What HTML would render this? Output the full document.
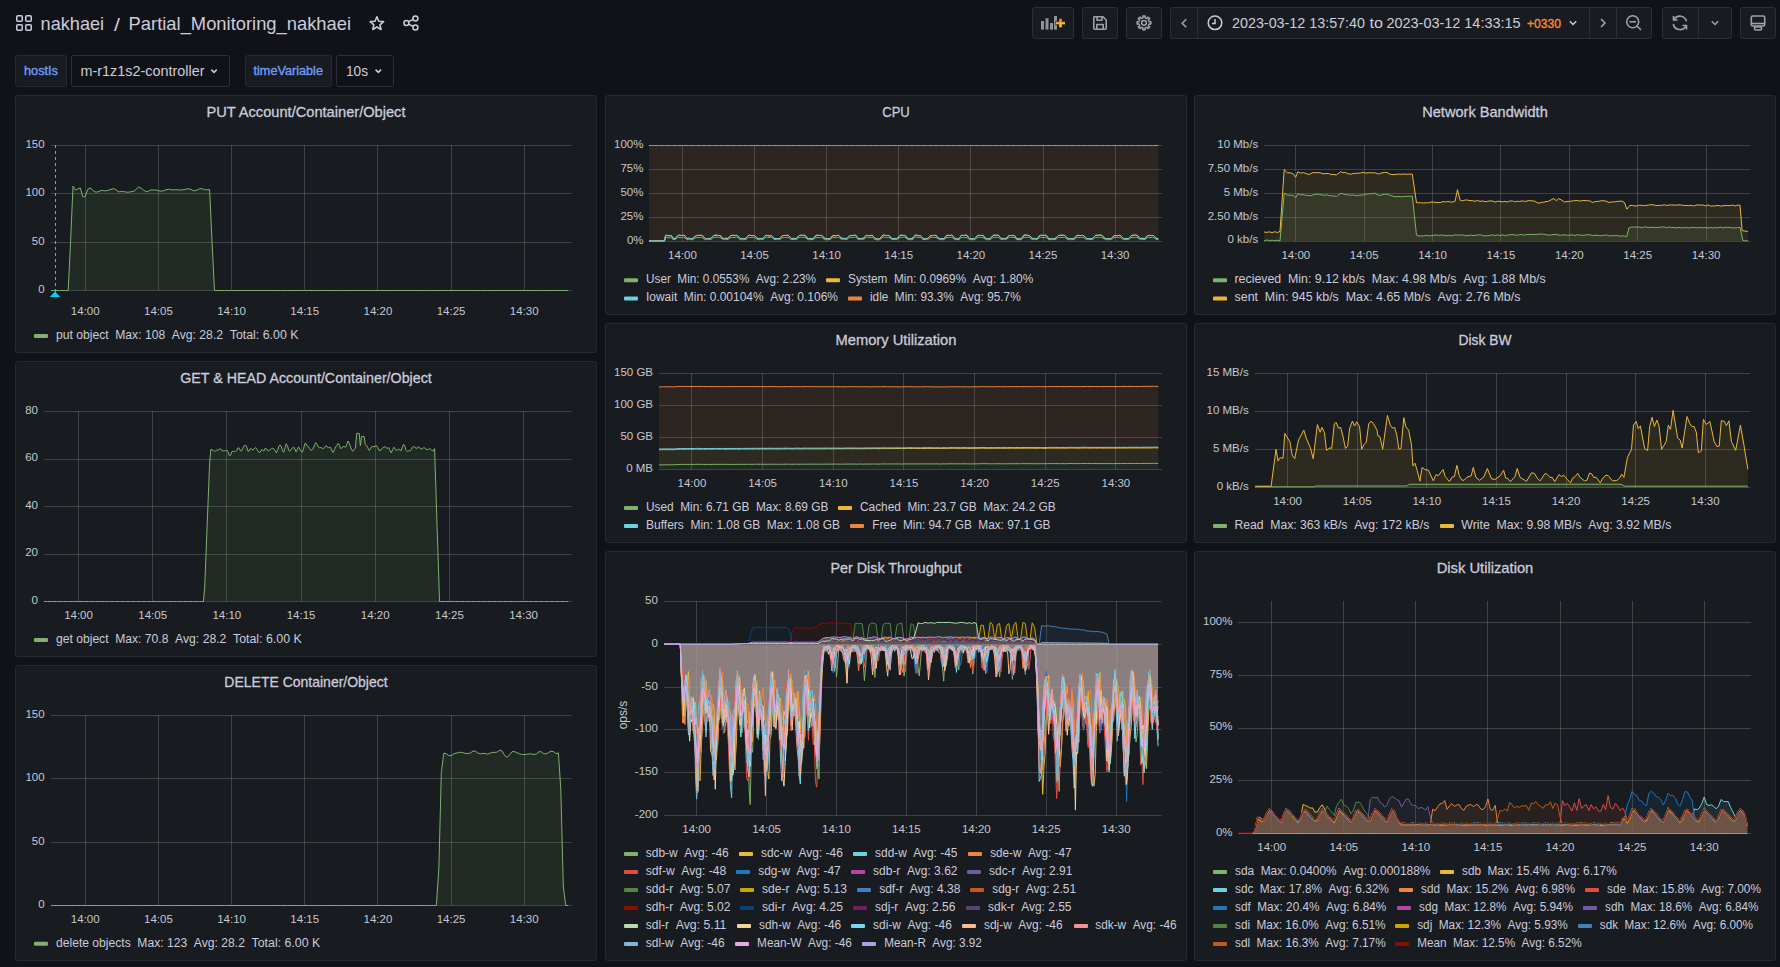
<!DOCTYPE html><html><head><meta charset="utf-8"><title>Partial_Monitoring_nakhaei - Grafana</title><style>html,body{margin:0;padding:0;background:#111217;overflow:hidden;width:1780px;height:967px}svg{display:block;font-family:"Liberation Sans",sans-serif}</style></head><body><svg width="1780" height="967" viewBox="0 0 1780 967" font-family="Liberation Sans, sans-serif"><rect x="0" y="0" width="1780" height="967" rx="0" fill="#111217"/><rect x="16.75" y="15.75" width="5.5" height="5.5" rx="1" fill="none" stroke="#ccccdc" stroke-width="1.5"/><rect x="25.75" y="15.75" width="5.5" height="5.5" rx="1" fill="none" stroke="#ccccdc" stroke-width="1.5"/><rect x="16.75" y="24.75" width="5.5" height="5.5" rx="1" fill="none" stroke="#ccccdc" stroke-width="1.5"/><rect x="25.75" y="24.75" width="5.5" height="5.5" rx="1" fill="none" stroke="#ccccdc" stroke-width="1.5"/><text x="40.60" y="30.00" font-size="18.5" fill="#ccccdc" text-anchor="start" textLength="63.50" lengthAdjust="spacingAndGlyphs">nakhaei</text><text x="114.00" y="31.30" font-size="18.5" fill="#ccccdc" text-anchor="start" textLength="6.00" lengthAdjust="spacingAndGlyphs">/</text><text x="128.60" y="30.00" font-size="18.5" fill="#ccccdc" text-anchor="start" textLength="222.50" lengthAdjust="spacingAndGlyphs">Partial_Monitoring_nakhaei</text><polygon points="376.90,16.80 378.78,21.21 383.56,21.64 379.94,24.79 381.01,29.46 376.90,27.00 372.79,29.46 373.86,24.79 370.24,21.64 375.02,21.21" fill="none" stroke="#ccccdc" stroke-width="1.6" stroke-linejoin="round"/><g fill="none" stroke="#ccccdc" stroke-width="1.5"><circle cx="415.4" cy="18.4" r="2.5"/><circle cx="406.4" cy="22.9" r="2.5"/><circle cx="415.4" cy="27.6" r="2.5"/><path d="M408.6 21.6 L413.2 19.4 M408.6 24.2 L413.2 26.5"/></g><rect x="15.5" y="55.5" width="51" height="31" rx="2" fill="#181b1f" stroke="#26292e" stroke-width="1"/><text x="24.00" y="75.00" font-size="12.5" fill="#6e9fff" text-anchor="start" textLength="34.00" lengthAdjust="spacingAndGlyphs" stroke="#6e9fff" stroke-width="0.35">hostIs</text><rect x="71.5" y="55.5" width="158" height="31" rx="2" fill="#111217" stroke="#2c2f35" stroke-width="1"/><text x="80.50" y="75.50" font-size="14" fill="#ccccdc" text-anchor="start" textLength="124.00" lengthAdjust="spacingAndGlyphs">m-r1z1s2-controller</text><path d="M211.25 69.62 L214.00 72.38 L216.75 69.62" fill="none" stroke="#ccccdc" stroke-width="1.5"/><rect x="245.5" y="55.5" width="86" height="31" rx="2" fill="#181b1f" stroke="#26292e" stroke-width="1"/><text x="253.50" y="75.00" font-size="12.5" fill="#6e9fff" text-anchor="start" textLength="69.50" lengthAdjust="spacingAndGlyphs" stroke="#6e9fff" stroke-width="0.35">timeVariable</text><rect x="336.5" y="55.5" width="57" height="31" rx="2" fill="#111217" stroke="#2c2f35" stroke-width="1"/><text x="346.00" y="75.50" font-size="14" fill="#ccccdc" text-anchor="start" textLength="22.00" lengthAdjust="spacingAndGlyphs">10s</text><path d="M375.55 69.62 L378.30 72.38 L381.05 69.62" fill="none" stroke="#ccccdc" stroke-width="1.5"/><rect x="1032.5" y="7.5" width="41" height="31" rx="2" fill="#181b1f" stroke="#2b2e34" stroke-width="1"/><rect x="1041" y="21" width="3" height="8.600000000000001" rx="0" fill="#8f949c"/><rect x="1045.5" y="18.3" width="3" height="11.3" rx="0" fill="#8f949c"/><rect x="1050" y="23" width="3" height="6.600000000000001" rx="0" fill="#8f949c"/><rect x="1054" y="16" width="3" height="13.600000000000001" rx="0" fill="#8f949c"/><defs><linearGradient id="pg" x1="0" y1="0" x2="0" y2="1"><stop offset="0" stop-color="#f37f3f"/><stop offset="0.5" stop-color="#f9a52b"/><stop offset="1" stop-color="#fdd315"/></linearGradient></defs><path d="M1060.5 18.2 V27.8 M1055.5 23 H1065.5" stroke="#181b1f" stroke-width="4.4"/><rect x="1059.2" y="18.7" width="2.6" height="8.6" fill="url(#pg)"/><rect x="1056" y="21.7" width="9" height="2.6" fill="url(#pg)"/><rect x="1082.5" y="7.5" width="35" height="31" rx="2" fill="#181b1f" stroke="#2b2e34" stroke-width="1"/><g fill="none" stroke="#9fa1a8" stroke-width="1.6" stroke-linejoin="round"><path d="M1094 16.8 H1103 L1106.2 20 V28.2 Q1106.2 29.2 1105.2 29.2 H1094.8 Q1093.8 29.2 1093.8 28.2 V17.8 Q1093.8 16.8 1094.8 16.8 Z"/><path d="M1097 17 V20.2 H1102 V17"/><path d="M1096.8 29 V24.5 H1103.2 V29"/></g><rect x="1126.5" y="7.5" width="35" height="31" rx="2" fill="#181b1f" stroke="#2b2e34" stroke-width="1"/><polygon points="1142.78,15.96 1145.22,15.96 1145.04,17.75 1146.87,18.51 1148.02,17.12 1149.73,18.83 1148.34,19.98 1149.10,21.81 1150.89,21.63 1150.89,24.07 1149.10,23.89 1148.34,25.72 1149.73,26.87 1148.02,28.58 1146.87,27.19 1145.04,27.95 1145.22,29.74 1142.78,29.74 1142.96,27.95 1141.13,27.19 1139.98,28.58 1138.27,26.87 1139.66,25.72 1138.90,23.89 1137.11,24.07 1137.11,21.63 1138.90,21.81 1139.66,19.98 1138.27,18.83 1139.98,17.12 1141.13,18.51 1142.96,17.75" fill="none" stroke="#9fa1a8" stroke-width="1.5" stroke-linejoin="round"/><circle cx="1144.0" cy="22.85" r="2.4" fill="none" stroke="#9fa1a8" stroke-width="1.5"/><rect x="1170.5" y="7.5" width="481" height="31" rx="2" fill="#181b1f" stroke="#2b2e34" stroke-width="1"/><path d="M1197.5 8 V38 M1589.5 8 V38 M1616.5 8 V38" stroke="#2b2e34" stroke-width="1"/><path d="M1186.2 19.2 L1182.2 23.2 L1186.2 27.2" fill="none" stroke="#9fa1a8" stroke-width="1.6"/><g fill="none" stroke="#ccccdc" stroke-width="1.5"><circle cx="1215" cy="22.8" r="6.8"/><path d="M1215 19 V23.5 H1212"/></g><text x="1232.00" y="28.00" font-size="14" fill="#ccccdc" text-anchor="start" textLength="133.00" lengthAdjust="spacingAndGlyphs">2023-03-12 13:57:40</text><text x="1369.50" y="28.00" font-size="14" fill="#ccccdc" text-anchor="start" textLength="13.50" lengthAdjust="spacingAndGlyphs">to</text><text x="1386.50" y="28.00" font-size="14" fill="#ccccdc" text-anchor="start" textLength="134.00" lengthAdjust="spacingAndGlyphs">2023-03-12 14:33:15</text><text x="1527.00" y="27.50" font-size="12.5" fill="#ff8833" text-anchor="start" textLength="34.00" lengthAdjust="spacingAndGlyphs" stroke="#ff8833" stroke-width="0.35">+0330</text><path d="M1569.75 21.18 L1573.00 24.43 L1576.25 21.18" fill="none" stroke="#ccccdc" stroke-width="1.5"/><path d="M1601 19 L1605 23 L1601 27" fill="none" stroke="#9fa1a8" stroke-width="1.6"/><g fill="none" stroke="#9fa1a8" stroke-width="1.6"><circle cx="1632.7" cy="21.8" r="6"/><path d="M1629.5 21.8 H1636"/><path d="M1637.2 26.3 L1641 30"/></g><rect x="1662.5" y="7.5" width="69" height="31" rx="2" fill="#181b1f" stroke="#2b2e34" stroke-width="1"/><path d="M1698.5 8 V38" stroke="#2b2e34" stroke-width="1"/><g fill="none" stroke="#9fa1a8" stroke-width="1.6"><path d="M1674 19.5 A6.8 6.8 0 0 1 1686.5 21.5"/><path d="M1686 26 A6.8 6.8 0 0 1 1673.3 24"/><path d="M1673.5 16 V20 H1677.5" /><path d="M1686.5 29.5 V25.5 H1682.5"/></g><path d="M1711.75 21.18 L1715.00 24.43 L1718.25 21.18" fill="none" stroke="#9fa1a8" stroke-width="1.5"/><rect x="1740.5" y="7.5" width="35" height="31" rx="2" fill="#181b1f" stroke="#2b2e34" stroke-width="1"/><g fill="none" stroke="#9fa1a8" stroke-width="1.6"><rect x="1751.3" y="16" width="13.4" height="10" rx="1.5"/><path d="M1751.3 23.5 H1764.7"/><rect x="1754.5" y="27" width="7" height="3" rx="1"/></g><rect x="15.5" y="95.5" width="581" height="257" rx="2" fill="#181b1f" stroke="#26292e" stroke-width="1"/><text x="306.00" y="117.00" font-size="15" fill="#ccccdc" text-anchor="middle" textLength="199.00" lengthAdjust="spacingAndGlyphs" stroke="#ccccdc" stroke-width="0.3">PUT Account/Container/Object</text><rect x="15.5" y="361.5" width="581" height="295" rx="2" fill="#181b1f" stroke="#26292e" stroke-width="1"/><text x="306.00" y="383.00" font-size="15" fill="#ccccdc" text-anchor="middle" textLength="251.50" lengthAdjust="spacingAndGlyphs" stroke="#ccccdc" stroke-width="0.3">GET &amp; HEAD Account/Container/Object</text><rect x="15.5" y="665.5" width="581" height="295" rx="2" fill="#181b1f" stroke="#26292e" stroke-width="1"/><text x="306.00" y="687.00" font-size="15" fill="#ccccdc" text-anchor="middle" textLength="163.30" lengthAdjust="spacingAndGlyphs" stroke="#ccccdc" stroke-width="0.3">DELETE Container/Object</text><rect x="605.5" y="95.5" width="581" height="219" rx="2" fill="#181b1f" stroke="#26292e" stroke-width="1"/><text x="896.00" y="117.00" font-size="15" fill="#ccccdc" text-anchor="middle" textLength="27.50" lengthAdjust="spacingAndGlyphs" stroke="#ccccdc" stroke-width="0.3">CPU</text><rect x="605.5" y="323.5" width="581" height="219" rx="2" fill="#181b1f" stroke="#26292e" stroke-width="1"/><text x="896.00" y="345.00" font-size="15" fill="#ccccdc" text-anchor="middle" textLength="121.00" lengthAdjust="spacingAndGlyphs" stroke="#ccccdc" stroke-width="0.3">Memory Utilization</text><rect x="605.5" y="551.5" width="581" height="409" rx="2" fill="#181b1f" stroke="#26292e" stroke-width="1"/><text x="896.00" y="573.00" font-size="15" fill="#ccccdc" text-anchor="middle" textLength="131.00" lengthAdjust="spacingAndGlyphs" stroke="#ccccdc" stroke-width="0.3">Per Disk Throughput</text><rect x="1194.5" y="95.5" width="581" height="219" rx="2" fill="#181b1f" stroke="#26292e" stroke-width="1"/><text x="1485.00" y="117.00" font-size="15" fill="#ccccdc" text-anchor="middle" textLength="125.50" lengthAdjust="spacingAndGlyphs" stroke="#ccccdc" stroke-width="0.3">Network Bandwidth</text><rect x="1194.5" y="323.5" width="581" height="219" rx="2" fill="#181b1f" stroke="#26292e" stroke-width="1"/><text x="1485.00" y="345.00" font-size="15" fill="#ccccdc" text-anchor="middle" textLength="53.00" lengthAdjust="spacingAndGlyphs" stroke="#ccccdc" stroke-width="0.3">Disk BW</text><rect x="1194.5" y="551.5" width="581" height="409" rx="2" fill="#181b1f" stroke="#26292e" stroke-width="1"/><text x="1485.00" y="573.00" font-size="15" fill="#ccccdc" text-anchor="middle" textLength="96.60" lengthAdjust="spacingAndGlyphs" stroke="#ccccdc" stroke-width="0.3">Disk Utilization</text><path d="M51.1 290.5H571.8M51.1 242.5H571.8M51.1 193.5H571.8M51.1 145.5H571.8M85.5 145.0V290.5M158.5 145.0V290.5M231.5 145.0V290.5M304.5 145.0V290.5M377.5 145.0V290.5M451.5 145.0V290.5M524.5 145.0V290.5" stroke="#9b9b9b" stroke-opacity="0.3" stroke-width="1" fill="none"/><text x="44.60" y="292.90" font-size="11.5" fill="#c7c8d0" text-anchor="end">0</text><text x="44.60" y="244.57" font-size="11.5" fill="#c7c8d0" text-anchor="end">50</text><text x="44.60" y="196.23" font-size="11.5" fill="#c7c8d0" text-anchor="end">100</text><text x="44.60" y="147.90" font-size="11.5" fill="#c7c8d0" text-anchor="end">150</text><text x="85.24" y="315.20" font-size="11.5" fill="#c7c8d0" text-anchor="middle">14:00</text><text x="158.41" y="315.20" font-size="11.5" fill="#c7c8d0" text-anchor="middle">14:05</text><text x="231.58" y="315.20" font-size="11.5" fill="#c7c8d0" text-anchor="middle">14:10</text><text x="304.74" y="315.20" font-size="11.5" fill="#c7c8d0" text-anchor="middle">14:15</text><text x="377.91" y="315.20" font-size="11.5" fill="#c7c8d0" text-anchor="middle">14:20</text><text x="451.08" y="315.20" font-size="11.5" fill="#c7c8d0" text-anchor="middle">14:25</text><text x="524.24" y="315.20" font-size="11.5" fill="#c7c8d0" text-anchor="middle">14:30</text><clipPath id="c1"><rect x="51.1" y="144.0" width="520.7" height="147.5"/></clipPath><path d="M51.1 290.5l2.4 0 2.5 0 2.4 0 2.5 0 2.4 0 2.4 0 2.5 0 2.4-49.3 2.4-55.1 2.5 4 2.4-1.3 2.5-.8 2.4 8.7 2.4 0 2.5-7.3 2.4-1.4 2.5 1.8 2.4 2.2 2.4 0 2.5-1.1 2.4-.5 2.5 .4 2.4-.2 2.4-.8 2.5-.8 2.4-.2 2.4 1.8 2.5 1.3 2.4-.5 2.5 .3 2.4 .5 2.4-.1 2.5-.5 2.4-.4 2.5-2.3 2.4-2 2.4 1.4 2.5 2 2.4 1.3 2.5-.5 2.4-1.2 2.4 .1 2.5 .1 2.4 .6 2.4 .5 2.5-.4 2.4-.8 2.5-.8 2.4 .4 2.4 .4 2.5-.4 2.4 .2 2.5 .3 2.4-.3 2.4-.4 2.5-.6 2.4 .2 2.5 1.4 2.4 .4 2.4-1 2.5-1.1 2.4 0 2.4 1 2.5 .1 2.4-.3 2.5 53.3 2.4 47.7 2.4 0 2.5 0 2.4 0 2.5 0 2.4 0 2.4 0 2.5 0 2.4 0 2.5 0 2.4 0 2.4 0 2.5 0 2.4 0 2.4 0 2.5 0 2.4 0 2.5 0 2.4 0 2.4 0 2.5 0 2.4 0 2.5 0 2.4 0 2.4 0 2.5 0 2.4 0 2.5 0 2.4 0 2.4 0 2.5 0 2.4 0 2.4 0 2.5 0 2.4 0 2.5 0 2.4 0 2.4 0 2.5 0 2.4 0 2.5 0 2.4 0 2.4 0 2.5 0 2.4 0 2.5 0 2.4 0 2.4 0 2.5 0 2.4 0 2.4 0 2.5 0 2.4 0 2.5 0 2.4 0 2.4 0 2.5 0 2.4 0 2.5 0 2.4 0 2.4 0 2.5 0 2.4 0 2.5 0 2.4 0 2.4 0 2.5 0 2.4 0 2.4 0 2.5 0 2.4 0 2.5 0 2.4 0 2.4 0 2.5 0 2.4 0 2.5 0 2.4 0 2.4 0 2.5 0 2.4 0 2.5 0 2.4 0 2.4 0 2.5 0 2.4 0 2.4 0 2.5 0 2.4 0 2.5 0 2.4 0 2.4 0 2.5 0 2.4 0 2.5 0 2.4 0 2.4 0 2.5 0 2.4 0 2.5 0 2.4 0 2.4 0 2.5 0 2.4 0 2.4 0 2.5 0 2.4 0 2.5 0 2.4 0 2.4 0 2.5 0 2.4 0 2.5 0 2.4 0 2.4 0 2.5 0 2.4 0 2.5 0 2.4 0 2.4 0 2.5 0 2.4 0 2.4 0 2.5 0 2.4 0 2.5 0 2.4 0 2.4 0 2.5 0 2.4 0 2.5 0 2.4 0 2.4 0 2.5 0 2.4 0 2.5 0 2.4 0 2.4 0 2.5 0 2.4 0 2.4 0 2.5 0 2.4 0 2.5 0 2.4 0 2.4 0 0 0-517 0Z" fill="#7EB26D" fill-opacity="0.1" clip-path="url(#c1)"/><path d="M51.1 290.5l2.4 0 2.5 0 2.4 0 2.5 0 2.4 0 2.4 0 2.5 0 2.4-49.3 2.4-55.1 2.5 4 2.4-1.3 2.5-.8 2.4 8.7 2.4 0 2.5-7.3 2.4-1.4 2.5 1.8 2.4 2.2 2.4 0 2.5-1.1 2.4-.5 2.5 .4 2.4-.2 2.4-.8 2.5-.8 2.4-.2 2.4 1.8 2.5 1.3 2.4-.5 2.5 .3 2.4 .5 2.4-.1 2.5-.5 2.4-.4 2.5-2.3 2.4-2 2.4 1.4 2.5 2 2.4 1.3 2.5-.5 2.4-1.2 2.4 .1 2.5 .1 2.4 .6 2.4 .5 2.5-.4 2.4-.8 2.5-.8 2.4 .4 2.4 .4 2.5-.4 2.4 .2 2.5 .3 2.4-.3 2.4-.4 2.5-.6 2.4 .2 2.5 1.4 2.4 .4 2.4-1 2.5-1.1 2.4 0 2.4 1 2.5 .1 2.4-.3 2.5 53.3 2.4 47.7 2.4 0 2.5 0 2.4 0 2.5 0 2.4 0 2.4 0 2.5 0 2.4 0 2.5 0 2.4 0 2.4 0 2.5 0 2.4 0 2.4 0 2.5 0 2.4 0 2.5 0 2.4 0 2.4 0 2.5 0 2.4 0 2.5 0 2.4 0 2.4 0 2.5 0 2.4 0 2.5 0 2.4 0 2.4 0 2.5 0 2.4 0 2.4 0 2.5 0 2.4 0 2.5 0 2.4 0 2.4 0 2.5 0 2.4 0 2.5 0 2.4 0 2.4 0 2.5 0 2.4 0 2.5 0 2.4 0 2.4 0 2.5 0 2.4 0 2.4 0 2.5 0 2.4 0 2.5 0 2.4 0 2.4 0 2.5 0 2.4 0 2.5 0 2.4 0 2.4 0 2.5 0 2.4 0 2.5 0 2.4 0 2.4 0 2.5 0 2.4 0 2.4 0 2.5 0 2.4 0 2.5 0 2.4 0 2.4 0 2.5 0 2.4 0 2.5 0 2.4 0 2.4 0 2.5 0 2.4 0 2.5 0 2.4 0 2.4 0 2.5 0 2.4 0 2.4 0 2.5 0 2.4 0 2.5 0 2.4 0 2.4 0 2.5 0 2.4 0 2.5 0 2.4 0 2.4 0 2.5 0 2.4 0 2.5 0 2.4 0 2.4 0 2.5 0 2.4 0 2.4 0 2.5 0 2.4 0 2.5 0 2.4 0 2.4 0 2.5 0 2.4 0 2.5 0 2.4 0 2.4 0 2.5 0 2.4 0 2.5 0 2.4 0 2.4 0 2.5 0 2.4 0 2.4 0 2.5 0 2.4 0 2.5 0 2.4 0 2.4 0 2.5 0 2.4 0 2.5 0 2.4 0 2.4 0 2.5 0 2.4 0 2.5 0 2.4 0 2.4 0 2.5 0 2.4 0 2.4 0 2.5 0 2.4 0 2.5 0 2.4 0 2.4 0" stroke="#7EB26D" fill="none" clip-path="url(#c1)"/><path d="M55.5 145V292" stroke="#00d3ff" stroke-width="1" stroke-dasharray="3,3"/><polygon points="55,291.5 60.2,297 49.8,297" fill="#00d3ff"/><rect x="34" y="334" width="14" height="4" rx="1" fill="#7EB26D"/><text x="56.00" y="339.00" font-size="12" fill="#ccccdc" text-anchor="start" textLength="52.59" lengthAdjust="spacingAndGlyphs">put object</text><text x="115.26" y="339.00" font-size="12" fill="#ccccdc" text-anchor="start" textLength="49.89" lengthAdjust="spacingAndGlyphs">Max: 108</text><text x="171.82" y="339.00" font-size="12" fill="#ccccdc" text-anchor="start" textLength="51.24" lengthAdjust="spacingAndGlyphs">Avg: 28.2</text><text x="229.73" y="339.00" font-size="12" fill="#ccccdc" text-anchor="start" textLength="68.77" lengthAdjust="spacingAndGlyphs">Total: 6.00 K</text><path d="M43.9 601.5H571.8M43.9 554.5H571.8M43.9 506.5H571.8M43.9 459.5H571.8M43.9 411.5H571.8M78.5 411.0V601.5M152.5 411.0V601.5M226.5 411.0V601.5M301.5 411.0V601.5M375.5 411.0V601.5M449.5 411.0V601.5M523.5 411.0V601.5" stroke="#9b9b9b" stroke-opacity="0.3" stroke-width="1" fill="none"/><text x="38.00" y="603.90" font-size="11.5" fill="#c7c8d0" text-anchor="end">0</text><text x="38.00" y="556.40" font-size="11.5" fill="#c7c8d0" text-anchor="end">20</text><text x="38.00" y="508.90" font-size="11.5" fill="#c7c8d0" text-anchor="end">40</text><text x="38.00" y="461.40" font-size="11.5" fill="#c7c8d0" text-anchor="end">60</text><text x="38.00" y="413.90" font-size="11.5" fill="#c7c8d0" text-anchor="end">80</text><text x="78.52" y="619.20" font-size="11.5" fill="#c7c8d0" text-anchor="middle">14:00</text><text x="152.69" y="619.20" font-size="11.5" fill="#c7c8d0" text-anchor="middle">14:05</text><text x="226.87" y="619.20" font-size="11.5" fill="#c7c8d0" text-anchor="middle">14:10</text><text x="301.05" y="619.20" font-size="11.5" fill="#c7c8d0" text-anchor="middle">14:15</text><text x="375.23" y="619.20" font-size="11.5" fill="#c7c8d0" text-anchor="middle">14:20</text><text x="449.41" y="619.20" font-size="11.5" fill="#c7c8d0" text-anchor="middle">14:25</text><text x="523.58" y="619.20" font-size="11.5" fill="#c7c8d0" text-anchor="middle">14:30</text><clipPath id="c2"><rect x="43.9" y="410.0" width="527.9" height="192.5"/></clipPath><path d="M43.9 601.5l1.2 0 1.3 0 1.2 0 1.2 0 1.3 0 1.2 0 1.3 0 1.2 0 1.2 0 1.3 0 1.2 0 1.2 0 1.3 0 1.2 0 1.2 0 1.3 0 1.2 0 1.3 0 1.2 0 1.2 0 1.3 0 1.2 0 1.2 0 1.3 0 1.2 0 1.2 0 1.3 0 1.2 0 1.3 0 1.2 0 1.2 0 1.3 0 1.2 0 1.2 0 1.3 0 1.2 0 1.2 0 1.3 0 1.2 0 1.3 0 1.2 0 1.2 0 1.3 0 1.2 0 1.2 0 1.3 0 1.2 0 1.2 0 1.3 0 1.2 0 1.3 0 1.2 0 1.2 0 1.3 0 1.2 0 1.2 0 1.3 0 1.2 0 1.2 0 1.3 0 1.2 0 1.3 0 1.2 0 1.2 0 1.3 0 1.2 0 1.2 0 1.3 0 1.2 0 1.2 0 1.3 0 1.2 0 1.2 0 1.3 0 1.2 0 1.3 0 1.2 0 1.2 0 1.3 0 1.2 0 1.2 0 1.3 0 1.2 0 1.2 0 1.3 0 1.2 0 1.3 0 1.2 0 1.2 0 1.3 0 1.2 0 1.2 0 1.3 0 1.2 0 1.2 0 1.3 0 1.2 0 1.3 0 1.2 0 1.2 0 1.3 0 1.2 0 1.2 0 1.3 0 1.2 0 1.2 0 1.3 0 1.2 0 1.3 0 1.2 0 1.2 0 1.3 0 1.2 0 1.2 0 1.3 0 1.2 0 1.2 0 1.3 0 1.2 0 1.3 0 1.2 0 1.2 0 1.3 0 1.2 0 1.2 0 1.3 0 1.2 0 1.2 0 1.3 0 1.2-12.6 1.3-31.6 1.2-31 1.2-30.1 1.3-32.6 1.2-14.2 1.2 .4 1.3 .5 1.2 1 1.2-.6 1.3-.9 1.2 .3 1.3-1.2 1.2 0 1.2 1.6 1.3 .5 1.2-.2 1.2-.4 1.3-.2 1.2 1.8 1.2 3.6 1.3-.4 1.2-3.5 1.3-.6 1.2 .4 1.2 0 1.3-1.1 1.2-2.7 1.2 .5 1.3 2.6 1.2-.1 1.2-2.7 1.3-2.2 1.2-.8 1.3 1.9 1.2 4.1 1.2 0 1.3-2.6 1.2 .7 1.2 .9 1.3-1.1 1.2-1.3 1.2 .7 1.3 2.5 1.2 1.7 1.3-.5 1.2-2.6 1.2 .6 1.3 .9 1.2-2.7 1.2 .3 1.3 2.2 1.2 0 1.2-1 1.3-1.2 1.2-.2 1.3 .4 1.2 1.6 1.2 2.6 1.3-2.4 1.2-4.2 1.2-1.4 1.3 1.7 1.2 4.1 1.2 1.6 1.3-4.4 1.2-4.2 1.3 2.2 1.2 4.5 1.2 .9 1.3-2 1.2-1.4 1.2-.9 1.3 2 1.2 2.9 1.2-2.6 1.3-2.4 1.2 2.2 1.3 2.3 1.2 .7 1.2-3 1.3-5.5 1.2 0 1.2 2.6 1.3 .5 1.2 2.1 1.2 1.5 1.3-.6 1.2-1.6 1.2-3.3 1.3-2.1 1.2 1.9 1.3 2.5 1.2 .6 1.2-.1 1.3 .4 1.2 .7 1.2-1.1 1.3-1.9 1.2 .6 1.2 1.6 1.3-.5 1.2 .1 1.3 3.2 1.2 1.8 1.2-2.8 1.3-2.8 1.2-1.6 1.2-2 1.3 1.9 1.2 3.4 1.2-.5 1.3-1.6 1.2 .1 1.3 .7 1.2-2.9 1.2-3.4 1.3 2.2 1.2 3.8 1.2 3 1.3 1.2 1.2-1.8 1.2-1.1 1.3-14.9 1.2 0 1.3 0 1.2 12.3 1.2-9.3 1.3 0 1.2 0 1.2 8.1 1.3 .8 1.2 2.4 1.2 2.6 1.3-.8 1.2-2.7 1.3-.3 1.2 .4 1.2-1 1.3-.3 1.2 1.8 1.2 2.8 1.3 .5 1.2-1.9 1.2-.8 1.3-.8 1.2-.7 1.3 1.6 1.2 .1 1.2-.6 1.3 3.1 1.2 2.2 1.2-3 1.3-2.6 1.2 1 1.2 2.1 1.3-.2 1.2-1.4 1.3 1.6 1.2 .3 1.2-3.8 1.3-2.6 1.2 2.1 1.2 3.9 1.3 1.1 1.2-.6 1.2 0 1.3-.9 1.2-2.8 1.3-.6 1.2 .9 1.2 .6 1.3 .3 1.2-1.7 1.2 .9 1.3 1.9 1.2-.7 1.2-.9 1.3 .1 1.2 1.1 1.3 .8 1.2-.5 1.2-.7 1.3 .7 1.2 1.5 1.2 .1 1.3-2.4 1.2 37.7 1.2 38.7 1.3 37.9 1.2 38.7 1.3 0 1.2 0 1.2 0 1.3 0 1.2 0 1.2 0 1.3 0 1.2 0 1.2 0 1.3 0 1.2 0 1.3 0 1.2 0 1.2 0 1.3 0 1.2 0 1.2 0 1.3 0 1.2 0 1.2 0 1.3 0 1.2 0 1.3 0 1.2 0 1.2 0 1.3 0 1.2 0 1.2 0 1.3 0 1.2 0 1.2 0 1.3 0 1.2 0 1.3 0 1.2 0 1.2 0 1.3 0 1.2 0 1.2 0 1.3 0 1.2 0 1.2 0 1.3 0 1.2 0 1.2 0 1.3 0 1.2 0 1.3 0 1.2 0 1.2 0 1.3 0 1.2 0 1.2 0 1.3 0 1.2 0 1.2 0 1.3 0 1.2 0 1.3 0 1.2 0 1.2 0 1.3 0 1.2 0 1.2 0 1.3 0 1.2 0 1.2 0 1.3 0 1.2 0 1.3 0 1.2 0 1.2 0 1.3 0 1.2 0 1.2 0 1.3 0 1.2 0 1.2 0 1.3 0 1.2 0 1.3 0 1.2 0 1.2 0 1.3 0 1.2 0 1.2 0 1.3 0 1.2 0 1.2 0 1.3 0 1.2 0 1.3 0 1.2 0 1.2 0 1.3 0 1.2 0 1.2 0 1.3 0 1.2 0 1.2 0 1.3 0 1.2 0 1.3 0 1.2 0 0 0-524.2 0Z" fill="#7EB26D" fill-opacity="0.1" clip-path="url(#c2)"/><path d="M43.9 601.5l1.2 0 1.3 0 1.2 0 1.2 0 1.3 0 1.2 0 1.3 0 1.2 0 1.2 0 1.3 0 1.2 0 1.2 0 1.3 0 1.2 0 1.2 0 1.3 0 1.2 0 1.3 0 1.2 0 1.2 0 1.3 0 1.2 0 1.2 0 1.3 0 1.2 0 1.2 0 1.3 0 1.2 0 1.3 0 1.2 0 1.2 0 1.3 0 1.2 0 1.2 0 1.3 0 1.2 0 1.2 0 1.3 0 1.2 0 1.3 0 1.2 0 1.2 0 1.3 0 1.2 0 1.2 0 1.3 0 1.2 0 1.2 0 1.3 0 1.2 0 1.3 0 1.2 0 1.2 0 1.3 0 1.2 0 1.2 0 1.3 0 1.2 0 1.2 0 1.3 0 1.2 0 1.3 0 1.2 0 1.2 0 1.3 0 1.2 0 1.2 0 1.3 0 1.2 0 1.2 0 1.3 0 1.2 0 1.2 0 1.3 0 1.2 0 1.3 0 1.2 0 1.2 0 1.3 0 1.2 0 1.2 0 1.3 0 1.2 0 1.2 0 1.3 0 1.2 0 1.3 0 1.2 0 1.2 0 1.3 0 1.2 0 1.2 0 1.3 0 1.2 0 1.2 0 1.3 0 1.2 0 1.3 0 1.2 0 1.2 0 1.3 0 1.2 0 1.2 0 1.3 0 1.2 0 1.2 0 1.3 0 1.2 0 1.3 0 1.2 0 1.2 0 1.3 0 1.2 0 1.2 0 1.3 0 1.2 0 1.2 0 1.3 0 1.2 0 1.3 0 1.2 0 1.2 0 1.3 0 1.2 0 1.2 0 1.3 0 1.2 0 1.2 0 1.3 0 1.2-12.6 1.3-31.6 1.2-31 1.2-30.1 1.3-32.6 1.2-14.2 1.2 .4 1.3 .5 1.2 1 1.2-.6 1.3-.9 1.2 .3 1.3-1.2 1.2 0 1.2 1.6 1.3 .5 1.2-.2 1.2-.4 1.3-.2 1.2 1.8 1.2 3.6 1.3-.4 1.2-3.5 1.3-.6 1.2 .4 1.2 0 1.3-1.1 1.2-2.7 1.2 .5 1.3 2.6 1.2-.1 1.2-2.7 1.3-2.2 1.2-.8 1.3 1.9 1.2 4.1 1.2 0 1.3-2.6 1.2 .7 1.2 .9 1.3-1.1 1.2-1.3 1.2 .7 1.3 2.5 1.2 1.7 1.3-.5 1.2-2.6 1.2 .6 1.3 .9 1.2-2.7 1.2 .3 1.3 2.2 1.2 0 1.2-1 1.3-1.2 1.2-.2 1.3 .4 1.2 1.6 1.2 2.6 1.3-2.4 1.2-4.2 1.2-1.4 1.3 1.7 1.2 4.1 1.2 1.6 1.3-4.4 1.2-4.2 1.3 2.2 1.2 4.5 1.2 .9 1.3-2 1.2-1.4 1.2-.9 1.3 2 1.2 2.9 1.2-2.6 1.3-2.4 1.2 2.2 1.3 2.3 1.2 .7 1.2-3 1.3-5.5 1.2 0 1.2 2.6 1.3 .5 1.2 2.1 1.2 1.5 1.3-.6 1.2-1.6 1.2-3.3 1.3-2.1 1.2 1.9 1.3 2.5 1.2 .6 1.2-.1 1.3 .4 1.2 .7 1.2-1.1 1.3-1.9 1.2 .6 1.2 1.6 1.3-.5 1.2 .1 1.3 3.2 1.2 1.8 1.2-2.8 1.3-2.8 1.2-1.6 1.2-2 1.3 1.9 1.2 3.4 1.2-.5 1.3-1.6 1.2 .1 1.3 .7 1.2-2.9 1.2-3.4 1.3 2.2 1.2 3.8 1.2 3 1.3 1.2 1.2-1.8 1.2-1.1 1.3-14.9 1.2 0 1.3 0 1.2 12.3 1.2-9.3 1.3 0 1.2 0 1.2 8.1 1.3 .8 1.2 2.4 1.2 2.6 1.3-.8 1.2-2.7 1.3-.3 1.2 .4 1.2-1 1.3-.3 1.2 1.8 1.2 2.8 1.3 .5 1.2-1.9 1.2-.8 1.3-.8 1.2-.7 1.3 1.6 1.2 .1 1.2-.6 1.3 3.1 1.2 2.2 1.2-3 1.3-2.6 1.2 1 1.2 2.1 1.3-.2 1.2-1.4 1.3 1.6 1.2 .3 1.2-3.8 1.3-2.6 1.2 2.1 1.2 3.9 1.3 1.1 1.2-.6 1.2 0 1.3-.9 1.2-2.8 1.3-.6 1.2 .9 1.2 .6 1.3 .3 1.2-1.7 1.2 .9 1.3 1.9 1.2-.7 1.2-.9 1.3 .1 1.2 1.1 1.3 .8 1.2-.5 1.2-.7 1.3 .7 1.2 1.5 1.2 .1 1.3-2.4 1.2 37.7 1.2 38.7 1.3 37.9 1.2 38.7 1.3 0 1.2 0 1.2 0 1.3 0 1.2 0 1.2 0 1.3 0 1.2 0 1.2 0 1.3 0 1.2 0 1.3 0 1.2 0 1.2 0 1.3 0 1.2 0 1.2 0 1.3 0 1.2 0 1.2 0 1.3 0 1.2 0 1.3 0 1.2 0 1.2 0 1.3 0 1.2 0 1.2 0 1.3 0 1.2 0 1.2 0 1.3 0 1.2 0 1.3 0 1.2 0 1.2 0 1.3 0 1.2 0 1.2 0 1.3 0 1.2 0 1.2 0 1.3 0 1.2 0 1.2 0 1.3 0 1.2 0 1.3 0 1.2 0 1.2 0 1.3 0 1.2 0 1.2 0 1.3 0 1.2 0 1.2 0 1.3 0 1.2 0 1.3 0 1.2 0 1.2 0 1.3 0 1.2 0 1.2 0 1.3 0 1.2 0 1.2 0 1.3 0 1.2 0 1.3 0 1.2 0 1.2 0 1.3 0 1.2 0 1.2 0 1.3 0 1.2 0 1.2 0 1.3 0 1.2 0 1.3 0 1.2 0 1.2 0 1.3 0 1.2 0 1.2 0 1.3 0 1.2 0 1.2 0 1.3 0 1.2 0 1.3 0 1.2 0 1.2 0 1.3 0 1.2 0 1.2 0 1.3 0 1.2 0 1.2 0 1.3 0 1.2 0 1.3 0 1.2 0" stroke="#7EB26D" fill="none" clip-path="url(#c2)"/><rect x="34" y="638.1" width="14" height="4" rx="1" fill="#7EB26D"/><text x="56.00" y="643.10" font-size="12" fill="#ccccdc" text-anchor="start" textLength="52.56" lengthAdjust="spacingAndGlyphs">get object</text><text x="115.22" y="643.10" font-size="12" fill="#ccccdc" text-anchor="start" textLength="53.22" lengthAdjust="spacingAndGlyphs">Max: 70.8</text><text x="175.11" y="643.10" font-size="12" fill="#ccccdc" text-anchor="start" textLength="51.21" lengthAdjust="spacingAndGlyphs">Avg: 28.2</text><text x="232.98" y="643.10" font-size="12" fill="#ccccdc" text-anchor="start" textLength="68.72" lengthAdjust="spacingAndGlyphs">Total: 6.00 K</text><path d="M51.1 905.5H571.8M51.1 842.5H571.8M51.1 778.5H571.8M51.1 715.5H571.8M85.5 715.0V905.5M158.5 715.0V905.5M231.5 715.0V905.5M304.5 715.0V905.5M377.5 715.0V905.5M451.5 715.0V905.5M524.5 715.0V905.5" stroke="#9b9b9b" stroke-opacity="0.3" stroke-width="1" fill="none"/><text x="44.60" y="907.90" font-size="11.5" fill="#c7c8d0" text-anchor="end">0</text><text x="44.60" y="844.57" font-size="11.5" fill="#c7c8d0" text-anchor="end">50</text><text x="44.60" y="781.23" font-size="11.5" fill="#c7c8d0" text-anchor="end">100</text><text x="44.60" y="717.90" font-size="11.5" fill="#c7c8d0" text-anchor="end">150</text><text x="85.24" y="923.20" font-size="11.5" fill="#c7c8d0" text-anchor="middle">14:00</text><text x="158.41" y="923.20" font-size="11.5" fill="#c7c8d0" text-anchor="middle">14:05</text><text x="231.58" y="923.20" font-size="11.5" fill="#c7c8d0" text-anchor="middle">14:10</text><text x="304.74" y="923.20" font-size="11.5" fill="#c7c8d0" text-anchor="middle">14:15</text><text x="377.91" y="923.20" font-size="11.5" fill="#c7c8d0" text-anchor="middle">14:20</text><text x="451.08" y="923.20" font-size="11.5" fill="#c7c8d0" text-anchor="middle">14:25</text><text x="524.24" y="923.20" font-size="11.5" fill="#c7c8d0" text-anchor="middle">14:30</text><clipPath id="c3"><rect x="51.1" y="714.0" width="520.7" height="192.5"/></clipPath><path d="M51.1 905.5l2.4 0 2.5 0 2.4 0 2.5 0 2.4 0 2.4 0 2.5 0 2.4 0 2.4 0 2.5 0 2.4 0 2.5 0 2.4 0 2.4 0 2.5 0 2.4 0 2.5 0 2.4 0 2.4 0 2.5 0 2.4 0 2.5 0 2.4 0 2.4 0 2.5 0 2.4 0 2.4 0 2.5 0 2.4 0 2.5 0 2.4 0 2.4 0 2.5 0 2.4 0 2.5 0 2.4 0 2.4 0 2.5 0 2.4 0 2.5 0 2.4 0 2.4 0 2.5 0 2.4 0 2.4 0 2.5 0 2.4 0 2.5 0 2.4 0 2.4 0 2.5 0 2.4 0 2.5 0 2.4 0 2.4 0 2.5 0 2.4 0 2.5 0 2.4 0 2.4 0 2.5 0 2.4 0 2.4 0 2.5 0 2.4 0 2.5 0 2.4 0 2.4 0 2.5 0 2.4 0 2.5 0 2.4 0 2.4 0 2.5 0 2.4 0 2.5 0 2.4 0 2.4 0 2.5 0 2.4 0 2.4 0 2.5 0 2.4 0 2.5 0 2.4 0 2.4 0 2.5 0 2.4 0 2.5 0 2.4 0 2.4 0 2.5 0 2.4 0 2.5 0 2.4 0 2.4 0 2.5 0 2.4 0 2.4 0 2.5 0 2.4 0 2.5 0 2.4 0 2.4 0 2.5 0 2.4 0 2.5 0 2.4 0 2.4 0 2.5 0 2.4 0 2.5 0 2.4 0 2.4 0 2.5 0 2.4 0 2.4 0 2.5 0 2.4 0 2.5 0 2.4 0 2.4 0 2.5 0 2.4 0 2.5 0 2.4 0 2.4 0 2.5 0 2.4 0 2.5 0 2.4 0 2.4 0 2.5 0 2.4 0 2.4 0 2.5 0 2.4 0 2.5 0 2.4 0 2.4 0 2.5 0 2.4 0 2.5 0 2.4 0 2.4 0 2.5 0 2.4 0 2.5 0 2.4 0 2.4 0 2.5 0 2.4 0 2.4 0 2.5 0 2.4 0 2.5 0 2.4 0 2.4 0 2.5-38.1 2.4-94.7 2.5-19.5 2.4 .4 2.4 1.9 2.5 .2 2.4-1.8 2.5-.8 2.4-.4 2.4-.5 2.5 .6 2.4 .7 2.4 0 2.5-.6 2.4-1.8 2.5 0 2.4 2 2.4 .8 2.5-.6 2.4 .4 2.5 .4 2.4-1 2.4-.7 2.5 0 2.4-.5 2.5-1.8 2.4 1 2.4 4.4 2.5 1.8 2.4-2.5 2.4-3.1 2.5-.1 2.4 1 2.5 1.1 2.4 .8 2.4 0 2.5-.2 2.4-.4 2.5 0 2.4 .6 2.4-.6 2.5-2.1 2.4-.1 2.5 2.1 2.4 0 2.4-1.3 2.5-1.4 2.4 .5 2.4 2 2.5-.7 2.4 36.4 2.5 96.9 2.4 19.3 2.4 0 0 0-517 0Z" fill="#7EB26D" fill-opacity="0.1" clip-path="url(#c3)"/><path d="M51.1 905.5l2.4 0 2.5 0 2.4 0 2.5 0 2.4 0 2.4 0 2.5 0 2.4 0 2.4 0 2.5 0 2.4 0 2.5 0 2.4 0 2.4 0 2.5 0 2.4 0 2.5 0 2.4 0 2.4 0 2.5 0 2.4 0 2.5 0 2.4 0 2.4 0 2.5 0 2.4 0 2.4 0 2.5 0 2.4 0 2.5 0 2.4 0 2.4 0 2.5 0 2.4 0 2.5 0 2.4 0 2.4 0 2.5 0 2.4 0 2.5 0 2.4 0 2.4 0 2.5 0 2.4 0 2.4 0 2.5 0 2.4 0 2.5 0 2.4 0 2.4 0 2.5 0 2.4 0 2.5 0 2.4 0 2.4 0 2.5 0 2.4 0 2.5 0 2.4 0 2.4 0 2.5 0 2.4 0 2.4 0 2.5 0 2.4 0 2.5 0 2.4 0 2.4 0 2.5 0 2.4 0 2.5 0 2.4 0 2.4 0 2.5 0 2.4 0 2.5 0 2.4 0 2.4 0 2.5 0 2.4 0 2.4 0 2.5 0 2.4 0 2.5 0 2.4 0 2.4 0 2.5 0 2.4 0 2.5 0 2.4 0 2.4 0 2.5 0 2.4 0 2.5 0 2.4 0 2.4 0 2.5 0 2.4 0 2.4 0 2.5 0 2.4 0 2.5 0 2.4 0 2.4 0 2.5 0 2.4 0 2.5 0 2.4 0 2.4 0 2.5 0 2.4 0 2.5 0 2.4 0 2.4 0 2.5 0 2.4 0 2.4 0 2.5 0 2.4 0 2.5 0 2.4 0 2.4 0 2.5 0 2.4 0 2.5 0 2.4 0 2.4 0 2.5 0 2.4 0 2.5 0 2.4 0 2.4 0 2.5 0 2.4 0 2.4 0 2.5 0 2.4 0 2.5 0 2.4 0 2.4 0 2.5 0 2.4 0 2.5 0 2.4 0 2.4 0 2.5 0 2.4 0 2.5 0 2.4 0 2.4 0 2.5 0 2.4 0 2.4 0 2.5 0 2.4 0 2.5 0 2.4 0 2.4 0 2.5-38.1 2.4-94.7 2.5-19.5 2.4 .4 2.4 1.9 2.5 .2 2.4-1.8 2.5-.8 2.4-.4 2.4-.5 2.5 .6 2.4 .7 2.4 0 2.5-.6 2.4-1.8 2.5 0 2.4 2 2.4 .8 2.5-.6 2.4 .4 2.5 .4 2.4-1 2.4-.7 2.5 0 2.4-.5 2.5-1.8 2.4 1 2.4 4.4 2.5 1.8 2.4-2.5 2.4-3.1 2.5-.1 2.4 1 2.5 1.1 2.4 .8 2.4 0 2.5-.2 2.4-.4 2.5 0 2.4 .6 2.4-.6 2.5-2.1 2.4-.1 2.5 2.1 2.4 0 2.4-1.3 2.5-1.4 2.4 .5 2.4 2 2.5-.7 2.4 36.4 2.5 96.9 2.4 19.3 2.4 0" stroke="#7EB26D" fill="none" clip-path="url(#c3)"/><rect x="34" y="941.7" width="14" height="4" rx="1" fill="#7EB26D"/><text x="56.00" y="946.70" font-size="12" fill="#ccccdc" text-anchor="start" textLength="74.69" lengthAdjust="spacingAndGlyphs">delete objects</text><text x="137.34" y="946.70" font-size="12" fill="#ccccdc" text-anchor="start" textLength="49.78" lengthAdjust="spacingAndGlyphs">Max: 123</text><text x="193.78" y="946.70" font-size="12" fill="#ccccdc" text-anchor="start" textLength="51.14" lengthAdjust="spacingAndGlyphs">Avg: 28.2</text><text x="251.58" y="946.70" font-size="12" fill="#ccccdc" text-anchor="start" textLength="68.62" lengthAdjust="spacingAndGlyphs">Total: 6.00 K</text><path d="M648.8 241.5H1162.0M648.8 217.5H1162.0M648.8 193.5H1162.0M648.8 169.5H1162.0M648.8 145.5H1162.0M682.5 145.0V241.5M754.5 145.0V241.5M826.5 145.0V241.5M898.5 145.0V241.5M970.5 145.0V241.5M1043.5 145.0V241.5M1115.5 145.0V241.5" stroke="#9b9b9b" stroke-opacity="0.3" stroke-width="1" fill="none"/><text x="643.50" y="243.90" font-size="11.5" fill="#c7c8d0" text-anchor="end">0%</text><text x="643.50" y="219.90" font-size="11.5" fill="#c7c8d0" text-anchor="end">25%</text><text x="643.50" y="195.90" font-size="11.5" fill="#c7c8d0" text-anchor="end">50%</text><text x="643.50" y="171.90" font-size="11.5" fill="#c7c8d0" text-anchor="end">75%</text><text x="643.50" y="147.90" font-size="11.5" fill="#c7c8d0" text-anchor="end">100%</text><text x="682.41" y="259.20" font-size="11.5" fill="#c7c8d0" text-anchor="middle">14:00</text><text x="754.53" y="259.20" font-size="11.5" fill="#c7c8d0" text-anchor="middle">14:05</text><text x="826.64" y="259.20" font-size="11.5" fill="#c7c8d0" text-anchor="middle">14:10</text><text x="898.76" y="259.20" font-size="11.5" fill="#c7c8d0" text-anchor="middle">14:15</text><text x="970.88" y="259.20" font-size="11.5" fill="#c7c8d0" text-anchor="middle">14:20</text><text x="1043.00" y="259.20" font-size="11.5" fill="#c7c8d0" text-anchor="middle">14:25</text><text x="1115.12" y="259.20" font-size="11.5" fill="#c7c8d0" text-anchor="middle">14:30</text><clipPath id="c4"><rect x="648.8" y="144.0" width="513.2" height="98.5"/></clipPath><path d="M648.8 241.2l1.2 0 1.2 0 1.2 0 1.2 0 1.2 0 1.2 0 1.2 0 1.2 0 1.2 0 1.2 0 1.2 0 1.2 0 1.2 0 1.2-3.6 1.2-.1 1.2 .3 1.2-.1 1.2 0 1.2 .1 1.2 1.7 1.2 0 1.2 0 1.2-.7 1.2-1 1.2-.4 1.2 .2 1.2 .1 1.2-.1 1.2-.2 1.2 .3 1.2 1.1 1.2 .8 1.2-.1 1.2 0 1.2 .2 1.2 0 1.2-.2 1.2-.9 1.2-.8 1.2-.2 1.2 0 1.2-.1 1.2-.1 1.2 .1 1.2 .5 1.2 .8 1.2 .8 1.2 .1 1.2-.2 1.2-.1 1.3 .1 1.2-.3 1.2-.9 1.2-.9 1.2 0 1.2-.1 1.2 0 1.2 .2 1.2-.1 1.2 .7 1.2 .9 1.2 .4 1.2-.1 1.2 0 1.2 .2 1.2 0 1.2-.9 1.2-.8 1.2-.3 1.2 0 1.2-.1 1.2 0 1.2-.1 1.2 .3 1.2 1 1.2 .9 1.2 0 1.2 .2 1.2 0 1.2 0 1.2-.3 1.2-1 1.2-1 1.2 0 1.2 .2 1.2 0 1.2 0 1.2 0 1.2 .7 1.2 .9 1.2 .4 1.2 0 1.2 0 1.2-.1 1.2 .1 1.2-.9 1.2-1.1 1.2-.2 1.2 .2 1.2 0 1.3-.1 1.2-.1 1.2 .8 1.2 1 1.2 .3 1.2 0 1.2 .1 1.2 0 1.2-.1 1.2-.9 1.2-.8 1.2-.1 1.2-.1 1.2-.1 1.2 0 1.2-.1 1.2 .7 1.2 1.1 1.2 .5 1.2-.2 1.2-.1 1.2 .1 1.2 0 1.2-1 1.2-1 1.2-.2 1.2 .1 1.2 .1 1.2 0 1.2-.2 1.2 .9 1.2 1.2 1.2 .3 1.2-.1 1.2 0 1.2 0 1.2-.1 1.2-.9 1.2-.9 1.2-.2 1.2 0 1.2 0 1.2 0 1.2 0 1.2 .9 1.2 .9 1.2 .3 1.2 0 1.2 .2 1.2-.1 1.3-.2 1.2-1 1.2-.9 1.2-.1 1.2 .2 1.2-.1 1.2-.1 1.2 0 1.2 .8 1.2 .9 1.2 .2 1.2 0 1.2 .2 1.2 0 1.2-.3 1.2-.9 1.2-.8 1.2 0 1.2-.1 1.2-.1 1.2 0 1.2-.1 1.2 .9 1.2 1 1.2 .3 1.2 0 1.2 0 1.2 0 1.2-.3 1.2-.9 1.2-.9 1.2 .1 1.2 .2 1.2 0 1.2-.2 1.2-.1 1.2 1.1 1.2 .9 1.2 .3 1.2 .2 1.2 0 1.2-.2 1.2-.6 1.2-1.1 1.2-.9 1.2 .2 1.2 .2 1.2 0 1.2 0 1.2 0 1.3 1 1.2 .9 1.2 .3 1.2-.1 1.2-.1 1.2 0 1.2-.2 1.2-1 1.2-.9 1.2-.1 1.2 0 1.2 .1 1.2 0 1.2 .6 1.2 1.1 1.2 .5 1.2 0 1.2 .1 1.2 0 1.2-.6 1.2-1.2 1.2-.7 1.2 0 1.2 .3 1.2 .1 1.2 0 1.2 .9 1.2 .9 1.2 .2 1.2 0 1.2 0 1.2-.1 1.2-.6 1.2-1.1 1.2-.4 1.2 .1 1.2 0 1.2-.1 1.2 .1 1.2 .7 1.2 1 1.2 .4 1.2 0 1.2 0 1.2 .1 1.2-.2 1.2-1 1.2-1 1.2 0 1.2 .1 1.2-.1 1.3-.1 1.2 .6 1.2 1.1 1.2 .4 1.2 .2 1.2 0 1.2-.1 1.2-.9 1.2-1.2 1.2 0 1.2 .1 1.2 0 1.2-.1 1.2 .3 1.2 1 1.2 .9 1.2-.1 1.2 .1 1.2 0 1.2 0 1.2-.8 1.2-.9 1.2-.4 1.2-.1 1.2 0 1.2 0 1.2-.1 1.2 .9 1.2 1.1 1.2 .3 1.2 0 1.2 0 1.2-.1 1.2-.7 1.2-1 1.2-.5 1.2 0 1.2-.1 1.2 .1 1.2 .1 1.2 .9 1.2 .9 1.2 .2 1.2-.1 1.2 0 1.2 0 1.2-.4 1.2-.9 1.2-.6 1.2 0 1.3-.1 1.2 0 1.2 .1 1.2 1 1.2 1.1 1.2 .1 1.2 0 1.2 0 1.2-.1 1.2-1.1 1.2-1.1 1.2-.1 1.2 0 1.2 .1 1.2-.1 1.2 .4 1.2 1.1 1.2 .7 1.2 0 1.2 .1 1.2 0 1.2 0 1.2-.9 1.2-.9 1.2-.4 1.2 0 1.2 .1 1.2 0 1.2 0 1.2 .3 1.2 1 1.2 .9 1.2 0 1.2-.1 1.2-.1 1.2 0 1.2 .1 1.2-.6 1.2-.8 1.2-.7 1.2 0 1.2-.1 1.2 0 1.2 .1 1.2 0 1.2 .6 1.2 .8 1.2 .7 1.2 .1 1.2-.1 1.3 0 1.2 .1 1.2-.2 1.2-.8 1.2-1.1 1.2-.2 1.2 .1 1.2 .1 1.2-.1 1.2 0 1.2 .3 1.2 .8 1.2 .8 1.2 .2 1.2-.1 1.2 .1 1.2 0 1.2-.1 1.2-.6 1.2-.9 1.2-.6 1.2 0 1.2 0 1.2 0 1.2 0 1.2 .1 1.2 .7 1.2 .8 1.2 .5 1.2 .1 1.2 .1 1.2 0 1.2 0 1.2-.3 1.2-.7 1.2-.9 1.2-.4 1.2 0 1.2 .2 1.2-.1 1.2-.1 1.2 .4 1.2 1 1.2 .8 1.2-.1 1.2 0 1.2 .1 1.2 .1 1.2-.8 1.2-.9 1.3-.6 1.2 .1 1.2 0 1.2 0 1.2 0 1.2 .4 1.2 1 1.2 .7 1.2 0 1.2-.1 1.2 .1 1.2-.1 1.2-1.1 1.2-1 1.2 .1 1.2 0 1.2 .1 1.2 .1 1.2 0 1.2 .7 1.2 .9 1.2 .3 1.2-.1 0 2-1.2 0-1.2 0-1.2 0-1.2 0-1.2 0-1.2 0-1.2 0-1.2 0-1.2 0-1.2 0-1.2 0-1.2 0-1.2 0-1.2 0-1.2 0-1.2 0-1.2 0-1.2 0-1.2 0-1.2 0-1.2 0-1.2 0-1.3 0-1.2 0-1.2 0-1.2 0-1.2 0-1.2 0-1.2 0-1.2 0-1.2 0-1.2 0-1.2 0-1.2 0-1.2 0-1.2 0-1.2 0-1.2 0-1.2 0-1.2 0-1.2 0-1.2 0-1.2 0-1.2 0-1.2 0-1.2 0-1.2 0-1.2 0-1.2 0-1.2 0-1.2 0-1.2 0-1.2 0-1.2 0-1.2 0-1.2 0-1.2 0-1.2 0-1.2 0-1.2 0-1.2 0-1.2 0-1.2 0-1.2 0-1.2 0-1.2 0-1.2 0-1.2 0-1.2 0-1.2 0-1.2 0-1.2 0-1.3 0-1.2 0-1.2 0-1.2 0-1.2 0-1.2 0-1.2 0-1.2 0-1.2 0-1.2 0-1.2 0-1.2 0-1.2 0-1.2 0-1.2 0-1.2 0-1.2 0-1.2 0-1.2 0-1.2 0-1.2 0-1.2 0-1.2 0-1.2 0-1.2 0-1.2 0-1.2 0-1.2 0-1.2 0-1.2 0-1.2 0-1.2 0-1.2 0-1.2 0-1.2 0-1.2 0-1.2 0-1.2 0-1.2 0-1.2 0-1.2 0-1.2 0-1.2 0-1.2 0-1.2 0-1.2 0-1.2 0-1.2 0-1.2 0-1.2 0-1.3 0-1.2 0-1.2 0-1.2 0-1.2 0-1.2 0-1.2 0-1.2 0-1.2 0-1.2 0-1.2 0-1.2 0-1.2 0-1.2 0-1.2 0-1.2 0-1.2 0-1.2 0-1.2 0-1.2 0-1.2 0-1.2 0-1.2 0-1.2 0-1.2 0-1.2 0-1.2 0-1.2 0-1.2 0-1.2 0-1.2 0-1.2 0-1.2 0-1.2 0-1.2 0-1.2 0-1.2 0-1.2 0-1.2 0-1.2 0-1.2 0-1.2 0-1.2 0-1.2 0-1.2 0-1.2 0-1.2 0-1.2 0-1.2 0-1.2 0-1.3 0-1.2 0-1.2 0-1.2 0-1.2 0-1.2 0-1.2 0-1.2 0-1.2 0-1.2 0-1.2 0-1.2 0-1.2 0-1.2 0-1.2 0-1.2 0-1.2 0-1.2 0-1.2 0-1.2 0-1.2 0-1.2 0-1.2 0-1.2 0-1.2 0-1.2 0-1.2 0-1.2 0-1.2 0-1.2 0-1.2 0-1.2 0-1.2 0-1.2 0-1.2 0-1.2 0-1.2 0-1.2 0-1.2 0-1.2 0-1.2 0-1.2 0-1.2 0-1.2 0-1.2 0-1.2 0-1.2 0-1.2 0-1.2 0-1.2 0-1.2 0-1.3 0-1.2 0-1.2 0-1.2 0-1.2 0-1.2 0-1.2 0-1.2 0-1.2 0-1.2 0-1.2 0-1.2 0-1.2 0-1.2 0-1.2 0-1.2 0-1.2 0-1.2 0-1.2 0-1.2 0-1.2 0-1.2 0-1.2 0-1.2 0-1.2 0-1.2 0-1.2 0-1.2 0-1.2 0-1.2 0-1.2 0-1.2 0-1.2 0-1.2 0-1.2 0-1.2 0-1.2 0-1.2 0-1.2 0-1.2 0-1.2 0-1.2 0-1.2 0-1.2 0-1.2 0-1.2 0-1.2 0-1.2 0-1.2 0-1.2 0-1.3 0-1.2 0-1.2 0-1.2 0-1.2 0-1.2 0-1.2 0-1.2 0-1.2 0-1.2 0-1.2 0-1.2 0-1.2 0-1.2 0-1.2 0-1.2 0-1.2 0-1.2 0-1.2 0-1.2 0-1.2 0-1.2 0-1.2 0-1.2 0-1.2 0-1.2 0-1.2 0-1.2 0-1.2 0-1.2 0-1.2 0-1.2 0-1.2 0-1.2 0-1.2 0-1.2 0-1.2 0-1.2 0-1.2 0-1.2 0-1.2 0-1.2 0-1.2 0-1.2 0-1.2 0-1.2 0-1.2 0-1.2 0-1.2 0-1.2 0-1.3 0-1.2 0-1.2 0-1.2 0-1.2 0-1.2 0-1.2 0-1.2 0-1.2 0-1.2 0-1.2 0-1.2 0-1.2 0-1.2 0-1.2 0-1.2 0-1.2 0-1.2 0-1.2 0-1.2 0-1.2 0-1.2 0-1.2 0-1.2 0-1.2 0-1.2 0-1.2 0-1.2 0-1.2 0-1.2 0-1.2 0-1.2 0-1.2 0-1.2 0-1.2 0-1.2 0-1.2 0-1.2 0-1.2 0-1.2 0-1.2 0-1.2 0-1.2 0-1.2 0-1.2 0-1.2 0-1.2 0-1.2 0-1.2 0-1.2 0-1.3 0-1.2 0-1.2 0-1.2 0-1.2 0-1.2 0-1.2 0-1.2 0-1.2 0-1.2 0-1.2 0-1.2 0-1.2 0-1.2 0-1.2 0-1.2 0-1.2 0-1.2 0-1.2 0-1.2 0-1.2 0-1.2 0-1.2 0-1.2 0-1.2 0-1.2 0-1.2 0-1.2 0-1.2 0-1.2 0-1.2 0-1.2 0-1.2 0-1.2 0-1.2 0-1.2 0-1.2 0-1.2 0-1.2 0-1.2 0-1.2 0-1.2 0-1.2 0-1.2 0-1.2 0-1.2 0-1.2 0-1.2 0-1.2 0-1.2 0-1.2 0Z" fill="#7EB26D" fill-opacity="0.1" clip-path="url(#c4)"/><path d="M648.8 240.9l1.2 0 1.2 0 1.2 0 1.2 0 1.2 0 1.2 0 1.2 0 1.2 0 1.2 0 1.2 0 1.2 0 1.2 0 1.2 0 1.2-5.5 1.2-.1 1.2 .5 1.2 0 1.2-.1 1.2 0 1.2 2.7 1.2 0 1.2 .1 1.2-1.1 1.2-1.5 1.2-.7 1.2 .2 1.2 .1 1.2 0 1.2-.2 1.2 .5 1.2 1.7 1.2 1.1 1.2-.3 1.2 .1 1.2 .3 1.2-.1 1.2-.2 1.2-1.3 1.2-1.2 1.2-.3 1.2-.1 1.2-.1 1.2 0 1.2-.1 1.2 .7 1.2 1.3 1.2 1.3 1.2 .1 1.2-.1 1.2-.1 1.3 .1 1.2-.4 1.2-1.4 1.2-1.3 1.2-.1 1.2-.2 1.2 .1 1.2 .4 1.2-.2 1.2 .7 1.2 1.6 1.2 .9 1.2-.2 1.2-.2 1.2 .1 1.2 .1 1.2-1.4 1.2-1.3 1.2-.4 1.2 0 1.2 .1 1.2 0 1.2-.1 1.2 .5 1.2 1.3 1.2 1.3 1.2 0 1.2 .2 1.2 0 1.2-.1 1.2-.4 1.2-1.4 1.2-1.5 1.2 0 1.2 .3 1.2 0 1.2 0 1.2 .1 1.2 1 1.2 1.3 1.2 .6 1.2 .1 1.2-.1 1.2-.1 1.2 .1 1.2-1.4 1.2-1.5 1.2-.3 1.2 .3 1.2 .2 1.3 0 1.2-.2 1.2 1 1.2 1.5 1.2 .5 1.2-.1 1.2 0 1.2 0 1.2 0 1.2-1.4 1.2-1.3 1.2-.3 1.2-.1 1.2 0 1.2 0 1.2-.2 1.2 1.1 1.2 1.6 1.2 .8 1.2-.3 1.2-.1 1.2 .3 1.2-.1 1.2-1.6 1.2-1.4 1.2-.3 1.2 0 1.2 .1 1.2 0 1.2-.1 1.2 1.4 1.2 1.6 1.2 .4 1.2-.1 1.2 .1 1.2 0 1.2-.2 1.2-1.4 1.2-1.5 1.2-.3 1.2 .1 1.2 .1 1.2 0 1.2 0 1.2 1.2 1.2 1.4 1.2 .5 1.2 .1 1.2 .1 1.2 0 1.3-.3 1.2-1.4 1.2-1.4 1.2-.1 1.2 .2 1.2-.1 1.2-.3 1.2 0 1.2 1.3 1.2 1.4 1.2 .3 1.2-.1 1.2 .2 1.2 .2 1.2-.3 1.2-1.5 1.2-1.2 1.2 0 1.2-.2 1.2 0 1.2-.1 1.2-.3 1.2 1.4 1.2 1.7 1.2 .4 1.2 0 1.2-.1 1.2-.1 1.2-.3 1.2-1.5 1.2-1.3 1.2 .3 1.2 .2 1.2-.1 1.2-.2 1.2-.2 1.2 1.5 1.2 1.4 1.2 .5 1.2 .3 1.2 .1 1.2-.3 1.2-.8 1.2-1.7 1.2-1.3 1.2 .2 1.2 .3 1.2 .1 1.2-.1 1.2 0 1.3 1.5 1.2 1.5 1.2 .3 1.2-.2 1.2-.1 1.2 .1 1.2-.4 1.2-1.6 1.2-1.2 1.2-.1 1.2 0 1.2 .2 1.2 .1 1.2 .7 1.2 1.6 1.2 .9 1.2-.1 1.2 0 1.2-.1 1.2-.9 1.2-1.7 1.2-.9 1.2 .2 1.2 .4 1.2 0 1.2-.1 1.2 1.3 1.2 1.4 1.2 .5 1.2 0 1.2-.2 1.2-.2 1.2-.9 1.2-1.3 1.2-.6 1.2 .1 1.2-.2 1.2-.1 1.2 .1 1.2 1.1 1.2 1.3 1.2 .7 1.2 0 1.2 0 1.2 .1 1.2-.3 1.2-1.6 1.2-1.5 1.2 .1 1.2 .1 1.2 0 1.3-.3 1.2 .7 1.2 1.8 1.2 .9 1.2 .3 1.2 0 1.2-.1 1.2-1.6 1.2-1.8 1.2 0 1.2 .1 1.2-.1 1.2-.3 1.2 .6 1.2 1.9 1.2 1.2 1.2-.2 1.2 .1 1.2 .1 1.2 0 1.2-1.3 1.2-1.4 1.2-.6 1.2-.1 1.2 .1 1.2 0 1.2-.1 1.2 1.2 1.2 1.5 1.2 .5 1.2 .1 1.2 0 1.2-.1 1.2-1 1.2-1.6 1.2-.8 1.2 .1 1.2 .1 1.2-.1 1.2 .1 1.2 1.5 1.2 1.4 1.2 .3 1.2-.1 1.2 0 1.2 .2 1.2-.7 1.2-1.6 1.2-.9 1.2 .1 1.3 0 1.2-.2 1.2 .1 1.2 1.4 1.2 1.7 1.2 .3 1.2 .1 1.2-.1 1.2-.1 1.2-1.7 1.2-1.8 1.2-.2 1.2 .1 1.2 .2 1.2 0 1.2 .6 1.2 1.4 1.2 1 1.2 0 1.2 .2 1.2 .1 1.2 .1 1.2-1.3 1.2-1.7 1.2-.5 1.2 .1 1.2 .1 1.2-.1 1.2-.2 1.2 .6 1.2 1.5 1.2 1.5 1.2 .1 1.2-.1 1.2 0 1.2 0 1.2-.1 1.2-1 1.2-1.2 1.2-1 1.2-.1 1.2-.1 1.2 0 1.2 0 1.2 .2 1.2 1 1.2 1.2 1.2 1 1.2 0 1.2 0 1.3 0 1.2 .1 1.2-.4 1.2-1.4 1.2-1.4 1.2-.2 1.2 .1 1.2 .1 1.2-.1 1.2 0 1.2 .3 1.2 1.3 1.2 1.2 1.2 .3 1.2 0 1.2 .1 1.2 .1 1.2-.1 1.2-1.1 1.2-1.4 1.2-1 1.2 .2 1.2-.1 1.2-.2 1.2 .1 1.2 .1 1.2 1.3 1.2 1.3 1.2 .7 1.2 0 1.2 .1 1.2 0 1.2 0 1.2-.2 1.2-1.3 1.2-1.4 1.2-.3 1.2 .2 1.2 .1 1.2-.3 1.2-.1 1.2 .7 1.2 1.4 1.2 1.1 1.2-.1 1.2 .1 1.2 .1 1.2 0 1.2-1 1.2-1.4 1.3-.9 1.2-.1 1.2-.1 1.2 0 1.2 .3 1.2 .7 1.2 1.5 1.2 .9 1.2-.2 1.2 0 1.2 .1 1.2 0 1.2-1.5 1.2-1.4 1.2-.1 1.2 0 1.2 .1 1.2 0 1.2 0 1.2 1.3 1.2 1.3 1.2 .4 1.2 .1 0 .8-1.2 .1-1.2-.3-1.2-.9-1.2-.7-1.2 0-1.2-.1-1.2-.1-1.2 0-1.2-.1-1.2 1-1.2 1.1-1.2 .1-1.2-.1-1.2 .1-1.2 0-1.2-.7-1.2-1-1.2-.4-1.2 0-1.2 0-1.2 0-1.2-.1-1.3 .6-1.2 .9-1.2 .8-1.2-.1-1.2-.1-1.2 0-1.2 .1-1.2-.8-1.2-1-1.2-.4-1.2 .1-1.2 .1-1.2-.2-1.2 0-1.2 .4-1.2 .9-1.2 .7-1.2 .3-1.2 0-1.2 0-1.2-.1-1.2-.1-1.2-.5-1.2-.8-1.2-.7-1.2-.1-1.2 0-1.2 0-1.2 0-1.2 0-1.2 .6-1.2 .9-1.2 .6-1.2 .1-1.2 0-1.2-.1-1.2 .1-1.2-.2-1.2-.8-1.2-.8-1.2-.3-1.2 0-1.2 .1-1.2-.1-1.2-.1-1.2 .2-1.2 1.1-1.2 .8-1.2 .2-1.2-.1-1.3 0-1.2 .1-1.2-.1-1.2-.7-1.2-.8-1.2-.6-1.2 0-1.2-.1-1.2 0-1.2 .1-1.2 0-1.2 .7-1.2 .8-1.2 .6-1.2-.1-1.2 0-1.2 .1-1.2 .1-1.2 0-1.2-.9-1.2-1-1.2-.3-1.2 0-1.2 0-1.2-.1-1.2 0-1.2 .4-1.2 .9-1.2 .9-1.2 0-1.2 0-1.2-.1-1.2 0-1.2-.7-1.2-1.1-1.2-.4-1.2 .1-1.2-.1-1.2 0-1.2 .1-1.2 1.1-1.2 1.1-1.2 .1-1.2 0-1.2 0-1.2-.1-1.2-1.1-1.2-1-1.2-.1-1.2 0-1.3 .1-1.2 0-1.2 .6-1.2 .9-1.2 .4-1.2 0-1.2 0-1.2 .1-1.2-.2-1.2-.9-1.2-.9-1.2-.1-1.2-.1-1.2 .1-1.2 0-1.2 .5-1.2 1-1.2 .7-1.2 .1-1.2 0-1.2 0-1.2-.3-1.2-1.1-1.2-.9-1.2 .1-1.2 0-1.2 0-1.2 .1-1.2 .4-1.2 .9-1.2 .8-1.2 0-1.2 0-1.2-.1-1.2 .1-1.2-.9-1.2-1-1.2-.3-1.2 .1-1.2 0-1.2-.1-1.2 0-1.2 1.2-1.2 .9-1.2 .1-1.2 0-1.2-.2-1.2-.4-1.2-1.1-1.2-.6-1.3 .1-1.2 .1-1.2-.1-1.2 0-1.2 1-1.2 1-1.2 .2-1.2-.1-1.2 0-1.2 0-1.2-.4-1.2-1-1.2-.7-1.2-.1-1.2 .1-1.2 0-1.2-.1-1.2 .4-1.2 1.1-1.2 .6-1.2 .1-1.2 0-1.2 0-1.2-.2-1.2-.9-1.2-.9-1.2 0-1.2-.1-1.2-.3-1.2 0-1.2 .7-1.2 1.2-1.2 .6-1.2 0-1.2-.1-1.2 0-1.2-.5-1.2-1.1-1.2-.6-1.2 0-1.2-.1-1.2 0-1.2 .1-1.2 .9-1.2 1-1.2 .2-1.2 0-1.2 .1-1.2 .1-1.2-.3-1.2-.9-1.3-1-1.2 0-1.2 0-1.2 0-1.2-.2-1.2-.2-1.2 .9-1.2 1.1-1.2 .6-1.2 .2-1.2 0-1.2-.2-1.2-.3-1.2-.9-1.2-1.1-1.2 .1-1.2 .2-1.2 0-1.2-.2-1.2-.1-1.2 .9-1.2 .9-1.2 .3-1.2 0-1.2 0-1.2 0-1.2-.3-1.2-1-1.2-.9-1.2 .1-1.2 0-1.2 .1-1.2 .1-1.2 0-1.2 .8-1.2 .9-1.2 .3-1.2 0-1.2-.2-1.2 0-1.2-.2-1.2-.9-1.2-.8-1.2 0-1.2 .1-1.2 .1-1.2-.2-1.2 .1-1.2 .9-1.2 1-1.3 .2-1.2 .1-1.2-.2-1.2 0-1.2-.3-1.2-.9-1.2-.9-1.2 0-1.2 0-1.2 0-1.2 0-1.2 .2-1.2 .9-1.2 .9-1.2 .1-1.2 0-1.2 0-1.2 .1-1.2-.3-1.2-1.2-1.2-.9-1.2 .2-1.2 0-1.2-.1-1.2-.1-1.2 .2-1.2 1-1.2 1-1.2 0-1.2-.1-1.2 .1-1.2 .2-1.2-.5-1.2-1.1-1.2-.7-1.2 .1-1.2 0-1.2 .1-1.2 .1-1.2 .1-1.2 .8-1.2 .9-1.2 .1-1.2 0-1.2-.1-1.2 0-1.2-.3-1.2-1-1.2-.8-1.2 .1-1.3 .1-1.2 0-1.2-.2-1.2 .2-1.2 1.1-1.2 .9-1.2-.1-1.2 .1-1.2 0-1.2 0-1.2-.4-1.2-.9-1.2-.7-1.2 0-1.2 0-1.2 0-1.2-.2-1.2 0-1.2 1-1.2 1-1.2 .3-1.2 0-1.2 0-1.2-.2-1.2 0-1.2-.9-1.2-1-1.2-.3-1.2 .1-1.2 0-1.2 .1-1.2 0-1.2 .3-1.2 .8-1.2 .9-1.2 0-1.2-.2-1.2 0-1.2 .1-1.2-.4-1.2-.9-1.2-.7-1.2 .1-1.2-.2-1.2 0-1.2 .1-1.2 0-1.2 .9-1.2 .9-1.2 .3-1.3-.1-1.2 .1-1.2 .2-1.2-.1-1.2-.8-1.2-.8-1.2-.5-1.2-.1-1.2 .1-1.2 .1-1.2 0-1.2 .2-1.2 .8-1.2 .9-1.2 .2-1.2 0-1.2-.2-1.2 0-1.2 .1-1.2-.8-1.2-1.1-1.2-.3-1.2 .2-1.2 .1-1.2-.1-1.2-.2-1.2 .4-1.2 1-1.2 .7-1.2 0-1.2 0-1.2-1.7-1.2-.1-1.2 0-1.2 .1-1.2-.3-1.2 .1-1.2 3.6-1.2 0-1.2 0-1.2 0-1.2 0-1.2 0-1.2 0-1.2 0-1.2 0-1.2 0-1.2 0-1.2 0-1.2 0-1.2 0Z" fill="#EAB839" fill-opacity="0.1" clip-path="url(#c4)"/><path d="M648.8 240.8l1.2 0 1.2 0 1.2 0 1.2 0 1.2 0 1.2 0 1.2 0 1.2 0 1.2 0 1.2 0 1.2 0 1.2 0 1.2 0 1.2-5.5 1.2-.1 1.2 .5 1.2 0 1.2-.1 1.2 0 1.2 2.7 1.2 .1 1.2 0 1.2-1.1 1.2-1.5 1.2-.7 1.2 .2 1.2 .1 1.2 0 1.2-.2 1.2 .5 1.2 1.7 1.2 1.1 1.2-.3 1.2 .1 1.2 .3 1.2-.1 1.2-.2 1.2-1.3 1.2-1.2 1.2-.3 1.2-.1 1.2-.1 1.2 0 1.2 0 1.2 .6 1.2 1.3 1.2 1.3 1.2 .1 1.2-.1 1.2-.1 1.3 .1 1.2-.4 1.2-1.4 1.2-1.3 1.2 0 1.2-.3 1.2 .1 1.2 .4 1.2-.2 1.2 .7 1.2 1.6 1.2 .9 1.2-.2 1.2-.2 1.2 .1 1.2 .1 1.2-1.4 1.2-1.3 1.2-.3 1.2-.1 1.2 .1 1.2 0 1.2-.1 1.2 .5 1.2 1.3 1.2 1.3 1.2 0 1.2 .2 1.2 0 1.2-.1 1.2-.4 1.2-1.4 1.2-1.5 1.2 0 1.2 .3 1.2 0 1.2 0 1.2 .1 1.2 1 1.2 1.3 1.2 .7 1.2 0 1.2-.1 1.2-.1 1.2 .1 1.2-1.4 1.2-1.5 1.2-.3 1.2 .3 1.2 .2 1.3 0 1.2-.2 1.2 1 1.2 1.5 1.2 .5 1.2-.1 1.2 0 1.2 0 1.2 0 1.2-1.4 1.2-1.3 1.2-.3 1.2-.1 1.2 0 1.2 0 1.2-.2 1.2 1.1 1.2 1.6 1.2 .8 1.2-.3 1.2-.1 1.2 .3 1.2-.1 1.2-1.6 1.2-1.3 1.2-.4 1.2 0 1.2 .1 1.2 0 1.2-.1 1.2 1.4 1.2 1.6 1.2 .4 1.2-.1 1.2 .2 1.2-.1 1.2-.2 1.2-1.4 1.2-1.5 1.2-.3 1.2 .1 1.2 .1 1.2 0 1.2 0 1.2 1.2 1.2 1.4 1.2 .5 1.2 .1 1.2 .1 1.2 0 1.3-.3 1.2-1.4 1.2-1.4 1.2-.1 1.2 .2 1.2-.1 1.2-.3 1.2 0 1.2 1.3 1.2 1.4 1.2 .3 1.2-.1 1.2 .2 1.2 .2 1.2-.3 1.2-1.5 1.2-1.2 1.2 0 1.2-.2 1.2 0 1.2-.1 1.2-.3 1.2 1.4 1.2 1.7 1.2 .4 1.2 0 1.2-.1 1.2-.1 1.2-.3 1.2-1.5 1.2-1.3 1.2 .3 1.2 .2 1.2-.1 1.2-.2 1.2-.2 1.2 1.5 1.2 1.4 1.2 .5 1.2 .3 1.2 .1 1.2-.3 1.2-.8 1.2-1.7 1.2-1.3 1.2 .2 1.2 .3 1.2 .1 1.2-.1 1.2 0 1.3 1.5 1.2 1.5 1.2 .3 1.2-.2 1.2-.1 1.2 .1 1.2-.4 1.2-1.5 1.2-1.3 1.2-.1 1.2 .1 1.2 .1 1.2 .1 1.2 .7 1.2 1.6 1.2 .9 1.2-.1 1.2 0 1.2-.1 1.2-.9 1.2-1.7 1.2-.9 1.2 .2 1.2 .4 1.2 .1 1.2-.2 1.2 1.3 1.2 1.4 1.2 .5 1.2 0 1.2-.2 1.2-.2 1.2-.9 1.2-1.3 1.2-.6 1.2 .1 1.2-.2 1.2-.1 1.2 .1 1.2 1.1 1.2 1.3 1.2 .7 1.2 0 1.2 0 1.2 .1 1.2-.3 1.2-1.6 1.2-1.5 1.2 .1 1.2 .1 1.2 0 1.3-.3 1.2 .7 1.2 1.8 1.2 .9 1.2 .3 1.2 0 1.2-.1 1.2-1.6 1.2-1.8 1.2 0 1.2 .1 1.2-.1 1.2-.3 1.2 .6 1.2 1.9 1.2 1.2 1.2-.2 1.2 .1 1.2 .1 1.2 0 1.2-1.3 1.2-1.4 1.2-.6 1.2-.1 1.2 .1 1.2 0 1.2-.1 1.2 1.2 1.2 1.5 1.2 .5 1.2 .1 1.2 0 1.2-.1 1.2-1 1.2-1.6 1.2-.8 1.2 .1 1.2 .1 1.2-.1 1.2 .1 1.2 1.5 1.2 1.4 1.2 .3 1.2-.1 1.2 0 1.2 .2 1.2-.7 1.2-1.6 1.2-.9 1.2 .1 1.3 0 1.2-.2 1.2 .1 1.2 1.5 1.2 1.6 1.2 .3 1.2 .1 1.2-.1 1.2-.1 1.2-1.7 1.2-1.8 1.2-.2 1.2 .1 1.2 .2 1.2 0 1.2 .6 1.2 1.4 1.2 1 1.2 0 1.2 .2 1.2 .1 1.2 .1 1.2-1.3 1.2-1.7 1.2-.5 1.2 .1 1.2 .1 1.2-.1 1.2-.2 1.2 .6 1.2 1.5 1.2 1.5 1.2 .1 1.2-.1 1.2 0 1.2 0 1.2-.1 1.2-1 1.2-1.2 1.2-1 1.2-.1 1.2-.1 1.2 0 1.2 .1 1.2 .1 1.2 1 1.2 1.2 1.2 1 1.2 0 1.2 0 1.3 0 1.2 .1 1.2-.4 1.2-1.4 1.2-1.4 1.2-.2 1.2 .1 1.2 .1 1.2-.1 1.2 0 1.2 .4 1.2 1.2 1.2 1.2 1.2 .3 1.2 0 1.2 .1 1.2 .1 1.2-.1 1.2-1.1 1.2-1.4 1.2-1 1.2 .2 1.2-.1 1.2-.1 1.2 0 1.2 .2 1.2 1.2 1.2 1.3 1.2 .7 1.2 0 1.2 .1 1.2 0 1.2 0 1.2-.2 1.2-1.3 1.2-1.4 1.2-.3 1.2 .2 1.2 .1 1.2-.3 1.2-.1 1.2 .7 1.2 1.4 1.2 1.1 1.2 0 1.2 0 1.2 .1 1.2 0 1.2-1 1.2-1.4 1.3-.9 1.2-.1 1.2-.1 1.2 0 1.2 .3 1.2 .7 1.2 1.5 1.2 .9 1.2-.2 1.2 0 1.2 .2 1.2-.1 1.2-1.5 1.2-1.4 1.2-.1 1.2 0 1.2 .1 1.2 0 1.2 0 1.2 1.3 1.2 1.3 1.2 .4 1.2 .1 0 .1-1.2-.1-1.2-.4-1.2-1.3-1.2-1.3-1.2 0-1.2 0-1.2-.1-1.2 0-1.2 .1-1.2 1.4-1.2 1.5-1.2 0-1.2-.1-1.2 0-1.2 .2-1.2-.9-1.2-1.5-1.2-.7-1.2-.3-1.2 0-1.2 .1-1.2 .1-1.3 .9-1.2 1.4-1.2 1-1.2 0-1.2-.1-1.2-.1-1.2 .1-1.2-1.1-1.2-1.4-1.2-.7-1.2 .1-1.2 .3-1.2-.1-1.2-.2-1.2 .3-1.2 1.4-1.2 1.3-1.2 .2-1.2 0-1.2 0-1.2-.1-1.2 0-1.2-.7-1.2-1.3-1.2-1.3-1.2-.1-1.2-.1-1.2 .2-1.2 .1-1.2-.2-1.2 1-1.2 1.4-1.2 1.1-1.2 .1-1.2-.1-1.2-.1-1.2 0-1.2-.3-1.2-1.2-1.2-1.3-1.2-.3-1.2 0-1.2 .1-1.2-.1-1.2-.1-1.2 .2-1.2 1.4-1.2 1.4-1.2 .4-1.2-.1-1.3 0-1.2 0-1.2 0-1.2-1-1.2-1.2-1.2-1-1.2-.2-1.2 0-1.2 0-1.2 .1-1.2 .1-1.2 1-1.2 1.2-1.2 1-1.2 .1-1.2 0-1.2 0-1.2 .1-1.2-.1-1.2-1.5-1.2-1.5-1.2-.6-1.2 .2-1.2 .1-1.2-.1-1.2-.1-1.2 .5-1.2 1.7-1.2 1.3-1.2-.1-1.2-.1-1.2-.2-1.2 0-1.2-1-1.2-1.4-1.2-.6-1.2 0-1.2-.2-1.2-.1-1.2 .2-1.2 1.8-1.2 1.7-1.2 .1-1.2 .1-1.2-.1-1.2-.3-1.2-1.7-1.2-1.4-1.2-.1-1.2 .2-1.3 0-1.2-.1-1.2 .9-1.2 1.6-1.2 .7-1.2-.2-1.2 0-1.2 .1-1.2-.3-1.2-1.4-1.2-1.5-1.2-.1-1.2 .1-1.2-.1-1.2-.1-1.2 .8-1.2 1.6-1.2 1-1.2 .1-1.2 0-1.2-.1-1.2-.5-1.2-1.5-1.2-1.2-1.2 .1-1.2 0-1.2-.1-1.2 .1-1.2 .6-1.2 1.4-1.2 1.3-1.2 0-1.2-.1-1.2-.1-1.2 .2-1.2-1.2-1.2-1.9-1.2-.6-1.2 .3-1.2 .1-1.2-.1-1.2 0-1.2 1.8-1.2 1.6-1.2 .1-1.2 0-1.2-.3-1.2-.9-1.2-1.8-1.2-.7-1.3 .3-1.2 0-1.2-.1-1.2-.1-1.2 1.5-1.2 1.6-1.2 .3-1.2-.1-1.2 0-1.2 0-1.2-.7-1.2-1.3-1.2-1.1-1.2-.1-1.2 .1-1.2 .2-1.2-.1-1.2 .6-1.2 1.3-1.2 .9-1.2 .2-1.2 .2-1.2 0-1.2-.5-1.2-1.4-1.2-1.3-1.2 .1-1.2 0-1.2-.4-1.2-.2-1.2 .9-1.2 1.7-1.2 .9-1.2 .1-1.2 0-1.2 .1-1.2-.9-1.2-1.6-1.2-.7-1.2-.1-1.2-.2-1.2 0-1.2 .1-1.2 1.2-1.2 1.6-1.2 .4-1.2-.1-1.2 .1-1.2 .2-1.2-.3-1.2-1.5-1.3-1.5-1.2 0-1.2 .1-1.2-.1-1.2-.3-1.2-.2-1.2 1.3-1.2 1.7-1.2 .8-1.2 .3-1.2-.1-1.2-.3-1.2-.5-1.2-1.4-1.2-1.5-1.2 .2-1.2 .2-1.2 .1-1.2-.2-1.2-.3-1.2 1.3-1.2 1.5-1.2 .3-1.2 .1-1.2 .1-1.2 0-1.2-.4-1.2-1.7-1.2-1.4-1.2 .3-1.2 .1-1.2 0-1.2 .2-1.2 0-1.2 1.2-1.2 1.5-1.2 .3-1.2-.2-1.2-.2-1.2 .1-1.2-.3-1.2-1.4-1.2-1.3-1.2 0-1.2 .3-1.2 .1-1.2-.2-1.2 .1-1.2 1.4-1.2 1.4-1.3 .3-1.2 0-1.2-.1-1.2-.1-1.2-.5-1.2-1.4-1.2-1.2-1.2 0-1.2 0-1.2-.1-1.2-.1-1.2 .3-1.2 1.5-1.2 1.4-1.2 .2-1.2 0-1.2-.1-1.2 .1-1.2-.4-1.2-1.6-1.2-1.4-1.2 .1-1.2 0-1.2-.1-1.2 0-1.2 .3-1.2 1.4-1.2 1.6-1.2 .1-1.2-.3-1.2 .1-1.2 .3-1.2-.8-1.2-1.6-1.2-1.1-1.2 .2-1.2 0-1.2 0-1.2 .1-1.2 .3-1.2 1.3-1.2 1.4-1.2 0-1.2 0-1.2 0-1.2 .1-1.2-.5-1.2-1.5-1.2-1-1.2 .2-1.3 0-1.2-.2-1.2-.3-1.2 .3-1.2 1.5-1.2 1.4-1.2-.1-1.2 .1-1.2 .1-1.2-.1-1.2-.6-1.2-1.3-1.2-1-1.2-.1-1.2 0-1.2 0-1.2-.3-1.2 0-1.2 1.5-1.2 1.4-1.2 .4-1.2 .1-1.2 0-1.2-.2-1.2 0-1.2-1.3-1.2-1.3-1.2-.5-1.2 .1-1.2 0-1.2-.1-1.2 0-1.2 .4-1.2 1.3-1.2 1.4-1.2-.1-1.2-.1-1.2 .2-1.2 .2-1.2-.9-1.2-1.6-1.2-.7-1.2 .2-1.2-.4-1.2-.1-1.2 .2-1.2 .1-1.2 1.3-1.2 1.4-1.2 .4-1.3-.1-1.2 .1-1.2 .1-1.2-.1-1.2-1.3-1.2-1.3-1.2-.7-1.2 .1-1.2 0-1.2 .1-1.2 .1-1.2 .3-1.2 1.2-1.2 1.3-1.2 .2-1.2 .1-1.2-.3-1.2-.1-1.2 .3-1.2-1.1-1.2-1.7-1.2-.5-1.2 .2-1.2 0-1.2-.1-1.2-.2-1.2 .7-1.2 1.5-1.2 1.1-1.2-.1-1.2 0-1.2-2.7-1.2 0-1.2 .1-1.2 0-1.2-.5-1.2 .1-1.2 5.5-1.2 0-1.2 0-1.2 0-1.2 0-1.2 0-1.2 0-1.2 0-1.2 0-1.2 0-1.2 0-1.2 0-1.2 0-1.2 0Z" fill="#6ED0E0" fill-opacity="0.1" clip-path="url(#c4)"/><path d="M648.8 145.5l1.2 0 1.2 0 1.2 0 1.2 0 1.2 0 1.2 0 1.2 0 1.2 0 1.2 0 1.2 0 1.2 0 1.2 0 1.2 0 1.2 0 1.2 0 1.2 0 1.2 0 1.2 0 1.2 0 1.2 0 1.2 0 1.2 0 1.2 0 1.2 0 1.2 0 1.2 0 1.2 0 1.2 0 1.2 0 1.2 0 1.2 0 1.2 0 1.2 0 1.2 0 1.2 0 1.2 0 1.2 0 1.2 0 1.2 0 1.2 0 1.2 0 1.2 0 1.2 0 1.2 0 1.2 0 1.2 0 1.2 0 1.2 0 1.2 0 1.2 0 1.3 0 1.2 0 1.2 0 1.2 0 1.2 0 1.2 0 1.2 0 1.2 0 1.2 0 1.2 0 1.2 0 1.2 0 1.2 0 1.2 0 1.2 0 1.2 0 1.2 0 1.2 0 1.2 0 1.2 0 1.2 0 1.2 0 1.2 0 1.2 0 1.2 0 1.2 0 1.2 0 1.2 0 1.2 0 1.2 0 1.2 0 1.2 0 1.2 0 1.2 0 1.2 0 1.2 0 1.2 0 1.2 0 1.2 0 1.2 0 1.2 0 1.2 0 1.2 0 1.2 0 1.2 0 1.2 0 1.2 0 1.2 0 1.2 0 1.2 0 1.3 0 1.2 0 1.2 0 1.2 0 1.2 0 1.2 0 1.2 0 1.2 0 1.2 0 1.2 0 1.2 0 1.2 0 1.2 0 1.2 0 1.2 0 1.2 0 1.2 0 1.2 0 1.2 0 1.2 0 1.2 0 1.2 0 1.2 0 1.2 0 1.2 0 1.2 0 1.2 0 1.2 0 1.2 0 1.2 0 1.2 0 1.2 0 1.2 0 1.2 0 1.2 0 1.2 0 1.2 0 1.2 0 1.2 0 1.2 0 1.2 0 1.2 0 1.2 0 1.2 0 1.2 0 1.2 0 1.2 0 1.2 0 1.2 0 1.2 0 1.3 0 1.2 0 1.2 0 1.2 0 1.2 0 1.2 0 1.2 0 1.2 0 1.2 0 1.2 0 1.2 0 1.2 0 1.2 0 1.2 0 1.2 0 1.2 0 1.2 0 1.2 0 1.2 0 1.2 0 1.2 0 1.2 0 1.2 0 1.2 0 1.2 0 1.2 0 1.2 0 1.2 0 1.2 0 1.2 0 1.2 0 1.2 0 1.2 0 1.2 0 1.2 0 1.2 0 1.2 0 1.2 0 1.2 0 1.2 0 1.2 0 1.2 0 1.2 0 1.2 0 1.2 0 1.2 0 1.2 0 1.2 0 1.2 0 1.2 0 1.3 0 1.2 0 1.2 0 1.2 0 1.2 0 1.2 0 1.2 0 1.2 0 1.2 0 1.2 0 1.2 0 1.2 0 1.2 0 1.2 0 1.2 0 1.2 0 1.2 0 1.2 0 1.2 0 1.2 0 1.2 0 1.2 0 1.2 0 1.2 0 1.2 0 1.2 0 1.2 0 1.2 0 1.2 0 1.2 0 1.2 0 1.2 0 1.2 0 1.2 0 1.2 0 1.2 0 1.2 0 1.2 0 1.2 0 1.2 0 1.2 0 1.2 0 1.2 0 1.2 0 1.2 0 1.2 0 1.2 0 1.2 0 1.2 0 1.2 0 1.2 0 1.3 0 1.2 0 1.2 0 1.2 0 1.2 0 1.2 0 1.2 0 1.2 0 1.2 0 1.2 0 1.2 0 1.2 0 1.2 0 1.2 0 1.2 0 1.2 0 1.2 0 1.2 0 1.2 0 1.2 0 1.2 0 1.2 0 1.2 0 1.2 0 1.2 0 1.2 0 1.2 0 1.2 0 1.2 0 1.2 0 1.2 0 1.2 0 1.2 0 1.2 0 1.2 0 1.2 0 1.2 0 1.2 0 1.2 0 1.2 0 1.2 0 1.2 0 1.2 0 1.2 0 1.2 0 1.2 0 1.2 0 1.2 0 1.2 0 1.2 0 1.3 0 1.2 0 1.2 0 1.2 0 1.2 0 1.2 0 1.2 0 1.2 0 1.2 0 1.2 0 1.2 0 1.2 0 1.2 0 1.2 0 1.2 0 1.2 0 1.2 0 1.2 0 1.2 0 1.2 0 1.2 0 1.2 0 1.2 0 1.2 0 1.2 0 1.2 0 1.2 0 1.2 0 1.2 0 1.2 0 1.2 0 1.2 0 1.2 0 1.2 0 1.2 0 1.2 0 1.2 0 1.2 0 1.2 0 1.2 0 1.2 0 1.2 0 1.2 0 1.2 0 1.2 0 1.2 0 1.2 0 1.2 0 1.2 0 1.2 0 1.3 0 1.2 0 1.2 0 1.2 0 1.2 0 1.2 0 1.2 0 1.2 0 1.2 0 1.2 0 1.2 0 1.2 0 1.2 0 1.2 0 1.2 0 1.2 0 1.2 0 1.2 0 1.2 0 1.2 0 1.2 0 1.2 0 1.2 0 1.2 0 1.2 0 1.2 0 1.2 0 1.2 0 1.2 0 1.2 0 1.2 0 1.2 0 1.2 0 1.2 0 1.2 0 1.2 0 1.2 0 1.2 0 1.2 0 1.2 0 1.2 0 1.2 0 1.2 0 1.2 0 1.2 0 1.2 0 1.2 0 1.2 0 1.2 0 1.2 0 1.3 0 1.2 0 1.2 0 1.2 0 1.2 0 1.2 0 1.2 0 1.2 0 1.2 0 1.2 0 1.2 0 1.2 0 1.2 0 1.2 0 1.2 0 1.2 0 1.2 0 1.2 0 1.2 0 1.2 0 1.2 0 1.2 0 1.2 0 0 93.1-1.2-.1-1.2-.4-1.2-1.3-1.2-1.3-1.2 0-1.2 0-1.2-.1-1.2 0-1.2 .1-1.2 1.4-1.2 1.5-1.2 .1-1.2-.2-1.2 0-1.2 .2-1.2-.9-1.2-1.5-1.2-.7-1.2-.3-1.2 0-1.2 .1-1.2 .1-1.3 .9-1.2 1.4-1.2 1-1.2 0-1.2-.1-1.2 0-1.2 0-1.2-1.1-1.2-1.4-1.2-.7-1.2 .1-1.2 .3-1.2-.1-1.2-.2-1.2 .3-1.2 1.4-1.2 1.3-1.2 .2-1.2 0-1.2 0-1.2-.1-1.2 0-1.2-.7-1.2-1.3-1.2-1.2-1.2-.2-1.2 0-1.2 .1-1.2 .1-1.2-.2-1.2 1-1.2 1.4-1.2 1.1-1.2 .1-1.2-.1-1.2-.1-1.2 0-1.2-.3-1.2-1.2-1.2-1.2-1.2-.4-1.2 0-1.2 .1-1.2-.1-1.2-.1-1.2 .2-1.2 1.4-1.2 1.4-1.2 .4-1.2-.1-1.3 0-1.2 0-1.2 0-1.2-1-1.2-1.2-1.2-1-1.2-.1-1.2-.1-1.2 0-1.2 .1-1.2 .1-1.2 1-1.2 1.2-1.2 1-1.2 .1-1.2 0-1.2 0-1.2 .1-1.2-.1-1.2-1.5-1.2-1.5-1.2-.6-1.2 .2-1.2 .1-1.2-.1-1.2-.1-1.2 .5-1.2 1.7-1.2 1.3-1.2-.1-1.2-.1-1.2-.2-1.2 0-1.2-1-1.2-1.4-1.2-.6-1.2 0-1.2-.2-1.2-.1-1.2 .2-1.2 1.8-1.2 1.7-1.2 .1-1.2 .1-1.2-.1-1.2-.3-1.2-1.6-1.2-1.5-1.2-.1-1.2 .2-1.3 0-1.2-.1-1.2 .9-1.2 1.6-1.2 .7-1.2-.2-1.2 0-1.2 .1-1.2-.3-1.2-1.4-1.2-1.5-1.2-.1-1.2 .1-1.2-.1-1.2-.1-1.2 .8-1.2 1.6-1.2 1-1.2 .1-1.2 0-1.2-.1-1.2-.5-1.2-1.5-1.2-1.2-1.2 .1-1.2 0-1.2-.1-1.2 .1-1.2 .6-1.2 1.4-1.2 1.3-1.2 0-1.2-.1-1.2-.1-1.2 .2-1.2-1.2-1.2-1.9-1.2-.6-1.2 .3-1.2 .1-1.2-.1-1.2 0-1.2 1.8-1.2 1.6-1.2 .1-1.2 0-1.2-.3-1.2-.9-1.2-1.8-1.2-.7-1.3 .3-1.2 0-1.2-.1-1.2-.1-1.2 1.5-1.2 1.6-1.2 .3-1.2-.1-1.2 0-1.2 0-1.2-.7-1.2-1.3-1.2-1.1-1.2-.1-1.2 .1-1.2 .2-1.2-.1-1.2 .6-1.2 1.3-1.2 .9-1.2 .2-1.2 .2-1.2 0-1.2-.5-1.2-1.4-1.2-1.3-1.2 .2-1.2-.1-1.2-.4-1.2-.2-1.2 .9-1.2 1.7-1.2 .9-1.2 .1-1.2 0-1.2 .1-1.2-.9-1.2-1.6-1.2-.7-1.2-.1-1.2-.1-1.2-.1-1.2 .1-1.2 1.3-1.2 1.5-1.2 .4-1.2-.1-1.2 .1-1.2 .2-1.2-.3-1.2-1.5-1.3-1.5-1.2 0-1.2 .1-1.2-.1-1.2-.3-1.2-.2-1.2 1.3-1.2 1.7-1.2 .8-1.2 .3-1.2-.1-1.2-.3-1.2-.5-1.2-1.4-1.2-1.5-1.2 .2-1.2 .2-1.2 .1-1.2-.2-1.2-.3-1.2 1.3-1.2 1.5-1.2 .3-1.2 .1-1.2 .1-1.2 0-1.2-.4-1.2-1.7-1.2-1.4-1.2 .3-1.2 .1-1.2 0-1.2 .2-1.2 0-1.2 1.2-1.2 1.5-1.2 .3-1.2-.2-1.2-.2-1.2 .1-1.2-.3-1.2-1.4-1.2-1.3-1.2 0-1.2 .3-1.2 .1-1.2-.2-1.2 .1-1.2 1.4-1.2 1.4-1.3 .3-1.2 0-1.2-.1-1.2-.1-1.2-.5-1.2-1.4-1.2-1.2-1.2 0-1.2 0-1.2-.1-1.2-.1-1.2 .3-1.2 1.5-1.2 1.4-1.2 .2-1.2 .1-1.2-.2-1.2 .1-1.2-.4-1.2-1.6-1.2-1.4-1.2 .1-1.2 0-1.2-.1-1.2 0-1.2 .4-1.2 1.3-1.2 1.6-1.2 .1-1.2-.3-1.2 .1-1.2 .3-1.2-.8-1.2-1.6-1.2-1.1-1.2 .2-1.2 0-1.2 0-1.2 .1-1.2 .3-1.2 1.3-1.2 1.4-1.2 0-1.2 0-1.2 0-1.2 .1-1.2-.5-1.2-1.5-1.2-1-1.2 .2-1.3 0-1.2-.2-1.2-.3-1.2 .3-1.2 1.5-1.2 1.4-1.2-.1-1.2 .1-1.2 .1-1.2 0-1.2-.7-1.2-1.3-1.2-1-1.2-.1-1.2 0-1.2 0-1.2-.3-1.2 0-1.2 1.5-1.2 1.4-1.2 .4-1.2 .1-1.2 0-1.2-.2-1.2 0-1.2-1.3-1.2-1.3-1.2-.5-1.2 .1-1.2 0-1.2-.1-1.2 .1-1.2 .3-1.2 1.3-1.2 1.4-1.2-.1-1.2-.1-1.2 .2-1.2 .2-1.2-.9-1.2-1.6-1.2-.7-1.2 .2-1.2-.4-1.2-.1-1.2 .3-1.2 0-1.2 1.3-1.2 1.4-1.2 .4-1.3-.1-1.2 .1-1.2 .1-1.2-.1-1.2-1.3-1.2-1.3-1.2-.6-1.2 0-1.2 0-1.2 .1-1.2 .1-1.2 .3-1.2 1.2-1.2 1.3-1.2 .2-1.2 .1-1.2-.3-1.2-.1-1.2 .3-1.2-1.1-1.2-1.7-1.2-.5-1.2 .2-1.2 0-1.2-.1-1.2-.2-1.2 .7-1.2 1.5-1.2 1.1-1.2 0-1.2-.1-1.2-2.7-1.2 0-1.2 .1-1.2 0-1.2-.5-1.2 .1-1.2 5.5-1.2 0-1.2 0-1.2 0-1.2 0-1.2 0-1.2 0-1.2 0-1.2 0-1.2 0-1.2 0-1.2 0-1.2 0-1.2 0Z" fill="#EF843C" fill-opacity="0.1" clip-path="url(#c4)"/><path d="M648.8 241.2l1.2 0 1.2 0 1.2 0 1.2 0 1.2 0 1.2 0 1.2 0 1.2 0 1.2 0 1.2 0 1.2 0 1.2 0 1.2 0 1.2-3.6 1.2-.1 1.2 .3 1.2-.1 1.2 0 1.2 .1 1.2 1.7 1.2 0 1.2 0 1.2-.7 1.2-1 1.2-.4 1.2 .2 1.2 .1 1.2-.1 1.2-.2 1.2 .3 1.2 1.1 1.2 .8 1.2-.1 1.2 0 1.2 .2 1.2 0 1.2-.2 1.2-.9 1.2-.8 1.2-.2 1.2 0 1.2-.1 1.2-.1 1.2 .1 1.2 .5 1.2 .8 1.2 .8 1.2 .1 1.2-.2 1.2-.1 1.3 .1 1.2-.3 1.2-.9 1.2-.9 1.2 0 1.2-.1 1.2 0 1.2 .2 1.2-.1 1.2 .7 1.2 .9 1.2 .4 1.2-.1 1.2 0 1.2 .2 1.2 0 1.2-.9 1.2-.8 1.2-.3 1.2 0 1.2-.1 1.2 0 1.2-.1 1.2 .3 1.2 1 1.2 .9 1.2 0 1.2 .2 1.2 0 1.2 0 1.2-.3 1.2-1 1.2-1 1.2 0 1.2 .2 1.2 0 1.2 0 1.2 0 1.2 .7 1.2 .9 1.2 .4 1.2 0 1.2 0 1.2-.1 1.2 .1 1.2-.9 1.2-1.1 1.2-.2 1.2 .2 1.2 0 1.3-.1 1.2-.1 1.2 .8 1.2 1 1.2 .3 1.2 0 1.2 .1 1.2 0 1.2-.1 1.2-.9 1.2-.8 1.2-.1 1.2-.1 1.2-.1 1.2 0 1.2-.1 1.2 .7 1.2 1.1 1.2 .5 1.2-.2 1.2-.1 1.2 .1 1.2 0 1.2-1 1.2-1 1.2-.2 1.2 .1 1.2 .1 1.2 0 1.2-.2 1.2 .9 1.2 1.2 1.2 .3 1.2-.1 1.2 0 1.2 0 1.2-.1 1.2-.9 1.2-.9 1.2-.2 1.2 0 1.2 0 1.2 0 1.2 0 1.2 .9 1.2 .9 1.2 .3 1.2 0 1.2 .2 1.2-.1 1.3-.2 1.2-1 1.2-.9 1.2-.1 1.2 .2 1.2-.1 1.2-.1 1.2 0 1.2 .8 1.2 .9 1.2 .2 1.2 0 1.2 .2 1.2 0 1.2-.3 1.2-.9 1.2-.8 1.2 0 1.2-.1 1.2-.1 1.2 0 1.2-.1 1.2 .9 1.2 1 1.2 .3 1.2 0 1.2 0 1.2 0 1.2-.3 1.2-.9 1.2-.9 1.2 .1 1.2 .2 1.2 0 1.2-.2 1.2-.1 1.2 1.1 1.2 .9 1.2 .3 1.2 .2 1.2 0 1.2-.2 1.2-.6 1.2-1.1 1.2-.9 1.2 .2 1.2 .2 1.2 0 1.2 0 1.2 0 1.3 1 1.2 .9 1.2 .3 1.2-.1 1.2-.1 1.2 0 1.2-.2 1.2-1 1.2-.9 1.2-.1 1.2 0 1.2 .1 1.2 0 1.2 .6 1.2 1.1 1.2 .5 1.2 0 1.2 .1 1.2 0 1.2-.6 1.2-1.2 1.2-.7 1.2 0 1.2 .3 1.2 .1 1.2 0 1.2 .9 1.2 .9 1.2 .2 1.2 0 1.2 0 1.2-.1 1.2-.6 1.2-1.1 1.2-.4 1.2 .1 1.2 0 1.2-.1 1.2 .1 1.2 .7 1.2 1 1.2 .4 1.2 0 1.2 0 1.2 .1 1.2-.2 1.2-1 1.2-1 1.2 0 1.2 .1 1.2-.1 1.3-.1 1.2 .6 1.2 1.1 1.2 .4 1.2 .2 1.2 0 1.2-.1 1.2-.9 1.2-1.2 1.2 0 1.2 .1 1.2 0 1.2-.1 1.2 .3 1.2 1 1.2 .9 1.2-.1 1.2 .1 1.2 0 1.2 0 1.2-.8 1.2-.9 1.2-.4 1.2-.1 1.2 0 1.2 0 1.2-.1 1.2 .9 1.2 1.1 1.2 .3 1.2 0 1.2 0 1.2-.1 1.2-.7 1.2-1 1.2-.5 1.2 0 1.2-.1 1.2 .1 1.2 .1 1.2 .9 1.2 .9 1.2 .2 1.2-.1 1.2 0 1.2 0 1.2-.4 1.2-.9 1.2-.6 1.2 0 1.3-.1 1.2 0 1.2 .1 1.2 1 1.2 1.1 1.2 .1 1.2 0 1.2 0 1.2-.1 1.2-1.1 1.2-1.1 1.2-.1 1.2 0 1.2 .1 1.2-.1 1.2 .4 1.2 1.1 1.2 .7 1.2 0 1.2 .1 1.2 0 1.2 0 1.2-.9 1.2-.9 1.2-.4 1.2 0 1.2 .1 1.2 0 1.2 0 1.2 .3 1.2 1 1.2 .9 1.2 0 1.2-.1 1.2-.1 1.2 0 1.2 .1 1.2-.6 1.2-.8 1.2-.7 1.2 0 1.2-.1 1.2 0 1.2 .1 1.2 0 1.2 .6 1.2 .8 1.2 .7 1.2 .1 1.2-.1 1.3 0 1.2 .1 1.2-.2 1.2-.8 1.2-1.1 1.2-.2 1.2 .1 1.2 .1 1.2-.1 1.2 0 1.2 .3 1.2 .8 1.2 .8 1.2 .2 1.2-.1 1.2 .1 1.2 0 1.2-.1 1.2-.6 1.2-.9 1.2-.6 1.2 0 1.2 0 1.2 0 1.2 0 1.2 .1 1.2 .7 1.2 .8 1.2 .5 1.2 .1 1.2 .1 1.2 0 1.2 0 1.2-.3 1.2-.7 1.2-.9 1.2-.4 1.2 0 1.2 .2 1.2-.1 1.2-.1 1.2 .4 1.2 1 1.2 .8 1.2-.1 1.2 0 1.2 .1 1.2 .1 1.2-.8 1.2-.9 1.3-.6 1.2 .1 1.2 0 1.2 0 1.2 0 1.2 .4 1.2 1 1.2 .7 1.2 0 1.2-.1 1.2 .1 1.2-.1 1.2-1.1 1.2-1 1.2 .1 1.2 0 1.2 .1 1.2 .1 1.2 0 1.2 .7 1.2 .9 1.2 .3 1.2-.1" stroke="#7EB26D" fill="none" clip-path="url(#c4)"/><path d="M648.8 240.9l1.2 0 1.2 0 1.2 0 1.2 0 1.2 0 1.2 0 1.2 0 1.2 0 1.2 0 1.2 0 1.2 0 1.2 0 1.2 0 1.2-5.5 1.2-.1 1.2 .5 1.2 0 1.2-.1 1.2 0 1.2 2.7 1.2 0 1.2 .1 1.2-1.1 1.2-1.5 1.2-.7 1.2 .2 1.2 .1 1.2 0 1.2-.2 1.2 .5 1.2 1.7 1.2 1.1 1.2-.3 1.2 .1 1.2 .3 1.2-.1 1.2-.2 1.2-1.3 1.2-1.2 1.2-.3 1.2-.1 1.2-.1 1.2 0 1.2-.1 1.2 .7 1.2 1.3 1.2 1.3 1.2 .1 1.2-.1 1.2-.1 1.3 .1 1.2-.4 1.2-1.4 1.2-1.3 1.2-.1 1.2-.2 1.2 .1 1.2 .4 1.2-.2 1.2 .7 1.2 1.6 1.2 .9 1.2-.2 1.2-.2 1.2 .1 1.2 .1 1.2-1.4 1.2-1.3 1.2-.4 1.2 0 1.2 .1 1.2 0 1.2-.1 1.2 .5 1.2 1.3 1.2 1.3 1.2 0 1.2 .2 1.2 0 1.2-.1 1.2-.4 1.2-1.4 1.2-1.5 1.2 0 1.2 .3 1.2 0 1.2 0 1.2 .1 1.2 1 1.2 1.3 1.2 .6 1.2 .1 1.2-.1 1.2-.1 1.2 .1 1.2-1.4 1.2-1.5 1.2-.3 1.2 .3 1.2 .2 1.3 0 1.2-.2 1.2 1 1.2 1.5 1.2 .5 1.2-.1 1.2 0 1.2 0 1.2 0 1.2-1.4 1.2-1.3 1.2-.3 1.2-.1 1.2 0 1.2 0 1.2-.2 1.2 1.1 1.2 1.6 1.2 .8 1.2-.3 1.2-.1 1.2 .3 1.2-.1 1.2-1.6 1.2-1.4 1.2-.3 1.2 0 1.2 .1 1.2 0 1.2-.1 1.2 1.4 1.2 1.6 1.2 .4 1.2-.1 1.2 .1 1.2 0 1.2-.2 1.2-1.4 1.2-1.5 1.2-.3 1.2 .1 1.2 .1 1.2 0 1.2 0 1.2 1.2 1.2 1.4 1.2 .5 1.2 .1 1.2 .1 1.2 0 1.3-.3 1.2-1.4 1.2-1.4 1.2-.1 1.2 .2 1.2-.1 1.2-.3 1.2 0 1.2 1.3 1.2 1.4 1.2 .3 1.2-.1 1.2 .2 1.2 .2 1.2-.3 1.2-1.5 1.2-1.2 1.2 0 1.2-.2 1.2 0 1.2-.1 1.2-.3 1.2 1.4 1.2 1.7 1.2 .4 1.2 0 1.2-.1 1.2-.1 1.2-.3 1.2-1.5 1.2-1.3 1.2 .3 1.2 .2 1.2-.1 1.2-.2 1.2-.2 1.2 1.5 1.2 1.4 1.2 .5 1.2 .3 1.2 .1 1.2-.3 1.2-.8 1.2-1.7 1.2-1.3 1.2 .2 1.2 .3 1.2 .1 1.2-.1 1.2 0 1.3 1.5 1.2 1.5 1.2 .3 1.2-.2 1.2-.1 1.2 .1 1.2-.4 1.2-1.6 1.2-1.2 1.2-.1 1.2 0 1.2 .2 1.2 .1 1.2 .7 1.2 1.6 1.2 .9 1.2-.1 1.2 0 1.2-.1 1.2-.9 1.2-1.7 1.2-.9 1.2 .2 1.2 .4 1.2 0 1.2-.1 1.2 1.3 1.2 1.4 1.2 .5 1.2 0 1.2-.2 1.2-.2 1.2-.9 1.2-1.3 1.2-.6 1.2 .1 1.2-.2 1.2-.1 1.2 .1 1.2 1.1 1.2 1.3 1.2 .7 1.2 0 1.2 0 1.2 .1 1.2-.3 1.2-1.6 1.2-1.5 1.2 .1 1.2 .1 1.2 0 1.3-.3 1.2 .7 1.2 1.8 1.2 .9 1.2 .3 1.2 0 1.2-.1 1.2-1.6 1.2-1.8 1.2 0 1.2 .1 1.2-.1 1.2-.3 1.2 .6 1.2 1.9 1.2 1.2 1.2-.2 1.2 .1 1.2 .1 1.2 0 1.2-1.3 1.2-1.4 1.2-.6 1.2-.1 1.2 .1 1.2 0 1.2-.1 1.2 1.2 1.2 1.5 1.2 .5 1.2 .1 1.2 0 1.2-.1 1.2-1 1.2-1.6 1.2-.8 1.2 .1 1.2 .1 1.2-.1 1.2 .1 1.2 1.5 1.2 1.4 1.2 .3 1.2-.1 1.2 0 1.2 .2 1.2-.7 1.2-1.6 1.2-.9 1.2 .1 1.3 0 1.2-.2 1.2 .1 1.2 1.4 1.2 1.7 1.2 .3 1.2 .1 1.2-.1 1.2-.1 1.2-1.7 1.2-1.8 1.2-.2 1.2 .1 1.2 .2 1.2 0 1.2 .6 1.2 1.4 1.2 1 1.2 0 1.2 .2 1.2 .1 1.2 .1 1.2-1.3 1.2-1.7 1.2-.5 1.2 .1 1.2 .1 1.2-.1 1.2-.2 1.2 .6 1.2 1.5 1.2 1.5 1.2 .1 1.2-.1 1.2 0 1.2 0 1.2-.1 1.2-1 1.2-1.2 1.2-1 1.2-.1 1.2-.1 1.2 0 1.2 0 1.2 .2 1.2 1 1.2 1.2 1.2 1 1.2 0 1.2 0 1.3 0 1.2 .1 1.2-.4 1.2-1.4 1.2-1.4 1.2-.2 1.2 .1 1.2 .1 1.2-.1 1.2 0 1.2 .3 1.2 1.3 1.2 1.2 1.2 .3 1.2 0 1.2 .1 1.2 .1 1.2-.1 1.2-1.1 1.2-1.4 1.2-1 1.2 .2 1.2-.1 1.2-.2 1.2 .1 1.2 .1 1.2 1.3 1.2 1.3 1.2 .7 1.2 0 1.2 .1 1.2 0 1.2 0 1.2-.2 1.2-1.3 1.2-1.4 1.2-.3 1.2 .2 1.2 .1 1.2-.3 1.2-.1 1.2 .7 1.2 1.4 1.2 1.1 1.2-.1 1.2 .1 1.2 .1 1.2 0 1.2-1 1.2-1.4 1.3-.9 1.2-.1 1.2-.1 1.2 0 1.2 .3 1.2 .7 1.2 1.5 1.2 .9 1.2-.2 1.2 0 1.2 .1 1.2 0 1.2-1.5 1.2-1.4 1.2-.1 1.2 0 1.2 .1 1.2 0 1.2 0 1.2 1.3 1.2 1.3 1.2 .4 1.2 .1" stroke="#EAB839" fill="none" clip-path="url(#c4)"/><path d="M648.8 240.8l1.2 0 1.2 0 1.2 0 1.2 0 1.2 0 1.2 0 1.2 0 1.2 0 1.2 0 1.2 0 1.2 0 1.2 0 1.2 0 1.2-5.5 1.2-.1 1.2 .5 1.2 0 1.2-.1 1.2 0 1.2 2.7 1.2 .1 1.2 0 1.2-1.1 1.2-1.5 1.2-.7 1.2 .2 1.2 .1 1.2 0 1.2-.2 1.2 .5 1.2 1.7 1.2 1.1 1.2-.3 1.2 .1 1.2 .3 1.2-.1 1.2-.2 1.2-1.3 1.2-1.2 1.2-.3 1.2-.1 1.2-.1 1.2 0 1.2 0 1.2 .6 1.2 1.3 1.2 1.3 1.2 .1 1.2-.1 1.2-.1 1.3 .1 1.2-.4 1.2-1.4 1.2-1.3 1.2 0 1.2-.3 1.2 .1 1.2 .4 1.2-.2 1.2 .7 1.2 1.6 1.2 .9 1.2-.2 1.2-.2 1.2 .1 1.2 .1 1.2-1.4 1.2-1.3 1.2-.3 1.2-.1 1.2 .1 1.2 0 1.2-.1 1.2 .5 1.2 1.3 1.2 1.3 1.2 0 1.2 .2 1.2 0 1.2-.1 1.2-.4 1.2-1.4 1.2-1.5 1.2 0 1.2 .3 1.2 0 1.2 0 1.2 .1 1.2 1 1.2 1.3 1.2 .7 1.2 0 1.2-.1 1.2-.1 1.2 .1 1.2-1.4 1.2-1.5 1.2-.3 1.2 .3 1.2 .2 1.3 0 1.2-.2 1.2 1 1.2 1.5 1.2 .5 1.2-.1 1.2 0 1.2 0 1.2 0 1.2-1.4 1.2-1.3 1.2-.3 1.2-.1 1.2 0 1.2 0 1.2-.2 1.2 1.1 1.2 1.6 1.2 .8 1.2-.3 1.2-.1 1.2 .3 1.2-.1 1.2-1.6 1.2-1.3 1.2-.4 1.2 0 1.2 .1 1.2 0 1.2-.1 1.2 1.4 1.2 1.6 1.2 .4 1.2-.1 1.2 .2 1.2-.1 1.2-.2 1.2-1.4 1.2-1.5 1.2-.3 1.2 .1 1.2 .1 1.2 0 1.2 0 1.2 1.2 1.2 1.4 1.2 .5 1.2 .1 1.2 .1 1.2 0 1.3-.3 1.2-1.4 1.2-1.4 1.2-.1 1.2 .2 1.2-.1 1.2-.3 1.2 0 1.2 1.3 1.2 1.4 1.2 .3 1.2-.1 1.2 .2 1.2 .2 1.2-.3 1.2-1.5 1.2-1.2 1.2 0 1.2-.2 1.2 0 1.2-.1 1.2-.3 1.2 1.4 1.2 1.7 1.2 .4 1.2 0 1.2-.1 1.2-.1 1.2-.3 1.2-1.5 1.2-1.3 1.2 .3 1.2 .2 1.2-.1 1.2-.2 1.2-.2 1.2 1.5 1.2 1.4 1.2 .5 1.2 .3 1.2 .1 1.2-.3 1.2-.8 1.2-1.7 1.2-1.3 1.2 .2 1.2 .3 1.2 .1 1.2-.1 1.2 0 1.3 1.5 1.2 1.5 1.2 .3 1.2-.2 1.2-.1 1.2 .1 1.2-.4 1.2-1.5 1.2-1.3 1.2-.1 1.2 .1 1.2 .1 1.2 .1 1.2 .7 1.2 1.6 1.2 .9 1.2-.1 1.2 0 1.2-.1 1.2-.9 1.2-1.7 1.2-.9 1.2 .2 1.2 .4 1.2 .1 1.2-.2 1.2 1.3 1.2 1.4 1.2 .5 1.2 0 1.2-.2 1.2-.2 1.2-.9 1.2-1.3 1.2-.6 1.2 .1 1.2-.2 1.2-.1 1.2 .1 1.2 1.1 1.2 1.3 1.2 .7 1.2 0 1.2 0 1.2 .1 1.2-.3 1.2-1.6 1.2-1.5 1.2 .1 1.2 .1 1.2 0 1.3-.3 1.2 .7 1.2 1.8 1.2 .9 1.2 .3 1.2 0 1.2-.1 1.2-1.6 1.2-1.8 1.2 0 1.2 .1 1.2-.1 1.2-.3 1.2 .6 1.2 1.9 1.2 1.2 1.2-.2 1.2 .1 1.2 .1 1.2 0 1.2-1.3 1.2-1.4 1.2-.6 1.2-.1 1.2 .1 1.2 0 1.2-.1 1.2 1.2 1.2 1.5 1.2 .5 1.2 .1 1.2 0 1.2-.1 1.2-1 1.2-1.6 1.2-.8 1.2 .1 1.2 .1 1.2-.1 1.2 .1 1.2 1.5 1.2 1.4 1.2 .3 1.2-.1 1.2 0 1.2 .2 1.2-.7 1.2-1.6 1.2-.9 1.2 .1 1.3 0 1.2-.2 1.2 .1 1.2 1.5 1.2 1.6 1.2 .3 1.2 .1 1.2-.1 1.2-.1 1.2-1.7 1.2-1.8 1.2-.2 1.2 .1 1.2 .2 1.2 0 1.2 .6 1.2 1.4 1.2 1 1.2 0 1.2 .2 1.2 .1 1.2 .1 1.2-1.3 1.2-1.7 1.2-.5 1.2 .1 1.2 .1 1.2-.1 1.2-.2 1.2 .6 1.2 1.5 1.2 1.5 1.2 .1 1.2-.1 1.2 0 1.2 0 1.2-.1 1.2-1 1.2-1.2 1.2-1 1.2-.1 1.2-.1 1.2 0 1.2 .1 1.2 .1 1.2 1 1.2 1.2 1.2 1 1.2 0 1.2 0 1.3 0 1.2 .1 1.2-.4 1.2-1.4 1.2-1.4 1.2-.2 1.2 .1 1.2 .1 1.2-.1 1.2 0 1.2 .4 1.2 1.2 1.2 1.2 1.2 .3 1.2 0 1.2 .1 1.2 .1 1.2-.1 1.2-1.1 1.2-1.4 1.2-1 1.2 .2 1.2-.1 1.2-.1 1.2 0 1.2 .2 1.2 1.2 1.2 1.3 1.2 .7 1.2 0 1.2 .1 1.2 0 1.2 0 1.2-.2 1.2-1.3 1.2-1.4 1.2-.3 1.2 .2 1.2 .1 1.2-.3 1.2-.1 1.2 .7 1.2 1.4 1.2 1.1 1.2 0 1.2 0 1.2 .1 1.2 0 1.2-1 1.2-1.4 1.3-.9 1.2-.1 1.2-.1 1.2 0 1.2 .3 1.2 .7 1.2 1.5 1.2 .9 1.2-.2 1.2 0 1.2 .2 1.2-.1 1.2-1.5 1.2-1.4 1.2-.1 1.2 0 1.2 .1 1.2 0 1.2 0 1.2 1.3 1.2 1.3 1.2 .4 1.2 .1" stroke="#6ED0E0" fill="none" clip-path="url(#c4)"/><path d="M648.8 145.5l1.2 0 1.2 0 1.2 0 1.2 0 1.2 0 1.2 0 1.2 0 1.2 0 1.2 0 1.2 0 1.2 0 1.2 0 1.2 0 1.2 0 1.2 0 1.2 0 1.2 0 1.2 0 1.2 0 1.2 0 1.2 0 1.2 0 1.2 0 1.2 0 1.2 0 1.2 0 1.2 0 1.2 0 1.2 0 1.2 0 1.2 0 1.2 0 1.2 0 1.2 0 1.2 0 1.2 0 1.2 0 1.2 0 1.2 0 1.2 0 1.2 0 1.2 0 1.2 0 1.2 0 1.2 0 1.2 0 1.2 0 1.2 0 1.2 0 1.2 0 1.3 0 1.2 0 1.2 0 1.2 0 1.2 0 1.2 0 1.2 0 1.2 0 1.2 0 1.2 0 1.2 0 1.2 0 1.2 0 1.2 0 1.2 0 1.2 0 1.2 0 1.2 0 1.2 0 1.2 0 1.2 0 1.2 0 1.2 0 1.2 0 1.2 0 1.2 0 1.2 0 1.2 0 1.2 0 1.2 0 1.2 0 1.2 0 1.2 0 1.2 0 1.2 0 1.2 0 1.2 0 1.2 0 1.2 0 1.2 0 1.2 0 1.2 0 1.2 0 1.2 0 1.2 0 1.2 0 1.2 0 1.2 0 1.2 0 1.2 0 1.3 0 1.2 0 1.2 0 1.2 0 1.2 0 1.2 0 1.2 0 1.2 0 1.2 0 1.2 0 1.2 0 1.2 0 1.2 0 1.2 0 1.2 0 1.2 0 1.2 0 1.2 0 1.2 0 1.2 0 1.2 0 1.2 0 1.2 0 1.2 0 1.2 0 1.2 0 1.2 0 1.2 0 1.2 0 1.2 0 1.2 0 1.2 0 1.2 0 1.2 0 1.2 0 1.2 0 1.2 0 1.2 0 1.2 0 1.2 0 1.2 0 1.2 0 1.2 0 1.2 0 1.2 0 1.2 0 1.2 0 1.2 0 1.2 0 1.2 0 1.3 0 1.2 0 1.2 0 1.2 0 1.2 0 1.2 0 1.2 0 1.2 0 1.2 0 1.2 0 1.2 0 1.2 0 1.2 0 1.2 0 1.2 0 1.2 0 1.2 0 1.2 0 1.2 0 1.2 0 1.2 0 1.2 0 1.2 0 1.2 0 1.2 0 1.2 0 1.2 0 1.2 0 1.2 0 1.2 0 1.2 0 1.2 0 1.2 0 1.2 0 1.2 0 1.2 0 1.2 0 1.2 0 1.2 0 1.2 0 1.2 0 1.2 0 1.2 0 1.2 0 1.2 0 1.2 0 1.2 0 1.2 0 1.2 0 1.2 0 1.3 0 1.2 0 1.2 0 1.2 0 1.2 0 1.2 0 1.2 0 1.2 0 1.2 0 1.2 0 1.2 0 1.2 0 1.2 0 1.2 0 1.2 0 1.2 0 1.2 0 1.2 0 1.2 0 1.2 0 1.2 0 1.2 0 1.2 0 1.2 0 1.2 0 1.2 0 1.2 0 1.2 0 1.2 0 1.2 0 1.2 0 1.2 0 1.2 0 1.2 0 1.2 0 1.2 0 1.2 0 1.2 0 1.2 0 1.2 0 1.2 0 1.2 0 1.2 0 1.2 0 1.2 0 1.2 0 1.2 0 1.2 0 1.2 0 1.2 0 1.2 0 1.3 0 1.2 0 1.2 0 1.2 0 1.2 0 1.2 0 1.2 0 1.2 0 1.2 0 1.2 0 1.2 0 1.2 0 1.2 0 1.2 0 1.2 0 1.2 0 1.2 0 1.2 0 1.2 0 1.2 0 1.2 0 1.2 0 1.2 0 1.2 0 1.2 0 1.2 0 1.2 0 1.2 0 1.2 0 1.2 0 1.2 0 1.2 0 1.2 0 1.2 0 1.2 0 1.2 0 1.2 0 1.2 0 1.2 0 1.2 0 1.2 0 1.2 0 1.2 0 1.2 0 1.2 0 1.2 0 1.2 0 1.2 0 1.2 0 1.2 0 1.3 0 1.2 0 1.2 0 1.2 0 1.2 0 1.2 0 1.2 0 1.2 0 1.2 0 1.2 0 1.2 0 1.2 0 1.2 0 1.2 0 1.2 0 1.2 0 1.2 0 1.2 0 1.2 0 1.2 0 1.2 0 1.2 0 1.2 0 1.2 0 1.2 0 1.2 0 1.2 0 1.2 0 1.2 0 1.2 0 1.2 0 1.2 0 1.2 0 1.2 0 1.2 0 1.2 0 1.2 0 1.2 0 1.2 0 1.2 0 1.2 0 1.2 0 1.2 0 1.2 0 1.2 0 1.2 0 1.2 0 1.2 0 1.2 0 1.2 0 1.3 0 1.2 0 1.2 0 1.2 0 1.2 0 1.2 0 1.2 0 1.2 0 1.2 0 1.2 0 1.2 0 1.2 0 1.2 0 1.2 0 1.2 0 1.2 0 1.2 0 1.2 0 1.2 0 1.2 0 1.2 0 1.2 0 1.2 0 1.2 0 1.2 0 1.2 0 1.2 0 1.2 0 1.2 0 1.2 0 1.2 0 1.2 0 1.2 0 1.2 0 1.2 0 1.2 0 1.2 0 1.2 0 1.2 0 1.2 0 1.2 0 1.2 0 1.2 0 1.2 0 1.2 0 1.2 0 1.2 0 1.2 0 1.2 0 1.2 0 1.3 0 1.2 0 1.2 0 1.2 0 1.2 0 1.2 0 1.2 0 1.2 0 1.2 0 1.2 0 1.2 0 1.2 0 1.2 0 1.2 0 1.2 0 1.2 0 1.2 0 1.2 0 1.2 0 1.2 0 1.2 0 1.2 0 1.2 0" stroke="#EF843C" fill="none" clip-path="url(#c4)"/><rect x="624" y="278.2" width="14" height="4" rx="1" fill="#7EB26D"/><text x="646.00" y="283.20" font-size="12" fill="#ccccdc" text-anchor="start" textLength="24.87" lengthAdjust="spacingAndGlyphs">User</text><text x="677.35" y="283.20" font-size="12" fill="#ccccdc" text-anchor="start" textLength="72.03" lengthAdjust="spacingAndGlyphs">Min: 0.0553%</text><text x="755.86" y="283.20" font-size="12" fill="#ccccdc" text-anchor="start" textLength="60.24" lengthAdjust="spacingAndGlyphs">Avg: 2.23%</text><rect x="826" y="278.2" width="14" height="4" rx="1" fill="#EAB839"/><text x="848.00" y="283.20" font-size="12" fill="#ccccdc" text-anchor="start" textLength="39.42" lengthAdjust="spacingAndGlyphs">System</text><text x="893.92" y="283.20" font-size="12" fill="#ccccdc" text-anchor="start" textLength="72.30" lengthAdjust="spacingAndGlyphs">Min: 0.0969%</text><text x="972.73" y="283.20" font-size="12" fill="#ccccdc" text-anchor="start" textLength="60.47" lengthAdjust="spacingAndGlyphs">Avg: 1.80%</text><rect x="624" y="296.4" width="14" height="4" rx="1" fill="#6ED0E0"/><text x="646.00" y="301.40" font-size="12" fill="#ccccdc" text-anchor="start" textLength="31.24" lengthAdjust="spacingAndGlyphs">Iowait</text><text x="683.82" y="301.40" font-size="12" fill="#ccccdc" text-anchor="start" textLength="79.78" lengthAdjust="spacingAndGlyphs">Min: 0.00104%</text><text x="770.18" y="301.40" font-size="12" fill="#ccccdc" text-anchor="start" textLength="67.82" lengthAdjust="spacingAndGlyphs">Avg: 0.106%</text><rect x="848" y="296.4" width="14" height="4" rx="1" fill="#EF843C"/><text x="870.00" y="301.40" font-size="12" fill="#ccccdc" text-anchor="start" textLength="18.37" lengthAdjust="spacingAndGlyphs">idle</text><text x="894.85" y="301.40" font-size="12" fill="#ccccdc" text-anchor="start" textLength="59.02" lengthAdjust="spacingAndGlyphs">Min: 93.3%</text><text x="960.36" y="301.40" font-size="12" fill="#ccccdc" text-anchor="start" textLength="60.34" lengthAdjust="spacingAndGlyphs">Avg: 95.7%</text><path d="M659.0 469.5H1161.8M659.0 437.5H1161.8M659.0 405.5H1161.8M659.0 373.5H1161.8M691.5 373.0V469.5M762.5 373.0V469.5M833.5 373.0V469.5M903.5 373.0V469.5M974.5 373.0V469.5M1045.5 373.0V469.5M1115.5 373.0V469.5" stroke="#9b9b9b" stroke-opacity="0.3" stroke-width="1" fill="none"/><text x="653.00" y="471.90" font-size="11.5" fill="#c7c8d0" text-anchor="end">0 MB</text><text x="653.00" y="439.90" font-size="11.5" fill="#c7c8d0" text-anchor="end">50 GB</text><text x="653.00" y="407.90" font-size="11.5" fill="#c7c8d0" text-anchor="end">100 GB</text><text x="653.00" y="375.90" font-size="11.5" fill="#c7c8d0" text-anchor="end">150 GB</text><text x="691.97" y="487.20" font-size="11.5" fill="#c7c8d0" text-anchor="middle">14:00</text><text x="762.62" y="487.20" font-size="11.5" fill="#c7c8d0" text-anchor="middle">14:05</text><text x="833.27" y="487.20" font-size="11.5" fill="#c7c8d0" text-anchor="middle">14:10</text><text x="903.92" y="487.20" font-size="11.5" fill="#c7c8d0" text-anchor="middle">14:15</text><text x="974.57" y="487.20" font-size="11.5" fill="#c7c8d0" text-anchor="middle">14:20</text><text x="1045.23" y="487.20" font-size="11.5" fill="#c7c8d0" text-anchor="middle">14:25</text><text x="1115.88" y="487.20" font-size="11.5" fill="#c7c8d0" text-anchor="middle">14:30</text><clipPath id="c5"><rect x="659.0" y="372.0" width="502.8" height="98.5"/></clipPath><path d="M659 464.9l2.4 0 2.3-.1 2.4 .1 2.3-.1 2.4 0 2.3 0 2.4-.2 2.3-.1 2.4-.1 2.4 0 2.3 0 2.4 .1 2.3-.1 2.4 0 2.3 0 2.4-.1 2.3 0 2.4 .1 2.3 0 2.4 0 2.4 0 2.3 .1 2.4-.1 2.3 0 2.4-.1 2.3 .1 2.4-.1 2.3 .1 2.4 0 2.4 0 2.3 0 2.4 0 2.3 0 2.4 0 2.3-.1 2.4 .1 2.3-.1 2.4 0 2.3 0 2.4 .1 2.4-.2 2.3 .1 2.4-.1 2.3 .1 2.4 0 2.3 0 2.4-.1 2.3 .1 2.4 0 2.4 0 2.3 0 2.4 0 2.3-.1 2.4 0 2.3 0 2.4 .1 2.3 0 2.4-.1 2.3 0 2.4 .1 2.4-.1 2.3 0 2.4 0 2.3 0 2.4 0 2.3-.1 2.4 .1 2.3-.1 2.4 .2 2.4-.2 2.3 .1 2.4-.1 2.3 .1 2.4-.1 2.3 0 2.4 0 2.3 .1 2.4 0 2.3-.1 2.4 0 2.4-.1 2.3 .2 2.4-.2 2.3 .2 2.4-.2 2.3 .2 2.4 0 2.3-.2 2.4 .1 2.4 0 2.3-.1 2.4 0 2.3 .1 2.4 0 2.3-.2 2.4 .1 2.3 0 2.4 0 2.3 0 2.4-.1 2.4 .1 2.3-.1 2.4 .2 2.3-.2 2.4 .1 2.3-.1 2.4 0 2.3 0 2.4 0 2.4 .1 2.3-.1 2.4 0 2.3 0 2.4 0 2.3 0 2.4 0 2.3 0 2.4 0 2.3 .1 2.4 0 2.4-.2 2.3 .2 2.4-.2 2.3 0 2.4 0 2.3 0 2.4 .1 2.3-.1 2.4 0 2.4 0 2.3 .1 2.4 0 2.3 0 2.4-.1 2.3 0 2.4 0 2.3-.1 2.4 0 2.3 0 2.4 .1 2.4 0 2.3 0 2.4 0 2.3-.1 2.4 .1 2.3 0 2.4 0 2.3 0 2.4-.1 2.4 0 2.3 .1 2.4-.1 2.3 .1 2.4-.2 2.3 .1 2.4 0 2.3-.1 2.4 .1 2.4 0 2.3 .1 2.4-.1 2.3 0 2.4 0 2.3 0 2.4 0 2.3-.1 2.4 0 2.3 0 2.4 0 2.4 .1 2.3-.1 2.4 .1 2.3 0 2.4-.2 2.3 0 2.4 .1 2.3 0 2.4 0 2.4 0 2.3-.1 2.4 0 2.3 0 2.4 .1 2.3 0 2.4-.1 2.3 .1 2.4-.1 2.3 .1 2.4 0 2.4-.1 2.3 .1 2.4 0 2.3 0 2.4 0 2.3-.1 2.4 .1 2.3-.1 2.4 0 2.4 0 2.3-.1 2.4 .1 2.3 0 2.4 0 2.3 0 2.4 0 2.3-.1 2.4 .1 2.3-.1 2.4 .1 2.4-.2 2.3 .1 2.4 0 0 6.1-2.4 0-2.3 0-2.4 0-2.4 0-2.3 0-2.4 0-2.3 0-2.4 0-2.3 0-2.4 0-2.3 0-2.4 0-2.3 0-2.4 0-2.4 0-2.3 0-2.4 0-2.3 0-2.4 0-2.3 0-2.4 0-2.3 0-2.4 0-2.4 0-2.3 0-2.4 0-2.3 0-2.4 0-2.3 0-2.4 0-2.3 0-2.4 0-2.3 0-2.4 0-2.4 0-2.3 0-2.4 0-2.3 0-2.4 0-2.3 0-2.4 0-2.3 0-2.4 0-2.4 0-2.3 0-2.4 0-2.3 0-2.4 0-2.3 0-2.4 0-2.3 0-2.4 0-2.3 0-2.4 0-2.4 0-2.3 0-2.4 0-2.3 0-2.4 0-2.3 0-2.4 0-2.3 0-2.4 0-2.4 0-2.3 0-2.4 0-2.3 0-2.4 0-2.3 0-2.4 0-2.3 0-2.4 0-2.4 0-2.3 0-2.4 0-2.3 0-2.4 0-2.3 0-2.4 0-2.3 0-2.4 0-2.3 0-2.4 0-2.4 0-2.3 0-2.4 0-2.3 0-2.4 0-2.3 0-2.4 0-2.3 0-2.4 0-2.4 0-2.3 0-2.4 0-2.3 0-2.4 0-2.3 0-2.4 0-2.3 0-2.4 0-2.3 0-2.4 0-2.4 0-2.3 0-2.4 0-2.3 0-2.4 0-2.3 0-2.4 0-2.3 0-2.4 0-2.4 0-2.3 0-2.4 0-2.3 0-2.4 0-2.3 0-2.4 0-2.3 0-2.4 0-2.3 0-2.4 0-2.4 0-2.3 0-2.4 0-2.3 0-2.4 0-2.3 0-2.4 0-2.3 0-2.4 0-2.4 0-2.3 0-2.4 0-2.3 0-2.4 0-2.3 0-2.4 0-2.3 0-2.4 0-2.3 0-2.4 0-2.4 0-2.3 0-2.4 0-2.3 0-2.4 0-2.3 0-2.4 0-2.3 0-2.4 0-2.4 0-2.3 0-2.4 0-2.3 0-2.4 0-2.3 0-2.4 0-2.3 0-2.4 0-2.3 0-2.4 0-2.4 0-2.3 0-2.4 0-2.3 0-2.4 0-2.3 0-2.4 0-2.3 0-2.4 0-2.4 0-2.3 0-2.4 0-2.3 0-2.4 0-2.3 0-2.4 0-2.3 0-2.4 0-2.3 0-2.4 0-2.4 0-2.3 0-2.4 0-2.3 0-2.4 0-2.3 0-2.4 0-2.3 0-2.4 0-2.4 0-2.3 0-2.4 0-2.3 0-2.4 0-2.3 0-2.4 0-2.3 0-2.4 0-2.3 0-2.4 0-2.4 0-2.3 0-2.4 0-2.3 0-2.4 0-2.3 0-2.4 0-2.3 0-2.4 0Z" fill="#7EB26D" fill-opacity="0.1" clip-path="url(#c5)"/><path d="M659 449.7l2.4 0 2.3-.1 2.4 .1 2.3-.1 2.4 0 2.3 .1 2.4-.2 2.3-.2 2.4-.1 2.4 .1 2.3-.1 2.4 .1 2.3-.1 2.4 0 2.3 0 2.4-.1 2.3 0 2.4 .1 2.3 0 2.4 0 2.4 0 2.3 0 2.4 0 2.3-.1 2.4 0 2.3 .1 2.4-.1 2.3 .1 2.4 0 2.4-.1 2.3 0 2.4 .1 2.3-.1 2.4 .1 2.3-.2 2.4 .1 2.3-.1 2.4 .1 2.3-.1 2.4 .1 2.4-.1 2.3 0 2.4 0 2.3 0 2.4 0 2.3 0 2.4-.1 2.3 .1 2.4 0 2.4 0 2.3 0 2.4 0 2.3-.1 2.4 0 2.3 0 2.4 0 2.3 .1 2.4-.1 2.3-.1 2.4 .2 2.4-.1 2.3-.1 2.4 0 2.3 .1 2.4 0 2.3-.1 2.4 .1 2.3-.1 2.4 .1 2.4-.1 2.3 0 2.4 0 2.3 .1 2.4-.1 2.3 0 2.4-.1 2.3 .1 2.4 0 2.3-.1 2.4 0 2.4 0 2.3 .1 2.4-.2 2.3 .2 2.4-.2 2.3 .2 2.4 0 2.3-.2 2.4 .1 2.4 0 2.3-.1 2.4-.1 2.3 .2 2.4 0 2.3-.2 2.4 .1 2.3-.1 2.4 .1 2.3 0 2.4-.1 2.4 0 2.3 0 2.4 .1 2.3-.1 2.4 0 2.3-.1 2.4 0 2.3 0 2.4 .1 2.4 0 2.3 0 2.4 0 2.3-.1 2.4 0 2.3 0 2.4 0 2.3 .1 2.4-.1 2.3 .1 2.4 0 2.4-.2 2.3 .2 2.4-.2 2.3 0 2.4 0 2.3 0 2.4 .1 2.3-.1 2.4 0 2.4 0 2.3 .1 2.4 0 2.3 0 2.4-.1 2.3 0 2.4 0 2.3-.1 2.4 0 2.3 .1 2.4 .1 2.4-.1 2.3 0 2.4 0 2.3-.1 2.4 .1 2.3 0 2.4 0 2.3 0 2.4-.1 2.4 0 2.3 .1 2.4-.1 2.3 .1 2.4-.1 2.3 0 2.4 0 2.3 0 2.4 0 2.4 0 2.3 .1 2.4-.1 2.3 0 2.4 .1 2.3 0 2.4-.1 2.3-.1 2.4 0 2.3 0 2.4 0 2.4 .1 2.3-.1 2.4 .1 2.3 0 2.4-.1 2.3-.1 2.4 .1 2.3 0 2.4 .1 2.4-.1 2.3-.1 2.4 0 2.3 0 2.4 .1 2.3 0 2.4-.1 2.3 .1 2.4-.1 2.3 .1 2.4 0 2.4-.1 2.3 .1 2.4 0 2.3 0 2.4 0 2.3-.1 2.4 .1 2.3 0 2.4-.1 2.4 .1 2.3-.2 2.4 .1 2.3 0 2.4 0 2.3 0 2.4 0 2.3-.1 2.4 .1 2.3-.1 2.4 .1 2.4-.2 2.3 .1 2.4 0 0 15.5-2.4 0-2.3-.1-2.4 .2-2.4-.1-2.3 .1-2.4-.1-2.3 .1-2.4 0-2.3 0-2.4 0-2.3 0-2.4-.1-2.3 .1-2.4 0-2.4 0-2.3 .1-2.4-.1-2.3 .1-2.4 0-2.3 0-2.4 0-2.3-.1-2.4 .1-2.4 0-2.3-.1-2.4 .1-2.3-.1-2.4 .1-2.3 0-2.4-.1-2.3 0-2.4 0-2.3 .1-2.4 0-2.4 0-2.3 0-2.4-.1-2.3 0-2.4 .2-2.3 0-2.4-.1-2.3 .1-2.4-.1-2.4 0-2.3 0-2.4 0-2.3 .1-2.4 0-2.3 0-2.4 0-2.3 0-2.4 .1-2.3-.1-2.4 0-2.4-.1-2.3 .1-2.4 0-2.3-.1-2.4 .2-2.3-.1-2.4 .1-2.3-.1-2.4 0-2.4 .1-2.3 0-2.4 0-2.3 0-2.4-.1-2.3 .1-2.4 0-2.3 0-2.4 0-2.4-.1-2.3 0-2.4 0-2.3 .1-2.4 0-2.3 0-2.4 .1-2.3 0-2.4 0-2.3-.1-2.4 0-2.4 0-2.3 .1-2.4-.1-2.3 0-2.4 0-2.3 0-2.4 .2-2.3-.2-2.4 .2-2.4 0-2.3-.1-2.4 0-2.3 0-2.4 0-2.3 0-2.4 0-2.3 0-2.4 0-2.3 .1-2.4-.1-2.4 0-2.3 0-2.4 0-2.3 .1-2.4-.1-2.3 .2-2.4-.2-2.3 .1-2.4-.1-2.4 .1-2.3 0-2.4 0-2.3 0-2.4-.1-2.3 .2-2.4 0-2.3-.1-2.4 0-2.3 .1-2.4 0-2.4-.1-2.3 .2-2.4 0-2.3-.2-2.4 .2-2.3-.2-2.4 .2-2.3-.2-2.4 .1-2.4 0-2.3 .1-2.4 0-2.3-.1-2.4 0-2.3 0-2.4 .1-2.3-.1-2.4 .1-2.3-.1-2.4 .2-2.4-.2-2.3 .1-2.4-.1-2.3 .1-2.4 0-2.3 0-2.4 0-2.3 0-2.4 .1-2.4-.1-2.3 0-2.4 .1-2.3 0-2.4-.1-2.3 0-2.4 0-2.3 .1-2.4 0-2.3 0-2.4 0-2.4 0-2.3-.1-2.4 .1-2.3 0-2.4 0-2.3-.1-2.4 .1-2.3-.1-2.4 .2-2.4-.1-2.3 0-2.4 0-2.3 .1-2.4-.1-2.3 .1-2.4 0-2.3 0-2.4 0-2.3 0-2.4 0-2.4 0-2.3-.1-2.4 .1-2.3-.1-2.4 .1-2.3 0-2.4 .1-2.3-.1-2.4 0-2.4 0-2.3 0-2.4-.1-2.3 0-2.4 .1-2.3 0-2.4 0-2.3 .1-2.4-.1-2.3 0-2.4 0-2.4 .1-2.3 .1-2.4 .2-2.3 0-2.4 0-2.3 .1-2.4-.1-2.3 .1-2.4 0Z" fill="#EAB839" fill-opacity="0.1" clip-path="url(#c5)"/><path d="M659 449l2.4 0 2.3-.1 2.4 .1 2.3-.1 2.4 0 2.3 .1 2.4-.2 2.3-.1 2.4-.2 2.4 .1 2.3-.1 2.4 .1 2.3-.1 2.4 .1 2.3-.1 2.4-.1 2.3 0 2.4 .1 2.3 0 2.4 0 2.4 0 2.3 0 2.4 0 2.3 0 2.4-.1 2.3 .1 2.4-.1 2.3 .1 2.4 0 2.4 0 2.3-.1 2.4 .1 2.3-.1 2.4 .1 2.3-.1 2.4 0 2.3 0 2.4 0 2.3-.1 2.4 .1 2.4-.1 2.3 0 2.4 0 2.3 0 2.4 0 2.3 0 2.4-.1 2.3 .1 2.4 0 2.4 0 2.3 0 2.4 0 2.3-.1 2.4 0 2.3 0 2.4 .1 2.3 0 2.4-.1 2.3-.1 2.4 .2 2.4-.1 2.3-.1 2.4 .1 2.3 0 2.4 0 2.3-.1 2.4 .1 2.3-.1 2.4 .1 2.4-.1 2.3 0 2.4 0 2.3 .1 2.4-.1 2.3 0 2.4 0 2.3 .1 2.4 0 2.3-.1 2.4-.1 2.4 0 2.3 .1 2.4-.1 2.3 .1 2.4-.1 2.3 .1 2.4 0 2.3-.2 2.4 .1 2.4 0 2.3-.1 2.4 0 2.3 .1 2.4 0 2.3-.2 2.4 .1 2.3-.1 2.4 .1 2.3 0 2.4-.1 2.4 .1 2.3-.1 2.4 .1 2.3-.1 2.4 .1 2.3-.2 2.4 0 2.3 .1 2.4 0 2.4 0 2.3 0 2.4 0 2.3-.1 2.4 0 2.3 0 2.4 0 2.3 .1 2.4-.1 2.3 .1 2.4 0 2.4-.2 2.3 .2 2.4-.1 2.3-.1 2.4 0 2.3 0 2.4 .1 2.3 0 2.4-.1 2.4 0 2.3 .1 2.4 0 2.3 0 2.4-.1 2.3 .1 2.4-.1 2.3-.1 2.4 .1 2.3 0 2.4 .1 2.4-.1 2.3 .1 2.4-.1 2.3 0 2.4 .1 2.3-.1 2.4 0 2.3 0 2.4-.1 2.4 0 2.3 .1 2.4-.1 2.3 .1 2.4-.1 2.3 0 2.4 0 2.3 0 2.4 0 2.4 0 2.3 .1 2.4-.1 2.3 0 2.4 .1 2.3 0 2.4-.1 2.3-.1 2.4 0 2.3 .1 2.4-.1 2.4 .1 2.3-.1 2.4 .1 2.3 0 2.4-.1 2.3-.1 2.4 .1 2.3 0 2.4 .1 2.4-.1 2.3-.1 2.4 0 2.3 0 2.4 .1 2.3 0 2.4 0 2.3 .1 2.4-.1 2.3 0 2.4 0 2.4-.1 2.3 .1 2.4 0 2.3 0 2.4 0 2.3-.1 2.4 .1 2.3 0 2.4-.1 2.4 .1 2.3-.2 2.4 .1 2.3 0 2.4 0 2.3 0 2.4 0 2.3-.1 2.4 .1 2.3-.1 2.4 .1 2.4-.2 2.3 .1 2.4 0 0 .7-2.4 0-2.3-.1-2.4 .2-2.4-.1-2.3 .1-2.4-.1-2.3 .1-2.4 0-2.3 0-2.4 0-2.3 0-2.4-.1-2.3 .2-2.4-.1-2.4 .1-2.3 0-2.4-.1-2.3 .1-2.4 0-2.3 0-2.4 0-2.3-.1-2.4 .1-2.4 0-2.3-.1-2.4 .1-2.3-.1-2.4 .1-2.3 0-2.4-.1-2.3 0-2.4 0-2.3 .1-2.4 .1-2.4-.1-2.3 0-2.4-.1-2.3 .1-2.4 .1-2.3 0-2.4-.1-2.3 .1-2.4-.1-2.4 0-2.3 0-2.4 0-2.3 .1-2.4 .1-2.3 0-2.4-.1-2.3 0-2.4 .1-2.3-.1-2.4 0-2.4 0-2.3 0-2.4 0-2.3 0-2.4 .1-2.3-.1-2.4 .1-2.3-.1-2.4 0-2.4 .1-2.3 0-2.4 0-2.3 0-2.4-.1-2.3 .1-2.4 0-2.3 0-2.4 .1-2.4-.1-2.3-.1-2.4 0-2.3 .1-2.4 0-2.3 0-2.4 .1-2.3 0-2.4 0-2.3-.1-2.4 0-2.4 0-2.3 .1-2.4-.1-2.3 0-2.4 0-2.3 0-2.4 .2-2.3-.2-2.4 .2-2.4 0-2.3-.1-2.4 .1-2.3-.1-2.4 0-2.3 0-2.4 0-2.3 .1-2.4 0-2.3 0-2.4 0-2.4-.1-2.3 0-2.4 0-2.3 .1-2.4 0-2.3 .1-2.4-.1-2.3 0-2.4 0-2.4 .1-2.3 0-2.4-.1-2.3 .1-2.4-.1-2.3 .2-2.4 0-2.3-.2-2.4 .1-2.3 .1-2.4 0-2.4-.1-2.3 .2-2.4 0-2.3-.2-2.4 .2-2.3-.2-2.4 .2-2.3-.1-2.4 0-2.4 0-2.3 .1-2.4 0-2.3-.1-2.4 .1-2.3 0-2.4 .1-2.3-.1-2.4 0-2.3 0-2.4 .1-2.4-.1-2.3 .1-2.4-.1-2.3 .1-2.4 0-2.3-.1-2.4 0-2.3 .1-2.4 .1-2.4-.2-2.3 .1-2.4 .1-2.3-.1-2.4 0-2.3 0-2.4 0-2.3 .1-2.4 0-2.3 0-2.4 0-2.4 0-2.3-.1-2.4 .1-2.3 0-2.4 0-2.3 0-2.4 0-2.3 0-2.4 .1-2.4-.1-2.3 .1-2.4-.1-2.3 .1-2.4-.1-2.3 .2-2.4-.1-2.3 .1-2.4-.1-2.3 0-2.4 .1-2.4 0-2.3-.1-2.4 .1-2.3-.1-2.4 0-2.3 .1-2.4 0-2.3 0-2.4 0-2.4 0-2.3 0-2.4-.1-2.3 0-2.4 .1-2.3 0-2.4 0-2.3 .1-2.4-.1-2.3 .1-2.4-.1-2.4 .1-2.3 .2-2.4 .2-2.3-.1-2.4 0-2.3 .1-2.4-.1-2.3 .1-2.4 0Z" fill="#6ED0E0" fill-opacity="0.1" clip-path="url(#c5)"/><path d="M659 386.8l2.4 .1 2.3-.2 2.4 .2 2.3-.2 2.4 .1 2.3 .1 2.4-.2 2.3-.2 2.4-.1 2.4 0 2.3 0 2.4 .1 2.3-.1 2.4 .1 2.3 0 2.4-.1 2.3 0 2.4 .1 2.3-.1 2.4 .1 2.4 0 2.3 .1 2.4-.1 2.3 .1 2.4-.2 2.3 .2 2.4-.1 2.3 .2 2.4-.1 2.4 0 2.3 0 2.4 0 2.3 0 2.4 0 2.3-.1 2.4 .1 2.3 0 2.4 0 2.3 0 2.4 0 2.4-.1 2.3 .1 2.4 0 2.3 0 2.4 0 2.3 .1 2.4-.2 2.3 .1 2.4 0 2.4 .1 2.3 0 2.4 0 2.3-.1 2.4 0 2.3 0 2.4 .1 2.3 0 2.4 0 2.3-.1 2.4 .1 2.4 0 2.3-.1 2.4 0 2.3 .1 2.4 0 2.3-.1 2.4 .1 2.3 0 2.4 .1 2.4-.1 2.3 0 2.4 0 2.3 .1 2.4-.1 2.3 0 2.4 0 2.3 .1 2.4 0 2.3-.1 2.4 .1 2.4-.2 2.3 .2 2.4-.2 2.3 .2 2.4-.1 2.3 .1 2.4 0 2.3-.1 2.4 .1 2.4 .1 2.3-.2 2.4 0 2.3 .1 2.4 0 2.3-.2 2.4 .1 2.3 .1 2.4 0 2.3 0 2.4-.1 2.4 .1 2.3 0 2.4 .1 2.3-.2 2.4 .1 2.3-.1 2.4 0 2.3 .1 2.4 0 2.4 .1 2.3-.1 2.4 .1 2.3-.2 2.4 0 2.3 .1 2.4 .1 2.3 0 2.4 0 2.3 0 2.4 0 2.4-.1 2.3 .2 2.4-.2 2.3 0 2.4 0 2.3-.1 2.4 .2 2.3-.1 2.4 0 2.4 0 2.3 .1 2.4 0 2.3 0 2.4-.2 2.3 .1 2.4 0 2.3-.2 2.4 .1 2.3 0 2.4 .1 2.4-.1 2.3 .1 2.4-.1 2.3-.1 2.4 .1 2.3 0 2.4 0 2.3 0 2.4-.1 2.4 0 2.3 .1 2.4-.1 2.3 .1 2.4-.1 2.3 0 2.4 .1 2.3-.1 2.4 .1 2.4 0 2.3 0 2.4-.1 2.3 0 2.4 .1 2.3 0 2.4 0 2.3-.2 2.4 0 2.3 .1 2.4 0 2.4 0 2.3 0 2.4 0 2.3 0 2.4-.1 2.3 0 2.4 0 2.3 0 2.4 .1 2.4 0 2.3-.1 2.4 0 2.3-.1 2.4 .2 2.3-.1 2.4 0 2.3 .1 2.4-.1 2.3 0 2.4 0 2.4 0 2.3 0 2.4 0 2.3 .1 2.4-.1 2.3 0 2.4 0 2.3 0 2.4-.1 2.4 .1 2.3-.2 2.4 .1 2.3 .1 2.4 0 2.3 0 2.4-.1 2.3-.1 2.4 .1 2.3-.1 2.4 .1 2.4-.1 2.3 .1 2.4 0 0 60.8-2.4 0-2.3-.1-2.4 .2-2.4-.1-2.3 .1-2.4-.1-2.3 .1-2.4 0-2.3 0-2.4 0-2.3 0-2.4-.1-2.3 .2-2.4-.1-2.4 .1-2.3 0-2.4-.1-2.3 .1-2.4 0-2.3 0-2.4 0-2.3-.1-2.4 .1-2.4 0-2.3 0-2.4 .1-2.3-.1-2.4 0-2.3 0-2.4-.1-2.3 0-2.4 0-2.3 .1-2.4 .1-2.4-.1-2.3 0-2.4-.1-2.3 .1-2.4 .1-2.3 0-2.4-.1-2.3 .1-2.4-.1-2.4 .1-2.3-.1-2.4 0-2.3 .1-2.4 .1-2.3 0-2.4-.1-2.3 0-2.4 .1-2.3-.1-2.4 0-2.4 0-2.3 0-2.4 0-2.3 0-2.4 .1-2.3-.1-2.4 .1-2.3-.1-2.4 0-2.4 .1-2.3 0-2.4 0-2.3 .1-2.4-.1-2.3 0-2.4 .1-2.3-.1-2.4 .1-2.4-.1-2.3 0-2.4-.1-2.3 .1-2.4 .1-2.3-.1-2.4 .1-2.3 0-2.4 0-2.3-.1-2.4 0-2.4 .1-2.3 0-2.4-.1-2.3 0-2.4 0-2.3 .1-2.4 .1-2.3-.2-2.4 .2-2.4 0-2.3-.1-2.4 .1-2.3-.1-2.4 0-2.3 0-2.4 0-2.3 .1-2.4 0-2.3 0-2.4 0-2.4 0-2.3-.1-2.4 0-2.3 .2-2.4-.1-2.3 .1-2.4-.1-2.3 .1-2.4-.1-2.4 .1-2.3 0-2.4-.1-2.3 .1-2.4-.1-2.3 .2-2.4 0-2.3-.1-2.4 0-2.3 .1-2.4 0-2.4-.1-2.3 .2-2.4 0-2.3-.1-2.4 .1-2.3-.1-2.4 .1-2.3-.1-2.4 0-2.4 .1-2.3 .1-2.4 0-2.3-.1-2.4 0-2.3 0-2.4 .1-2.3-.1-2.4 0-2.3 0-2.4 .1-2.4-.1-2.3 .1-2.4-.1-2.3 .1-2.4 0-2.3 0-2.4-.1-2.3 .1-2.4 .1-2.4-.2-2.3 .1-2.4 .1-2.3 0-2.4-.1-2.3 0-2.4 0-2.3 .1-2.4 0-2.3 0-2.4 0-2.4 0-2.3-.1-2.4 .1-2.3 0-2.4 0-2.3 0-2.4 0-2.3 0-2.4 .1-2.4-.1-2.3 .1-2.4 0-2.3 0-2.4 0-2.3 .1-2.4-.1-2.3 .1-2.4-.1-2.3 .1-2.4 0-2.4 0-2.3-.1-2.4 .1-2.3-.1-2.4 .1-2.3 0-2.4 0-2.3 0-2.4 0-2.4 0-2.3 0-2.4-.1-2.3 0-2.4 .1-2.3 .1-2.4-.1-2.3 .1-2.4-.1-2.3 .1-2.4-.1-2.4 .2-2.3 .1-2.4 .2-2.3-.1-2.4 0-2.3 .1-2.4-.1-2.3 .1-2.4 0Z" fill="#EF843C" fill-opacity="0.1" clip-path="url(#c5)"/><path d="M659 464.9l2.4 0 2.3-.1 2.4 .1 2.3-.1 2.4 0 2.3 0 2.4-.2 2.3-.1 2.4-.1 2.4 0 2.3 0 2.4 .1 2.3-.1 2.4 0 2.3 0 2.4-.1 2.3 0 2.4 .1 2.3 0 2.4 0 2.4 0 2.3 .1 2.4-.1 2.3 0 2.4-.1 2.3 .1 2.4-.1 2.3 .1 2.4 0 2.4 0 2.3 0 2.4 0 2.3 0 2.4 0 2.3-.1 2.4 .1 2.3-.1 2.4 0 2.3 0 2.4 .1 2.4-.2 2.3 .1 2.4-.1 2.3 .1 2.4 0 2.3 0 2.4-.1 2.3 .1 2.4 0 2.4 0 2.3 0 2.4 0 2.3-.1 2.4 0 2.3 0 2.4 .1 2.3 0 2.4-.1 2.3 0 2.4 .1 2.4-.1 2.3 0 2.4 0 2.3 0 2.4 0 2.3-.1 2.4 .1 2.3-.1 2.4 .2 2.4-.2 2.3 .1 2.4-.1 2.3 .1 2.4-.1 2.3 0 2.4 0 2.3 .1 2.4 0 2.3-.1 2.4 0 2.4-.1 2.3 .2 2.4-.2 2.3 .2 2.4-.2 2.3 .2 2.4 0 2.3-.2 2.4 .1 2.4 0 2.3-.1 2.4 0 2.3 .1 2.4 0 2.3-.2 2.4 .1 2.3 0 2.4 0 2.3 0 2.4-.1 2.4 .1 2.3-.1 2.4 .2 2.3-.2 2.4 .1 2.3-.1 2.4 0 2.3 0 2.4 0 2.4 .1 2.3-.1 2.4 0 2.3 0 2.4 0 2.3 0 2.4 0 2.3 0 2.4 0 2.3 .1 2.4 0 2.4-.2 2.3 .2 2.4-.2 2.3 0 2.4 0 2.3 0 2.4 .1 2.3-.1 2.4 0 2.4 0 2.3 .1 2.4 0 2.3 0 2.4-.1 2.3 0 2.4 0 2.3-.1 2.4 0 2.3 0 2.4 .1 2.4 0 2.3 0 2.4 0 2.3-.1 2.4 .1 2.3 0 2.4 0 2.3 0 2.4-.1 2.4 0 2.3 .1 2.4-.1 2.3 .1 2.4-.2 2.3 .1 2.4 0 2.3-.1 2.4 .1 2.4 0 2.3 .1 2.4-.1 2.3 0 2.4 0 2.3 0 2.4 0 2.3-.1 2.4 0 2.3 0 2.4 0 2.4 .1 2.3-.1 2.4 .1 2.3 0 2.4-.2 2.3 0 2.4 .1 2.3 0 2.4 0 2.4 0 2.3-.1 2.4 0 2.3 0 2.4 .1 2.3 0 2.4-.1 2.3 .1 2.4-.1 2.3 .1 2.4 0 2.4-.1 2.3 .1 2.4 0 2.3 0 2.4 0 2.3-.1 2.4 .1 2.3-.1 2.4 0 2.4 0 2.3-.1 2.4 .1 2.3 0 2.4 0 2.3 0 2.4 0 2.3-.1 2.4 .1 2.3-.1 2.4 .1 2.4-.2 2.3 .1 2.4 0" stroke="#7EB26D" fill="none" clip-path="url(#c5)"/><path d="M659 449.7l2.4 0 2.3-.1 2.4 .1 2.3-.1 2.4 0 2.3 .1 2.4-.2 2.3-.2 2.4-.1 2.4 .1 2.3-.1 2.4 .1 2.3-.1 2.4 0 2.3 0 2.4-.1 2.3 0 2.4 .1 2.3 0 2.4 0 2.4 0 2.3 0 2.4 0 2.3-.1 2.4 0 2.3 .1 2.4-.1 2.3 .1 2.4 0 2.4-.1 2.3 0 2.4 .1 2.3-.1 2.4 .1 2.3-.2 2.4 .1 2.3-.1 2.4 .1 2.3-.1 2.4 .1 2.4-.1 2.3 0 2.4 0 2.3 0 2.4 0 2.3 0 2.4-.1 2.3 .1 2.4 0 2.4 0 2.3 0 2.4 0 2.3-.1 2.4 0 2.3 0 2.4 0 2.3 .1 2.4-.1 2.3-.1 2.4 .2 2.4-.1 2.3-.1 2.4 0 2.3 .1 2.4 0 2.3-.1 2.4 .1 2.3-.1 2.4 .1 2.4-.1 2.3 0 2.4 0 2.3 .1 2.4-.1 2.3 0 2.4-.1 2.3 .1 2.4 0 2.3-.1 2.4 0 2.4 0 2.3 .1 2.4-.2 2.3 .2 2.4-.2 2.3 .2 2.4 0 2.3-.2 2.4 .1 2.4 0 2.3-.1 2.4-.1 2.3 .2 2.4 0 2.3-.2 2.4 .1 2.3-.1 2.4 .1 2.3 0 2.4-.1 2.4 0 2.3 0 2.4 .1 2.3-.1 2.4 0 2.3-.1 2.4 0 2.3 0 2.4 .1 2.4 0 2.3 0 2.4 0 2.3-.1 2.4 0 2.3 0 2.4 0 2.3 .1 2.4-.1 2.3 .1 2.4 0 2.4-.2 2.3 .2 2.4-.2 2.3 0 2.4 0 2.3 0 2.4 .1 2.3-.1 2.4 0 2.4 0 2.3 .1 2.4 0 2.3 0 2.4-.1 2.3 0 2.4 0 2.3-.1 2.4 0 2.3 .1 2.4 .1 2.4-.1 2.3 0 2.4 0 2.3-.1 2.4 .1 2.3 0 2.4 0 2.3 0 2.4-.1 2.4 0 2.3 .1 2.4-.1 2.3 .1 2.4-.1 2.3 0 2.4 0 2.3 0 2.4 0 2.4 0 2.3 .1 2.4-.1 2.3 0 2.4 .1 2.3 0 2.4-.1 2.3-.1 2.4 0 2.3 0 2.4 0 2.4 .1 2.3-.1 2.4 .1 2.3 0 2.4-.1 2.3-.1 2.4 .1 2.3 0 2.4 .1 2.4-.1 2.3-.1 2.4 0 2.3 0 2.4 .1 2.3 0 2.4-.1 2.3 .1 2.4-.1 2.3 .1 2.4 0 2.4-.1 2.3 .1 2.4 0 2.3 0 2.4 0 2.3-.1 2.4 .1 2.3 0 2.4-.1 2.4 .1 2.3-.2 2.4 .1 2.3 0 2.4 0 2.3 0 2.4 0 2.3-.1 2.4 .1 2.3-.1 2.4 .1 2.4-.2 2.3 .1 2.4 0" stroke="#EAB839" fill="none" clip-path="url(#c5)"/><path d="M659 449l2.4 0 2.3-.1 2.4 .1 2.3-.1 2.4 0 2.3 .1 2.4-.2 2.3-.1 2.4-.2 2.4 .1 2.3-.1 2.4 .1 2.3-.1 2.4 .1 2.3-.1 2.4-.1 2.3 0 2.4 .1 2.3 0 2.4 0 2.4 0 2.3 0 2.4 0 2.3 0 2.4-.1 2.3 .1 2.4-.1 2.3 .1 2.4 0 2.4 0 2.3-.1 2.4 .1 2.3-.1 2.4 .1 2.3-.1 2.4 0 2.3 0 2.4 0 2.3-.1 2.4 .1 2.4-.1 2.3 0 2.4 0 2.3 0 2.4 0 2.3 0 2.4-.1 2.3 .1 2.4 0 2.4 0 2.3 0 2.4 0 2.3-.1 2.4 0 2.3 0 2.4 .1 2.3 0 2.4-.1 2.3-.1 2.4 .2 2.4-.1 2.3-.1 2.4 .1 2.3 0 2.4 0 2.3-.1 2.4 .1 2.3-.1 2.4 .1 2.4-.1 2.3 0 2.4 0 2.3 .1 2.4-.1 2.3 0 2.4 0 2.3 .1 2.4 0 2.3-.1 2.4-.1 2.4 0 2.3 .1 2.4-.1 2.3 .1 2.4-.1 2.3 .1 2.4 0 2.3-.2 2.4 .1 2.4 0 2.3-.1 2.4 0 2.3 .1 2.4 0 2.3-.2 2.4 .1 2.3-.1 2.4 .1 2.3 0 2.4-.1 2.4 .1 2.3-.1 2.4 .1 2.3-.1 2.4 .1 2.3-.2 2.4 0 2.3 .1 2.4 0 2.4 0 2.3 0 2.4 0 2.3-.1 2.4 0 2.3 0 2.4 0 2.3 .1 2.4-.1 2.3 .1 2.4 0 2.4-.2 2.3 .2 2.4-.1 2.3-.1 2.4 0 2.3 0 2.4 .1 2.3 0 2.4-.1 2.4 0 2.3 .1 2.4 0 2.3 0 2.4-.1 2.3 .1 2.4-.1 2.3-.1 2.4 .1 2.3 0 2.4 .1 2.4-.1 2.3 .1 2.4-.1 2.3 0 2.4 .1 2.3-.1 2.4 0 2.3 0 2.4-.1 2.4 0 2.3 .1 2.4-.1 2.3 .1 2.4-.1 2.3 0 2.4 0 2.3 0 2.4 0 2.4 0 2.3 .1 2.4-.1 2.3 0 2.4 .1 2.3 0 2.4-.1 2.3-.1 2.4 0 2.3 .1 2.4-.1 2.4 .1 2.3-.1 2.4 .1 2.3 0 2.4-.1 2.3-.1 2.4 .1 2.3 0 2.4 .1 2.4-.1 2.3-.1 2.4 0 2.3 0 2.4 .1 2.3 0 2.4 0 2.3 .1 2.4-.1 2.3 0 2.4 0 2.4-.1 2.3 .1 2.4 0 2.3 0 2.4 0 2.3-.1 2.4 .1 2.3 0 2.4-.1 2.4 .1 2.3-.2 2.4 .1 2.3 0 2.4 0 2.3 0 2.4 0 2.3-.1 2.4 .1 2.3-.1 2.4 .1 2.4-.2 2.3 .1 2.4 0" stroke="#6ED0E0" fill="none" clip-path="url(#c5)"/><path d="M659 386.8l2.4 .1 2.3-.2 2.4 .2 2.3-.2 2.4 .1 2.3 .1 2.4-.2 2.3-.2 2.4-.1 2.4 0 2.3 0 2.4 .1 2.3-.1 2.4 .1 2.3 0 2.4-.1 2.3 0 2.4 .1 2.3-.1 2.4 .1 2.4 0 2.3 .1 2.4-.1 2.3 .1 2.4-.2 2.3 .2 2.4-.1 2.3 .2 2.4-.1 2.4 0 2.3 0 2.4 0 2.3 0 2.4 0 2.3-.1 2.4 .1 2.3 0 2.4 0 2.3 0 2.4 0 2.4-.1 2.3 .1 2.4 0 2.3 0 2.4 0 2.3 .1 2.4-.2 2.3 .1 2.4 0 2.4 .1 2.3 0 2.4 0 2.3-.1 2.4 0 2.3 0 2.4 .1 2.3 0 2.4 0 2.3-.1 2.4 .1 2.4 0 2.3-.1 2.4 0 2.3 .1 2.4 0 2.3-.1 2.4 .1 2.3 0 2.4 .1 2.4-.1 2.3 0 2.4 0 2.3 .1 2.4-.1 2.3 0 2.4 0 2.3 .1 2.4 0 2.3-.1 2.4 .1 2.4-.2 2.3 .2 2.4-.2 2.3 .2 2.4-.1 2.3 .1 2.4 0 2.3-.1 2.4 .1 2.4 .1 2.3-.2 2.4 0 2.3 .1 2.4 0 2.3-.2 2.4 .1 2.3 .1 2.4 0 2.3 0 2.4-.1 2.4 .1 2.3 0 2.4 .1 2.3-.2 2.4 .1 2.3-.1 2.4 0 2.3 .1 2.4 0 2.4 .1 2.3-.1 2.4 .1 2.3-.2 2.4 0 2.3 .1 2.4 .1 2.3 0 2.4 0 2.3 0 2.4 0 2.4-.1 2.3 .2 2.4-.2 2.3 0 2.4 0 2.3-.1 2.4 .2 2.3-.1 2.4 0 2.4 0 2.3 .1 2.4 0 2.3 0 2.4-.2 2.3 .1 2.4 0 2.3-.2 2.4 .1 2.3 0 2.4 .1 2.4-.1 2.3 .1 2.4-.1 2.3-.1 2.4 .1 2.3 0 2.4 0 2.3 0 2.4-.1 2.4 0 2.3 .1 2.4-.1 2.3 .1 2.4-.1 2.3 0 2.4 .1 2.3-.1 2.4 .1 2.4 0 2.3 0 2.4-.1 2.3 0 2.4 .1 2.3 0 2.4 0 2.3-.2 2.4 0 2.3 .1 2.4 0 2.4 0 2.3 0 2.4 0 2.3 0 2.4-.1 2.3 0 2.4 0 2.3 0 2.4 .1 2.4 0 2.3-.1 2.4 0 2.3-.1 2.4 .2 2.3-.1 2.4 0 2.3 .1 2.4-.1 2.3 0 2.4 0 2.4 0 2.3 0 2.4 0 2.3 .1 2.4-.1 2.3 0 2.4 0 2.3 0 2.4-.1 2.4 .1 2.3-.2 2.4 .1 2.3 .1 2.4 0 2.3 0 2.4-.1 2.3-.1 2.4 .1 2.3-.1 2.4 .1 2.4-.1 2.3 .1 2.4 0" stroke="#EF843C" fill="none" clip-path="url(#c5)"/><rect x="624" y="505.9" width="14" height="4" rx="1" fill="#7EB26D"/><text x="646.00" y="510.90" font-size="12" fill="#ccccdc" text-anchor="start" textLength="27.68" lengthAdjust="spacingAndGlyphs">Used</text><text x="680.20" y="510.90" font-size="12" fill="#ccccdc" text-anchor="start" textLength="69.19" lengthAdjust="spacingAndGlyphs">Min: 6.71 GB</text><text x="755.91" y="510.90" font-size="12" fill="#ccccdc" text-anchor="start" textLength="72.49" lengthAdjust="spacingAndGlyphs">Max: 8.69 GB</text><rect x="838" y="505.9" width="14" height="4" rx="1" fill="#EAB839"/><text x="860.00" y="510.90" font-size="12" fill="#ccccdc" text-anchor="start" textLength="40.89" lengthAdjust="spacingAndGlyphs">Cached</text><text x="907.41" y="510.90" font-size="12" fill="#ccccdc" text-anchor="start" textLength="69.23" lengthAdjust="spacingAndGlyphs">Min: 23.7 GB</text><text x="983.17" y="510.90" font-size="12" fill="#ccccdc" text-anchor="start" textLength="72.53" lengthAdjust="spacingAndGlyphs">Max: 24.2 GB</text><rect x="624" y="524.1" width="14" height="4" rx="1" fill="#6ED0E0"/><text x="646.00" y="529.10" font-size="12" fill="#ccccdc" text-anchor="start" textLength="37.90" lengthAdjust="spacingAndGlyphs">Buffers</text><text x="690.48" y="529.10" font-size="12" fill="#ccccdc" text-anchor="start" textLength="69.81" lengthAdjust="spacingAndGlyphs">Min: 1.08 GB</text><text x="766.87" y="529.10" font-size="12" fill="#ccccdc" text-anchor="start" textLength="73.13" lengthAdjust="spacingAndGlyphs">Max: 1.08 GB</text><rect x="850" y="524.1" width="14" height="4" rx="1" fill="#EF843C"/><text x="872.20" y="529.10" font-size="12" fill="#ccccdc" text-anchor="start" textLength="24.27" lengthAdjust="spacingAndGlyphs">Free</text><text x="902.96" y="529.10" font-size="12" fill="#ccccdc" text-anchor="start" textLength="68.88" lengthAdjust="spacingAndGlyphs">Min: 94.7 GB</text><text x="978.34" y="529.10" font-size="12" fill="#ccccdc" text-anchor="start" textLength="72.16" lengthAdjust="spacingAndGlyphs">Max: 97.1 GB</text><path d="M1263.9 241.5H1750.5M1263.9 217.5H1750.5M1263.9 193.5H1750.5M1263.9 169.5H1750.5M1263.9 145.5H1750.5M1295.5 145.0V241.0M1364.5 145.0V241.0M1432.5 145.0V241.0M1500.5 145.0V241.0M1569.5 145.0V241.0M1637.5 145.0V241.0M1706.5 145.0V241.0" stroke="#9b9b9b" stroke-opacity="0.3" stroke-width="1" fill="none"/><text x="1258.20" y="243.40" font-size="11.5" fill="#c7c8d0" text-anchor="end">0 kb/s</text><text x="1258.20" y="219.53" font-size="11.5" fill="#c7c8d0" text-anchor="end">2.50 Mb/s</text><text x="1258.20" y="195.65" font-size="11.5" fill="#c7c8d0" text-anchor="end">5 Mb/s</text><text x="1258.20" y="171.78" font-size="11.5" fill="#c7c8d0" text-anchor="end">7.50 Mb/s</text><text x="1258.20" y="147.90" font-size="11.5" fill="#c7c8d0" text-anchor="end">10 Mb/s</text><text x="1295.81" y="258.70" font-size="11.5" fill="#c7c8d0" text-anchor="middle">14:00</text><text x="1364.18" y="258.70" font-size="11.5" fill="#c7c8d0" text-anchor="middle">14:05</text><text x="1432.56" y="258.70" font-size="11.5" fill="#c7c8d0" text-anchor="middle">14:10</text><text x="1500.93" y="258.70" font-size="11.5" fill="#c7c8d0" text-anchor="middle">14:15</text><text x="1569.31" y="258.70" font-size="11.5" fill="#c7c8d0" text-anchor="middle">14:20</text><text x="1637.68" y="258.70" font-size="11.5" fill="#c7c8d0" text-anchor="middle">14:25</text><text x="1706.06" y="258.70" font-size="11.5" fill="#c7c8d0" text-anchor="middle">14:30</text><clipPath id="c6"><rect x="1263.9" y="144.0" width="486.6" height="98.0"/></clipPath><path d="M1264.1 240.6l2.7-.6 2.6 .5 2.7-.2 2.6 .2 2.7-.2 2.6 .7 4.2-47.8 3.1 1.9 4.2 .2 2.1 .2 2.1 2.3 2.1-4.2 2.7 1.3 2.6-.4 2.6 .8 2.7 .2 2.8 .1 2.8-1 2.8-.5 2.5 .2 2.4 .6 2.5 .4 2.4-.5 2.5 .9 2.4 0 2.5 .2 2.5 .6 4.2-3.2 2.4 .6 2.5 .6 2.4 .3 2.5 .4 2.7-.3 2.6 .7 2.7-.2 2.6-.3 2.7-.3 2.6-.7 2.7-.3 2.6-.1 2.7-.6 4.2 2.2 2.8-.2 2.8-.8 2.8-.3 2.5 1.1 2.4 .6 3 1.1 3-.4 3 .3 3 0 2.8-.4 2.8 .1 2.8-.4 4.2 39.1 2.5 .9 2.4-.1 2.5 0 2.4-.7 2.5 .7 2.4-.3 2.5-.2 2.5-.5 2.4 .6 2.5-.5 2.4 .2 2.5 .7 2.4-.7 2.5 .6 2.4-.6 2.5-.3 2.5 .4 2.4-.3 2.5 0 2.4 .6 2.5 0 2.4-.6 2.5 .6 2.4-.2 2.5-.5 2.5-.1 2.4 .8 2.5 .2 2.4-.1 2.5-.3 2.4-.6 2.5 .8 2.4-.8 2.5 .8 2.4-.9 2.4 1.1 2.4-.6 2.4-.4 2.4-.2 2.5 .2 2.4 .5 2.4-.6 2.4-.2 2.4 .7 2.4-.7 2.4 0 2.4 0 2.4-.1 2.4 .1 2.5-.3 2.4-.1 2.4 .1 2.4 .3 2.4 .6 2.4-.1 2.4-.4 3.6-.2 3.6 1.1 2.5-.8 2.4 .4 2.5 0 2.5-.1 2.5-.2 2.4 .8 2.5-.9 2.5 .3 2.5 .5 2.5-.5 2.4-.3 2.5 .1 2.5 .8 2.5-.2 2.5-.2 2.4 .6 2.5-.2 2.5-.5 2.5 .1 2.5 .8 2.4-.5 2.5 .2 2.5-.2 2.5 .7 2.5-.4 2.4 .3 2.2 .5 2.1-8.7 2.7-.8 2.6-.1 2.6 .2 2.6-.2 2.7 .7 2.6-.9 2.4 .4 2.5 .4 2.4-.4 2.5 .4 2.4-.2 2.5 .1 2.4-.7 2.4 .2 2.5 .7 2.4-.6 2.5 .5 2.4-.2 2.5 .5 2.4-.5 2.4 .5 2.5-.2 2.4-.1 2.5 .3 2.4-.3 2.5-.3 2.4 .5 2.4-.1 2.5-.2 2.4 .3 2.5-.3 2.4 .5 2.5-.5 2.4 .5 2.4-.5 2.5 .4 2.4-.9 2.5 1.1 2.4-.9 2.5 .3 2.4-.2 2.4 .7 2.5-.1 2.4-.3 2.5-.4 2.8 13.1 2.5 .6 2.6-.3 0 .4-483.8 0Z" fill="#7EB26D" fill-opacity="0.1" clip-path="url(#c6)"/><path d="M1264.1 232l2.7 .4 2.6-.6 2.7 .8 2.6-.9 2.7 .8 2.6-1 4.2-61.9 3.1 3.1 2.8 .1 2.8 .8 2.8 3.6 2.1-5.5 2.8 1.4 2.9-.5 2.8 1 2.8 .9 3.5-1.8 2.6-.1 2.7 .1 2.6 .1 2.7 1 2.6-.3 2.7 0 2.7 1 2.6 0 2.7 .4 4.2-3.2 2.4 1 2.5-.2 2.4 1.2 2.5 .6 2.5-.7 2.6-.3 2.5-.1 2.5-.2 2.5-.7 2.9 .8 2.8-.4 2.8 .2 2.8-.2 4.2 1.3 2.8-1 2.8-.5 2.8-.1 2.5 1.6 2.4 .5 3 .1 3-.6 3 .3 3-.3 2.8 .3 2.8-.2 2.8 .1 4.2 28.5 2.4 .1 2.4-.1 2.5 .4 2.4-.4 2.4 .1 2.4-.8 2.4 .1 2.4 .3 2.4 .1 2.5 0 2.4-.9 2.4 .4 2.4-.5 2.4 .4 2.4 .2 2.4-1 2.4-11.5 2.6 10.6 2.5 .7 2.4-.9 2.5 .1 2.5 .5 2.5 .1 2.5 .6 2.5-1 2.5 1.2 2.5-.7 2.5 .9 2.5-.3 2.5-.5 2.5 .1 2.5 1 2.5-.8 2.5 .2 2.5 .5 2.4-.6 2.5 .7 2.4-1 2.5-.1 2.4 .9 2.5-.6 2.4 .3 2.5-.6 2.5 .5 2.4-.4 2.5-.5 2.4 .4 2.5 .1 3.6 2.1 2.7-.4 2.6-.5 2.7-.6 2.7-.4 2.5-1.4 2.5-1.2 2.9 2.1 2.1-2.2 2.9 1.6 2.9 1.9 2.5-.5 2.5-.2 2.5-.2 2.5-.5 2.6-.1 2.7 .6 2.6-.6 2.6 .1 2.6 .1 2.7 .3 2.1 1.5 3.1-1 3.1-.1 3.1-.7 3.6 .2 3.6 1.6 2.8-.6 2.9 0 2.9-.6 4.3-.2 2.8 1.6 2.2 6.5 2.9-3.6 2.5-.3 2.5 .8 2.5-.4 2.5-.5 2.5 .2 2.5 .3 2.4-.4 2.5-.5 2.4-.1 2.5 .4 2.4 .5 2.5-.3 2.4 .1 2.4-.7 2.5 .8 2.4-.5 2.5-.1 2.4 .2 2.5 .1 2.4-.4 2.4 .2 2.5 .5 2.4-.1 2.5 .2 2.4-.3 2.5 .7 2.4-.8 2.4-.3 2.5 .2 2.4 0 2.5 .9 2.4-1.1 2.5 1.2 2.4-.1 2.4-.2 2.5-.4 2.4 .6 2.5-.1 2.4-.5 2.5 .2 2.4 0 2.4-.5 2.5 .9 2.4-.9 2.5 0 2.1 25.4 2.9 .6 2.9 .3 0 9.6-483.8 0Z" fill="#EAB839" fill-opacity="0.1" clip-path="url(#c6)"/><path d="M1264.1 240.6l2.7-.6 2.6 .5 2.7-.2 2.6 .2 2.7-.2 2.6 .7 4.2-47.8 3.1 1.9 4.2 .2 2.1 .2 2.1 2.3 2.1-4.2 2.7 1.3 2.6-.4 2.6 .8 2.7 .2 2.8 .1 2.8-1 2.8-.5 2.5 .2 2.4 .6 2.5 .4 2.4-.5 2.5 .9 2.4 0 2.5 .2 2.5 .6 4.2-3.2 2.4 .6 2.5 .6 2.4 .3 2.5 .4 2.7-.3 2.6 .7 2.7-.2 2.6-.3 2.7-.3 2.6-.7 2.7-.3 2.6-.1 2.7-.6 4.2 2.2 2.8-.2 2.8-.8 2.8-.3 2.5 1.1 2.4 .6 3 1.1 3-.4 3 .3 3 0 2.8-.4 2.8 .1 2.8-.4 4.2 39.1 2.5 .9 2.4-.1 2.5 0 2.4-.7 2.5 .7 2.4-.3 2.5-.2 2.5-.5 2.4 .6 2.5-.5 2.4 .2 2.5 .7 2.4-.7 2.5 .6 2.4-.6 2.5-.3 2.5 .4 2.4-.3 2.5 0 2.4 .6 2.5 0 2.4-.6 2.5 .6 2.4-.2 2.5-.5 2.5-.1 2.4 .8 2.5 .2 2.4-.1 2.5-.3 2.4-.6 2.5 .8 2.4-.8 2.5 .8 2.4-.9 2.4 1.1 2.4-.6 2.4-.4 2.4-.2 2.5 .2 2.4 .5 2.4-.6 2.4-.2 2.4 .7 2.4-.7 2.4 0 2.4 0 2.4-.1 2.4 .1 2.5-.3 2.4-.1 2.4 .1 2.4 .3 2.4 .6 2.4-.1 2.4-.4 3.6-.2 3.6 1.1 2.5-.8 2.4 .4 2.5 0 2.5-.1 2.5-.2 2.4 .8 2.5-.9 2.5 .3 2.5 .5 2.5-.5 2.4-.3 2.5 .1 2.5 .8 2.5-.2 2.5-.2 2.4 .6 2.5-.2 2.5-.5 2.5 .1 2.5 .8 2.4-.5 2.5 .2 2.5-.2 2.5 .7 2.5-.4 2.4 .3 2.2 .5 2.1-8.7 2.7-.8 2.6-.1 2.6 .2 2.6-.2 2.7 .7 2.6-.9 2.4 .4 2.5 .4 2.4-.4 2.5 .4 2.4-.2 2.5 .1 2.4-.7 2.4 .2 2.5 .7 2.4-.6 2.5 .5 2.4-.2 2.5 .5 2.4-.5 2.4 .5 2.5-.2 2.4-.1 2.5 .3 2.4-.3 2.5-.3 2.4 .5 2.4-.1 2.5-.2 2.4 .3 2.5-.3 2.4 .5 2.5-.5 2.4 .5 2.4-.5 2.5 .4 2.4-.9 2.5 1.1 2.4-.9 2.5 .3 2.4-.2 2.4 .7 2.5-.1 2.4-.3 2.5-.4 2.8 13.1 2.5 .6 2.6-.3" stroke="#7EB26D" fill="none" clip-path="url(#c6)"/><path d="M1264.1 232l2.7 .4 2.6-.6 2.7 .8 2.6-.9 2.7 .8 2.6-1 4.2-61.9 3.1 3.1 2.8 .1 2.8 .8 2.8 3.6 2.1-5.5 2.8 1.4 2.9-.5 2.8 1 2.8 .9 3.5-1.8 2.6-.1 2.7 .1 2.6 .1 2.7 1 2.6-.3 2.7 0 2.7 1 2.6 0 2.7 .4 4.2-3.2 2.4 1 2.5-.2 2.4 1.2 2.5 .6 2.5-.7 2.6-.3 2.5-.1 2.5-.2 2.5-.7 2.9 .8 2.8-.4 2.8 .2 2.8-.2 4.2 1.3 2.8-1 2.8-.5 2.8-.1 2.5 1.6 2.4 .5 3 .1 3-.6 3 .3 3-.3 2.8 .3 2.8-.2 2.8 .1 4.2 28.5 2.4 .1 2.4-.1 2.5 .4 2.4-.4 2.4 .1 2.4-.8 2.4 .1 2.4 .3 2.4 .1 2.5 0 2.4-.9 2.4 .4 2.4-.5 2.4 .4 2.4 .2 2.4-1 2.4-11.5 2.6 10.6 2.5 .7 2.4-.9 2.5 .1 2.5 .5 2.5 .1 2.5 .6 2.5-1 2.5 1.2 2.5-.7 2.5 .9 2.5-.3 2.5-.5 2.5 .1 2.5 1 2.5-.8 2.5 .2 2.5 .5 2.4-.6 2.5 .7 2.4-1 2.5-.1 2.4 .9 2.5-.6 2.4 .3 2.5-.6 2.5 .5 2.4-.4 2.5-.5 2.4 .4 2.5 .1 3.6 2.1 2.7-.4 2.6-.5 2.7-.6 2.7-.4 2.5-1.4 2.5-1.2 2.9 2.1 2.1-2.2 2.9 1.6 2.9 1.9 2.5-.5 2.5-.2 2.5-.2 2.5-.5 2.6-.1 2.7 .6 2.6-.6 2.6 .1 2.6 .1 2.7 .3 2.1 1.5 3.1-1 3.1-.1 3.1-.7 3.6 .2 3.6 1.6 2.8-.6 2.9 0 2.9-.6 4.3-.2 2.8 1.6 2.2 6.5 2.9-3.6 2.5-.3 2.5 .8 2.5-.4 2.5-.5 2.5 .2 2.5 .3 2.4-.4 2.5-.5 2.4-.1 2.5 .4 2.4 .5 2.5-.3 2.4 .1 2.4-.7 2.5 .8 2.4-.5 2.5-.1 2.4 .2 2.5 .1 2.4-.4 2.4 .2 2.5 .5 2.4-.1 2.5 .2 2.4-.3 2.5 .7 2.4-.8 2.4-.3 2.5 .2 2.4 0 2.5 .9 2.4-1.1 2.5 1.2 2.4-.1 2.4-.2 2.5-.4 2.4 .6 2.5-.1 2.4-.5 2.5 .2 2.4 0 2.4-.5 2.5 .9 2.4-.9 2.5 0 2.1 25.4 2.9 .6 2.9 .3" stroke="#EAB839" fill="none" clip-path="url(#c6)"/><rect x="1213" y="278.2" width="14" height="4" rx="1" fill="#7EB26D"/><text x="1234.50" y="283.20" font-size="12" fill="#ccccdc" text-anchor="start" textLength="46.75" lengthAdjust="spacingAndGlyphs">recieved</text><text x="1288.05" y="283.20" font-size="12" fill="#ccccdc" text-anchor="start" textLength="76.99" lengthAdjust="spacingAndGlyphs">Min: 9.12 kb/s</text><text x="1371.85" y="283.20" font-size="12" fill="#ccccdc" text-anchor="start" textLength="84.55" lengthAdjust="spacingAndGlyphs">Max: 4.98 Mb/s</text><text x="1463.20" y="283.20" font-size="12" fill="#ccccdc" text-anchor="start" textLength="82.50" lengthAdjust="spacingAndGlyphs">Avg: 1.88 Mb/s</text><rect x="1213" y="296.4" width="14" height="4" rx="1" fill="#EAB839"/><text x="1234.50" y="301.40" font-size="12" fill="#ccccdc" text-anchor="start" textLength="23.51" lengthAdjust="spacingAndGlyphs">sent</text><text x="1264.85" y="301.40" font-size="12" fill="#ccccdc" text-anchor="start" textLength="73.97" lengthAdjust="spacingAndGlyphs">Min: 945 kb/s</text><text x="1345.67" y="301.40" font-size="12" fill="#ccccdc" text-anchor="start" textLength="85.03" lengthAdjust="spacingAndGlyphs">Max: 4.65 Mb/s</text><text x="1437.54" y="301.40" font-size="12" fill="#ccccdc" text-anchor="start" textLength="82.96" lengthAdjust="spacingAndGlyphs">Avg: 2.76 Mb/s</text><path d="M1255.1 487.5H1750.5M1255.1 449.5H1750.5M1255.1 411.5H1750.5M1255.1 373.5H1750.5M1287.5 373.0V487.5M1357.5 373.0V487.5M1426.5 373.0V487.5M1496.5 373.0V487.5M1566.5 373.0V487.5M1635.5 373.0V487.5M1705.5 373.0V487.5" stroke="#9b9b9b" stroke-opacity="0.3" stroke-width="1" fill="none"/><text x="1248.70" y="489.90" font-size="11.5" fill="#c7c8d0" text-anchor="end">0 kB/s</text><text x="1248.70" y="451.90" font-size="11.5" fill="#c7c8d0" text-anchor="end">5 MB/s</text><text x="1248.70" y="413.90" font-size="11.5" fill="#c7c8d0" text-anchor="end">10 MB/s</text><text x="1248.70" y="375.90" font-size="11.5" fill="#c7c8d0" text-anchor="end">15 MB/s</text><text x="1287.59" y="505.20" font-size="11.5" fill="#c7c8d0" text-anchor="middle">14:00</text><text x="1357.20" y="505.20" font-size="11.5" fill="#c7c8d0" text-anchor="middle">14:05</text><text x="1426.81" y="505.20" font-size="11.5" fill="#c7c8d0" text-anchor="middle">14:10</text><text x="1496.42" y="505.20" font-size="11.5" fill="#c7c8d0" text-anchor="middle">14:15</text><text x="1566.03" y="505.20" font-size="11.5" fill="#c7c8d0" text-anchor="middle">14:20</text><text x="1635.64" y="505.20" font-size="11.5" fill="#c7c8d0" text-anchor="middle">14:25</text><text x="1705.25" y="505.20" font-size="11.5" fill="#c7c8d0" text-anchor="middle">14:30</text><clipPath id="c7"><rect x="1255.1" y="372.0" width="495.4" height="116.5"/></clipPath><path d="M1255.1 486.8l58.8 0 2.1-.8 90.6 0 2.9-1.7 211.5-.1 3.5 2 123.3 0 0 1.3-492.7 0Z" fill="#7EB26D" fill-opacity="0.1" clip-path="url(#c7)"/><path d="M1254.9 486.2l16.2 0 4.9-37 2.1 11.9 2.1-3.5 2.8 .7 1.8-24.9 5.2 8.7 2.1 12.7 2.6 3.9 3.8-18.7 5.3-9.8 2.4 7.7 4.2 9.9 2.8 10.9 4.2-34.1 2.8 7.7 1.7-4.9 2.5 4.9 2.1 18 3.6-2.5 1.6 .7 2.6-24.6 1.7-1.7 2.5 5.9 2.1-.7 2.1 7.7 2.8 13.4 2.1-2.2 2.1-18.2 2.8-7 2.1 4.9 2.1-4.2 2.9 4.9 2.1 22.5 2.1-4.3 2.5-2.8 2.4-18.2 2.4-2.8 2.5 2.8 3.5 6.3 .7 5.6 2.1 .7 2.8 12.7 4.7-33.8 3 9.9 2.2 2.8 2.1-.7 2.1 7.7 2.1 14.1 2.1-.7 2.8-30.9 2.1 9.1 2.8 3.5 2.8 14.7 1.4 21.1 2.1-2.8 2.1 7 2.8 11 2.2-13.8 2.8 2.1 3.5 .7 4.9 10.6 2.8-6.4 2.1 1.4 4.9-6.3 2.1 7 4.2 5 2.8-4.5 2.2-.5 2.5-11.2 2.4 10.5 2.8 4.5 2.1-.2 2.8-2.9 4.2-1.4 2.1-8.4 2.5 9.8 3.8 3.1 4.2-3.3 3.6-8.5 4.2 10.4 3.5 .5 4.9-3.5 3.6-5.7 2.1 7.9 2.2 .4 2.4 3.2 4.7-5.1 2.2-8.1 2.9 8.9 2.8 1.7 3.6 2.3 5-8.6 2.9 .6 2.8 4.7 2.9 2.8 5-7.5 2.2 1.1 2.8 2.9 2.2 0 2.4 4.3 4.3-7.2 2.3 2.1 2.5-1.4 3.5 4.3 3.2 3.3 2.3-4.7 2.4-1.5 2.5-3.2 2.5 4 4.3 3.5 2.5-.7 2.5-7.1 2.2 .7 2.1 3.6 2.5 0 4 5.4 2.6-4.7 3.1-2.9 2.2 .4 4.3 5.3 4.3-.4 2.8-2.4 2.2-3.9 2.1 3.2 3.6-20.1 4-7.9 2-24.3 2.6-3.6 2.2 7.2 2.1-2.9 4.3 22.9 2.9 1.7 2.1-23.9 2.4-9.3 2.3 9.3 2.5-6.4 2.1 5.7 2.6 23.6 4.6-7.9 2.1-16.4 2.2 4.3 2.6-19.1 2.4 14.8 2.2 12.9 2.5 2.1 2 7.9 4.8-31.5 2.8 7.1 2.2 2.9 2.1 0 2.2 5.7 2.1 20.5 2.9-1.8 2.1-31.6 2.9 5.1 3.6-2.9 4.3 20 2.8 5.1 2.2-.5 2.1-25.3 2.9 .4 2.2 4.6 2.5-5 2.5 20.7 4.3 8.9 4.7-25.3 3.2 17.9 4.3 26.5 0 18-493 0Z" fill="#EAB839" fill-opacity="0.1" clip-path="url(#c7)"/><path d="M1255.1 486.8l58.8 0 2.1-.8 90.6 0 2.9-1.7 211.5-.1 3.5 2 123.3 0" stroke="#7EB26D" fill="none" clip-path="url(#c7)"/><path d="M1254.9 486.2l16.2 0 4.9-37 2.1 11.9 2.1-3.5 2.8 .7 1.8-24.9 5.2 8.7 2.1 12.7 2.6 3.9 3.8-18.7 5.3-9.8 2.4 7.7 4.2 9.9 2.8 10.9 4.2-34.1 2.8 7.7 1.7-4.9 2.5 4.9 2.1 18 3.6-2.5 1.6 .7 2.6-24.6 1.7-1.7 2.5 5.9 2.1-.7 2.1 7.7 2.8 13.4 2.1-2.2 2.1-18.2 2.8-7 2.1 4.9 2.1-4.2 2.9 4.9 2.1 22.5 2.1-4.3 2.5-2.8 2.4-18.2 2.4-2.8 2.5 2.8 3.5 6.3 .7 5.6 2.1 .7 2.8 12.7 4.7-33.8 3 9.9 2.2 2.8 2.1-.7 2.1 7.7 2.1 14.1 2.1-.7 2.8-30.9 2.1 9.1 2.8 3.5 2.8 14.7 1.4 21.1 2.1-2.8 2.1 7 2.8 11 2.2-13.8 2.8 2.1 3.5 .7 4.9 10.6 2.8-6.4 2.1 1.4 4.9-6.3 2.1 7 4.2 5 2.8-4.5 2.2-.5 2.5-11.2 2.4 10.5 2.8 4.5 2.1-.2 2.8-2.9 4.2-1.4 2.1-8.4 2.5 9.8 3.8 3.1 4.2-3.3 3.6-8.5 4.2 10.4 3.5 .5 4.9-3.5 3.6-5.7 2.1 7.9 2.2 .4 2.4 3.2 4.7-5.1 2.2-8.1 2.9 8.9 2.8 1.7 3.6 2.3 5-8.6 2.9 .6 2.8 4.7 2.9 2.8 5-7.5 2.2 1.1 2.8 2.9 2.2 0 2.4 4.3 4.3-7.2 2.3 2.1 2.5-1.4 3.5 4.3 3.2 3.3 2.3-4.7 2.4-1.5 2.5-3.2 2.5 4 4.3 3.5 2.5-.7 2.5-7.1 2.2 .7 2.1 3.6 2.5 0 4 5.4 2.6-4.7 3.1-2.9 2.2 .4 4.3 5.3 4.3-.4 2.8-2.4 2.2-3.9 2.1 3.2 3.6-20.1 4-7.9 2-24.3 2.6-3.6 2.2 7.2 2.1-2.9 4.3 22.9 2.9 1.7 2.1-23.9 2.4-9.3 2.3 9.3 2.5-6.4 2.1 5.7 2.6 23.6 4.6-7.9 2.1-16.4 2.2 4.3 2.6-19.1 2.4 14.8 2.2 12.9 2.5 2.1 2 7.9 4.8-31.5 2.8 7.1 2.2 2.9 2.1 0 2.2 5.7 2.1 20.5 2.9-1.8 2.1-31.6 2.9 5.1 3.6-2.9 4.3 20 2.8 5.1 2.2-.5 2.1-25.3 2.9 .4 2.2 4.6 2.5-5 2.5 20.7 4.3 8.9 4.7-25.3 3.2 17.9 4.3 26.5" stroke="#EAB839" fill="none" clip-path="url(#c7)"/><rect x="1213" y="524.1" width="14" height="4" rx="1" fill="#7EB26D"/><text x="1234.50" y="529.10" font-size="12" fill="#ccccdc" text-anchor="start" textLength="29.11" lengthAdjust="spacingAndGlyphs">Read</text><text x="1270.31" y="529.10" font-size="12" fill="#ccccdc" text-anchor="start" textLength="77.16" lengthAdjust="spacingAndGlyphs">Max: 363 kB/s</text><text x="1354.16" y="529.10" font-size="12" fill="#ccccdc" text-anchor="start" textLength="75.14" lengthAdjust="spacingAndGlyphs">Avg: 172 kB/s</text><rect x="1440" y="524.1" width="14" height="4" rx="1" fill="#EAB839"/><text x="1461.30" y="529.10" font-size="12" fill="#ccccdc" text-anchor="start" textLength="28.55" lengthAdjust="spacingAndGlyphs">Write</text><text x="1496.58" y="529.10" font-size="12" fill="#ccccdc" text-anchor="start" textLength="85.01" lengthAdjust="spacingAndGlyphs">Max: 9.98 MB/s</text><text x="1588.32" y="529.10" font-size="12" fill="#ccccdc" text-anchor="start" textLength="82.98" lengthAdjust="spacingAndGlyphs">Avg: 3.92 MB/s</text><path d="M664.0 815.5H1161.6M664.0 772.5H1161.6M664.0 729.5H1161.6M664.0 687.5H1161.6M664.0 644.5H1161.6M664.0 601.5H1161.6M696.5 601.0V815.5M766.5 601.0V815.5M836.5 601.0V815.5M906.5 601.0V815.5M976.5 601.0V815.5M1046.5 601.0V815.5M1116.5 601.0V815.5" stroke="#9b9b9b" stroke-opacity="0.3" stroke-width="1" fill="none"/><text x="657.90" y="817.90" font-size="11.5" fill="#c7c8d0" text-anchor="end">-200</text><text x="657.90" y="775.10" font-size="11.5" fill="#c7c8d0" text-anchor="end">-150</text><text x="657.90" y="732.30" font-size="11.5" fill="#c7c8d0" text-anchor="end">-100</text><text x="657.90" y="689.50" font-size="11.5" fill="#c7c8d0" text-anchor="end">-50</text><text x="657.90" y="646.70" font-size="11.5" fill="#c7c8d0" text-anchor="end">0</text><text x="657.90" y="603.90" font-size="11.5" fill="#c7c8d0" text-anchor="end">50</text><text x="696.63" y="833.20" font-size="11.5" fill="#c7c8d0" text-anchor="middle">14:00</text><text x="766.55" y="833.20" font-size="11.5" fill="#c7c8d0" text-anchor="middle">14:05</text><text x="836.47" y="833.20" font-size="11.5" fill="#c7c8d0" text-anchor="middle">14:10</text><text x="906.39" y="833.20" font-size="11.5" fill="#c7c8d0" text-anchor="middle">14:15</text><text x="976.31" y="833.20" font-size="11.5" fill="#c7c8d0" text-anchor="middle">14:20</text><text x="1046.23" y="833.20" font-size="11.5" fill="#c7c8d0" text-anchor="middle">14:25</text><text x="1116.15" y="833.20" font-size="11.5" fill="#c7c8d0" text-anchor="middle">14:30</text><clipPath id="c8"><rect x="664.0" y="600.0" width="497.6" height="216.5"/></clipPath><text x="0" y="0" font-size="12" fill="#c7c8d0" text-anchor="middle" transform="translate(626.5 715) rotate(-90)">ops/s</text><path d="M664 644.3l1.2 0 1.1 0 1.2 0 1.2 0 1.1 0 1.2 0 1.2 0 1.1 0 1.2 0 1.2 0 1.1 0 1.2 0 1.1 0 1.2 0 1.2 31.1 1.1 21.6 1.2 10.3 1.2 4.1 1.1-26.7 1.2-3.1 1.2 16.2 1.1 23.9 1.2-1.8 1.2-8.6 1.1 3 1.2-3.6 1.2 19.5 1.1 15.6 1.2 46.7 1.2-25.2 1.1-38.6 1.2-7.6 1.2-16.1 1.1-30.1 1.2 5 1.2 1.9 1.1 4.7 1.2 20.1 1.1 3 1.2-3.9 1.2-.7 1.1 14 1.2 20.4 1.2 .3 1.1 7.2 1.2-34.1 1.2 .4 1.1-23.1 1.2-16.9 1.2 15.2 1.1 30.2 1.2-5.3 1.2 2.6 1.1-5.1 1.2 1.9 1.2 16.3 1.1 20.1 1.2-3.9 1.2 23 1.1-3.2 1.2-35.6 1.2-14.1 1.1-19.4 1.2-21.4 1.1 27.3 1.2 22.7 1.2 8.2 1.1-24.6 1.2 8.8 1.2-1 1.1 21.6 1.2 2.2 1.2 49.5 1.1 15.4 1.2-56.2 1.2 3.9 1.1-43.2 1.2-21.5 1.2-3.6 1.1 16.6 1.2 38.9 1.2-19.4 1.1-3.8 1.2-7 1.2 5.2 1.1 21.5 1.2 6.6 1.1 28.7 1.2-8.2 1.2-41.5 1.1 13 1.2-22.5 1.2-28.3 1.1 1 1.2 16.3 1.2 14.8 1.1-20.2 1.2 14.8 1.2-6.8 1.1 26.4 1.2-16.9 1.2 8.3 1.1 33.8 1.2 5.6 1.2-20.6 1.1-22.2 1.2-27.5 1.2-15.6 1.1 6.9 1.2 35.5 1.2-7.2 1.1-12.9 1.2-.9 1.1 5.5 1.2 12.6 1.2 6.7 1.1 29.5 1.2 13.1 1.2-11.5 1.1-27.9 1.2-15.8 1.2-15.6 1.1-13.8 1.2 10.8 1.2 15.9 1.1 15.8 1.2-.6 1.2-16.9 1.1 8.5 1.2 28.8 1.2 27.6 1.1-4.2 1.2 14.2 1.2-68.7 1.1-23.1 1.2-24.5 1.2-14.6 1.1 .3 1.2 3.2 1.1-6.1 1.2 4.2 1.2-3.3 1.1-.1 1.2-.6 1.2 1.5 1.1 .3 1.2 11.2 1.2 18.3 1.1-12.7 1.2-16.2 1.2-.2 1.1 .2 1.2-2.8 1.2 3.5 1.1 1.4 1.2 13.4 1.2 19.7 1.1-23.9 1.2-10.4 1.2-2.6 1.1 2.8 1.2-2.8 1.2-1.1 1.1 2.7 1.2 2.4 1.1-3.5 1.2 1.1 1.2-2.2 1.1 2 1.2 .9 1.2 14.1 1.1 17.8 1.2-13.7 1.2-18.8 1.1-1.7 1.2 3.4 1.2-3.9 1.1 3 1.2-1.6 1.2 13.9 1.1 16.1 1.2-20.2 1.2-7.7 1.1-2.1 1.2 2.4 1.2-.7 1.1-1.7 1.2-1.9 1.1 2.8 1.2-.1 1.2 .8 1.1 11.4 1.2 3 1.2-11.1 1.1-3.5 1.2-1.6 1.2 2.7 1.1-3 1.2-.3 1.2 .9 1.1 2.1 1.2-2.3 1.2 3.2 1.1-1.6 1.2 8.1 1.2 19.2 1.1-11.7 1.2-15.4 1.2-1.4 1.1-2 1.2 1.1 1.2 .4 1.1-1.8 1.2 5.5 1.1-2.9 1.2 3.2 1.2-1.3 1.1 16.7 1.2 9.4 1.2-12.7 1.1-14.4 1.2 2.3 1.2-5.3 1.1-.6 1.2 .7 1.2 5.3 1.1 5.7 1.2 5.9 1.2-3.1 1.1-9.5 1.2-1.4 1.2-1.7 1.1 .4 1.2 2.8 1.2-2.3 1.1-1.6 1.2 2.9 1.2-.9 1.1 19 1.2 13.7 1.1-21.1 1.2-12.4 1.2-1 1.1-.2 1.2-.8 1.2 2.3 1.1-2.5 1.2 1.8 1.2-.4 1.1 1.2 1.2 3.4 1.2 10.7 1.1 7.6 1.2-16.3 1.2-1.4 1.1-5.9 1.2-.5 1.2 4.7 1.1-5 1.2 .4 1.2 .2 1.1 .6 1.2 2.3 1.1 10 1.2 15.2 1.2-15.7 1.1-10.2 1.2-1.2 1.2-1.2 1.1 3.8 1.2 .1 1.2-4.4 1.1 4.6 1.2 2.5 1.2 3.8 1.1 17.5 1.2-11.7 1.2-12 1.1-1 1.2-2.8 1.2-.7 1.1 2 1.2-.3 1.2 .3 1.1 3.5 1.2 1.1 1.2 10 1.1 14.9 1.2-12 1.1-17.5 1.2 1 1.2 .3 1.1 3.2 1.2-5.9 1.2 2.9 1.1-2.8 1.2 2.7 1.2 10.8 1.1 19.7 1.2-16.4 1.2-15 1.1 1.1 1.2 1.3 1.2-2.4 1.1-1.4 1.2 2.3 1.2-2.6 1.1 1.9 1.2 10.4 1.2 15.8 1.1-12.1 1.2-12.9 1.2-2.8 1.1-1.2 1.2 2.2 1.1-.5 1.2-1.8 1.2-.4 1.1 11.5 1.2 15 1.2 24.8 1.1 30.1 1.2 27.1 1.2 9.1 1.1-33.8 1.2-19.9 1.2 1.6 1.1-21.1 1.2-13 1.2 10.8 1.1 22.6 1.2 2 1.2-13.3 1.1-3 1.2 5.5 1.2 3.2 1.1 22.6 1.2 2.2 1.2-3.4 1.1 9.3 1.2-32.3 1.1 6 1.2-30.6 1.2 5.4 1.1 15.5 1.2 25.1 1.2-9.8 1.1-5.5 1.2-.8 1.2 12.6 1.1 26.7 1.2 20.2 1.2-4.3 1.1-12.6 1.2-13.9 1.2-19.4 1.1-14.8 1.2-22.2 1.2 5.4 1.1 18.9 1.2 16 1.2-10.8 1.1-1 1.2-7.5 1.1 15.3 1.2 15.8 1.2 24.9 1.1 6.9 1.2-8.1 1.2-22 1.1-29.2 1.2-1.3 1.2-29.8 1.1 15.7 1.2 21.5 1.2 4.6 1.1-13.3 1.2-1.2 1.2 1.3 1.1 13.9 1.2 .7 1.2 38.3 1.1 0 1.2-11 1.2-35.2 1.1-.3 1.2-14.5 1.2-10.2 1.1 3.3 1.2 16 1.1 6 1.2-9.9 1.2-8.1 1.1 27.8 1.2 26 1.2 2.3 1.1 7.4 1.2 9.9 1.2-55.3 1.1 15.9 1.2-15 1.2-32.6 1.1 9.3 1.2 30.2 1.2 25 1.1-7.4 1.2-19 1.2-19.7 1.1 27.4 1.2 20.6 1.2 13.9 1.1 5.5 1.2-2.8 1.2-1.8 1.1-33.7 1.2-37.4 1.1-18.8 1.2 17.3 1.2 29 1.1 7.2 1.2-14 1.2-6.5 1.1 9.7 1.2 12.8 0-80.1-1.2 0-1.1 0-1.2 0-1.2 0-1.1 0-1.2 0-1.2 0-1.1 0-1.2 0-1.1 0-1.2 0-1.2 0-1.1 0-1.2 0-1.2 0-1.1 0-1.2 0-1.2 0-1.1 0-1.2 0-1.2 0-1.1 0-1.2 0-1.2 0-1.1 0-1.2 0-1.2 0-1.1 0-1.2 0-1.2 0-1.1 0-1.2 0-1.2 0-1.1 0-1.2 0-1.1 0-1.2 0-1.2 0-1.1 0-1.2 0-1.2 0-1.1 0-1.2 0-1.2 0-1.1 0-1.2 0-1.2 0-1.1 0-1.2 0-1.2 0-1.1 0-1.2 0-1.2 0-1.1 0-1.2 0-1.2 0-1.1 0-1.2 0-1.2 0-1.1 0-1.2 0-1.1 0-1.2 0-1.2 0-1.1 0-1.2 0-1.2 0-1.1 0-1.2 0-1.2 0-1.1 0-1.2 0-1.2 0-1.1 0-1.2 0-1.2 0-1.1 0-1.2 0-1.2 0-1.1 0-1.2 0-1.2 0-1.1 0-1.2 0-1.1 0-1.2 0-1.2 0-1.1 0-1.2 0-1.2 0-1.1 0-1.2 0-1.2 0-1.1 0-1.2 0-1.2 0-1.1 0-1.2 0-1.2 0-1.1 0-1.2 0-1.2 0-1.1 0-1.2 0-1.2 0-1.1 0-1.2 0-1.2 0-1.1 0-1.2 0-1.1 0-1.2 0-1.2 0-1.1 0-1.2 0-1.2 0-1.1 0-1.2 0-1.2 0-1.1 0-1.2 0-1.2 0-1.1 0-1.2 0-1.2 0-1.1 0-1.2 0-1.2 0-1.1 0-1.2 0-1.2 0-1.1 0-1.2 0-1.2 0-1.1 0-1.2 0-1.1 0-1.2 0-1.2 0-1.1 0-1.2 0-1.2 0-1.1 0-1.2 0-1.2 0-1.1 0-1.2 0-1.2 0-1.1 0-1.2 0-1.2 0-1.1 0-1.2 0-1.2 0-1.1 0-1.2 0-1.2 0-1.1 0-1.2 0-1.2 0-1.1 0-1.2 0-1.1 0-1.2 0-1.2 0-1.1 0-1.2 0-1.2 0-1.1 0-1.2 0-1.2 0-1.1 0-1.2 0-1.2 0-1.1 0-1.2 0-1.2 0-1.1 0-1.2 0-1.2 0-1.1 0-1.2 0-1.2 0-1.1 0-1.2 0-1.1 0-1.2 0-1.2 0-1.1 0-1.2 0-1.2 0-1.1 0-1.2 0-1.2 0-1.1 0-1.2 0-1.2 0-1.1 0-1.2 0-1.2 0-1.1 0-1.2 0-1.2 0-1.1 0-1.2 0-1.2 0-1.1 0-1.2 0-1.2 0-1.1 0-1.2 0-1.1 0-1.2 0-1.2 0-1.1 0-1.2 0-1.2 0-1.1 0-1.2 0-1.2 0-1.1 0-1.2 0-1.2 0-1.1 0-1.2 0-1.2 0-1.1 0-1.2 0-1.2 0-1.1 0-1.2 0-1.2 0-1.1 0-1.2 0-1.2 0-1.1 0-1.2 0-1.1 0-1.2 0-1.2 0-1.1 0-1.2 0-1.2 0-1.1 0-1.2 0-1.2 0-1.1 0-1.2 0-1.2 0-1.1 0-1.2 0-1.2 0-1.1 0-1.2 0-1.2 0-1.1 0-1.2 0-1.2 0-1.1 0-1.2 0-1.1 0-1.2 0-1.2 0-1.1 0-1.2 0-1.2 0-1.1 0-1.2 0-1.2 0-1.1 0-1.2 0-1.2 0-1.1 0-1.2 0-1.2 0-1.1 0-1.2 0-1.2 0-1.1 0-1.2 0-1.2 0-1.1 0-1.2 0-1.2 0-1.1 0-1.2 0-1.1 0-1.2 0-1.2 0-1.1 0-1.2 0-1.2 0-1.1 0-1.2 0-1.2 0-1.1 0-1.2 0-1.2 0-1.1 0-1.2 0-1.2 0-1.1 0-1.2 0-1.2 0-1.1 0-1.2 0-1.2 0-1.1 0-1.2 0-1.2 0-1.1 0-1.2 0-1.1 0-1.2 0-1.2 0-1.1 0-1.2 0-1.2 0-1.1 0-1.2 0-1.2 0-1.1 0-1.2 0-1.2 0-1.1 0-1.2 0-1.2 0-1.1 0-1.2 0-1.2 0-1.1 0-1.2 0-1.2 0-1.1 0-1.2 0-1.2 0-1.1 0-1.2 0-1.1 0-1.2 0-1.2 0-1.1 0-1.2 0-1.2 0-1.1 0-1.2 0-1.2 0-1.1 0-1.2 0-1.2 0-1.1 0-1.2 0-1.2 0-1.1 0-1.2 0-1.2 0-1.1 0-1.2 0-1.2 0-1.1 0-1.2 0-1.1 0-1.2 0-1.2 0-1.1 0-1.2 0-1.2 0-1.1 0-1.2 0-1.2 0-1.1 0-1.2 0-1.2 0-1.1 0-1.2 0-1.2 0-1.1 0-1.2 0-1.2 0-1.1 0-1.2 0-1.2 0-1.1 0-1.2 0-1.2 0-1.1 0-1.2 0-1.1 0-1.2 0-1.2 0-1.1 0-1.2 0-1.2 0-1.1 0-1.2 0-1.2 0-1.1 0-1.2 0-1.2 0-1.1 0-1.2 0-1.2 0-1.1 0-1.2 0-1.2 0-1.1 0-1.2 0-1.2 0-1.1 0-1.2 0-1.2 0-1.1 0-1.2 0-1.1 0-1.2 0-1.2 0-1.1 0-1.2 0-1.2 0-1.1 0-1.2 0-1.2 0-1.1 0-1.2 0Z" fill="#7EB26D" fill-opacity="0.1" clip-path="url(#c8)"/><path d="M664 644.3l1.2 0 1.1 0 1.2 0 1.2 0 1.1 0 1.2 0 1.2 0 1.1 0 1.2 0 1.2 0 1.1 0 1.2 0 1.1 0 1.2 0 1.2 33.6 1.1 34.7 1.2 10.6 1.2-5.1 1.1-11.4 1.2-26.2 1.2-8.9 1.1 25.5 1.2 16.2 1.2-.1 1.1 8.9 1.2-20.2 1.2 .5 1.1 29.4 1.2 5.8 1.2 40.9 1.1 2.1 1.2-38.4 1.2-16.8 1.1-15.4 1.2-24.1 1.2-5.2 1.1 20.6 1.2 2.4 1.1 3 1.2 2.8 1.2-.6 1.1-4.9 1.2 6.2 1.2 33.9 1.1-6.2 1.2 8.1 1.2-25.2 1.1-2.7 1.2-25.6 1.2-12.2 1.1 10.5 1.2 15.6 1.2 12.6 1.1 3.4 1.2 .2 1.2-13 1.1 1.7 1.2 29.9 1.2 30.8 1.1-13.4 1.2 5.6 1.2-21.7 1.1-33.8 1.2-12.4 1.1-19.8 1.2 14.3 1.2 29.9 1.1-4.6 1.2-4.7 1.2-14.2 1.1 23.4 1.2 2.4 1.2-11.5 1.1 35.6 1.2-8 1.2 2.3 1.1-32.5 1.2-6.9 1.2-13.6 1.1-6.3 1.2 27 1.2 7 1.1-.4 1.2 5.9 1.2-15.8 1.1 12.1 1.2 3.1 1.1 37 1.2 14.1 1.2 7 1.1-39.6 1.2-5.2 1.2-32.7 1.1-17.3 1.2-4.4 1.2 30 1.1-6.6 1.2 13.2 1.2-11.6 1.1-6.6 1.2 35.9 1.2-7.7 1.1 23.1 1.2 2.8 1.2-14.4 1.1-6.3 1.2-30.3 1.2 .4 1.1-25.5 1.2 8.5 1.2 12.6 1.1 14.6 1.2-3.7 1.1 .2 1.2-17.3 1.2 18.6 1.1 13 1.2 24.3 1.2-11.9 1.1 13 1.2-30.3 1.2-3.3 1.1-26.2 1.2-16.9 1.2 26.9 1.1 8.4 1.2 20.2 1.2-22.9 1.1-8.3 1.2 20 1.2 20 1.1 2.4 1.2 8.4 1.2-20.9 1.1-46.2 1.2-12.4 1.2-15.9 1.1-2.2 1.2 1.4 1.1-4.2 1.2 .1 1.2 1.2 1.1 .8 1.2 2 1.2 .6 1.1 10.5 1.2-2.3 1.2-7.6 1.1-.9 1.2-4.5 1.2 .8 1.1 1.2 1.2-2.1 1.2 0 1.1 .3 1.2 4.7 1.2 3.9 1.1 .3 1.2-1.5 1.2-5.9 1.1 1.2 1.2-1.8 1.2-.1 1.1 4.7 1.2-5.7 1.1 4.3 1.2-1.2 1.2 9.2 1.1 4.1 1.2-10.6 1.2-2.3 1.1-.4 1.2-1.5 1.2 1.7 1.1-2.5 1.2 3.2 1.2-4.3 1.1 5.4 1.2-1 1.2 7.3 1.1 3.7 1.2-7.7 1.2-4.9 1.1-2.7 1.2 .8 1.2 .4 1.1-1.5 1.2 .5 1.1 3.1 1.2-1.6 1.2 7.4 1.1 9.6 1.2-6.8 1.2-9.4 1.1 .2 1.2 0 1.2-2 1.1-.4 1.2 .1 1.2 .2 1.1 2.1 1.2-.4 1.2 8.7 1.1 8.7 1.2-6.7 1.2-9.6 1.1-1.2 1.2-1.7 1.2 3.4 1.1-3.4 1.2 .2 1.2-.8 1.1 5.1 1.2-.4 1.1 7.2 1.2 .2 1.2-9.1 1.1-1.8 1.2-1.5 1.2 .5 1.1 3.3 1.2-1 1.2 .4 1.1-2 1.2 2.6 1.2-.4 1.1 .7 1.2 6.1 1.2 7.3 1.1-5.3 1.2-8.8 1.2 .3 1.1-3.7 1.2 .7 1.2 5 1.1-4.7 1.2 3.8 1.2-1.4 1.1 11.4 1.2 6.3 1.1-14.3 1.2-2.5 1.2 .8 1.1-3.1 1.2 .4 1.2-.2 1.1-1.5 1.2 2.8 1.2 6.2 1.1 7.2 1.2-9.2 1.2 .3 1.1-2.4 1.2-5.2 1.2 2 1.1-2.4 1.2 .7 1.2-.5 1.1 1.6 1.2-1.3 1.2 .8 1.1 2.1 1.2 6.8 1.1 8.6 1.2-8.3 1.2-3.7 1.1-4.4 1.2-1.1 1.2 1.8 1.1 1.3 1.2-3.2 1.2 2 1.1 2.6 1.2 4.2 1.2-1.1 1.1-4.4 1.2 1.8 1.2-5.6 1.1 .1 1.2 1.7 1.2 1.9 1.1-4.1 1.2 4.9 1.2-3.5 1.1 5.1 1.2 6.6 1.2-1.4 1.1-7.6 1.2-2.6 1.1-1.7 1.2 .9 1.2-.2 1.1-.5 1.2 1.5 1.2-1.4 1.1 .2 1.2 2.5 1.2 1.3 1.1 5 1.2 6.1 1.2-2.2 1.1-9.9 1.2 .9 1.2 .1 1.1-4.5 1.2 3.2 1.2-1.1 1.1 .7 1.2 3.9 1.2 4.6 1.1 1.7 1.2-8.1 1.2-3.2 1.1 0 1.2 .7 1.1-1.4 1.2 3.2 1.2-.2 1.1 9.5 1.2 15 1.2 12.4 1.1 38.8 1.2 13.4 1.2 24.1 1.1 31.7 1.2-26.6 1.2-13.3 1.1-35.1 1.2-36.5 1.2-7.7 1.1 23.7 1.2-1.7 1.2 21.1 1.1-12.3 1.2-4.6 1.2 6.6 1.1 34.3 1.2-14.7 1.2 19.4 1.1 19.7 1.2-16.6 1.1-28.7 1.2-6.2 1.2-30.1 1.1 .8 1.2 1.5 1.2 26 1.1-2.6 1.2 1.8 1.2-19.4 1.1 7.8 1.2 28.9 1.2 7.3 1.1-15.5 1.2 14.5 1.2 6.1 1.1-41.3 1.2-1.7 1.2-22.1 1.1 7.5 1.2 19.4 1.2 19.9 1.1 .7 1.2-32.1 1.1 14.3 1.2 17.4 1.2 4.8 1.1 14.3 1.2 42.7 1.2-11.4 1.1-43.5 1.2-16.5 1.2-21.2 1.1-21.3 1.2 19.3 1.2 12.4 1.1 9.2 1.2 11 1.2-18.1 1.1-4.6 1.2 19.6 1.2 16 1.1 26.6 1.2-14.9 1.2-26.1 1.1-3.6 1.2-19.5 1.2-17.4 1.1-1.5 1.2 11.1 1.1 5.1 1.2 21.5 1.2-15.7 1.1 9 1.2-12.2 1.2 8.7 1.1 30.2 1.2 22.7 1.2-7.9 1.1-16.3 1.2-11.5 1.2-21.2 1.1-19.8 1.2 4.3 1.2 15.1 1.1 12.1 1.2-15.2 1.2 6.2 1.1-4.4 1.2 23.3 1.2 23.7 1.1-2.2 1.2 14.6 1.2 7.1 1.1-32.2 1.2-24.9 1.1-8 1.2-21.8 1.2 11.3 1.1 15.5 1.2 2.8 1.2 7.2 1.1-13.7 1.2-4.3 0-56.4-1.2 0-1.1 0-1.2 0-1.2 0-1.1 0-1.2 0-1.2 0-1.1 0-1.2 0-1.1 0-1.2 0-1.2 0-1.1 0-1.2 0-1.2 0-1.1 0-1.2 0-1.2 0-1.1 0-1.2 0-1.2 0-1.1 0-1.2 0-1.2 0-1.1 0-1.2 0-1.2 0-1.1 0-1.2 0-1.2 0-1.1 0-1.2 0-1.2 0-1.1 0-1.2 0-1.1 0-1.2 0-1.2 0-1.1 0-1.2 0-1.2 0-1.1 0-1.2 0-1.2 0-1.1 0-1.2 0-1.2 0-1.1 0-1.2 0-1.2 0-1.1 0-1.2 0-1.2 0-1.1 0-1.2 0-1.2 0-1.1 0-1.2 0-1.2 0-1.1 0-1.2 0-1.1 0-1.2 0-1.2 0-1.1 0-1.2 0-1.2 0-1.1 0-1.2 0-1.2 0-1.1 0-1.2 0-1.2 0-1.1 0-1.2 0-1.2 0-1.1 0-1.2 0-1.2 0-1.1 0-1.2 0-1.2 0-1.1 0-1.2 0-1.1 0-1.2 0-1.2 0-1.1 0-1.2 0-1.2 0-1.1 0-1.2 0-1.2 0-1.1 0-1.2 0-1.2 0-1.1 0-1.2 0-1.2 0-1.1 0-1.2 0-1.2 0-1.1 0-1.2 0-1.2 0-1.1 0-1.2 0-1.2 0-1.1 0-1.2 0-1.1 0-1.2 0-1.2 0-1.1 0-1.2 0-1.2 0-1.1 0-1.2 0-1.2 0-1.1 0-1.2 0-1.2 0-1.1 0-1.2 0-1.2 0-1.1 0-1.2 0-1.2 0-1.1 0-1.2 0-1.2 0-1.1 0-1.2 0-1.2 0-1.1 0-1.2 0-1.1 0-1.2 0-1.2 0-1.1 0-1.2 0-1.2 0-1.1 0-1.2 0-1.2 0-1.1 0-1.2 0-1.2 0-1.1 0-1.2 0-1.2 0-1.1 0-1.2 0-1.2 0-1.1 0-1.2 0-1.2 0-1.1 0-1.2 0-1.2 0-1.1 0-1.2 0-1.1 0-1.2 0-1.2 0-1.1 0-1.2 0-1.2 0-1.1 0-1.2 0-1.2 0-1.1 0-1.2 0-1.2 0-1.1 0-1.2 0-1.2 0-1.1 0-1.2 0-1.2 0-1.1 0-1.2 0-1.2 0-1.1 0-1.2 0-1.1 0-1.2 0-1.2 0-1.1 0-1.2 0-1.2 0-1.1 0-1.2 0-1.2 0-1.1 0-1.2 0-1.2 0-1.1 0-1.2 0-1.2 0-1.1 0-1.2 0-1.2 0-1.1 0-1.2 0-1.2 0-1.1 0-1.2 0-1.2 0-1.1 0-1.2 0-1.1 0-1.2 0-1.2 0-1.1 0-1.2 0-1.2 0-1.1 0-1.2 0-1.2 0-1.1 0-1.2 0-1.2 0-1.1 0-1.2 0-1.2 0-1.1 0-1.2 0-1.2 0-1.1 0-1.2 0-1.2 0-1.1 0-1.2 0-1.2 0-1.1 0-1.2 0-1.1 0-1.2 0-1.2 0-1.1 0-1.2 0-1.2 0-1.1 0-1.2 0-1.2 0-1.1 0-1.2 0-1.2 0-1.1 0-1.2 0-1.2 0-1.1 0-1.2 0-1.2 0-1.1 0-1.2 0-1.2 0-1.1 0-1.2 0-1.1 0-1.2 0-1.2 0-1.1 0-1.2 0-1.2 0-1.1 0-1.2 0-1.2 0-1.1 0-1.2 0-1.2 0-1.1 0-1.2 0-1.2 0-1.1 0-1.2 0-1.2 0-1.1 0-1.2 0-1.2 0-1.1 0-1.2 0-1.2 0-1.1 0-1.2 0-1.1 0-1.2 0-1.2 0-1.1 0-1.2 0-1.2 0-1.1 0-1.2 0-1.2 0-1.1 0-1.2 0-1.2 0-1.1 0-1.2 0-1.2 0-1.1 0-1.2 0-1.2 0-1.1 0-1.2 0-1.2 0-1.1 0-1.2 0-1.2 0-1.1 0-1.2 0-1.1 0-1.2 0-1.2 0-1.1 0-1.2 0-1.2 0-1.1 0-1.2 0-1.2 0-1.1 0-1.2 0-1.2 0-1.1 0-1.2 0-1.2 0-1.1 0-1.2 0-1.2 0-1.1 0-1.2 0-1.2 0-1.1 0-1.2 0-1.2 0-1.1 0-1.2 0-1.1 0-1.2 0-1.2 0-1.1 0-1.2 0-1.2 0-1.1 0-1.2 0-1.2 0-1.1 0-1.2 0-1.2 0-1.1 0-1.2 0-1.2 0-1.1 0-1.2 0-1.2 0-1.1 0-1.2 0-1.2 0-1.1 0-1.2 0-1.1 0-1.2 0-1.2 0-1.1 0-1.2 0-1.2 0-1.1 0-1.2 0-1.2 0-1.1 0-1.2 0-1.2 0-1.1 0-1.2 0-1.2 0-1.1 0-1.2 0-1.2 0-1.1 0-1.2 0-1.2 0-1.1 0-1.2 0-1.2 0-1.1 0-1.2 0-1.1 0-1.2 0-1.2 0-1.1 0-1.2 0-1.2 0-1.1 0-1.2 0-1.2 0-1.1 0-1.2 0-1.2 0-1.1 0-1.2 0-1.2 0-1.1 0-1.2 0-1.2 0-1.1 0-1.2 0-1.2 0-1.1 0-1.2 0-1.2 0-1.1 0-1.2 0-1.1 0-1.2 0-1.2 0-1.1 0-1.2 0-1.2 0-1.1 0-1.2 0-1.2 0-1.1 0-1.2 0Z" fill="#EAB839" fill-opacity="0.1" clip-path="url(#c8)"/><path d="M664 644.3l1.2 0 1.1 0 1.2 0 1.2 0 1.1 0 1.2 0 1.2 0 1.1 0 1.2 0 1.2 0 1.1 0 1.2 0 1.1 0 1.2 0 1.2 27 1.1 12.4 1.2 8 1.2-18.2 1.1 10.1 1.2 21 1.2 17.1 1.1-16.8 1.2-1.4 1.2 4.6 1.1 5 1.2 6.9 1.2 4.1 1.1 29.7 1.2-5.7 1.2-43.2 1.1-3.2 1.2-23.5 1.2 .3 1.1 15.2 1.2 27.3 1.2 11.3 1.1-16.6 1.2-12.7 1.1 16.2 1.2 9.1 1.2 14.9 1.1 17.5 1.2 4.2 1.2-.7 1.1-33.7 1.2-27.5 1.2-21.5 1.1 .1 1.2 23.3 1.2 18.4 1.1-14 1.2 3.7 1.2-11.6 1.1 9.4 1.2 25 1.2 11.9 1.1 37.1 1.2 13.1 1.2-60.8 1.1-6.6 1.2-32.8 1.2-16.1 1.1 7.1 1.2 10.1 1.1-15.2 1.2 14.5 1.2 7.3 1.1-9.5 1.2 14.5 1.2 24.8 1.1 27.5 1.2-7.1 1.2-30 1.1 7.4 1.2-20 1.2-16.5 1.1-19.6 1.2 16.2 1.2 14.1 1.1 30.5 1.2-25.9 1.2 1.2 1.1-5.5 1.2 10.7 1.2 14.7 1.1 26.1 1.2 6.4 1.1-25.1 1.2-19.4 1.2-9.7 1.1-22.1 1.2-4.8 1.2 15.6 1.1 26.8 1.2-6.6 1.2 7.7 1.1-18.1 1.2 10.4 1.2-.8 1.1 39.3 1.2 22.5 1.2-12 1.1-12.3 1.2-28.6 1.2-18.5 1.1-25.6 1.2 2.8 1.2 3.4 1.1 24.3 1.2 8.5 1.2-24 1.1-5.8 1.2 19.9 1.1 6.1 1.2 22.7 1.2 21.5 1.1-29.5 1.2 5.3 1.2-38.7 1.1-13.7 1.2-15.6 1.2 6.9 1.1 17 1.2 20.2 1.2-11.1 1.1-13.1 1.2-.8 1.2 15.9 1.1 11 1.2 15.2 1.2 15.2 1.1-15.4 1.2-31.7 1.2-12.6 1.1-23.1 1.2-10.8 1.2-5.6 1.1-.4 1.2-2.1 1.1 1.9 1.2-1.9 1.2-.2 1.1 1.2 1.2 3.6 1.2 10.6 1.1 10.1 1.2-9.3 1.2-9.8 1.1-1.9 1.2-1.4 1.2 .9 1.1-2.7 1.2-1.2 1.2 1.3 1.1-1.2 1.2 3.8 1.2 3.5 1.1 4.6 1.2-1.1 1.2-3.1 1.1-6.2 1.2 .8 1.2-2.2 1.1 2.4 1.2-1.4 1.1 3.7 1.2-4.1 1.2 2.2 1.1 1.6 1.2 7.7 1.2 3.8 1.1-7.6 1.2-5.6 1.2-2.3 1.1-.2 1.2-1 1.2 2.4 1.1-.3 1.2 10.3 1.2 13 1.1-11.2 1.2-12.1 1.2 3 1.1-4 1.2 4 1.2-.9 1.1-2.7 1.2 .6 1.1 3.9 1.2-4.8 1.2 3.4 1.1 1.1 1.2 10.6 1.2 2.7 1.1-13.3 1.2-.5 1.2-1.3 1.1-2.7 1.2-.7 1.2 .1 1.1 3.2 1.2 .1 1.2 .6 1.1 1.6 1.2 9.4 1.2-5.1 1.1-7.6 1.2 2.1 1.2-2.9 1.1-1.2 1.2 1.4 1.2-2.2 1.1 1.3 1.2-.4 1.1 3 1.2 2.1 1.2 7.8 1.1-5.3 1.2-5.5 1.2-1.2 1.1 1.9 1.2-2.2 1.2 1.4 1.1-1.1 1.2 2.1 1.2 1.4 1.1 7.8 1.2 4.3 1.2-10.1 1.1-4.8 1.2 1.2 1.2-.5 1.1-.4 1.2-2.1 1.2 2.3 1.1 1 1.2-3.1 1.2 .7 1.1 1.1 1.2-.6 1.1 6.2 1.2 12.5 1.2-6.8 1.1-9.1 1.2-2.9 1.2-1.4 1.1 4.4 1.2-2.4 1.2-.1 1.1 6.2 1.2 9.6 1.2-.6 1.1-8.5 1.2-7.2 1.2-.2 1.1-.5 1.2 1.4 1.2-2.6 1.1 3.8 1.2 1.7 1.2-.5 1.1 5.6 1.2 4.8 1.1-6.2 1.2-4.3 1.2-1.9 1.1-.3 1.2-.9 1.2-2 1.1 7.1 1.2-6.7 1.2 1.6 1.1 3.1 1.2 .3 1.2 4.1 1.1 13 1.2-8.1 1.2-9 1.1-1.5 1.2 .2 1.2-2.7 1.1-.8 1.2 2.1 1.2 2.7 1.1 2.3 1.2 9.1 1.2-5 1.1-4.6 1.2 1.9 1.1-8.8 1.2 0 1.2 .2 1.1 .6 1.2-.8 1.2 3.8 1.1-.6 1.2-.3 1.2 2.9 1.1 6.4 1.2-1.7 1.2-6.1 1.1-1.2 1.2-1.8 1.2-1.2 1.1 1.6 1.2 2.6 1.2-4.3 1.1 3.2 1.2-.3 1.2 7.5 1.1 6.6 1.2-8.9 1.2-5.7 1.1-.9 1.2 1.7 1.1-1.7 1.2 .1 1.2-2.2 1.1 13.9 1.2 24.5 1.2 48.6 1.1 10 1.2 4 1.2 3.6 1.1-33.6 1.2-10.7 1.2-29.5 1.1 16.1 1.2 11.2 1.2-.3 1.1-3.2 1.2 8.2 1.2-.1 1.1 5.8 1.2 15.4 1.2 19.9 1.1 33.8 1.2-33.7 1.2-20.4 1.1-12.7 1.2-24.8 1.1-11.5 1.2 12.9 1.2 20.2 1.1-.2 1.2 8.7 1.2-12.3 1.1 16.7 1.2 1.8 1.2 20.4 1.1 12.7 1.2 27.8 1.2-29.1 1.1-38.4 1.2-1.6 1.2-23.5 1.1-15.3 1.2 20.5 1.2 7.5 1.1 11.8 1.2-6.7 1.2 .8 1.1-8.6 1.2 38.8 1.1-26.7 1.2 35.6 1.2 12.8 1.1-25.4 1.2-24.7 1.2-19.2 1.1-14 1.2-.6 1.2 27.3 1.1 17.7 1.2 2.1 1.2-16.8 1.1 2 1.2 5.8 1.2 12.1 1.1 27.3 1.2 2.4 1.2 10 1.1-35.5 1.2-10.3 1.2-30.1 1.1-23.3 1.2 19.6 1.2 13.6 1.1 15.7 1.2-19.9 1.1 3.8 1.2 .3 1.2 10.2 1.1 23.7 1.2 32.9 1.2-20.3 1.1-2.7 1.2-19.3 1.2-19.9 1.1-31.5 1.2-3.2 1.2 9.3 1.1 22.6 1.2 3.3 1.2 3 1.1-19.9 1.2 2.4 1.2 27.3 1.1 5.9 1.2 3.8 1.2 28.9 1.1-22.5 1.2-22.3 1.2-31.6 1.1 2.5 1.2-8 1.1 6.7 1.2 33.1 1.2-25.1 1.1 15.6 1.2-14.1 1.2 16.5 1.1 14.2 1.2 18.8 0-102-1.2 0-1.1 0-1.2 0-1.2 0-1.1 0-1.2 0-1.2 0-1.1 0-1.2 0-1.1 0-1.2 0-1.2 0-1.1 0-1.2 0-1.2 0-1.1 0-1.2 0-1.2 0-1.1 0-1.2 0-1.2 0-1.1 0-1.2 0-1.2 0-1.1 0-1.2 0-1.2 0-1.1 0-1.2 0-1.2 0-1.1 0-1.2 0-1.2 0-1.1 0-1.2 0-1.1 0-1.2 0-1.2 0-1.1 0-1.2 0-1.2 0-1.1 0-1.2 0-1.2 0-1.1 0-1.2 0-1.2 0-1.1 0-1.2 0-1.2 0-1.1 0-1.2 0-1.2 0-1.1 0-1.2 0-1.2 0-1.1 0-1.2 0-1.2 0-1.1 0-1.2 0-1.1 0-1.2 0-1.2 0-1.1 0-1.2 0-1.2 0-1.1 0-1.2 0-1.2 0-1.1 0-1.2 0-1.2 0-1.1 0-1.2 0-1.2 0-1.1 0-1.2 0-1.2 0-1.1 0-1.2 0-1.2 0-1.1 0-1.2 0-1.1 0-1.2 0-1.2 0-1.1 0-1.2 0-1.2 0-1.1 0-1.2 0-1.2 0-1.1 0-1.2 0-1.2 0-1.1 0-1.2 0-1.2 0-1.1 0-1.2 0-1.2 0-1.1 0-1.2 0-1.2 0-1.1 0-1.2 0-1.2 0-1.1 0-1.2 0-1.1 0-1.2 0-1.2 0-1.1 0-1.2 0-1.2 0-1.1 0-1.2 0-1.2 0-1.1 0-1.2 0-1.2 0-1.1 0-1.2 0-1.2 0-1.1 0-1.2 0-1.2 0-1.1 0-1.2 0-1.2 0-1.1 0-1.2 0-1.2 0-1.1 0-1.2 0-1.1 0-1.2 0-1.2 0-1.1 0-1.2 0-1.2 0-1.1 0-1.2 0-1.2 0-1.1 0-1.2 0-1.2 0-1.1 0-1.2 0-1.2 0-1.1 0-1.2 0-1.2 0-1.1 0-1.2 0-1.2 0-1.1 0-1.2 0-1.2 0-1.1 0-1.2 0-1.1 0-1.2 0-1.2 0-1.1 0-1.2 0-1.2 0-1.1 0-1.2 0-1.2 0-1.1 0-1.2 0-1.2 0-1.1 0-1.2 0-1.2 0-1.1 0-1.2 0-1.2 0-1.1 0-1.2 0-1.2 0-1.1 0-1.2 0-1.1 0-1.2 0-1.2 0-1.1 0-1.2 0-1.2 0-1.1 0-1.2 0-1.2 0-1.1 0-1.2 0-1.2 0-1.1 0-1.2 0-1.2 0-1.1 0-1.2 0-1.2 0-1.1 0-1.2 0-1.2 0-1.1 0-1.2 0-1.2 0-1.1 0-1.2 0-1.1 0-1.2 0-1.2 0-1.1 0-1.2 0-1.2 0-1.1 0-1.2 0-1.2 0-1.1 0-1.2 0-1.2 0-1.1 0-1.2 0-1.2 0-1.1 0-1.2 0-1.2 0-1.1 0-1.2 0-1.2 0-1.1 0-1.2 0-1.2 0-1.1 0-1.2 0-1.1 0-1.2 0-1.2 0-1.1 0-1.2 0-1.2 0-1.1 0-1.2 0-1.2 0-1.1 0-1.2 0-1.2 0-1.1 0-1.2 0-1.2 0-1.1 0-1.2 0-1.2 0-1.1 0-1.2 0-1.2 0-1.1 0-1.2 0-1.1 0-1.2 0-1.2 0-1.1 0-1.2 0-1.2 0-1.1 0-1.2 0-1.2 0-1.1 0-1.2 0-1.2 0-1.1 0-1.2 0-1.2 0-1.1 0-1.2 0-1.2 0-1.1 0-1.2 0-1.2 0-1.1 0-1.2 0-1.2 0-1.1 0-1.2 0-1.1 0-1.2 0-1.2 0-1.1 0-1.2 0-1.2 0-1.1 0-1.2 0-1.2 0-1.1 0-1.2 0-1.2 0-1.1 0-1.2 0-1.2 0-1.1 0-1.2 0-1.2 0-1.1 0-1.2 0-1.2 0-1.1 0-1.2 0-1.2 0-1.1 0-1.2 0-1.1 0-1.2 0-1.2 0-1.1 0-1.2 0-1.2 0-1.1 0-1.2 0-1.2 0-1.1 0-1.2 0-1.2 0-1.1 0-1.2 0-1.2 0-1.1 0-1.2 0-1.2 0-1.1 0-1.2 0-1.2 0-1.1 0-1.2 0-1.2 0-1.1 0-1.2 0-1.1 0-1.2 0-1.2 0-1.1 0-1.2 0-1.2 0-1.1 0-1.2 0-1.2 0-1.1 0-1.2 0-1.2 0-1.1 0-1.2 0-1.2 0-1.1 0-1.2 0-1.2 0-1.1 0-1.2 0-1.2 0-1.1 0-1.2 0-1.1 0-1.2 0-1.2 0-1.1 0-1.2 0-1.2 0-1.1 0-1.2 0-1.2 0-1.1 0-1.2 0-1.2 0-1.1 0-1.2 0-1.2 0-1.1 0-1.2 0-1.2 0-1.1 0-1.2 0-1.2 0-1.1 0-1.2 0-1.2 0-1.1 0-1.2 0-1.1 0-1.2 0-1.2 0-1.1 0-1.2 0-1.2 0-1.1 0-1.2 0-1.2 0-1.1 0-1.2 0-1.2 0-1.1 0-1.2 0-1.2 0-1.1 0-1.2 0-1.2 0-1.1 0-1.2 0-1.2 0-1.1 0-1.2 0-1.2 0-1.1 0-1.2 0-1.1 0-1.2 0-1.2 0-1.1 0-1.2 0-1.2 0-1.1 0-1.2 0-1.2 0-1.1 0-1.2 0Z" fill="#6ED0E0" fill-opacity="0.1" clip-path="url(#c8)"/><path d="M664 644.3l1.2 0 1.1 0 1.2 0 1.2 0 1.1 0 1.2 0 1.2 0 1.1 0 1.2 0 1.2 0 1.1 0 1.2 0 1.1 0 1.2 0 1.2 34.6 1.1 43.9 1.2-9.8 1.2 11.5 1.1-36.3 1.2-6.1 1.2-3 1.1 15.4 1.2 26 1.2 1.4 1.1-22.7 1.2 1.1 1.2 15.7 1.1 14.2 1.2 39.4 1.2-16.6 1.1-11.5 1.2 10.9 1.2-41 1.1-20 1.2-14.5 1.2 11.3 1.1 21.6 1.2 11.4 1.1-1.1 1.2-18 1.2-7.2 1.1 21.5 1.2 21.8 1.2 12.2 1.1 9.7 1.2-15.9 1.2-25.6 1.1-5.2 1.2-24.7 1.2-16.9 1.1 25.9 1.2 35 1.2-11.9 1.1-12 1.2-8.4 1.2 1.1 1.1 15.1 1.2-2.9 1.2 38.7 1.1-3.6 1.2 21.1 1.2-50.1 1.1-14.5 1.2-17.8 1.1-6.9 1.2 11.4 1.2 16.6 1.1 .6 1.2-6.7 1.2 3.1 1.1 .5 1.2-2.2 1.2 26.7 1.1-4.1 1.2 14.5 1.2-6 1.1-34.6 1.2 .4 1.2-20.6 1.1 .2 1.2 26.8 1.2-.6 1.1-5.6 1.2-1 1.2-12.2 1.1 14 1.2 16.8 1.1 18.7 1.2 6 1.2-7.6 1.1-9.8 1.2-16.7 1.2-19.5 1.1-18 1.2 20.9 1.2 16.7 1.1 7.9 1.2-22.9 1.2 4.8 1.1 5.2 1.2-.3 1.2 5.6 1.1 46.6 1.2-14.7 1.2-11.4 1.1-11.3 1.2-21.8 1.2-6.7 1.1-17.3 1.2 10.7 1.2 20.4 1.1 11.9 1.2-17.9 1.1-5.7 1.2 3.8 1.2 23.5 1.1 13.2 1.2 22.4 1.2-22 1.1 2.3 1.2 1.5 1.2-45.1 1.1-21.5 1.2 8.8 1.2 35.6 1.1 3.5 1.2-5.5 1.2 3.2 1.1-21 1.2 10.9 1.2 22.8 1.1 22 1.2 9.8 1.2-28.4 1.1-40 1.2-26.9 1.2-16.3 1.1 .7 1.2-3.8 1.1-.3 1.2-.2 1.2 5.6 1.1-1.9 1.2 2.3 1.2 11 1.1-1.5 1.2-8.8 1.2-5.3 1.1-1.3 1.2-.3 1.2 2.4 1.1 1 1.2-1.7 1.2 3 1.1 9.7 1.2 6.4 1.2-10.4 1.1-8.1 1.2 2.1 1.2-3.1 1.1 1.4 1.2-2.3 1.2-.1 1.1 2.3 1.2 .5 1.1 9.2 1.2 13.3 1.2-13.6 1.1-6.3 1.2-4.2 1.2-1.2 1.1 .2 1.2 1.2 1.2-.4 1.1 1.2 1.2 .2 1.2-.1 1.1 3.1 1.2 4.5 1.2 14.2 1.1-5.4 1.2-12.8 1.2-3 1.1 1.2 1.2-2.2 1.2-1.4 1.1 1.5 1.2 .5 1.1 .8 1.2 0 1.2 8.4 1.1 8.4 1.2-10.8 1.2-6.9 1.1 3.3 1.2-3.3 1.2 .3 1.1-2.4 1.2 1.1 1.2 .9 1.1-1.4 1.2 1.1 1.2 3.9 1.1 16.1 1.2 5 1.2-18.1 1.1-6.2 1.2-1.6 1.2 2 1.1-.6 1.2-1 1.2 .3 1.1 1.6 1.2 3.5 1.1 1.9 1.2 14.4 1.2-.3 1.1-18.6 1.2-2.7 1.2-1.5 1.1-.1 1.2 3.3 1.2-.4 1.1-.9 1.2 .5 1.2 0 1.1 6.5 1.2 13 1.2-7.6 1.1-8.2 1.2-4.6 1.2-.1 1.1-1.4 1.2 .4 1.2 2.3 1.1 4.6 1.2-.2 1.2 8.9 1.1-4.7 1.2-4 1.1-5.3 1.2 3.1 1.2-5.1 1.1 1.6 1.2 1.1 1.2-.9 1.1-1.2 1.2 4.2 1.2-.9 1.1 9 1.2 7.4 1.2-13.2 1.1-4.4 1.2 1.1 1.2 0 1.1-.7 1.2-2.2 1.2 2 1.1-.8 1.2-1.6 1.2 3.2 1.1 3.6 1.2 14.6 1.1-5.8 1.2-10.7 1.2-3.8 1.1 .3 1.2 1.7 1.2-2.6 1.1 4.6 1.2-4 1.2 6.3 1.1 14.3 1.2-2.6 1.2-12.7 1.1-4.7 1.2 .7 1.2-.8 1.1 1.3 1.2-2.8 1.2 1 1.1 1.2 1.2 3.8 1.2 3.3 1.1 13.9 1.2-6.6 1.2-13.2 1.1-1.6 1.2-2.4 1.1 1.3 1.2 .2 1.2 .6 1.1 1.4 1.2-3.5 1.2 3.3 1.1-1.3 1.2 1.7 1.2 14.1 1.1 9.8 1.2-14.2 1.2-11.2 1.1-1.5 1.2 1.5 1.2-2.4 1.1 1.8 1.2 .3 1.2 5.9 1.1 15 1.2-6.7 1.2-10.3 1.1-4.5 1.2 1.2 1.2-1 1.1 2.5 1.2-2 1.1-.2 1.2-.6 1.2 .9 1.1 8.6 1.2 20.4 1.2 21.5 1.1 30.1 1.2 27.5 1.2-7.9 1.1 22.1 1.2-16.3 1.2-27.9 1.1-7.2 1.2-40.6 1.2 1.9 1.1 29.3 1.2 10 1.2-.2 1.1-10.7 1.2 .3 1.2 17.4 1.1 .7 1.2 25.7 1.2 39.1 1.1-32.3 1.2-10.9 1.1-17.5 1.2-29.8 1.2-13.3 1.1-4.1 1.2 20.1 1.2 4.2 1.1-.5 1.2 1.5 1.2-20.2 1.1 23 1.2 10.1 1.2 14.4 1.1-2.5 1.2 8.2 1.2-8.8 1.1-22.2 1.2-25.5 1.2-11.8 1.1 24.3 1.2 3.2 1.2 4.3 1.1-5.8 1.2-9.6 1.1 3.2 1.2-2.9 1.2 20.6 1.1 19.1 1.2 27 1.2-26.7 1.1-15 1.2-7.2 1.2-28 1.1-1.9 1.2 19.2 1.2 1.8 1.1 13.6 1.2 5.4 1.2-5.8 1.1-14.1 1.2 8.7 1.2 14 1.1 19 1.2 6.3 1.2-27.2 1.1-15.2 1.2-.2 1.2-26 1.1 1.8 1.2 25.9 1.1 19.1 1.2-10 1.2-13.3 1.1-10.5 1.2 22.4 1.2 11.2 1.1 22 1.2 11.7 1.2-3.3 1.1-28.2 1.2-22.7 1.2-13.5 1.1-19.1 1.2 10.6 1.2 25.2 1.1-8.3 1.2 11.2 1.2-13 1.1 1.4 1.2-1.2 1.2 36.8 1.1 18.2 1.2-10.9 1.2-10.5 1.1-26.4 1.2-2.1 1.1-21.4 1.2-1.9 1.2 10.5 1.1 29.7 1.2-1.4 1.2 4.7 1.1-7.4 1.2-8.8 0-61.9-1.2 0-1.1 0-1.2 0-1.2 0-1.1 0-1.2 0-1.2 0-1.1 0-1.2 0-1.1 0-1.2 0-1.2 0-1.1 0-1.2 0-1.2 0-1.1 0-1.2 0-1.2 0-1.1 0-1.2 0-1.2 0-1.1 0-1.2 0-1.2 0-1.1 0-1.2 0-1.2 0-1.1 0-1.2 0-1.2 0-1.1 0-1.2 0-1.2 0-1.1 0-1.2 0-1.1 0-1.2 0-1.2 0-1.1 0-1.2 0-1.2 0-1.1 0-1.2 0-1.2 0-1.1 0-1.2 0-1.2 0-1.1 0-1.2 0-1.2 0-1.1 0-1.2 0-1.2 0-1.1 0-1.2 0-1.2 0-1.1 0-1.2 0-1.2 0-1.1 0-1.2 0-1.1 0-1.2 0-1.2 0-1.1 0-1.2 0-1.2 0-1.1 0-1.2 0-1.2 0-1.1 0-1.2 0-1.2 0-1.1 0-1.2 0-1.2 0-1.1 0-1.2 0-1.2 0-1.1 0-1.2 0-1.2 0-1.1 0-1.2 0-1.1 0-1.2 0-1.2 0-1.1 0-1.2 0-1.2 0-1.1 0-1.2 0-1.2 0-1.1 0-1.2 0-1.2 0-1.1 0-1.2 0-1.2 0-1.1 0-1.2 0-1.2 0-1.1 0-1.2 0-1.2 0-1.1 0-1.2 0-1.2 0-1.1 0-1.2 0-1.1 0-1.2 0-1.2 0-1.1 0-1.2 0-1.2 0-1.1 0-1.2 0-1.2 0-1.1 0-1.2 0-1.2 0-1.1 0-1.2 0-1.2 0-1.1 0-1.2 0-1.2 0-1.1 0-1.2 0-1.2 0-1.1 0-1.2 0-1.2 0-1.1 0-1.2 0-1.1 0-1.2 0-1.2 0-1.1 0-1.2 0-1.2 0-1.1 0-1.2 0-1.2 0-1.1 0-1.2 0-1.2 0-1.1 0-1.2 0-1.2 0-1.1 0-1.2 0-1.2 0-1.1 0-1.2 0-1.2 0-1.1 0-1.2 0-1.2 0-1.1 0-1.2 0-1.1 0-1.2 0-1.2 0-1.1 0-1.2 0-1.2 0-1.1 0-1.2 0-1.2 0-1.1 0-1.2 0-1.2 0-1.1 0-1.2 0-1.2 0-1.1 0-1.2 0-1.2 0-1.1 0-1.2 0-1.2 0-1.1 0-1.2 0-1.1 0-1.2 0-1.2 0-1.1 0-1.2 0-1.2 0-1.1 0-1.2 0-1.2 0-1.1 0-1.2 0-1.2 0-1.1 0-1.2 0-1.2 0-1.1 0-1.2 0-1.2 0-1.1 0-1.2 0-1.2 0-1.1 0-1.2 0-1.2 0-1.1 0-1.2 0-1.1 0-1.2 0-1.2 0-1.1 0-1.2 0-1.2 0-1.1 0-1.2 0-1.2 0-1.1 0-1.2 0-1.2 0-1.1 0-1.2 0-1.2 0-1.1 0-1.2 0-1.2 0-1.1 0-1.2 0-1.2 0-1.1 0-1.2 0-1.2 0-1.1 0-1.2 0-1.1 0-1.2 0-1.2 0-1.1 0-1.2 0-1.2 0-1.1 0-1.2 0-1.2 0-1.1 0-1.2 0-1.2 0-1.1 0-1.2 0-1.2 0-1.1 0-1.2 0-1.2 0-1.1 0-1.2 0-1.2 0-1.1 0-1.2 0-1.1 0-1.2 0-1.2 0-1.1 0-1.2 0-1.2 0-1.1 0-1.2 0-1.2 0-1.1 0-1.2 0-1.2 0-1.1 0-1.2 0-1.2 0-1.1 0-1.2 0-1.2 0-1.1 0-1.2 0-1.2 0-1.1 0-1.2 0-1.2 0-1.1 0-1.2 0-1.1 0-1.2 0-1.2 0-1.1 0-1.2 0-1.2 0-1.1 0-1.2 0-1.2 0-1.1 0-1.2 0-1.2 0-1.1 0-1.2 0-1.2 0-1.1 0-1.2 0-1.2 0-1.1 0-1.2 0-1.2 0-1.1 0-1.2 0-1.2 0-1.1 0-1.2 0-1.1 0-1.2 0-1.2 0-1.1 0-1.2 0-1.2 0-1.1 0-1.2 0-1.2 0-1.1 0-1.2 0-1.2 0-1.1 0-1.2 0-1.2 0-1.1 0-1.2 0-1.2 0-1.1 0-1.2 0-1.2 0-1.1 0-1.2 0-1.2 0-1.1 0-1.2 0-1.1 0-1.2 0-1.2 0-1.1 0-1.2 0-1.2 0-1.1 0-1.2 0-1.2 0-1.1 0-1.2 0-1.2 0-1.1 0-1.2 0-1.2 0-1.1 0-1.2 0-1.2 0-1.1 0-1.2 0-1.2 0-1.1 0-1.2 0-1.1 0-1.2 0-1.2 0-1.1 0-1.2 0-1.2 0-1.1 0-1.2 0-1.2 0-1.1 0-1.2 0-1.2 0-1.1 0-1.2 0-1.2 0-1.1 0-1.2 0-1.2 0-1.1 0-1.2 0-1.2 0-1.1 0-1.2 0-1.2 0-1.1 0-1.2 0-1.1 0-1.2 0-1.2 0-1.1 0-1.2 0-1.2 0-1.1 0-1.2 0-1.2 0-1.1 0-1.2 0-1.2 0-1.1 0-1.2 0-1.2 0-1.1 0-1.2 0-1.2 0-1.1 0-1.2 0-1.2 0-1.1 0-1.2 0-1.2 0-1.1 0-1.2 0-1.1 0-1.2 0-1.2 0-1.1 0-1.2 0-1.2 0-1.1 0-1.2 0-1.2 0-1.1 0-1.2 0Z" fill="#EF843C" fill-opacity="0.1" clip-path="url(#c8)"/><path d="M664 644.3l1.2 0 1.1 0 1.2 0 1.2 0 1.1 0 1.2 0 1.2 0 1.1 0 1.2 0 1.2 0 1.1 0 1.2 0 1.1 0 1.2 0 1.2 18.4 1.1 14 1.2 8.9 1.2-13 1.1 19.6 1.2 13.9 1.2 26.2 1.1-20.4 1.2-7 1.2 7.2 1.1 7.5 1.2 10 1.2 29 1.1-7.7 1.2 1 1.2-36.3 1.1 2.2 1.2-32.9 1.2-12.1 1.1 30.2 1.2 18.6 1.2-21.8 1.1 9.2 1.2-4.7 1.1 8.5 1.2 7.2 1.2 16.6 1.1-1.5 1.2 11.2 1.2-4 1.1-18.5 1.2-19.3 1.2-21.5 1.1 6.7 1.2 14.9 1.2 24 1.1-3.9 1.2-5.8 1.2-12.9 1.1 15.1 1.2 16.2 1.2 31.5 1.1-4.6 1.2-7.9 1.2-2.4 1.1-40.7 1.2-20.8 1.2-12.6 1.1 11 1.2 7 1.1 9.5 1.2 1.9 1.2-.1 1.1-4.5 1.2 15.2 1.2 26.6 1.1 32.4 1.2 2.2 1.2-14.4 1.1-18.3 1.2-17.1 1.2-29.5 1.1-20.7 1.2 5.6 1.2 29.1 1.1 11.6 1.2-9.6 1.2-15.9 1.1 17.8 1.2 1.5 1.2 27.3 1.1 25.2 1.2 2.5 1.1-49.4 1.2 1 1.2-22.1 1.1-13 1.2-9 1.2 12.7 1.1 11.4 1.2 12.5 1.2-30.7 1.1 8.5 1.2 11.8 1.2-.2 1.1 35.9 1.2 4.9 1.2-18.6 1.1 4.7 1.2-13.6 1.2-33.8 1.1-13.3 1.2 14.5 1.2 15.5 1.1 25.3 1.2-13.8 1.2-4.8 1.1-4.7 1.2 17.1 1.1-5.7 1.2 12.7 1.2 16.2 1.1 6.5 1.2-19.8 1.2-18.3 1.1-20.9 1.2-22.7 1.2 25.8 1.1 19.3 1.2 22.3 1.2-30.3 1.1 3.5 1.2 8.7 1.2 22.6 1.1-3.4 1.2 40.3 1.2 5.5 1.1-20.1 1.2-51.7 1.2-25.1 1.1-18.9 1.2-15.2 1.2-8.2 1.1-.9 1.2-.4 1.1 1.1 1.2-1.3 1.2 .9 1.1-1 1.2 1.8 1.2 8.5 1.1 9.9 1.2-11.8 1.2-5.2 1.1-1.4 1.2 .6 1.2-1.5 1.1-1.3 1.2 1 1.2-.5 1.1 2.6 1.2 .9 1.2 6.8 1.1 7.8 1.2-13.5 1.2-2.1 1.1-2.5 1.2 .7 1.2 1.4 1.1 1.7 1.2-1.8 1.1-2.8 1.2 1.7 1.2 2.7 1.1 3.6 1.2 .7 1.2 8.1 1.1 4.2 1.2-10.4 1.2-5.7 1.1-1.6 1.2-2.8 1.2 .3 1.1 .7 1.2-1.4 1.2 5 1.1-2.9 1.2 1.2 1.2 8.7 1.1 3.2 1.2-8 1.2-5 1.1-1.2 1.2 3.9 1.1-5.1 1.2 3.9 1.2-1.3 1.1 3.5 1.2 10.7 1.2-.8 1.1-11.7 1.2-2.2 1.2-1.7 1.1 .6 1.2 2 1.2-1.1 1.1-1.8 1.2 4.4 1.2-.7 1.1 1.1 1.2 .8 1.2 4.1 1.1 16.6 1.2-13.1 1.2-10.9 1.1-.5 1.2 .8 1.2-2 1.1-.4 1.2 1.9 1.1 1.9 1.2 9.7 1.2 14.1 1.1-13.6 1.2-11.4 1.2 .7 1.1-.8 1.2-1 1.2 1.5 1.1-3 1.2 3.3 1.2 .7 1.1 9.2 1.2 3.7 1.2-11.4 1.1-.8 1.2-2.4 1.2-2.3 1.1 .9 1.2-.1 1.2-.5 1.1-.3 1.2-.4 1.2 3 1.1 3.2 1.2 8.4 1.1 8.5 1.2-13.8 1.2-5.3 1.1 1.8 1.2-4.8 1.2 .7 1.1-.5 1.2-.9 1.2 1 1.1 1.4 1.2 6.5 1.2 3.2 1.1-.8 1.2-8.5 1.2-1.4 1.1-.9 1.2-1.1 1.2 2.5 1.1-1.1 1.2-1.2 1.2 2.2 1.1-.5 1.2 5.1 1.1 6.2 1.2 13.2 1.2-6.1 1.1-12 1.2-6.1 1.2 2.6 1.1-2.5 1.2 1.1 1.2-.4 1.1 6.2 1.2 15.9 1.2-12 1.1-9.4 1.2-.3 1.2-2.4 1.1-1 1.2 2.1 1.2-1.3 1.1 3.9 1.2-2.4 1.2 .5 1.1-1.4 1.2-.4 1.2 2.2 1.1 7.7 1.2 15.9 1.1-11.3 1.2-9.9 1.2-1.6 1.1-1 1.2 3 1.2-2.3 1.1-1.9 1.2 .4 1.2-.7 1.1 3.3 1.2 10.6 1.2 12.6 1.1-16.1 1.2-9.3 1.2 .8 1.1 2.4 1.2-2.3 1.2-2.6 1.1 .7 1.2 1.6 1.2 3.9 1.1-3.5 1.2 6.1 1.2 14.5 1.1-8.7 1.2-13 1.1 .2 1.2-1.1 1.2-1.9 1.1 11.6 1.2 15.9 1.2 30.2 1.1 41.7 1.2-4.9 1.2-12.2 1.1-25.1 1.2-16.9 1.2-12.2 1.1 19.7 1.2 22.4 1.2 17.1 1.1-18.1 1.2 9.5 1.2-18 1.1 30.5 1.2 5.3 1.2 28.2 1.1 29.1 1.2-23.8 1.2-42.1 1.1-29.9 1.2-8 1.1-17.8 1.2 9.6 1.2 18.2 1.1-5.2 1.2-1.5 1.2-6.3 1.1-6.7 1.2 34.7 1.2 11.9 1.1 3.1 1.2-2 1.2 2 1.1-21.5 1.2-1.6 1.2-25.9 1.1-11.5 1.2 24.7 1.2 24.8 1.1 5.7 1.2-14.6 1.2-4.3 1.1 19.7 1.2 17.2 1.1-16.6 1.2 44.6 1.2 9.6 1.1-24.8 1.2-42 1.2-14.1 1.1-27.2 1.2 20.9 1.2 23.8 1.1 11.4 1.2-11.9 1.2-15.7 1.1 7 1.2 19.5 1.2 18.6 1.1 21.4 1.2-6.7 1.2 1.7 1.1-22.5 1.2-25.5 1.2-19.4 1.1-26.8 1.2 17.6 1.2 17.3 1.1 3.9 1.2 2.2 1.1-9 1.2-4 1.2 14.5 1.1 15.5 1.2 8.4 1.2 45.3 1.1-26.6 1.2-7.3 1.2-38.4 1.1-22.1 1.2-8.9 1.2 18.7 1.1 21 1.2 .1 1.2 5.7 1.1-19.7 1.2 3.8 1.2 1.7 1.1 52.6 1.2-7.7 1.2 27.2 1.1-38.4 1.2-.8 1.2-40.6 1.1-29.4 1.2 3 1.1 21.4 1.2 22.9 1.2-17.9 1.1-.1 1.2 4.7 1.2 11.3 1.1 8 1.2-6 0-78.5-1.2 0-1.1 0-1.2 0-1.2 0-1.1 0-1.2 0-1.2 0-1.1 0-1.2 0-1.1 0-1.2 0-1.2 0-1.1 0-1.2 0-1.2 0-1.1 0-1.2 0-1.2 0-1.1 0-1.2 0-1.2 0-1.1 0-1.2 0-1.2 0-1.1 0-1.2 0-1.2 0-1.1 0-1.2 0-1.2 0-1.1 0-1.2 0-1.2 0-1.1 0-1.2 0-1.1 0-1.2 0-1.2 0-1.1 0-1.2 0-1.2 0-1.1 0-1.2 0-1.2 0-1.1 0-1.2 0-1.2 0-1.1 0-1.2 0-1.2 0-1.1 0-1.2 0-1.2 0-1.1 0-1.2 0-1.2 0-1.1 0-1.2 0-1.2 0-1.1 0-1.2 0-1.1 0-1.2 0-1.2 0-1.1 0-1.2 0-1.2 0-1.1 0-1.2 0-1.2 0-1.1 0-1.2 0-1.2 0-1.1 0-1.2 0-1.2 0-1.1 0-1.2 0-1.2 0-1.1 0-1.2 0-1.2 0-1.1 0-1.2 0-1.1 0-1.2 0-1.2 0-1.1 0-1.2 0-1.2 0-1.1 0-1.2 0-1.2 0-1.1 0-1.2 0-1.2 0-1.1 0-1.2 0-1.2 0-1.1 0-1.2 0-1.2 0-1.1 0-1.2 0-1.2 0-1.1 0-1.2 0-1.2 0-1.1 0-1.2 0-1.1 0-1.2 0-1.2 0-1.1 0-1.2 0-1.2 0-1.1 0-1.2 0-1.2 0-1.1 0-1.2 0-1.2 0-1.1 0-1.2 0-1.2 0-1.1 0-1.2 0-1.2 0-1.1 0-1.2 0-1.2 0-1.1 0-1.2 0-1.2 0-1.1 0-1.2 0-1.1 0-1.2 0-1.2 0-1.1 0-1.2 0-1.2 0-1.1 0-1.2 0-1.2 0-1.1 0-1.2 0-1.2 0-1.1 0-1.2 0-1.2 0-1.1 0-1.2 0-1.2 0-1.1 0-1.2 0-1.2 0-1.1 0-1.2 0-1.2 0-1.1 0-1.2 0-1.1 0-1.2 0-1.2 0-1.1 0-1.2 0-1.2 0-1.1 0-1.2 0-1.2 0-1.1 0-1.2 0-1.2 0-1.1 0-1.2 0-1.2 0-1.1 0-1.2 0-1.2 0-1.1 0-1.2 0-1.2 0-1.1 0-1.2 0-1.1 0-1.2 0-1.2 0-1.1 0-1.2 0-1.2 0-1.1 0-1.2 0-1.2 0-1.1 0-1.2 0-1.2 0-1.1 0-1.2 0-1.2 0-1.1 0-1.2 0-1.2 0-1.1 0-1.2 0-1.2 0-1.1 0-1.2 0-1.2 0-1.1 0-1.2 0-1.1 0-1.2 0-1.2 0-1.1 0-1.2 0-1.2 0-1.1 0-1.2 0-1.2 0-1.1 0-1.2 0-1.2 0-1.1 0-1.2 0-1.2 0-1.1 0-1.2 0-1.2 0-1.1 0-1.2 0-1.2 0-1.1 0-1.2 0-1.2 0-1.1 0-1.2 0-1.1 0-1.2 0-1.2 0-1.1 0-1.2 0-1.2 0-1.1 0-1.2 0-1.2 0-1.1 0-1.2 0-1.2 0-1.1 0-1.2 0-1.2 0-1.1 0-1.2 0-1.2 0-1.1 0-1.2 0-1.2 0-1.1 0-1.2 0-1.1 0-1.2 0-1.2 0-1.1 0-1.2 0-1.2 0-1.1 0-1.2 0-1.2 0-1.1 0-1.2 0-1.2 0-1.1 0-1.2 0-1.2 0-1.1 0-1.2 0-1.2 0-1.1 0-1.2 0-1.2 0-1.1 0-1.2 0-1.2 0-1.1 0-1.2 0-1.1 0-1.2 0-1.2 0-1.1 0-1.2 0-1.2 0-1.1 0-1.2 0-1.2 0-1.1 0-1.2 0-1.2 0-1.1 0-1.2 0-1.2 0-1.1 0-1.2 0-1.2 0-1.1 0-1.2 0-1.2 0-1.1 0-1.2 0-1.2 0-1.1 0-1.2 0-1.1 0-1.2 0-1.2 0-1.1 0-1.2 0-1.2 0-1.1 0-1.2 0-1.2 0-1.1 0-1.2 0-1.2 0-1.1 0-1.2 0-1.2 0-1.1 0-1.2 0-1.2 0-1.1 0-1.2 0-1.2 0-1.1 0-1.2 0-1.2 0-1.1 0-1.2 0-1.1 0-1.2 0-1.2 0-1.1 0-1.2 0-1.2 0-1.1 0-1.2 0-1.2 0-1.1 0-1.2 0-1.2 0-1.1 0-1.2 0-1.2 0-1.1 0-1.2 0-1.2 0-1.1 0-1.2 0-1.2 0-1.1 0-1.2 0-1.1 0-1.2 0-1.2 0-1.1 0-1.2 0-1.2 0-1.1 0-1.2 0-1.2 0-1.1 0-1.2 0-1.2 0-1.1 0-1.2 0-1.2 0-1.1 0-1.2 0-1.2 0-1.1 0-1.2 0-1.2 0-1.1 0-1.2 0-1.2 0-1.1 0-1.2 0-1.1 0-1.2 0-1.2 0-1.1 0-1.2 0-1.2 0-1.1 0-1.2 0-1.2 0-1.1 0-1.2 0-1.2 0-1.1 0-1.2 0-1.2 0-1.1 0-1.2 0-1.2 0-1.1 0-1.2 0-1.2 0-1.1 0-1.2 0-1.2 0-1.1 0-1.2 0-1.1 0-1.2 0-1.2 0-1.1 0-1.2 0-1.2 0-1.1 0-1.2 0-1.2 0-1.1 0-1.2 0Z" fill="#E24D42" fill-opacity="0.1" clip-path="url(#c8)"/><path d="M664 644.3l1.2 0 1.1 0 1.2 0 1.2 0 1.1 0 1.2 0 1.2 0 1.1 0 1.2 0 1.2 0 1.1 0 1.2 0 1.1 0 1.2 0 1.2 31 1.1 17.4 1.2 9.4 1.2-8 1.1-19.8 1.2 19.7 1.2 21.9 1.1 6.5 1.2-8.1 1.2 6.8 1.1-.1 1.2 1.8 1.2-2.1 1.1 38.4 1.2 11.7 1.2-23.7 1.1-14 1.2-22.7 1.2-21.7 1.1-6.3 1.2 9.5 1.2 10.7 1.1 14.1 1.2-13 1.1-11.8 1.2 12.5 1.2 10 1.1 20.3 1.2 16.7 1.2-17.7 1.1-13.6 1.2-4.5 1.2-8.5 1.1-28.6 1.2 2.9 1.2 21.4 1.1 31.2 1.2-12.8 1.2-14 1.1-3.6 1.2 9.7 1.2 33.4 1.1 31.3 1.2-16.8 1.2 9.1 1.1-34.2 1.2-18.8 1.2-25.6 1.1-13.1 1.2 12.8 1.1 11.7 1.2 17.2 1.2-16 1.1 23.4 1.2-31.7 1.2 18.2 1.1 45.5 1.2 1.2 1.2 13.5 1.1-10.6 1.2-26.2 1.2-30.1 1.1-17.9 1.2-3.7 1.2 23.5 1.1 7.1 1.2 14 1.2-11.8 1.1-7.8 1.2-4.9 1.2 16.8 1.1 25.8 1.2 18.7 1.1 13.1 1.2-10.3 1.2-52.9 1.1-4.5 1.2-30.6 1.2-2.8 1.1 32.2 1.2 7.4 1.2-9.4 1.1-9.4 1.2-2.5 1.2 4.6 1.1 21.3 1.2 15.7 1.2 2 1.1 24.4 1.2-35.5 1.2-7.1 1.1-23.1 1.2-29.4 1.2 17.5 1.1 29.1 1.2 2 1.2-3.4 1.1-19.1 1.2 2.8 1.1 11.8 1.2 12.1 1.2 33.5 1.1-3.7 1.2-12.6 1.2-14.6 1.1-30.9 1.2-1.7 1.2-22 1.1 27.5 1.2 7.8 1.2 18.4 1.1-18.2 1.2-.4 1.2-2.1 1.1-3.1 1.2 35.5 1.2 9.7 1.1-6.7 1.2-34.1 1.2-17.3 1.1-14.8 1.2-16.8 1.2-5.6 1.1-4.7 1.2 2.1 1.1-2.8 1.2 .4 1.2 2.6 1.1-.5 1.2 8.7 1.2 15.8 1.1-6.4 1.2-12.6 1.2-6.8 1.1 1.5 1.2-1.3 1.2-1.1 1.1-.1 1.2 6.5 1.2-6.1 1.1-.5 1.2 4.2 1.2 4.9 1.1 9.9 1.2 2.9 1.2-15.9 1.1 .8 1.2-3.5 1.2-1.1 1.1-.7 1.2-.9 1.1 .3 1.2 3.3 1.2-3.4 1.1 5.4 1.2 7.1 1.2 3 1.1-8.9 1.2-2.3 1.2-2.1 1.1 1.3 1.2-3.7 1.2 1.7 1.1 2.5 1.2 4.2 1.2 15.6 1.1-2.3 1.2-15.4 1.2-5.9 1.1 3.3 1.2-4 1.2 .6 1.1 1.5 1.2-2.4 1.1-.4 1.2 4 1.2-1.6 1.1 10.3 1.2 9.5 1.2-12.9 1.1-6.3 1.2 1 1.2-4 1.1 1.9 1.2-.9 1.2-.2 1.1 2.8 1.2-1.9 1.2 7.8 1.1 6.1 1.2-4.1 1.2-5.2 1.1-5 1.2-1.3 1.2 1.4 1.1-1.5 1.2 1.9 1.2-1.2 1.1 2.4 1.2-.3 1.1 14.9 1.2 10.2 1.2-17.2 1.1-7.6 1.2 1.5 1.2-2.3 1.1-.4 1.2-.4 1.2-1.5 1.1 .7 1.2 3.1 1.2 5.2 1.1 13.3 1.2-1.9 1.2-15.1 1.1-3.6 1.2 2.9 1.2-2.8 1.1-.7 1.2 1.8 1.2-.2 1.1 2.2 1.2-1.8 1.2 8.3 1.1 4.7 1.2-8.9 1.1-3.3 1.2-1.8 1.2 3.2 1.1-3.2 1.2 .7 1.2-1 1.1-.3 1.2-.7 1.2 1.1 1.1-1.3 1.2 .1 1.2 6.3 1.1-2.5 1.2 15.8 1.2-2.9 1.1-9.4 1.2-4.4 1.2-1.8 1.1-1.9 1.2 .2 1.2 5 1.1-2.7 1.2 .4 1.1-.6 1.2 4 1.2 9.6 1.1-4.7 1.2-6.9 1.2-.1 1.1-1.4 1.2 1.2 1.2-3.7 1.1 1.6 1.2 4.7 1.2-3 1.1 9.3 1.2 14.8 1.2-14.8 1.1-4.9 1.2-5.4 1.2-1.5 1.1 .2 1.2 1.3 1.2 3.7 1.1 5.5 1.2 19.3 1.2-14.9 1.1-13.6 1.2-.1 1.1-1.6 1.2 5.4 1.2-1.5 1.1-2.8 1.2 0 1.2 2.6 1.1-3.1 1.2 4.9 1.2 10 1.1 14.4 1.2-19.4 1.2-9 1.1-.7 1.2-.7 1.2-.6 1.1 1 1.2-.8 1.2 .9 1.1 .5 1.2 13.2 1.2 12.1 1.1-13.4 1.2-7.6 1.2-4.7 1.1 1.4 1.2 1 1.1-2.2 1.2 3.6 1.2-4.3 1.1 7 1.2 23.6 1.2 25.2 1.1 48.9 1.2 7.2 1.2-33.6 1.1-8.2 1.2-8.1 1.2-17.1 1.1-19.8 1.2 13.5 1.2 13.1 1.1 21.6 1.2-18.2 1.2 5.1 1.1 10.3 1.2-15.1 1.2 30.5 1.1-7.6 1.2 10 1.2 14.8 1.1-31.2 1.2-2.4 1.1-31.3 1.2-6.6 1.2 17.8 1.1 15.4 1.2 7.6 1.2-10.3 1.1 6.3 1.2-2.1 1.2 10.3 1.1 21.8 1.2 22.8 1.2 7 1.1-14.8 1.2-19 1.2-38.1 1.1-19.7 1.2 7.8 1.2 3.6 1.1 36.1 1.2-3.8 1.2-20.2 1.1-7.2 1.2 30.7 1.1 1.6 1.2 22.8 1.2 10.2 1.1 3.3 1.2-6.8 1.2-42.9 1.1-11.5 1.2-34.1 1.2 10.8 1.1 19.9 1.2 27.9 1.2-7.6 1.1-8.6 1.2-6.7 1.2 17.6 1.1 11.2 1.2 15.6 1.2 15.9 1.1-21.9 1.2-13.4 1.2-27.7 1.1-9.4 1.2-25.3 1.2 22.5 1.1 21.9 1.2 4.6 1.1-8.3 1.2-10.7 1.2 11.4 1.1 10.1 1.2 24.4 1.2 5.3 1.1 49.5 1.2-51.4 1.2-20.2 1.1-4.4 1.2-37.7 1.2-10.6 1.1 15.7 1.2 33.1 1.2-12.6 1.1-5.2 1.2 1 1.2 .2 1.1-.4 1.2 36.6 1.2 2.2 1.1-10.7 1.2-13.3 1.2-10.3 1.1-21.9 1.2-10 1.1 9.1 1.2 17.3 1.2 19.9 1.1-19.4 1.2-2.8 1.2-3 1.1 1.1 1.2 35.7 0-95.2-1.2 0-1.1 0-1.2 0-1.2 0-1.1 0-1.2 0-1.2 0-1.1 0-1.2 0-1.1 0-1.2 0-1.2 0-1.1 0-1.2 0-1.2 0-1.1 0-1.2 0-1.2 0-1.1 0-1.2 0-1.2 0-1.1 0-1.2 0-1.2 0-1.1 0-1.2 0-1.2 0-1.1 0-1.2 0-1.2 0-1.1 0-1.2 0-1.2 0-1.1 0-1.2 0-1.1 0-1.2 0-1.2 0-1.1 0-1.2 0-1.2 0-1.1 0-1.2 0-1.2 0-1.1 0-1.2 0-1.2 0-1.1 0-1.2 0-1.2 0-1.1 0-1.2 0-1.2 0-1.1 0-1.2 0-1.2 0-1.1 0-1.2 0-1.2 0-1.1 0-1.2 0-1.1 0-1.2 0-1.2 0-1.1 0-1.2 0-1.2 0-1.1 0-1.2 0-1.2 0-1.1 0-1.2 0-1.2 0-1.1 0-1.2 0-1.2 0-1.1 0-1.2 0-1.2 0-1.1 0-1.2 0-1.2 0-1.1 0-1.2 0-1.1 0-1.2 0-1.2 0-1.1 0-1.2 0-1.2 0-1.1 0-1.2 0-1.2 0-1.1 0-1.2 0-1.2 0-1.1 0-1.2 0-1.2 0-1.1 0-1.2 0-1.2 0-1.1 0-1.2 0-1.2 0-1.1 0-1.2 0-1.2 0-1.1 0-1.2 0-1.1 0-1.2 0-1.2 0-1.1 0-1.2 0-1.2 0-1.1 0-1.2 0-1.2 0-1.1 0-1.2 0-1.2 0-1.1 0-1.2 0-1.2 0-1.1 0-1.2 0-1.2 0-1.1 0-1.2 0-1.2 0-1.1 0-1.2 0-1.2 0-1.1 0-1.2 0-1.1 0-1.2 0-1.2 0-1.1 0-1.2 0-1.2 0-1.1 0-1.2 0-1.2 0-1.1 0-1.2 0-1.2 0-1.1 0-1.2 0-1.2 0-1.1 0-1.2 0-1.2 0-1.1 0-1.2 0-1.2 0-1.1 0-1.2 0-1.2 0-1.1 0-1.2 0-1.1 0-1.2 0-1.2 0-1.1 0-1.2 0-1.2 0-1.1 0-1.2 0-1.2 0-1.1 0-1.2 0-1.2 0-1.1 0-1.2 0-1.2 0-1.1 0-1.2 0-1.2 0-1.1 0-1.2 0-1.2 0-1.1 0-1.2 0-1.1 0-1.2 0-1.2 0-1.1 0-1.2 0-1.2 0-1.1 0-1.2 0-1.2 0-1.1 0-1.2 0-1.2 0-1.1 0-1.2 0-1.2 0-1.1 0-1.2 0-1.2 0-1.1 0-1.2 0-1.2 0-1.1 0-1.2 0-1.2 0-1.1 0-1.2 0-1.1 0-1.2 0-1.2 0-1.1 0-1.2 0-1.2 0-1.1 0-1.2 0-1.2 0-1.1 0-1.2 0-1.2 0-1.1 0-1.2 0-1.2 0-1.1 0-1.2 0-1.2 0-1.1 0-1.2 0-1.2 0-1.1 0-1.2 0-1.2 0-1.1 0-1.2 0-1.1 0-1.2 0-1.2 0-1.1 0-1.2 0-1.2 0-1.1 0-1.2 0-1.2 0-1.1 0-1.2 0-1.2 0-1.1 0-1.2 0-1.2 0-1.1 0-1.2 0-1.2 0-1.1 0-1.2 0-1.2 0-1.1 0-1.2 0-1.1 0-1.2 0-1.2 0-1.1 0-1.2 0-1.2 0-1.1 0-1.2 0-1.2 0-1.1 0-1.2 0-1.2 0-1.1 0-1.2 0-1.2 0-1.1 0-1.2 0-1.2 0-1.1 0-1.2 0-1.2 0-1.1 0-1.2 0-1.2 0-1.1 0-1.2 0-1.1 0-1.2 0-1.2 0-1.1 0-1.2 0-1.2 0-1.1 0-1.2 0-1.2 0-1.1 0-1.2 0-1.2 0-1.1 0-1.2 0-1.2 0-1.1 0-1.2 0-1.2 0-1.1 0-1.2 0-1.2 0-1.1 0-1.2 0-1.2 0-1.1 0-1.2 0-1.1 0-1.2 0-1.2 0-1.1 0-1.2 0-1.2 0-1.1 0-1.2 0-1.2 0-1.1 0-1.2 0-1.2 0-1.1 0-1.2 0-1.2 0-1.1 0-1.2 0-1.2 0-1.1 0-1.2 0-1.2 0-1.1 0-1.2 0-1.2 0-1.1 0-1.2 0-1.1 0-1.2 0-1.2 0-1.1 0-1.2 0-1.2 0-1.1 0-1.2 0-1.2 0-1.1 0-1.2 0-1.2 0-1.1 0-1.2 0-1.2 0-1.1 0-1.2 0-1.2 0-1.1 0-1.2 0-1.2 0-1.1 0-1.2 0-1.1 0-1.2 0-1.2 0-1.1 0-1.2 0-1.2 0-1.1 0-1.2 0-1.2 0-1.1 0-1.2 0-1.2 0-1.1 0-1.2 0-1.2 0-1.1 0-1.2 0-1.2 0-1.1 0-1.2 0-1.2 0-1.1 0-1.2 0-1.2 0-1.1 0-1.2 0-1.1 0-1.2 0-1.2 0-1.1 0-1.2 0-1.2 0-1.1 0-1.2 0-1.2 0-1.1 0-1.2 0-1.2 0-1.1 0-1.2 0-1.2 0-1.1 0-1.2 0-1.2 0-1.1 0-1.2 0-1.2 0-1.1 0-1.2 0-1.2 0-1.1 0-1.2 0-1.1 0-1.2 0-1.2 0-1.1 0-1.2 0-1.2 0-1.1 0-1.2 0-1.2 0-1.1 0-1.2 0Z" fill="#1F78C1" fill-opacity="0.1" clip-path="url(#c8)"/><path d="M664 644.3l2.3 0 2.4 0 2.3 0 2.3 0 2.4 0 2.3 0 2.3 0 2.3 0 2.4 0 2.3 0 2.3 0 2.4 0 2.3 0 2.3 0 2.4 0 2.3 0 2.3 0 2.4 0 2.3 0 2.3 0 2.3 0 2.4 0 2.3 0 2.3 0 2.4 0 2.3 0 2.3 0 2.4 0 2.3 0 2.3-.1 2.4-.2 2.3-.1 2.3-.1 2.3-.2 2.4 0 2.3 0 2.3 0 2.4 0 2.3 0 2.3 0 2.4 0 2.3 0 2.3 0 2.3 0 2.4 0 2.3 0 2.3 0 2.4 0 2.3 0 2.3 0 2.4 0 2.3 0 2.3 0 2.4 0 2.3 0 2.3 0 2.3 0 2.4 0 2.3 0 2.3 0 2.4 0 2.3 0 2.3 0 2.4 0 2.3 0 2.3 0 2.4-1 2.3-1 2.3-.4 2.3-.7 2.4 .1 2.3-2 2.3 0 2.4 .3 2.3 .6 2.3-1.3 2.4 2.1 2.3-.6 2.3 1.2 2.4-.4 2.3-.3 2.3-1.5 2.3-.4 2.4 1.9 2.3 0 2.3 .3 2.4 .1 2.3-1.3 2.3 1.8 2.4-2.9 2.3 2.5 2.3-.1 2.4 .3 2.3-1.3 2.3-.6 2.3 0 2.4 .9 2.3 .7 2.3-2 2.4 1.2 2.3-.2 2.3 0 2.4-.2 2.3 1 2.3 .5 2.4-2.6 2.3-.2 2.3 1.3 2.3-.8 2.4 2.2 2.3-2.7 2.3 2 2.4-1.5 2.3 .7 2.3 1.8 2.4-2.3 2.3 .4 2.3 .6 2.4 1.2 2.3 .4 2.3-.6 2.3-2.1 2.4-.4 2.3 .7 2.3 .7 2.4-.4 2.3-.1 2.3 1.1 2.4 .1 2.3-1 2.3-.8 2.3 1.2 2.4 .3 2.3 1.3 2.3-3.1 2.4 3.1 2.3-2.6 2.3-.4 2.4-.3 2.3 1.6 2.3 .3 2.4 1.2 2.3-1.5 2.3-.1 2.3-1.3 2.4 2.8 2.3-.6 2.3-2.1 2.4 .1 2.3 .3 2.3 .3 2.4 1.1 2.3-1.8 2.3 2.4 2.4-2.7 2.3 2.2 2.3-.6 2.3 1.1 2.4 .8 2.3 2.7 2.3 0 2.4 0 2.3 0 2.3 0 2.4 0 2.3 0 2.3 0 2.4 0 2.3 0 2.3 0 2.3 0 2.4 0 2.3 0 2.3 0 2.4 0 2.3 0 2.3 0 2.4 0 2.3 0 2.3 0 2.4 0 2.3 0 2.3 0 2.3 0 2.4 0 2.3 0 2.3 0 2.4 0 2.3 0 2.3 0 2.4 0 2.3 0 2.3 0 2.4 0 2.3 0 2.3 0 2.3 0 2.4 0 2.3 0 2.3 0 2.4 0 2.3 0 2.3 0 2.4 0 2.3 0 2.3 0 2.4 0 2.3 0 2.3 0 2.3 0 2.4 0 2.3 0 0 0-2.3 0-2.4 0-2.3 0-2.3 0-2.3 0-2.4 0-2.3 0-2.3 0-2.4 0-2.3 0-2.3 0-2.4 0-2.3 0-2.3 0-2.4 0-2.3 0-2.3 0-2.3 0-2.4 0-2.3 0-2.3 0-2.4 0-2.3 0-2.3 0-2.4 0-2.3 0-2.3 0-2.4 0-2.3 0-2.3 0-2.3 0-2.4 0-2.3 0-2.3 0-2.4 0-2.3 0-2.3 0-2.4 0-2.3 0-2.3 0-2.4 0-2.3 0-2.3 0-2.3 0-2.4 0-2.3 0-2.3 0-2.4 0-2.3 0-2.3 0-2.4 0-2.3 0-2.3 0-2.4 0-2.3 0-2.3 0-2.3 0-2.4 0-2.3 0-2.3 0-2.4 0-2.3 0-2.3 0-2.4 0-2.3 0-2.3 0-2.4 0-2.3 0-2.3 0-2.3 0-2.4 0-2.3 0-2.3 0-2.4 0-2.3 0-2.3 0-2.4 0-2.3 0-2.3 0-2.4 0-2.3 0-2.3 0-2.3 0-2.4 0-2.3 0-2.3 0-2.4 0-2.3 0-2.3 0-2.4 0-2.3 0-2.3 0-2.3 0-2.4 0-2.3 0-2.3 0-2.4 0-2.3 0-2.3 0-2.4 0-2.3 0-2.3 0-2.4 0-2.3 0-2.3 0-2.3 0-2.4 0-2.3 0-2.3 0-2.4 0-2.3 0-2.3 0-2.4 0-2.3 0-2.3 0-2.4 0-2.3 0-2.3 0-2.3 0-2.4 0-2.3 0-2.3 0-2.4 0-2.3 0-2.3 0-2.4 0-2.3 0-2.3 0-2.4 0-2.3 0-2.3 0-2.3 0-2.4 0-2.3 0-2.3 0-2.4 0-2.3 0-2.3 0-2.4 0-2.3 0-2.3 0-2.4 0-2.3 0-2.3 0-2.3 0-2.4 0-2.3 0-2.3 0-2.4 0-2.3 0-2.3 0-2.4 0-2.3 0-2.3 0-2.4 0-2.3 0-2.3 0-2.3 0-2.4 0-2.3 0-2.3 0-2.4 0-2.3 0-2.3 0-2.4 0-2.3 0-2.3 0-2.4 0-2.3 0-2.3 0-2.3 0-2.4 0-2.3 0-2.3 0-2.4 0-2.3 0-2.3 0-2.4 0-2.3 0-2.3 0-2.3 0-2.4 0-2.3 0-2.3 0-2.4 0-2.3 0-2.3 0-2.4 0-2.3 0-2.3 0-2.4 0-2.3 0-2.3 0-2.3 0-2.4 0-2.3 0-2.3 0-2.4 0-2.3 0-2.3 0-2.4 0-2.3 0-2.3 0-2.4 0-2.3 0-2.3 0-2.3 0-2.4 0-2.3 0-2.3 0-2.4 0-2.3 0Z" fill="#BA43A9" fill-opacity="0.1" clip-path="url(#c8)"/><path d="M664 644.3l2.3 0 2.4 0 2.3 0 2.3 0 2.4 0 2.3 0 2.3 0 2.3 0 2.4 0 2.3 0 2.3 0 2.4 0 2.3 0 2.3 0 2.4 0 2.3 0 2.3 0 2.4 0 2.3 0 2.3 0 2.3 0 2.4 0 2.3 0 2.3 0 2.4 0 2.3 0 2.3 0 2.4 0 2.3 0 2.3-.1 2.4-.2 2.3-.1 2.3-.1 2.3-.2 2.4 0 2.3 0 2.3 0 2.4 0 2.3 0 2.3 0 2.4 0 2.3 0 2.3 0 2.3 0 2.4 0 2.3 0 2.3 0 2.4 0 2.3 0 2.3 0 2.4 0 2.3 0 2.3 0 2.4 0 2.3 0 2.3 0 2.3 0 2.4 0 2.3 0 2.3 0 2.4 0 2.3 0 2.3 0 2.4 0 2.3 0 2.3 0 2.4-.8 2.3-2.6 2.3 .5 2.3-.8 2.4 .8 2.3-2.1 2.3 1.3 2.4-1 2.3 .9 2.3 1.3 2.4-1.3 2.3 0 2.3 1 2.4-.2 2.3-1.3 2.3-1 2.3-.1 2.4 3 2.3-.2 2.3 .1 2.4-.2 2.3-.7 2.3-2 2.4 1.9 2.3-.8 2.3 2 2.4-.7 2.3 .4 2.3-2.2 2.3 1.6 2.4 .2 2.3-2.4 2.3 1.1 2.4 1.6 2.3-.3 2.3-.7 2.4 .2 2.3-1.8 2.3 .9 2.4 1 2.3-.2 2.3-.9 2.3 2 2.4-.3 2.3-.9 2.3-.1 2.4-.3 2.3-.9 2.3 2 2.4-.7 2.3 1.2 2.3-2.1 2.4 1.8 2.3-.8 2.3-1.7 2.3 .1 2.4 1.9 2.3-.3 2.3-.2 2.4-.4 2.3 1.5 2.3-.7 2.4-1.1 2.3 .3 2.3-.6 2.3 1.1 2.4 .9 2.3 0 2.3 .7 2.4-.5 2.3-.5 2.3 .2 2.4-1.9 2.3 .8 2.3 1.6 2.4-2.6 2.3 .5 2.3 .6 2.3-1.6 2.4 2.9 2.3-.6 2.3-.6 2.4 1.1 2.3-1.8 2.3 1.7 2.4-1.5 2.3-1.2 2.3 1.4 2.4 1.4 2.3 0 2.3-1 2.3 .9 2.4 .5 2.3 3 2.3 0 2.4 0 2.3 0 2.3 0 2.4 0 2.3 0 2.3 0 2.4 0 2.3 0 2.3 0 2.3 0 2.4 0 2.3 0 2.3 0 2.4 0 2.3 0 2.3 0 2.4 0 2.3 0 2.3 0 2.4 0 2.3 0 2.3 0 2.3 0 2.4 0 2.3 0 2.3 0 2.4 0 2.3 0 2.3 0 2.4 0 2.3 0 2.3 0 2.4 0 2.3 0 2.3 0 2.3 0 2.4 0 2.3 0 2.3 0 2.4 0 2.3 0 2.3 0 2.4 0 2.3 0 2.3 0 2.4 0 2.3 0 2.3 0 2.3 0 2.4 0 2.3 0 0 0-2.3 0-2.4 0-2.3 0-2.3 0-2.3 0-2.4 0-2.3 0-2.3 0-2.4 0-2.3 0-2.3 0-2.4 0-2.3 0-2.3 0-2.4 0-2.3 0-2.3 0-2.3 0-2.4 0-2.3 0-2.3 0-2.4 0-2.3 0-2.3 0-2.4 0-2.3 0-2.3 0-2.4 0-2.3 0-2.3 0-2.3 0-2.4 0-2.3 0-2.3 0-2.4 0-2.3 0-2.3 0-2.4 0-2.3 0-2.3 0-2.4 0-2.3 0-2.3 0-2.3 0-2.4 0-2.3 0-2.3 0-2.4 0-2.3 0-2.3 0-2.4 0-2.3 0-2.3 0-2.4 0-2.3 0-2.3 0-2.3 0-2.4 0-2.3 0-2.3 0-2.4 0-2.3 0-2.3 0-2.4 0-2.3 0-2.3 0-2.4 0-2.3 0-2.3 0-2.3 0-2.4 0-2.3 0-2.3 0-2.4 0-2.3 0-2.3 0-2.4 0-2.3 0-2.3 0-2.4 0-2.3 0-2.3 0-2.3 0-2.4 0-2.3 0-2.3 0-2.4 0-2.3 0-2.3 0-2.4 0-2.3 0-2.3 0-2.3 0-2.4 0-2.3 0-2.3 0-2.4 0-2.3 0-2.3 0-2.4 0-2.3 0-2.3 0-2.4 0-2.3 0-2.3 0-2.3 0-2.4 0-2.3 0-2.3 0-2.4 0-2.3 0-2.3 0-2.4 0-2.3 0-2.3 0-2.4 0-2.3 0-2.3 0-2.3 0-2.4 0-2.3 0-2.3 0-2.4 0-2.3 0-2.3 0-2.4 0-2.3 0-2.3 0-2.4 0-2.3 0-2.3 0-2.3 0-2.4 0-2.3 0-2.3 0-2.4 0-2.3 0-2.3 0-2.4 0-2.3 0-2.3 0-2.4 0-2.3 0-2.3 0-2.3 0-2.4 0-2.3 0-2.3 0-2.4 0-2.3 0-2.3 0-2.4 0-2.3 0-2.3 0-2.4 0-2.3 0-2.3 0-2.3 0-2.4 0-2.3 0-2.3 0-2.4 0-2.3 0-2.3 0-2.4 0-2.3 0-2.3 0-2.4 0-2.3 0-2.3 0-2.3 0-2.4 0-2.3 0-2.3 0-2.4 0-2.3 0-2.3 0-2.4 0-2.3 0-2.3 0-2.3 0-2.4 0-2.3 0-2.3 0-2.4 0-2.3 0-2.3 0-2.4 0-2.3 0-2.3 0-2.4 0-2.3 0-2.3 0-2.3 0-2.4 0-2.3 0-2.3 0-2.4 0-2.3 0-2.3 0-2.4 0-2.3 0-2.3 0-2.4 0-2.3 0-2.3 0-2.3 0-2.4 0-2.3 0-2.3 0-2.4 0-2.3 0Z" fill="#705DA0" fill-opacity="0.1" clip-path="url(#c8)"/><path d="M664 644.3l2.3 0 2.4 0 2.3 0 2.3 0 2.4 0 2.3 0 2.3 0 2.3 0 2.4 0 2.3 0 2.3 0 2.4 0 2.3 0 2.3 0 2.4 0 2.3 0 2.3 0 2.4 0 2.3 0 2.3 0 2.3 0 2.4 0 2.3 0 2.3 0 2.4 0 2.3 0 2.3 0 2.4 0 2.3 0 2.3-.1 2.4-.2 2.3-.1 2.3-.1 2.3-.2 2.4 0 2.3 0 2.3 0 2.4 0 2.3 0 2.3 0 2.4 0 2.3 0 2.3 0 2.3 0 2.4 0 2.3 0 2.3 0 2.4 0 2.3 0 2.3 0 2.4 0 2.3 0 2.3 0 2.4 0 2.3 0 2.3 0 2.3 0 2.4 0 2.3 0 2.3 0 2.4 0 2.3 0 2.3 0 2.4 0 2.3 0 2.3 0 2.4-1 2.3-2.4 2.3 .2 2.3-1.8 2.4 .7 2.3 .5 2.3-1 2.4 1.6 2.3-1.5 2.3-.3 2.4 0 2.3 2.5 2.3 .3 2.4-3 2.3 2.6 2.3-17.3 2.3-.5 2.4 .4 2.3 0 2.3 16.3 2.4 .8 2.3-15.8 2.3-1.9 2.4 .3 2.3 1 2.3 17.7 2.4-.4 2.3-16.9 2.3-1.6 2.3 .5 2.4-.5 2.3 18.9 2.3-2.1 2.4-15.5 2.3-.7 2.3-.9 2.4 18.5 2.3 .7 2.3-1.2 2.4-17.1 2.3 .9 2.3 14.2 2.3 1.1 2.4-.8 2.3 .1 2.3 1.1 2.4-.7 2.3 1.2 2.3-1.1 2.4 1.5 2.3-1.6 2.3 .1 2.4-.9 2.3 .6 2.3 2.1 2.3-.9 2.4-2.3 2.3 1.6 2.3-.7 2.4 2.1 2.3-1.2 2.3-1.2 2.4 2.3 2.3-2.4 2.3 .3 2.3 1.7 2.4-2.6 2.3 0 2.3 .5 2.4 .9 2.3 .5 2.3-.4 2.4 1.2 2.3-1.1 2.3-1 2.4 1.4 2.3-1.4 2.3 .3 2.3 1.3 2.4 .9 2.3-1.4 2.3 1.6 2.4-1.9 2.3 1 2.3-2.5 2.4 1 2.3 .5 2.3-.8 2.4 2.1 2.3-1.4 2.3 1.8 2.3 .1 2.4-.9 2.3 3.8 2.3 0 2.4 0 2.3 0 2.3 0 2.4 0 2.3 0 2.3 0 2.4 0 2.3 0 2.3 0 2.3 0 2.4 0 2.3 0 2.3 0 2.4 0 2.3 0 2.3 0 2.4 0 2.3 0 2.3 0 2.4 0 2.3 0 2.3 0 2.3 0 2.4 0 2.3 0 2.3 0 2.4 0 2.3 0 2.3 0 2.4 0 2.3 0 2.3 0 2.4 0 2.3 0 2.3 0 2.3 0 2.4 0 2.3 0 2.3 0 2.4 0 2.3 0 2.3 0 2.4 0 2.3 0 2.3 0 2.4 0 2.3 0 2.3 0 2.3 0 2.4 0 2.3 0 0 0-2.3 0-2.4 0-2.3 0-2.3 0-2.3 0-2.4 0-2.3 0-2.3 0-2.4 0-2.3 0-2.3 0-2.4 0-2.3 0-2.3 0-2.4 0-2.3 0-2.3 0-2.3 0-2.4 0-2.3 0-2.3 0-2.4 0-2.3 0-2.3 0-2.4 0-2.3 0-2.3 0-2.4 0-2.3 0-2.3 0-2.3 0-2.4 0-2.3 0-2.3 0-2.4 0-2.3 0-2.3 0-2.4 0-2.3 0-2.3 0-2.4 0-2.3 0-2.3 0-2.3 0-2.4 0-2.3 0-2.3 0-2.4 0-2.3 0-2.3 0-2.4 0-2.3 0-2.3 0-2.4 0-2.3 0-2.3 0-2.3 0-2.4 0-2.3 0-2.3 0-2.4 0-2.3 0-2.3 0-2.4 0-2.3 0-2.3 0-2.4 0-2.3 0-2.3 0-2.3 0-2.4 0-2.3 0-2.3 0-2.4 0-2.3 0-2.3 0-2.4 0-2.3 0-2.3 0-2.4 0-2.3 0-2.3 0-2.3 0-2.4 0-2.3 0-2.3 0-2.4 0-2.3 0-2.3 0-2.4 0-2.3 0-2.3 0-2.3 0-2.4 0-2.3 0-2.3 0-2.4 0-2.3 0-2.3 0-2.4 0-2.3 0-2.3 0-2.4 0-2.3 0-2.3 0-2.3 0-2.4 0-2.3 0-2.3 0-2.4 0-2.3 0-2.3 0-2.4 0-2.3 0-2.3 0-2.4 0-2.3 0-2.3 0-2.3 0-2.4 0-2.3 0-2.3 0-2.4 0-2.3 0-2.3 0-2.4 0-2.3 0-2.3 0-2.4 0-2.3 0-2.3 0-2.3 0-2.4 0-2.3 0-2.3 0-2.4 0-2.3 0-2.3 0-2.4 0-2.3 0-2.3 0-2.4 0-2.3 0-2.3 0-2.3 0-2.4 0-2.3 0-2.3 0-2.4 0-2.3 0-2.3 0-2.4 0-2.3 0-2.3 0-2.4 0-2.3 0-2.3 0-2.3 0-2.4 0-2.3 0-2.3 0-2.4 0-2.3 0-2.3 0-2.4 0-2.3 0-2.3 0-2.4 0-2.3 0-2.3 0-2.3 0-2.4 0-2.3 0-2.3 0-2.4 0-2.3 0-2.3 0-2.4 0-2.3 0-2.3 0-2.3 0-2.4 0-2.3 0-2.3 0-2.4 0-2.3 0-2.3 0-2.4 0-2.3 0-2.3 0-2.4 0-2.3 0-2.3 0-2.3 0-2.4 0-2.3 0-2.3 0-2.4 0-2.3 0-2.3 0-2.4 0-2.3 0-2.3 0-2.4 0-2.3 0-2.3 0-2.3 0-2.4 0-2.3 0-2.3 0-2.4 0-2.3 0Z" fill="#508642" fill-opacity="0.1" clip-path="url(#c8)"/><path d="M664 644.3l2.3 0 2.4 0 2.3 0 2.3 0 2.4 0 2.3 0 2.3 0 2.3 0 2.4 0 2.3 0 2.3 0 2.4 0 2.3 0 2.3 0 2.4 0 2.3 0 2.3 0 2.4 0 2.3 0 2.3 0 2.3 0 2.4 0 2.3 0 2.3 0 2.4 0 2.3 0 2.3 0 2.4 0 2.3 0 2.3-.1 2.4-.2 2.3-.1 2.3-.1 2.3-.2 2.4 0 2.3 0 2.3 0 2.4 0 2.3 0 2.3 0 2.4 0 2.3 0 2.3 0 2.3 0 2.4 0 2.3 0 2.3 0 2.4 0 2.3 0 2.3 0 2.4 0 2.3 0 2.3 0 2.4 0 2.3 0 2.3 0 2.3 0 2.4 0 2.3 0 2.3 0 2.4 0 2.3 0 2.3 0 2.4 0 2.3 0 2.3 0 2.4-1.1 2.3-1.7 2.3-2.3 2.3 1.5 2.4-.9 2.3 1.6 2.3-2.4 2.4 1.8 2.3 .3 2.3 .4 2.4 .4 2.3-3 2.3 1.9 2.4-.4 2.3-1 2.3 .7 2.3 1.2 2.4 .6 2.3-.4 2.3-1.9 2.4 .5 2.3 1.9 2.3-1.2 2.4-1.8 2.3 1.6 2.3-1.7 2.4 .2 2.3-.1 2.3 1 2.3-1 2.4-.1 2.3 .8 2.3 1.4 2.4 .3 2.3-.6 2.3-1.9 2.4 2.7 2.3-2.5 2.3 .4 2.4 0 2.3 1.6 2.3-.7 2.3-.7 2.4 2.2 2.3-1.9 2.3 1 2.4 .5 2.3-1.8 2.3 .8 2.4 .2 2.3 0 2.3-1.9 2.4 1.8 2.3 1.6 2.3-1.4 2.3 0 2.4-1.9 2.3 2.1 2.3-.1 2.4 .3 2.3-1.6 2.3 .7 2.4-1.5 2.3 3.2 2.3-1.1 2.3 .4 2.4-2.2 2.3 1.5 2.3 0 2.4-14.8 2.3 .3 2.3 15.4 2.4-1.2 2.3-17.4 2.3 2.1 2.4 16.5 2.3-16.1 2.3-1.2 2.3 16.1 2.4-.7 2.3-13.6 2.3-1.7 2.4 15.9 2.3-14.1 2.3-3.1 2.4 18.5 2.3-1.7 2.3-16.7 2.4 1 2.3 17.1 2.3 .2 2.3-17.9 2.4 4.6 2.3 16.9 2.3 0 2.4 0 2.3 0 2.3 0 2.4 0 2.3 0 2.3 0 2.4 0 2.3 0 2.3 0 2.3 0 2.4 0 2.3 0 2.3 0 2.4 0 2.3 0 2.3 0 2.4 0 2.3 0 2.3 0 2.4 0 2.3 0 2.3 0 2.3 0 2.4 0 2.3 0 2.3 0 2.4 0 2.3 0 2.3 0 2.4 0 2.3 0 2.3 0 2.4 0 2.3 0 2.3 0 2.3 0 2.4 0 2.3 0 2.3 0 2.4 0 2.3 0 2.3 0 2.4 0 2.3 0 2.3 0 2.4 0 2.3 0 2.3 0 2.3 0 2.4 0 2.3 0 0 0-2.3 0-2.4 0-2.3 0-2.3 0-2.3 0-2.4 0-2.3 0-2.3 0-2.4 0-2.3 0-2.3 0-2.4 0-2.3 0-2.3 0-2.4 0-2.3 0-2.3 0-2.3 0-2.4 0-2.3 0-2.3 0-2.4 0-2.3 0-2.3 0-2.4 0-2.3 0-2.3 0-2.4 0-2.3 0-2.3 0-2.3 0-2.4 0-2.3 0-2.3 0-2.4 0-2.3 0-2.3 0-2.4 0-2.3 0-2.3 0-2.4 0-2.3 0-2.3 0-2.3 0-2.4 0-2.3 0-2.3 0-2.4 0-2.3 0-2.3 0-2.4 0-2.3 0-2.3 0-2.4 0-2.3 0-2.3 0-2.3 0-2.4 0-2.3 0-2.3 0-2.4 0-2.3 0-2.3 0-2.4 0-2.3 0-2.3 0-2.4 0-2.3 0-2.3 0-2.3 0-2.4 0-2.3 0-2.3 0-2.4 0-2.3 0-2.3 0-2.4 0-2.3 0-2.3 0-2.4 0-2.3 0-2.3 0-2.3 0-2.4 0-2.3 0-2.3 0-2.4 0-2.3 0-2.3 0-2.4 0-2.3 0-2.3 0-2.3 0-2.4 0-2.3 0-2.3 0-2.4 0-2.3 0-2.3 0-2.4 0-2.3 0-2.3 0-2.4 0-2.3 0-2.3 0-2.3 0-2.4 0-2.3 0-2.3 0-2.4 0-2.3 0-2.3 0-2.4 0-2.3 0-2.3 0-2.4 0-2.3 0-2.3 0-2.3 0-2.4 0-2.3 0-2.3 0-2.4 0-2.3 0-2.3 0-2.4 0-2.3 0-2.3 0-2.4 0-2.3 0-2.3 0-2.3 0-2.4 0-2.3 0-2.3 0-2.4 0-2.3 0-2.3 0-2.4 0-2.3 0-2.3 0-2.4 0-2.3 0-2.3 0-2.3 0-2.4 0-2.3 0-2.3 0-2.4 0-2.3 0-2.3 0-2.4 0-2.3 0-2.3 0-2.4 0-2.3 0-2.3 0-2.3 0-2.4 0-2.3 0-2.3 0-2.4 0-2.3 0-2.3 0-2.4 0-2.3 0-2.3 0-2.4 0-2.3 0-2.3 0-2.3 0-2.4 0-2.3 0-2.3 0-2.4 0-2.3 0-2.3 0-2.4 0-2.3 0-2.3 0-2.3 0-2.4 0-2.3 0-2.3 0-2.4 0-2.3 0-2.3 0-2.4 0-2.3 0-2.3 0-2.4 0-2.3 0-2.3 0-2.3 0-2.4 0-2.3 0-2.3 0-2.4 0-2.3 0-2.3 0-2.4 0-2.3 0-2.3 0-2.4 0-2.3 0-2.3 0-2.3 0-2.4 0-2.3 0-2.3 0-2.4 0-2.3 0Z" fill="#CCA300" fill-opacity="0.1" clip-path="url(#c8)"/><path d="M664 644.3l2.3 0 2.4 0 2.3 0 2.3 0 2.4 0 2.3 0 2.3 0 2.3 0 2.4 0 2.3 0 2.3 0 2.4 0 2.3 0 2.3 0 2.4 0 2.3 0 2.3 0 2.4 0 2.3 0 2.3 0 2.3 0 2.4 0 2.3 0 2.3 0 2.4 0 2.3 0 2.3 0 2.4 0 2.3 0 2.3-.1 2.4-.2 2.3-.1 2.3-.1 2.3-.2 2.4 0 2.3 0 2.3 0 2.4 0 2.3 0 2.3 0 2.4 0 2.3 0 2.3 0 2.3 0 2.4 0 2.3 0 2.3 0 2.4 0 2.3 0 2.3 0 2.4 0 2.3 0 2.3 0 2.4 0 2.3 0 2.3 0 2.3 0 2.4 0 2.3 0 2.3 0 2.4 0 2.3 0 2.3 0 2.4 0 2.3 0 2.3 0 2.4-.9 2.3-2.1 2.3 .3 2.3-.3 2.4-2 2.3 2.6 2.3-.6 2.4-.7 2.3 .8 2.3-1.1 2.4-1.1 2.3 .7 2.3-.6 2.4 .1 2.3 .5 2.3 1.2 2.3-.5 2.4 0 2.3-.5 2.3 .3 2.4-.5 2.3 1.6 2.3-1.5 2.4-.3 2.3 .3 2.3-.2 2.4 2.2 2.3-2.1 2.3 1.3 2.3-.5 2.4-.5 2.3 1.4 2.3-.6 2.4-.8 2.3 1.5 2.3-.7 2.4-.9 2.3 2 2.3-2.4 2.4 .3 2.3 1.8 2.3-.4 2.3-.1 2.4-2.5 2.3 1.4 2.3 1.9 2.4-1.5 2.3-1 2.3 1.5 2.4 .9 2.3-1 2.3-1.1 2.4-.2 2.3 1.6 2.3-2 2.3 .1 2.4 1.7 2.3-1.8 2.3 2.8 2.4-1.3 2.3-.3 2.3 1 2.4 .6 2.3-2.3 2.3 0 2.3 .5 2.4 1 2.3-2.4 2.3 .8 2.4 2.4 2.3-1.2 2.3-1.5 2.4 .8 2.3-.5 2.3 1.1 2.4 .7 2.3 .6 2.3-1.2 2.3-.6 2.4 .4 2.3 .4 2.3-.1 2.4 .2 2.3-.9 2.3-.8 2.4 1.9 2.3 .1 2.3-1.6 2.4 1.7 2.3-1.4 2.3-.9 2.3 1.5 2.4 .2 2.3 4 2.3 0 2.4-18.7 2.3 .7 2.3-.5 2.4-.1 2.3 .6 2.3 .3 2.4 .1 2.3 .7 2.3 .5 2.3 .2 2.4 .1 2.3 .4 2.3 .4 2.4 .1 2.3 0 2.3 0 2.4 .4 2.3 .5 2.3-.2 2.4 1 2.3 .3 2.3-.1 2.3 .6 2.4 .1 2.3-.3 2.3 .6 2.4 .1 2.3 1 2.3 .7 2.4 10.5 2.3 0 2.3 0 2.4 0 2.3 0 2.3 0 2.3 0 2.4 0 2.3 0 2.3 0 2.4 0 2.3 0 2.3 0 2.4 0 2.3 0 2.3 0 2.4 0 2.3 0 2.3 0 2.3 0 2.4 0 2.3 0 0 0-2.3 0-2.4 0-2.3 0-2.3 0-2.3 0-2.4 0-2.3 0-2.3 0-2.4 0-2.3 0-2.3 0-2.4 0-2.3 0-2.3 0-2.4 0-2.3 0-2.3 0-2.3 0-2.4 0-2.3 0-2.3 0-2.4 0-2.3 0-2.3 0-2.4 0-2.3 0-2.3 0-2.4 0-2.3 0-2.3 0-2.3 0-2.4 0-2.3 0-2.3 0-2.4 0-2.3 0-2.3 0-2.4 0-2.3 0-2.3 0-2.4 0-2.3 0-2.3 0-2.3 0-2.4 0-2.3 0-2.3 0-2.4 0-2.3 0-2.3 0-2.4 0-2.3 0-2.3 0-2.4 0-2.3 0-2.3 0-2.3 0-2.4 0-2.3 0-2.3 0-2.4 0-2.3 0-2.3 0-2.4 0-2.3 0-2.3 0-2.4 0-2.3 0-2.3 0-2.3 0-2.4 0-2.3 0-2.3 0-2.4 0-2.3 0-2.3 0-2.4 0-2.3 0-2.3 0-2.4 0-2.3 0-2.3 0-2.3 0-2.4 0-2.3 0-2.3 0-2.4 0-2.3 0-2.3 0-2.4 0-2.3 0-2.3 0-2.3 0-2.4 0-2.3 0-2.3 0-2.4 0-2.3 0-2.3 0-2.4 0-2.3 0-2.3 0-2.4 0-2.3 0-2.3 0-2.3 0-2.4 0-2.3 0-2.3 0-2.4 0-2.3 0-2.3 0-2.4 0-2.3 0-2.3 0-2.4 0-2.3 0-2.3 0-2.3 0-2.4 0-2.3 0-2.3 0-2.4 0-2.3 0-2.3 0-2.4 0-2.3 0-2.3 0-2.4 0-2.3 0-2.3 0-2.3 0-2.4 0-2.3 0-2.3 0-2.4 0-2.3 0-2.3 0-2.4 0-2.3 0-2.3 0-2.4 0-2.3 0-2.3 0-2.3 0-2.4 0-2.3 0-2.3 0-2.4 0-2.3 0-2.3 0-2.4 0-2.3 0-2.3 0-2.4 0-2.3 0-2.3 0-2.3 0-2.4 0-2.3 0-2.3 0-2.4 0-2.3 0-2.3 0-2.4 0-2.3 0-2.3 0-2.4 0-2.3 0-2.3 0-2.3 0-2.4 0-2.3 0-2.3 0-2.4 0-2.3 0-2.3 0-2.4 0-2.3 0-2.3 0-2.3 0-2.4 0-2.3 0-2.3 0-2.4 0-2.3 0-2.3 0-2.4 0-2.3 0-2.3 0-2.4 0-2.3 0-2.3 0-2.3 0-2.4 0-2.3 0-2.3 0-2.4 0-2.3 0-2.3 0-2.4 0-2.3 0-2.3 0-2.4 0-2.3 0-2.3 0-2.3 0-2.4 0-2.3 0-2.3 0-2.4 0-2.3 0Z" fill="#447EBC" fill-opacity="0.1" clip-path="url(#c8)"/><path d="M664 644.3l2.3 0 2.4 0 2.3 0 2.3 0 2.4 0 2.3 0 2.3 0 2.3 0 2.4 0 2.3 0 2.3 0 2.4 0 2.3 0 2.3 0 2.4 0 2.3 0 2.3 0 2.4 0 2.3 0 2.3 0 2.3 0 2.4 0 2.3 0 2.3 0 2.4 0 2.3 0 2.3 0 2.4 0 2.3 0 2.3-.1 2.4-.2 2.3-.1 2.3-.1 2.3-.2 2.4 0 2.3 0 2.3 0 2.4 0 2.3 0 2.3 0 2.4 0 2.3 0 2.3 0 2.3 0 2.4 0 2.3 0 2.3 0 2.4 0 2.3 0 2.3 0 2.4 0 2.3 0 2.3 0 2.4 0 2.3 0 2.3 0 2.3 0 2.4 0 2.3 0 2.3 0 2.4 0 2.3 0 2.3 0 2.4 0 2.3 0 2.3 0 2.4-1.3 2.3-.9 2.3-.6 2.3-.7 2.4 1.1 2.3-.3 2.3 0 2.4 .3 2.3-.4 2.3 .1 2.4-1.7 2.3 .2 2.3 0 2.4 0 2.3 1.6 2.3-.9 2.3 .1 2.4 .2 2.3-1.2 2.3 .5 2.4-.2 2.3 1 2.3 .8 2.4-.9 2.3-1.1 2.3-.2 2.4 0 2.3-.3 2.3 .7 2.3-.8 2.4 .1 2.3 1.8 2.3-.3 2.4-1.2 2.3 1.2 2.3-.3 2.4 1.3 2.3-.8 2.3-1.5 2.4-.6 2.3 2.7 2.3-2.2 2.3 1.8 2.4-2.5 2.3 2.3 2.3-.7 2.4 1.5 2.3-2.9 2.3-.1 2.4 2.2 2.3-1.6 2.3 1.7 2.4-.9 2.3-.3 2.3 .3 2.3-1 2.4 2.7 2.3-2.4 2.3 .2 2.4 0 2.3-1.1 2.3 2 2.4-.7 2.3-1.2 2.3 .4 2.3-.5 2.4 1.7 2.3-.7 2.3 .3 2.4 1 2.3-1.6 2.3 .7 2.4-.6 2.3-.1 2.3 1 2.4-.6 2.3-.1 2.3-.4 2.3 .3 2.4-.6 2.3 1 2.3 1.1 2.4 1 2.3-2.7 2.3 2.6 2.4-1.5 2.3 1.1 2.3-1.7 2.4 1.9 2.3-1.2 2.3 .5 2.3 .6 2.4 .3 2.3 2.9 2.3 0 2.4 0 2.3 0 2.3 0 2.4 0 2.3 0 2.3 0 2.4 0 2.3 0 2.3 0 2.3 0 2.4 0 2.3 0 2.3 0 2.4 0 2.3 0 2.3 0 2.4 0 2.3 0 2.3 0 2.4 0 2.3 0 2.3 0 2.3 0 2.4 0 2.3 0 2.3 0 2.4 0 2.3 0 2.3 0 2.4 0 2.3 0 2.3 0 2.4 0 2.3 0 2.3 0 2.3 0 2.4 0 2.3 0 2.3 0 2.4 0 2.3 0 2.3 0 2.4 0 2.3 0 2.3 0 2.4 0 2.3 0 2.3 0 2.3 0 2.4 0 2.3 0 0 0-2.3 0-2.4 0-2.3 0-2.3 0-2.3 0-2.4 0-2.3 0-2.3 0-2.4 0-2.3 0-2.3 0-2.4 0-2.3 0-2.3 0-2.4 0-2.3 0-2.3 0-2.3 0-2.4 0-2.3 0-2.3 0-2.4 0-2.3 0-2.3 0-2.4 0-2.3 0-2.3 0-2.4 0-2.3 0-2.3 0-2.3 0-2.4 0-2.3 0-2.3 0-2.4 0-2.3 0-2.3 0-2.4 0-2.3 0-2.3 0-2.4 0-2.3 0-2.3 0-2.3 0-2.4 0-2.3 0-2.3 0-2.4 0-2.3 0-2.3 0-2.4 0-2.3 0-2.3 0-2.4 0-2.3 0-2.3 0-2.3 0-2.4 0-2.3 0-2.3 0-2.4 0-2.3 0-2.3 0-2.4 0-2.3 0-2.3 0-2.4 0-2.3 0-2.3 0-2.3 0-2.4 0-2.3 0-2.3 0-2.4 0-2.3 0-2.3 0-2.4 0-2.3 0-2.3 0-2.4 0-2.3 0-2.3 0-2.3 0-2.4 0-2.3 0-2.3 0-2.4 0-2.3 0-2.3 0-2.4 0-2.3 0-2.3 0-2.3 0-2.4 0-2.3 0-2.3 0-2.4 0-2.3 0-2.3 0-2.4 0-2.3 0-2.3 0-2.4 0-2.3 0-2.3 0-2.3 0-2.4 0-2.3 0-2.3 0-2.4 0-2.3 0-2.3 0-2.4 0-2.3 0-2.3 0-2.4 0-2.3 0-2.3 0-2.3 0-2.4 0-2.3 0-2.3 0-2.4 0-2.3 0-2.3 0-2.4 0-2.3 0-2.3 0-2.4 0-2.3 0-2.3 0-2.3 0-2.4 0-2.3 0-2.3 0-2.4 0-2.3 0-2.3 0-2.4 0-2.3 0-2.3 0-2.4 0-2.3 0-2.3 0-2.3 0-2.4 0-2.3 0-2.3 0-2.4 0-2.3 0-2.3 0-2.4 0-2.3 0-2.3 0-2.4 0-2.3 0-2.3 0-2.3 0-2.4 0-2.3 0-2.3 0-2.4 0-2.3 0-2.3 0-2.4 0-2.3 0-2.3 0-2.4 0-2.3 0-2.3 0-2.3 0-2.4 0-2.3 0-2.3 0-2.4 0-2.3 0-2.3 0-2.4 0-2.3 0-2.3 0-2.3 0-2.4 0-2.3 0-2.3 0-2.4 0-2.3 0-2.3 0-2.4 0-2.3 0-2.3 0-2.4 0-2.3 0-2.3 0-2.3 0-2.4 0-2.3 0-2.3 0-2.4 0-2.3 0-2.3 0-2.4 0-2.3 0-2.3 0-2.4 0-2.3 0-2.3 0-2.3 0-2.4 0-2.3 0-2.3 0-2.4 0-2.3 0Z" fill="#C15C17" fill-opacity="0.1" clip-path="url(#c8)"/><path d="M664 644.3l2.3 0 2.4 0 2.3 0 2.3 0 2.4 0 2.3 0 2.3 0 2.3 0 2.4 0 2.3 0 2.3 0 2.4 0 2.3 0 2.3 0 2.4 0 2.3 0 2.3 0 2.4 0 2.3 0 2.3 0 2.3 0 2.4 0 2.3 0 2.3 0 2.4 0 2.3 0 2.3 0 2.4 0 2.3 0 2.3-.1 2.4-.2 2.3-.1 2.3-.1 2.3-.2 2.4 0 2.3 0 2.3 0 2.4 0 2.3 0 2.3 0 2.4 0 2.3 0 2.3 0 2.3 0 2.4 0 2.3 0 2.3 0 2.4 0 2.3 0 2.3 0 2.4 0 2.3 0 2.3 0 2.4 0 2.3-11.8 2.3-3.4 2.3-1 2.4 1.2 2.3-.8 2.3 .1 2.4-.2 2.3 .7 2.3-.2 2.4-.8 2.3 .1 2.3-1.9 2.4-1.3 2.3-1 2.3 .7 2.3-.7 2.4-.4 2.3-.2 2.3 .1 2.4 .2 2.3 .1 2.3 .7 2.4-1.1 2.3 1 2.3-.2 2.4-.2 2.3 17.2 2.3 .8 2.3-1.5 2.4-.8 2.3-.1 2.3 2.5 2.4-1 2.3-2 2.3 3.1 2.4-1.3 2.3 .3 2.3-2 2.4 2.2 2.3-.4 2.3 .5 2.3 .2 2.4-2.5 2.3-.2 2.3 1.2 2.4 1.7 2.3-1.4 2.3 .9 2.4-2.4 2.3-.2 2.3 2.9 2.4-2.9 2.3 3.1 2.3-.2 2.3-2.7 2.4 1.6 2.3-.4 2.3 1.1 2.4-1 2.3-.8 2.3 .1 2.4 1.2 2.3 .2 2.3-2.1 2.4 1.4 2.3-.1 2.3-.7 2.3 1.8 2.4-1.2 2.3 2.1 2.3-3.1 2.4 1.1 2.3 1.7 2.3-3.1 2.4 2.7 2.3-2.4 2.3 2.9 2.3-1.1 2.4-1.2 2.3 2.3 2.3-2.9 2.4 2.5 2.3-.3 2.3-2.5 2.4 .8 2.3 1.8 2.3-2.5 2.4 2.6 2.3-1.5 2.3 1.5 2.3-2.7 2.4 .4 2.3-.3 2.3 1.1 2.4 1.1 2.3 .4 2.3 .6 2.4-.2 2.3-1.4 2.3-.5 2.4-.9 2.3 2.6 2.3-1.7 2.3 1.6 2.4 .7 2.3 2.7 2.3 0 2.4 0 2.3 0 2.3 0 2.4 0 2.3 0 2.3 0 2.4 0 2.3 0 2.3 0 2.3 0 2.4 0 2.3 0 2.3 0 2.4 0 2.3 0 2.3 0 2.4 0 2.3 0 2.3 0 2.4 0 2.3 0 2.3 0 2.3 0 2.4 0 2.3 0 2.3 0 2.4 0 2.3 0 2.3 0 2.4 0 2.3 0 2.3 0 2.4 0 2.3 0 2.3 0 2.3 0 2.4 0 2.3 0 2.3 0 2.4 0 2.3 0 2.3 0 2.4 0 2.3 0 2.3 0 2.4 0 2.3 0 2.3 0 2.3 0 2.4 0 2.3 0 0 0-2.3 0-2.4 0-2.3 0-2.3 0-2.3 0-2.4 0-2.3 0-2.3 0-2.4 0-2.3 0-2.3 0-2.4 0-2.3 0-2.3 0-2.4 0-2.3 0-2.3 0-2.3 0-2.4 0-2.3 0-2.3 0-2.4 0-2.3 0-2.3 0-2.4 0-2.3 0-2.3 0-2.4 0-2.3 0-2.3 0-2.3 0-2.4 0-2.3 0-2.3 0-2.4 0-2.3 0-2.3 0-2.4 0-2.3 0-2.3 0-2.4 0-2.3 0-2.3 0-2.3 0-2.4 0-2.3 0-2.3 0-2.4 0-2.3 0-2.3 0-2.4 0-2.3 0-2.3 0-2.4 0-2.3 0-2.3 0-2.3 0-2.4 0-2.3 0-2.3 0-2.4 0-2.3 0-2.3 0-2.4 0-2.3 0-2.3 0-2.4 0-2.3 0-2.3 0-2.3 0-2.4 0-2.3 0-2.3 0-2.4 0-2.3 0-2.3 0-2.4 0-2.3 0-2.3 0-2.4 0-2.3 0-2.3 0-2.3 0-2.4 0-2.3 0-2.3 0-2.4 0-2.3 0-2.3 0-2.4 0-2.3 0-2.3 0-2.3 0-2.4 0-2.3 0-2.3 0-2.4 0-2.3 0-2.3 0-2.4 0-2.3 0-2.3 0-2.4 0-2.3 0-2.3 0-2.3 0-2.4 0-2.3 0-2.3 0-2.4 0-2.3 0-2.3 0-2.4 0-2.3 0-2.3 0-2.4 0-2.3 0-2.3 0-2.3 0-2.4 0-2.3 0-2.3 0-2.4 0-2.3 0-2.3 0-2.4 0-2.3 0-2.3 0-2.4 0-2.3 0-2.3 0-2.3 0-2.4 0-2.3 0-2.3 0-2.4 0-2.3 0-2.3 0-2.4 0-2.3 0-2.3 0-2.4 0-2.3 0-2.3 0-2.3 0-2.4 0-2.3 0-2.3 0-2.4 0-2.3 0-2.3 0-2.4 0-2.3 0-2.3 0-2.4 0-2.3 0-2.3 0-2.3 0-2.4 0-2.3 0-2.3 0-2.4 0-2.3 0-2.3 0-2.4 0-2.3 0-2.3 0-2.4 0-2.3 0-2.3 0-2.3 0-2.4 0-2.3 0-2.3 0-2.4 0-2.3 0-2.3 0-2.4 0-2.3 0-2.3 0-2.3 0-2.4 0-2.3 0-2.3 0-2.4 0-2.3 0-2.3 0-2.4 0-2.3 0-2.3 0-2.4 0-2.3 0-2.3 0-2.3 0-2.4 0-2.3 0-2.3 0-2.4 0-2.3 0-2.3 0-2.4 0-2.3 0-2.3 0-2.4 0-2.3 0-2.3 0-2.3 0-2.4 0-2.3 0-2.3 0-2.4 0-2.3 0Z" fill="#890F02" fill-opacity="0.1" clip-path="url(#c8)"/><path d="M664 644.3l2.3 0 2.4 0 2.3 0 2.3 0 2.4 0 2.3 0 2.3 0 2.3 0 2.4 0 2.3 0 2.3 0 2.4 0 2.3 0 2.3 0 2.4 0 2.3 0 2.3 0 2.4 0 2.3 0 2.3 0 2.3 0 2.4 0 2.3 0 2.3 0 2.4 0 2.3 0 2.3 0 2.4 0 2.3 0 2.3-.1 2.4-.2 2.3-.1 2.3-.1 2.3-.2 2.4 0 2.3 0 2.3-8 2.4-8 2.3 .3 2.3-.3 2.4-.3 2.3 .6 2.3-.3 2.3 .1 2.4 .2 2.3-.6 2.3 0 2.4 .5 2.3-.2 2.3-.3 2.4 .1 2.3-.1 2.3 .2 2.4 3.5 2.3 12.6 2.3 0 2.3 0 2.4 0 2.3 0 2.3 0 2.4 0 2.3 0 2.3 0 2.4 0 2.3 0 2.3 0 2.4-1 2.3-1 2.3-2 2.3 .8 2.4 1 2.3-1.7 2.3 .1 2.4 .3 2.3-.3 2.3-.3 2.4-.8 2.3-.3 2.3 2.2 2.4-1.5 2.3 .4 2.3-.2 2.3-.6 2.4 1.6 2.3 .5 2.3 0 2.4-1.1 2.3 .8 2.3 .4 2.4-1.8 2.3 .7 2.3-1.1 2.4 1.8 2.3 .5 2.3-1.1 2.3 1.3 2.4 .1 2.3-3 2.3 2.1 2.4-.7 2.3-1.2 2.3 2.6 2.4 .3 2.3-1.5 2.3-1.4 2.4 2.6 2.3-.6 2.3-1.2 2.3 2 2.4-.2 2.3-2.6 2.3 1.3 2.4 1.6 2.3-.2 2.3-.1 2.4-2.3 2.3 .8 2.3-1.2 2.4 2.8 2.3-2.3 2.3 1.7 2.3 .7 2.4-2.8 2.3 2.2 2.3-.6 2.4 .1 2.3 .2 2.3-1.3 2.4 1 2.3-1.3 2.3 1.5 2.3 .1 2.4 .6 2.3 .1 2.3-.9 2.4 1.2 2.3-.2 2.3-2.1 2.4 1.6 2.3-.9 2.3 .6 2.4-.3 2.3 1.1 2.3-1.5 2.3-.9 2.4 0 2.3 2.3 2.3 .3 2.4-1.6 2.3-1.3 2.3 .1 2.4 2 2.3 .1 2.3-1.7 2.4-.9 2.3 2.2 2.3 0 2.3 .5 2.4 .6 2.3 2.9 2.3 0 2.4 0 2.3 0 2.3 0 2.4 0 2.3 0 2.3 0 2.4 0 2.3 0 2.3 0 2.3 0 2.4 0 2.3 0 2.3 0 2.4 0 2.3 0 2.3 0 2.4 0 2.3 0 2.3 0 2.4 0 2.3 0 2.3 0 2.3 0 2.4 0 2.3 0 2.3 0 2.4 0 2.3 0 2.3 0 2.4 0 2.3 0 2.3 0 2.4 0 2.3 0 2.3 0 2.3 0 2.4 0 2.3 0 2.3 0 2.4 0 2.3 0 2.3 0 2.4 0 2.3 0 2.3 0 2.4 0 2.3 0 2.3 0 2.3 0 2.4 0 2.3 0 0 0-2.3 0-2.4 0-2.3 0-2.3 0-2.3 0-2.4 0-2.3 0-2.3 0-2.4 0-2.3 0-2.3 0-2.4 0-2.3 0-2.3 0-2.4 0-2.3 0-2.3 0-2.3 0-2.4 0-2.3 0-2.3 0-2.4 0-2.3 0-2.3 0-2.4 0-2.3 0-2.3 0-2.4 0-2.3 0-2.3 0-2.3 0-2.4 0-2.3 0-2.3 0-2.4 0-2.3 0-2.3 0-2.4 0-2.3 0-2.3 0-2.4 0-2.3 0-2.3 0-2.3 0-2.4 0-2.3 0-2.3 0-2.4 0-2.3 0-2.3 0-2.4 0-2.3 0-2.3 0-2.4 0-2.3 0-2.3 0-2.3 0-2.4 0-2.3 0-2.3 0-2.4 0-2.3 0-2.3 0-2.4 0-2.3 0-2.3 0-2.4 0-2.3 0-2.3 0-2.3 0-2.4 0-2.3 0-2.3 0-2.4 0-2.3 0-2.3 0-2.4 0-2.3 0-2.3 0-2.4 0-2.3 0-2.3 0-2.3 0-2.4 0-2.3 0-2.3 0-2.4 0-2.3 0-2.3 0-2.4 0-2.3 0-2.3 0-2.3 0-2.4 0-2.3 0-2.3 0-2.4 0-2.3 0-2.3 0-2.4 0-2.3 0-2.3 0-2.4 0-2.3 0-2.3 0-2.3 0-2.4 0-2.3 0-2.3 0-2.4 0-2.3 0-2.3 0-2.4 0-2.3 0-2.3 0-2.4 0-2.3 0-2.3 0-2.3 0-2.4 0-2.3 0-2.3 0-2.4 0-2.3 0-2.3 0-2.4 0-2.3 0-2.3 0-2.4 0-2.3 0-2.3 0-2.3 0-2.4 0-2.3 0-2.3 0-2.4 0-2.3 0-2.3 0-2.4 0-2.3 0-2.3 0-2.4 0-2.3 0-2.3 0-2.3 0-2.4 0-2.3 0-2.3 0-2.4 0-2.3 0-2.3 0-2.4 0-2.3 0-2.3 0-2.4 0-2.3 0-2.3 0-2.3 0-2.4 0-2.3 0-2.3 0-2.4 0-2.3 0-2.3 0-2.4 0-2.3 0-2.3 0-2.4 0-2.3 0-2.3 0-2.3 0-2.4 0-2.3 0-2.3 0-2.4 0-2.3 0-2.3 0-2.4 0-2.3 0-2.3 0-2.3 0-2.4 0-2.3 0-2.3 0-2.4 0-2.3 0-2.3 0-2.4 0-2.3 0-2.3 0-2.4 0-2.3 0-2.3 0-2.3 0-2.4 0-2.3 0-2.3 0-2.4 0-2.3 0-2.3 0-2.4 0-2.3 0-2.3 0-2.4 0-2.3 0-2.3 0-2.3 0-2.4 0-2.3 0-2.3 0-2.4 0-2.3 0Z" fill="#0A437C" fill-opacity="0.1" clip-path="url(#c8)"/><path d="M664 644.3l2.3 0 2.4 0 2.3 0 2.3 0 2.4 0 2.3 0 2.3 0 2.3 0 2.4 0 2.3 0 2.3 0 2.4 0 2.3 0 2.3 0 2.4 0 2.3 0 2.3 0 2.4 0 2.3 0 2.3 0 2.3 0 2.4 0 2.3 0 2.3 0 2.4 0 2.3 0 2.3 0 2.4 0 2.3 0 2.3-.1 2.4-.2 2.3-.1 2.3-.1 2.3-.2 2.4 0 2.3 0 2.3 0 2.4 0 2.3 0 2.3 0 2.4 0 2.3 0 2.3 0 2.3 0 2.4 0 2.3 0 2.3 0 2.4 0 2.3 0 2.3 0 2.4 0 2.3 0 2.3 0 2.4 0 2.3 0 2.3 0 2.3 0 2.4 0 2.3 0 2.3 0 2.4 0 2.3 0 2.3 0 2.4 0 2.3 0 2.3 0 2.4-.8 2.3-2.8 2.3-.7 2.3 1.6 2.4-1.4 2.3-.3 2.3 1.3 2.4-1.1 2.3-1.1 2.3 .4 2.4 .8 2.3-.6 2.3 0 2.4 2.3 2.3-.6 2.3-2.2 2.3-.1 2.4 2.9 2.3-.7 2.3-1 2.4-.5 2.3 1.9 2.3-1.4 2.4-1.1 2.3 0 2.3 1.6 2.4-1 2.3 1 2.3-1.1 2.3 2.5 2.4-3.2 2.3 2.2 2.3-2.3 2.4 .7 2.3 2.3 2.3-1.1 2.4 1.2 2.3-1.5 2.3-.9 2.4 2.4 2.3 .1 2.3-2.6 2.3-.3 2.4 .9 2.3 2.1 2.3-1.8 2.4 .1 2.3 .4 2.3 .3 2.4-1.9 2.3 .1 2.3-.1 2.4 .7 2.3 1.4 2.3-1.5 2.3 1.3 2.4-1.3 2.3 1.1 2.3-1.3 2.4 1 2.3 1.4 2.3-1.5 2.4-1 2.3 2.6 2.3-.7 2.3-1.3 2.4 1.4 2.3-2.4 2.3 0 2.4 2.9 2.3-2.1 2.3-.1 2.4 0 2.3 .8 2.3-.6 2.4-1.2 2.3 .7 2.3 2.6 2.3-3.2 2.4 1.4 2.3-1.1 2.3 2.6 2.4-.6 2.3-.1 2.3-.5 2.4-.5 2.3-.7 2.3 .8 2.4 1.6 2.3-2.6 2.3 1.7 2.3 0 2.4 .3 2.3 3.8 2.3 0 2.4 0 2.3 0 2.3 0 2.4 0 2.3 0 2.3 0 2.4 0 2.3 0 2.3 0 2.3 0 2.4 0 2.3 0 2.3 0 2.4 0 2.3 0 2.3 0 2.4 0 2.3 0 2.3 0 2.4 0 2.3 0 2.3 0 2.3 0 2.4 0 2.3 0 2.3 0 2.4 0 2.3 0 2.3 0 2.4 0 2.3 0 2.3 0 2.4 0 2.3 0 2.3 0 2.3 0 2.4 0 2.3 0 2.3 0 2.4 0 2.3 0 2.3 0 2.4 0 2.3 0 2.3 0 2.4 0 2.3 0 2.3 0 2.3 0 2.4 0 2.3 0 0 0-2.3 0-2.4 0-2.3 0-2.3 0-2.3 0-2.4 0-2.3 0-2.3 0-2.4 0-2.3 0-2.3 0-2.4 0-2.3 0-2.3 0-2.4 0-2.3 0-2.3 0-2.3 0-2.4 0-2.3 0-2.3 0-2.4 0-2.3 0-2.3 0-2.4 0-2.3 0-2.3 0-2.4 0-2.3 0-2.3 0-2.3 0-2.4 0-2.3 0-2.3 0-2.4 0-2.3 0-2.3 0-2.4 0-2.3 0-2.3 0-2.4 0-2.3 0-2.3 0-2.3 0-2.4 0-2.3 0-2.3 0-2.4 0-2.3 0-2.3 0-2.4 0-2.3 0-2.3 0-2.4 0-2.3 0-2.3 0-2.3 0-2.4 0-2.3 0-2.3 0-2.4 0-2.3 0-2.3 0-2.4 0-2.3 0-2.3 0-2.4 0-2.3 0-2.3 0-2.3 0-2.4 0-2.3 0-2.3 0-2.4 0-2.3 0-2.3 0-2.4 0-2.3 0-2.3 0-2.4 0-2.3 0-2.3 0-2.3 0-2.4 0-2.3 0-2.3 0-2.4 0-2.3 0-2.3 0-2.4 0-2.3 0-2.3 0-2.3 0-2.4 0-2.3 0-2.3 0-2.4 0-2.3 0-2.3 0-2.4 0-2.3 0-2.3 0-2.4 0-2.3 0-2.3 0-2.3 0-2.4 0-2.3 0-2.3 0-2.4 0-2.3 0-2.3 0-2.4 0-2.3 0-2.3 0-2.4 0-2.3 0-2.3 0-2.3 0-2.4 0-2.3 0-2.3 0-2.4 0-2.3 0-2.3 0-2.4 0-2.3 0-2.3 0-2.4 0-2.3 0-2.3 0-2.3 0-2.4 0-2.3 0-2.3 0-2.4 0-2.3 0-2.3 0-2.4 0-2.3 0-2.3 0-2.4 0-2.3 0-2.3 0-2.3 0-2.4 0-2.3 0-2.3 0-2.4 0-2.3 0-2.3 0-2.4 0-2.3 0-2.3 0-2.4 0-2.3 0-2.3 0-2.3 0-2.4 0-2.3 0-2.3 0-2.4 0-2.3 0-2.3 0-2.4 0-2.3 0-2.3 0-2.4 0-2.3 0-2.3 0-2.3 0-2.4 0-2.3 0-2.3 0-2.4 0-2.3 0-2.3 0-2.4 0-2.3 0-2.3 0-2.3 0-2.4 0-2.3 0-2.3 0-2.4 0-2.3 0-2.3 0-2.4 0-2.3 0-2.3 0-2.4 0-2.3 0-2.3 0-2.3 0-2.4 0-2.3 0-2.3 0-2.4 0-2.3 0-2.3 0-2.4 0-2.3 0-2.3 0-2.4 0-2.3 0-2.3 0-2.3 0-2.4 0-2.3 0-2.3 0-2.4 0-2.3 0Z" fill="#6D1F62" fill-opacity="0.1" clip-path="url(#c8)"/><path d="M664 644.3l2.3 0 2.4 0 2.3 0 2.3 0 2.4 0 2.3 0 2.3 0 2.3 0 2.4 0 2.3 0 2.3 0 2.4 0 2.3 0 2.3 0 2.4 0 2.3 0 2.3 0 2.4 0 2.3 0 2.3 0 2.3 0 2.4 0 2.3 0 2.3 0 2.4 0 2.3 0 2.3 0 2.4 0 2.3 0 2.3-.1 2.4-.2 2.3-.1 2.3-.1 2.3-.2 2.4 0 2.3 0 2.3 0 2.4 0 2.3 0 2.3 0 2.4 0 2.3 0 2.3 0 2.3 0 2.4 0 2.3 0 2.3 0 2.4 0 2.3 0 2.3 0 2.4 0 2.3 0 2.3 0 2.4 0 2.3 0 2.3 0 2.3 0 2.4 0 2.3 0 2.3 0 2.4 0 2.3 0 2.3 0 2.4 0 2.3 0 2.3 0 2.4-1.4 2.3-1 2.3-1.1 2.3-.4 2.4-.1 2.3-.1 2.3-1.1 2.4 .7 2.3 1.9 2.3-.1 2.4-2.7 2.3 .2 2.3 .8 2.4 .2 2.3-.8 2.3 2 2.3 .5 2.4 .3 2.3-1.4 2.3 .7 2.4-.8 2.3-1 2.3 .6 2.4-.6 2.3 2.2 2.3-1.7 2.4 2 2.3-.2 2.3-1.6 2.3-.2 2.4 .7 2.3 1.4 2.3-1.1 2.4 .1 2.3-1.5 2.3-.7 2.4 .6 2.3 2.2 2.3-2.4 2.4 .7 2.3 1.6 2.3-2.7 2.3 1.9 2.4 1.2 2.3-1.4 2.3 .8 2.4-1.4 2.3 1.2 2.3-1.6 2.4 0 2.3-.2 2.3 2.3 2.4-2.1 2.3 1.2 2.3-.4 2.3-.2 2.4-.1 2.3 .8 2.3-1.3 2.4 .9 2.3-.4 2.3 .2 2.4-.3 2.3 1.6 2.3-1.9 2.3 2.2 2.4-1 2.3-.9 2.3 .8 2.4-1.1 2.3 2.3 2.3-2.6 2.4-.4 2.3 .3 2.3 .9 2.4-1.5 2.3 3.2 2.3-1.9 2.3 1.2 2.4-1.8 2.3 1.7 2.3 .8 2.4-1.4 2.3 .6 2.3-1.7 2.4 2.6 2.3-1.4 2.3 0 2.4-1.1 2.3 1.1 2.3-1.2 2.3-.4 2.4 2.8 2.3 3.1 2.3 0 2.4 0 2.3 0 2.3 0 2.4 0 2.3 0 2.3 0 2.4 0 2.3 0 2.3 0 2.3 0 2.4 0 2.3 0 2.3 0 2.4 0 2.3 0 2.3 0 2.4 0 2.3 0 2.3 0 2.4 0 2.3 0 2.3 0 2.3 0 2.4 0 2.3 0 2.3 0 2.4 0 2.3 0 2.3 0 2.4 0 2.3 0 2.3 0 2.4 0 2.3 0 2.3 0 2.3 0 2.4 0 2.3 0 2.3 0 2.4 0 2.3 0 2.3 0 2.4 0 2.3 0 2.3 0 2.4 0 2.3 0 2.3 0 2.3 0 2.4 0 2.3 0 0 0-2.3 0-2.4 0-2.3 0-2.3 0-2.3 0-2.4 0-2.3 0-2.3 0-2.4 0-2.3 0-2.3 0-2.4 0-2.3 0-2.3 0-2.4 0-2.3 0-2.3 0-2.3 0-2.4 0-2.3 0-2.3 0-2.4 0-2.3 0-2.3 0-2.4 0-2.3 0-2.3 0-2.4 0-2.3 0-2.3 0-2.3 0-2.4 0-2.3 0-2.3 0-2.4 0-2.3 0-2.3 0-2.4 0-2.3 0-2.3 0-2.4 0-2.3 0-2.3 0-2.3 0-2.4 0-2.3 0-2.3 0-2.4 0-2.3 0-2.3 0-2.4 0-2.3 0-2.3 0-2.4 0-2.3 0-2.3 0-2.3 0-2.4 0-2.3 0-2.3 0-2.4 0-2.3 0-2.3 0-2.4 0-2.3 0-2.3 0-2.4 0-2.3 0-2.3 0-2.3 0-2.4 0-2.3 0-2.3 0-2.4 0-2.3 0-2.3 0-2.4 0-2.3 0-2.3 0-2.4 0-2.3 0-2.3 0-2.3 0-2.4 0-2.3 0-2.3 0-2.4 0-2.3 0-2.3 0-2.4 0-2.3 0-2.3 0-2.3 0-2.4 0-2.3 0-2.3 0-2.4 0-2.3 0-2.3 0-2.4 0-2.3 0-2.3 0-2.4 0-2.3 0-2.3 0-2.3 0-2.4 0-2.3 0-2.3 0-2.4 0-2.3 0-2.3 0-2.4 0-2.3 0-2.3 0-2.4 0-2.3 0-2.3 0-2.3 0-2.4 0-2.3 0-2.3 0-2.4 0-2.3 0-2.3 0-2.4 0-2.3 0-2.3 0-2.4 0-2.3 0-2.3 0-2.3 0-2.4 0-2.3 0-2.3 0-2.4 0-2.3 0-2.3 0-2.4 0-2.3 0-2.3 0-2.4 0-2.3 0-2.3 0-2.3 0-2.4 0-2.3 0-2.3 0-2.4 0-2.3 0-2.3 0-2.4 0-2.3 0-2.3 0-2.4 0-2.3 0-2.3 0-2.3 0-2.4 0-2.3 0-2.3 0-2.4 0-2.3 0-2.3 0-2.4 0-2.3 0-2.3 0-2.4 0-2.3 0-2.3 0-2.3 0-2.4 0-2.3 0-2.3 0-2.4 0-2.3 0-2.3 0-2.4 0-2.3 0-2.3 0-2.3 0-2.4 0-2.3 0-2.3 0-2.4 0-2.3 0-2.3 0-2.4 0-2.3 0-2.3 0-2.4 0-2.3 0-2.3 0-2.3 0-2.4 0-2.3 0-2.3 0-2.4 0-2.3 0-2.3 0-2.4 0-2.3 0-2.3 0-2.4 0-2.3 0-2.3 0-2.3 0-2.4 0-2.3 0-2.3 0-2.4 0-2.3 0Z" fill="#584477" fill-opacity="0.1" clip-path="url(#c8)"/><path d="M664 644.3l2.3 0 2.4 0 2.3 0 2.3 0 2.4 0 2.3 0 2.3 0 2.3 0 2.4 0 2.3 0 2.3 0 2.4 0 2.3 0 2.3 0 2.4 0 2.3 0 2.3 0 2.4 0 2.3 0 2.3 0 2.3 0 2.4 0 2.3 0 2.3 0 2.4 0 2.3 0 2.3 0 2.4 0 2.3 0 2.3-.1 2.4-.2 2.3-.1 2.3-.1 2.3-.2 2.4 0 2.3 0 2.3 0 2.4 0 2.3 0 2.3 0 2.4 0 2.3 0 2.3 0 2.3 0 2.4 0 2.3 0 2.3 0 2.4 0 2.3 0 2.3 0 2.4 0 2.3 0 2.3 0 2.4 0 2.3 0 2.3 0 2.3 0 2.4 0 2.3 0 2.3 0 2.4 0 2.3 0 2.3 0 2.4 0 2.3 0 2.3 0 2.4-1 2.3-1.6 2.3 .4 2.3-.6 2.4 .3 2.3-2.9 2.3 1 2.4-.2 2.3 1.2 2.3-.8 2.4-.4 2.3 .2 2.3-.1 2.4 .1 2.3 1.8 2.3-2.9 2.3 .1 2.4 1.3 2.3-.7 2.3 1.6 2.4 .1 2.3 .1 2.3 0 2.4-.1 2.3-.9 2.3 .4 2.4-.7 2.3-1.1 2.3 3.1 2.3-.2 2.4-.7 2.3-2.1 2.3 .6 2.4-.3 2.3 2 2.3 0 2.4-1.2 2.3 1 2.3-.5 2.4-.7 2.3-1 2.3-6.1 2.3-9.3 2.4 .8 2.3-.1 2.3-1.2 2.4 .7 2.3-.1 2.3-.2 2.4 .7 2.3-.9 2.3-.2 2.4 .2 2.3-.1 2.3 .2 2.3-.4 2.4 .4 2.3 .2 2.3 .4 2.4-.1 2.3-.7 2.3 .1 2.4 .3 2.3 .6 2.3-.8 2.3 .9 2.4-.9 2.3 .8 2.3 14.9 2.4 1.2 2.3-1.3 2.3-.1 2.4 2.9 2.3-2.4 2.3 .2 2.4 .6 2.3 .2 2.3 .7 2.3-.2 2.4-1.2 2.3 2.2 2.3-2.6 2.4 1.3 2.3 1.6 2.3-1.5 2.4-.5 2.3 0 2.3 1.9 2.4-2.4 2.3-.1 2.3 .4 2.3 .3 2.4 .8 2.3 4 2.3 0 2.4 0 2.3 0 2.3 0 2.4 0 2.3 0 2.3 0 2.4 0 2.3 0 2.3 0 2.3 0 2.4 0 2.3 0 2.3 0 2.4 0 2.3 0 2.3 0 2.4 0 2.3 0 2.3 0 2.4 0 2.3 0 2.3 0 2.3 0 2.4 0 2.3 0 2.3 0 2.4 0 2.3 0 2.3 0 2.4 0 2.3 0 2.3 0 2.4 0 2.3 0 2.3 0 2.3 0 2.4 0 2.3 0 2.3 0 2.4 0 2.3 0 2.3 0 2.4 0 2.3 0 2.3 0 2.4 0 2.3 0 2.3 0 2.3 0 2.4 0 2.3 0 0 0-2.3 0-2.4 0-2.3 0-2.3 0-2.3 0-2.4 0-2.3 0-2.3 0-2.4 0-2.3 0-2.3 0-2.4 0-2.3 0-2.3 0-2.4 0-2.3 0-2.3 0-2.3 0-2.4 0-2.3 0-2.3 0-2.4 0-2.3 0-2.3 0-2.4 0-2.3 0-2.3 0-2.4 0-2.3 0-2.3 0-2.3 0-2.4 0-2.3 0-2.3 0-2.4 0-2.3 0-2.3 0-2.4 0-2.3 0-2.3 0-2.4 0-2.3 0-2.3 0-2.3 0-2.4 0-2.3 0-2.3 0-2.4 0-2.3 0-2.3 0-2.4 0-2.3 0-2.3 0-2.4 0-2.3 0-2.3 0-2.3 0-2.4 0-2.3 0-2.3 0-2.4 0-2.3 0-2.3 0-2.4 0-2.3 0-2.3 0-2.4 0-2.3 0-2.3 0-2.3 0-2.4 0-2.3 0-2.3 0-2.4 0-2.3 0-2.3 0-2.4 0-2.3 0-2.3 0-2.4 0-2.3 0-2.3 0-2.3 0-2.4 0-2.3 0-2.3 0-2.4 0-2.3 0-2.3 0-2.4 0-2.3 0-2.3 0-2.3 0-2.4 0-2.3 0-2.3 0-2.4 0-2.3 0-2.3 0-2.4 0-2.3 0-2.3 0-2.4 0-2.3 0-2.3 0-2.3 0-2.4 0-2.3 0-2.3 0-2.4 0-2.3 0-2.3 0-2.4 0-2.3 0-2.3 0-2.4 0-2.3 0-2.3 0-2.3 0-2.4 0-2.3 0-2.3 0-2.4 0-2.3 0-2.3 0-2.4 0-2.3 0-2.3 0-2.4 0-2.3 0-2.3 0-2.3 0-2.4 0-2.3 0-2.3 0-2.4 0-2.3 0-2.3 0-2.4 0-2.3 0-2.3 0-2.4 0-2.3 0-2.3 0-2.3 0-2.4 0-2.3 0-2.3 0-2.4 0-2.3 0-2.3 0-2.4 0-2.3 0-2.3 0-2.4 0-2.3 0-2.3 0-2.3 0-2.4 0-2.3 0-2.3 0-2.4 0-2.3 0-2.3 0-2.4 0-2.3 0-2.3 0-2.4 0-2.3 0-2.3 0-2.3 0-2.4 0-2.3 0-2.3 0-2.4 0-2.3 0-2.3 0-2.4 0-2.3 0-2.3 0-2.3 0-2.4 0-2.3 0-2.3 0-2.4 0-2.3 0-2.3 0-2.4 0-2.3 0-2.3 0-2.4 0-2.3 0-2.3 0-2.3 0-2.4 0-2.3 0-2.3 0-2.4 0-2.3 0-2.3 0-2.4 0-2.3 0-2.3 0-2.4 0-2.3 0-2.3 0-2.3 0-2.4 0-2.3 0-2.3 0-2.4 0-2.3 0Z" fill="#B7DBAB" fill-opacity="0.1" clip-path="url(#c8)"/><path d="M664 644.3l1.2 0 1.1 0 1.2 0 1.2 0 1.1 0 1.2 0 1.2 0 1.1 0 1.2 0 1.2 0 1.1 0 1.2 0 1.1 0 1.2 0 1.2 35.4 1.1 15.5 1.2 20.7 1.2-26.5 1.1-14.7 1.2 12.8 1.2 27.5 1.1 26.1 1.2-18.6 1.2-3.4 1.1-21.3 1.2 24.6 1.2 18.3 1.1 13.6 1.2 36.3 1.2-38.5 1.1-9.7 1.2-17.5 1.2-28.9 1.1-15.3 1.2 6.3 1.2 26.6 1.1-11.9 1.2 13.8 1.1-11.8 1.2 12.8 1.2-.3 1.1 31.2 1.2-2.3 1.2 44.1 1.1-46.2 1.2-19.8 1.2-7.5 1.1-23.1 1.2-15.5 1.2 18.8 1.1 27.4 1.2-2.9 1.2-8.5 1.1-8 1.2 12.5 1.2 3.4 1.1 15.9 1.2 12.7 1.2 26.8 1.1-7.1 1.2-37.8 1.2-18.7 1.1-33.7 1.2 2.6 1.1 8.8 1.2 36.6 1.2-12.7 1.1-22.2 1.2-2.7 1.2 17.3 1.1 36.1 1.2-12 1.2 26.5 1.1 10.1 1.2-38.1 1.2-7.6 1.1-29.7 1.2-16.2 1.2 12.5 1.1 18.6 1.2 17.9 1.2-16.8 1.1-4.2 1.2 2.3 1.2 3.2 1.1 36.4 1.2-9.8 1.1 31.1 1.2-12.7 1.2-21.3 1.1-15.2 1.2-27.8 1.2-16.5 1.1 20.1 1.2 33.7 1.2 2.5 1.1-24.4 1.2 9.1 1.2-5 1.1 19.3 1.2 20.3 1.2 30.4 1.1 7.8 1.2-24.5 1.2-19.5 1.1-22.6 1.2-32.5 1.2-8.9 1.1 8.5 1.2 23.1 1.2-5.7 1.1 6.7 1.2-12.8 1.1 16.9 1.2 13.1 1.2-7.1 1.1 19.1 1.2 22.6 1.2-28 1.1-25.1 1.2-18.5 1.2-12.3 1.1 4.3 1.2 7.9 1.2 37 1.1-17 1.2-8.6 1.2-3.4 1.1 13.5 1.2 27.7 1.2 14.8 1.1-21.9 1.2-11.8 1.2-19.5 1.1-27.1 1.2-13.4 1.2-13 1.1-.1 1.2 .6 1.1-2.7 1.2 8.2 1.2-3.6 1.1 8.4 1.2-3.9 1.2-4.2 1.1-3.2 1.2-.6 1.2-1.4 1.1 0 1.2 1.4 1.2-.9 1.1 1.1 1.2 1 1.2 1.3 1.1 .7 1.2-1.4 1.2 4.5 1.1 9.9 1.2 .5 1.2-10.2 1.1-7 1.2 1.1 1.2-.2 1.1-.5 1.2-.4 1.1 .4 1.2 1.4 1.2 3.7 1.1 4.8 1.2-2.2 1.2-1.9 1.1-4.4 1.2-.6 1.2-2.6 1.1 3.6 1.2-1.1 1.2 .3 1.1-2.4 1.2 4.6 1.2-.8 1.1 7.4 1.2 11.6 1.2-13.2 1.1-8 1.2 1.2 1.2 2.6 1.1-2.5 1.2-.6 1.1 1 1.2-.4 1.2 9.4 1.1 6 1.2-6.4 1.2-4.6 1.1-6.3 1.2-.2 1.2 1.2 1.1 0 1.2 1.1 1.2 .6 1.1 5.1 1.2 9.1 1.2 1.7 1.1-14.8 1.2-2.1 1.2-1.7 1.1 4 1.2-3.1 1.2-1.7 1.1 1.5 1.2 .1 1.2 6.4 1.1 5.1 1.2-.8 1.1-7.5 1.2-2.9 1.2-1.4 1.1 1.3 1.2 .1 1.2 .4 1.1-.2 1.2 3.1 1.2-3.9 1.1 2.9 1.2-.5 1.2 9.8 1.1 7.8 1.2-12.5 1.2-7.4 1.1-.1 1.2-.2 1.2 .4 1.1-1.1 1.2 .8 1.2-1.7 1.1 2.4 1.2 .2 1.2-1.1 1.1 2.4 1.2 8.1 1.1 8.7 1.2-6.4 1.2-11.8 1.1 .2 1.2-.9 1.2-.6 1.1 1.4 1.2 3.1 1.2-3.6 1.1 6.6 1.2 10.9 1.2-7.1 1.1-8.3 1.2-1.9 1.2-2.1 1.1 2.1 1.2 5.6 1.2-6.8 1.1 .1 1.2 1.3 1.2 6.1 1.1 9.3 1.2-9 1.1-4.1 1.2 4.4 1.2-8.7 1.1 1.7 1.2 2.1 1.2-3.2 1.1 1 1.2 2.6 1.2 1.2 1.1 7.2 1.2 .1 1.2-2.9 1.1-8.6 1.2-.2 1.2-.7 1.1 1.1 1.2 1.3 1.2-1.5 1.1 .2 1.2-.3 1.2-.7 1.1 3.2 1.2 2.8 1.2 4.9 1.1 4.8 1.2-6.2 1.1-5.6 1.2-3 1.2 3.5 1.1-4.5 1.2 4.4 1.2-4.1 1.1 1.4 1.2 1.6 1.2 6.4 1.1 4.4 1.2-8.2 1.2-4.6 1.1-.7 1.2 .7 1.2-.1 1.1-.3 1.2-1.4 1.2 2.2 1.1 5.5 1.2 .6 1.2 9.5 1.1-3.3 1.2-8.3 1.2-4.8 1.1-1.1 1.2-.5 1.1 .5 1.2 1.4 1.2-1.8 1.1 10 1.2 15.7 1.2 31.8 1.1 19.7 1.2 11.1 1.2 25.9 1.1-22 1.2-23.6 1.2-13.6 1.1-8.2 1.2-9.4 1.2 18.3 1.1 19.2 1.2-12.1 1.2-5.8 1.1-1.9 1.2 2.9 1.2 7.6 1.1 12 1.2 14.8 1.2 16 1.1-30 1.2-10.3 1.1-21.8 1.2-14.7 1.2 14.5 1.1 9 1.2 34.7 1.2-12 1.1-3.3 1.2-10.9 1.2 11 1.1 29.3 1.2-.8 1.2 61.5 1.1-57.7 1.2 1.1 1.2-42 1.1-19.4 1.2-16.2 1.2 20.2 1.1 15.5 1.2 6.7 1.2-6.9 1.1-9 1.2 8 1.1 16.7 1.2-2.4 1.2 29.3 1.1 16.2 1.2-26.9 1.2-34.4 1.1 15.3 1.2-40.1 1.2-5.6 1.1 21.1 1.2 15.2 1.2 5 1.1-10.5 1.2 3.5 1.2 18.7 1.1-24.4 1.2 40.2 1.2 9.7 1.1-6.7 1.2-32.5 1.2-3.2 1.1-21 1.2-8.9 1.2-3.7 1.1 22.8 1.2 28.8 1.1-10 1.2-13 1.2-7.7 1.1 3.2 1.2 34.2 1.2 20.1 1.1 25 1.2-15.2 1.2-41.2 1.1-10.2 1.2-17.4 1.2-29 1.1 6.7 1.2 35.4 1.2 3 1.1-15.9 1.2-2.6 1.2-1.2 1.1 10.9 1.2 26.1 1.2-8.6 1.1 21.2 1.2 9.8 1.2-36.4 1.1-16.8 1.2-21 1.1-6.3 1.2 15.6 1.2 22.8 1.1-.6 1.2-1.5 1.2-10.4 1.1 2.7 1.2 20.8 0-80.8-1.2 0-1.1 0-1.2 0-1.2 0-1.1 0-1.2 0-1.2 0-1.1 0-1.2 0-1.1 0-1.2 0-1.2 0-1.1 0-1.2 0-1.2 0-1.1 0-1.2 0-1.2 0-1.1 0-1.2 0-1.2 0-1.1 0-1.2 0-1.2 0-1.1 0-1.2 0-1.2 0-1.1 0-1.2 0-1.2 0-1.1 0-1.2 0-1.2 0-1.1 0-1.2 0-1.1 0-1.2 0-1.2 0-1.1 0-1.2 0-1.2 0-1.1 0-1.2 0-1.2 0-1.1 0-1.2 0-1.2 0-1.1 0-1.2 0-1.2 0-1.1 0-1.2 0-1.2 0-1.1 0-1.2 0-1.2 0-1.1 0-1.2 0-1.2 0-1.1 0-1.2 0-1.1 0-1.2 0-1.2 0-1.1 0-1.2 0-1.2 0-1.1 0-1.2 0-1.2 0-1.1 0-1.2 0-1.2 0-1.1 0-1.2 0-1.2 0-1.1 0-1.2 0-1.2 0-1.1 0-1.2 0-1.2 0-1.1 0-1.2 0-1.1 0-1.2 0-1.2 0-1.1 0-1.2 0-1.2 0-1.1 0-1.2 0-1.2 0-1.1 0-1.2 0-1.2 0-1.1 0-1.2 0-1.2 0-1.1 0-1.2 0-1.2 0-1.1 0-1.2 0-1.2 0-1.1 0-1.2 0-1.2 0-1.1 0-1.2 0-1.1 0-1.2 0-1.2 0-1.1 0-1.2 0-1.2 0-1.1 0-1.2 0-1.2 0-1.1 0-1.2 0-1.2 0-1.1 0-1.2 0-1.2 0-1.1 0-1.2 0-1.2 0-1.1 0-1.2 0-1.2 0-1.1 0-1.2 0-1.2 0-1.1 0-1.2 0-1.1 0-1.2 0-1.2 0-1.1 0-1.2 0-1.2 0-1.1 0-1.2 0-1.2 0-1.1 0-1.2 0-1.2 0-1.1 0-1.2 0-1.2 0-1.1 0-1.2 0-1.2 0-1.1 0-1.2 0-1.2 0-1.1 0-1.2 0-1.2 0-1.1 0-1.2 0-1.1 0-1.2 0-1.2 0-1.1 0-1.2 0-1.2 0-1.1 0-1.2 0-1.2 0-1.1 0-1.2 0-1.2 0-1.1 0-1.2 0-1.2 0-1.1 0-1.2 0-1.2 0-1.1 0-1.2 0-1.2 0-1.1 0-1.2 0-1.1 0-1.2 0-1.2 0-1.1 0-1.2 0-1.2 0-1.1 0-1.2 0-1.2 0-1.1 0-1.2 0-1.2 0-1.1 0-1.2 0-1.2 0-1.1 0-1.2 0-1.2 0-1.1 0-1.2 0-1.2 0-1.1 0-1.2 0-1.2 0-1.1 0-1.2 0-1.1 0-1.2 0-1.2 0-1.1 0-1.2 0-1.2 0-1.1 0-1.2 0-1.2 0-1.1 0-1.2 0-1.2 0-1.1 0-1.2 0-1.2 0-1.1 0-1.2 0-1.2 0-1.1 0-1.2 0-1.2 0-1.1 0-1.2 0-1.2 0-1.1 0-1.2 0-1.1 0-1.2 0-1.2 0-1.1 0-1.2 0-1.2 0-1.1 0-1.2 0-1.2 0-1.1 0-1.2 0-1.2 0-1.1 0-1.2 0-1.2 0-1.1 0-1.2 0-1.2 0-1.1 0-1.2 0-1.2 0-1.1 0-1.2 0-1.1 0-1.2 0-1.2 0-1.1 0-1.2 0-1.2 0-1.1 0-1.2 0-1.2 0-1.1 0-1.2 0-1.2 0-1.1 0-1.2 0-1.2 0-1.1 0-1.2 0-1.2 0-1.1 0-1.2 0-1.2 0-1.1 0-1.2 0-1.2 0-1.1 0-1.2 0-1.1 0-1.2 0-1.2 0-1.1 0-1.2 0-1.2 0-1.1 0-1.2 0-1.2 0-1.1 0-1.2 0-1.2 0-1.1 0-1.2 0-1.2 0-1.1 0-1.2 0-1.2 0-1.1 0-1.2 0-1.2 0-1.1 0-1.2 0-1.2 0-1.1 0-1.2 0-1.1 0-1.2 0-1.2 0-1.1 0-1.2 0-1.2 0-1.1 0-1.2 0-1.2 0-1.1 0-1.2 0-1.2 0-1.1 0-1.2 0-1.2 0-1.1 0-1.2 0-1.2 0-1.1 0-1.2 0-1.2 0-1.1 0-1.2 0-1.2 0-1.1 0-1.2 0-1.1 0-1.2 0-1.2 0-1.1 0-1.2 0-1.2 0-1.1 0-1.2 0-1.2 0-1.1 0-1.2 0-1.2 0-1.1 0-1.2 0-1.2 0-1.1 0-1.2 0-1.2 0-1.1 0-1.2 0-1.2 0-1.1 0-1.2 0-1.1 0-1.2 0-1.2 0-1.1 0-1.2 0-1.2 0-1.1 0-1.2 0-1.2 0-1.1 0-1.2 0-1.2 0-1.1 0-1.2 0-1.2 0-1.1 0-1.2 0-1.2 0-1.1 0-1.2 0-1.2 0-1.1 0-1.2 0-1.2 0-1.1 0-1.2 0-1.1 0-1.2 0-1.2 0-1.1 0-1.2 0-1.2 0-1.1 0-1.2 0-1.2 0-1.1 0-1.2 0-1.2 0-1.1 0-1.2 0-1.2 0-1.1 0-1.2 0-1.2 0-1.1 0-1.2 0-1.2 0-1.1 0-1.2 0-1.2 0-1.1 0-1.2 0-1.1 0-1.2 0-1.2 0-1.1 0-1.2 0-1.2 0-1.1 0-1.2 0-1.2 0-1.1 0-1.2 0Z" fill="#F4D598" fill-opacity="0.1" clip-path="url(#c8)"/><path d="M664 644.3l1.2 0 1.1 0 1.2 0 1.2 0 1.1 0 1.2 0 1.2 0 1.1 0 1.2 0 1.2 0 1.1 0 1.2 0 1.1 0 1.2 0 1.2 27.8 1.1 14.2 1.2 10.9 1.2-4.2 1.1-16.7 1.2 9.2 1.2 16.7 1.1-1 1.2-1.5 1.2-1.5 1.1 7.7 1.2-3.3 1.2 22.4 1.1-7.4 1.2 16.2 1.2-6.4 1.1-.9 1.2-21 1.2-19.5 1.1-11 1.2 17.4 1.2 5.2 1.1 8.3 1.2-6.1 1.1 4 1.2-2.7 1.2 15.9 1.1 28.1 1.2 13.6 1.2-6.4 1.1-10.2 1.2-26.3 1.2-20.5 1.1-16 1.2-2.5 1.2 28.5 1.1 10.1 1.2 5.2 1.2-15.4 1.1-8.5 1.2 18.3 1.2 7.8 1.1 23 1.2 35.2 1.2-19.9 1.1-29.5 1.2-15.3 1.2-28.4 1.1-14.4 1.2 16.5 1.1 31.2 1.2 15.9 1.2-22.2 1.1-3.9 1.2-11 1.2 32.9 1.1 16 1.2-6.9 1.2 23 1.1 .1 1.2-30.9 1.2-18.5 1.1-24.1 1.2-15.2 1.2 22.4 1.1 16.5 1.2 20.1 1.2-18.5 1.1-2.6 1.2 7.2 1.2-2.7 1.1 9.6 1.2 32.3 1.1 10.9 1.2-6 1.2-37.4 1.1-17.8 1.2-24.9 1.2-8.3 1.1 16.9 1.2 18.2 1.2-5.3 1.1-7.1 1.2-5.6 1.2 7.1 1.1 18.2 1.2 12.7 1.2 13.3 1.1 4.8 1.2-15.4 1.2-17.9 1.1-18.2 1.2-22.6 1.2 6.4 1.1 21.7 1.2 8.7 1.2 2.6 1.1-8.4 1.2-1.8 1.1 6 1.2 17.4 1.2 46.2 1.1 8.8 1.2-30 1.2-4.3 1.1-22.3 1.2-32.3 1.2-20.6 1.1 12.4 1.2 24.1 1.2-7.5 1.1 4.8 1.2-3.2 1.2 2.2 1.1 12 1.2 3.8 1.2 38.9 1.1-8.2 1.2-26 1.2-19.3 1.1-29.7 1.2-20.9 1.2-9.2 1.1-1.6 1.2-.1 1.1 .6 1.2-1.1 1.2 .3 1.1 3.6 1.2 9.8 1.2 3.6 1.1-11.8 1.2-4.4 1.2-.4 1.1-.9 1.2 1.5 1.2-2 1.1 3.7 1.2 3.7 1.2 .1 1.1 4.6 1.2 1.4 1.2-7.3 1.1-3.5 1.2-.5 1.2 2.1 1.1-3.7 1.2-.8 1.2 1.6 1.1-1 1.2 2.8 1.1-2.8 1.2 2.9 1.2 5.4 1.1 9.1 1.2-1 1.2-13.5 1.1 2.1 1.2-4.5 1.2-.6 1.1 1.8 1.2-1 1.2 5.8 1.1-6.7 1.2 1.4 1.2 1.9 1.1 7 1.2 2.3 1.2-8.2 1.1 1.8 1.2-2.9 1.2 .4 1.1-1.4 1.2-.1 1.1 0 1.2 3.1 1.2 10.6 1.1-8.5 1.2-5.3 1.2-1.1 1.1-.5 1.2-1.1 1.2 1.5 1.1 4.5 1.2-4.7 1.2 1.4 1.1 .7 1.2 3.7 1.2 3.8 1.1 7.9 1.2-9.4 1.2-5.5 1.1-1.6 1.2 .7 1.2-.1 1.1-2.4 1.2-.3 1.2 3.2 1.1-1.9 1.2 3 1.1 4.4 1.2 3.8 1.2-5.2 1.1-4 1.2 .5 1.2-1.8 1.1-2 1.2 4.6 1.2-3.4 1.1 2.2 1.2-2 1.2 .7 1.1 3.7 1.2 7 1.2 3.9 1.1-9.3 1.2-3.7 1.2 3.3 1.1-6.1 1.2 1.8 1.2-2.6 1.1 .1 1.2-.4 1.2 6 1.1-3.2 1.2 9.6 1.1 10.7 1.2-12.2 1.2-7.6 1.1-1.5 1.2-1.3 1.2 3.6 1.1-2.6 1.2 0 1.2 4.4 1.1 9.6 1.2 11.6 1.2-15.2 1.1-6.4 1.2-3.2 1.2-1.6 1.1 3.1 1.2-2.8 1.2 .8 1.1 .1 1.2 1.8 1.2-.2 1.1-1.8 1.2 1.9 1.1 3.8 1.2 3.9 1.2 2.2 1.1-9.7 1.2-2.4 1.2 .4 1.1-1.5 1.2 2.4 1.2-2.5 1.1 6.1 1.2-.5 1.2-3.5 1.1 4.6 1.2 9.7 1.2-5 1.1-7.2 1.2-.6 1.2-3.5 1.1 1.9 1.2-1.4 1.2 1.9 1.1-.6 1.2 17.4 1.2 6.5 1.1-15.3 1.2-4.6 1.1-3.6 1.2 4.2 1.2-3.6 1.1-2.2 1.2-.9 1.2 1.6 1.1 1.4 1.2-.4 1.2 .9 1.1 .2 1.2 5.7 1.2 6.2 1.1-7.5 1.2-5.2 1.2-.7 1.1-1.4 1.2 1.4 1.2 3.3 1.1 4.1 1.2 5.1 1.2-8.7 1.1 2.5 1.2-2.7 1.2-1.6 1.1-1.6 1.2-1.5 1.1 2.4 1.2 1.4 1.2-3.2 1.1 9.7 1.2 22.8 1.2 40.1 1.1 61.8 1.2-2.8 1.2-4.8 1.1-21.7 1.2-23.5 1.2-26 1.1-26.5 1.2 9.3 1.2 14.4 1.1 20.2 1.2-26.7 1.2 4.8 1.1 6.6 1.2 5.8 1.2 11.2 1.1 21.1 1.2 11 1.2-12 1.1-12.3 1.2-16.8 1.1-26.6 1.2-6.2 1.2 9.7 1.1 24.6 1.2 10.4 1.2-19.6 1.1 3.2 1.2 5.1 1.2-6.5 1.1 19.3 1.2 20 1.2 10.5 1.1-25.5 1.2 17.7 1.2-36 1.1-27.6 1.2-4.6 1.2 17.3 1.1 13.9 1.2 4.3 1.2-6.2 1.1-13.8 1.2 13.6 1.1 2.8 1.2 35.2 1.2 34.6 1.1 4.1 1.2-47.8 1.2-30 1.1-13.4 1.2-21.6 1.2 12.2 1.1 17.4 1.2 14.9 1.2-16.4 1.1 6.3 1.2-10.3 1.2 13.4 1.1 15.6 1.2 31.8 1.2 7.9 1.1-4.4 1.2-26.7 1.2-21.4 1.1-26.8 1.2-17.3 1.2 15.5 1.1 27.2 1.2 5.5 1.1-16.7 1.2-8.9 1.2-1.3 1.1 30.3 1.2 4.8 1.2 13.9 1.1 12.4 1.2 14.6 1.2-59.4 1.1 7.7 1.2-30.6 1.2-10.1 1.1 24.9 1.2 39.2 1.2-14.8 1.1-3.3 1.2-18.7 1.2-.6 1.1 39.7 1.2 22.6 1.2-8.3 1.1 17.5 1.2-17.4 1.2-9.3 1.1-25.7 1.2-42.6 1.1 4.1 1.2 22.7 1.2 24.6 1.1-13.4 1.2 .2 1.2-21.3 1.1 26 1.2-4.7 0-71.8-1.2 0-1.1 0-1.2 0-1.2 0-1.1 0-1.2 0-1.2 0-1.1 0-1.2 0-1.1 0-1.2 0-1.2 0-1.1 0-1.2 0-1.2 0-1.1 0-1.2 0-1.2 0-1.1 0-1.2 0-1.2 0-1.1 0-1.2 0-1.2 0-1.1 0-1.2 0-1.2 0-1.1 0-1.2 0-1.2 0-1.1 0-1.2 0-1.2 0-1.1 0-1.2 0-1.1 0-1.2 0-1.2 0-1.1 0-1.2 0-1.2 0-1.1 0-1.2 0-1.2 0-1.1 0-1.2 0-1.2 0-1.1 0-1.2 0-1.2 0-1.1 0-1.2 0-1.2 0-1.1 0-1.2 0-1.2 0-1.1 0-1.2 0-1.2 0-1.1 0-1.2 0-1.1 0-1.2 0-1.2 0-1.1 0-1.2 0-1.2 0-1.1 0-1.2 0-1.2 0-1.1 0-1.2 0-1.2 0-1.1 0-1.2 0-1.2 0-1.1 0-1.2 0-1.2 0-1.1 0-1.2 0-1.2 0-1.1 0-1.2 0-1.1 0-1.2 0-1.2 0-1.1 0-1.2 0-1.2 0-1.1 0-1.2 0-1.2 0-1.1 0-1.2 0-1.2 0-1.1 0-1.2 0-1.2 0-1.1 0-1.2 0-1.2 0-1.1 0-1.2 0-1.2 0-1.1 0-1.2 0-1.2 0-1.1 0-1.2 0-1.1 0-1.2 0-1.2 0-1.1 0-1.2 0-1.2 0-1.1 0-1.2 0-1.2 0-1.1 0-1.2 0-1.2 0-1.1 0-1.2 0-1.2 0-1.1 0-1.2 0-1.2 0-1.1 0-1.2 0-1.2 0-1.1 0-1.2 0-1.2 0-1.1 0-1.2 0-1.1 0-1.2 0-1.2 0-1.1 0-1.2 0-1.2 0-1.1 0-1.2 0-1.2 0-1.1 0-1.2 0-1.2 0-1.1 0-1.2 0-1.2 0-1.1 0-1.2 0-1.2 0-1.1 0-1.2 0-1.2 0-1.1 0-1.2 0-1.2 0-1.1 0-1.2 0-1.1 0-1.2 0-1.2 0-1.1 0-1.2 0-1.2 0-1.1 0-1.2 0-1.2 0-1.1 0-1.2 0-1.2 0-1.1 0-1.2 0-1.2 0-1.1 0-1.2 0-1.2 0-1.1 0-1.2 0-1.2 0-1.1 0-1.2 0-1.1 0-1.2 0-1.2 0-1.1 0-1.2 0-1.2 0-1.1 0-1.2 0-1.2 0-1.1 0-1.2 0-1.2 0-1.1 0-1.2 0-1.2 0-1.1 0-1.2 0-1.2 0-1.1 0-1.2 0-1.2 0-1.1 0-1.2 0-1.2 0-1.1 0-1.2 0-1.1 0-1.2 0-1.2 0-1.1 0-1.2 0-1.2 0-1.1 0-1.2 0-1.2 0-1.1 0-1.2 0-1.2 0-1.1 0-1.2 0-1.2 0-1.1 0-1.2 0-1.2 0-1.1 0-1.2 0-1.2 0-1.1 0-1.2 0-1.2 0-1.1 0-1.2 0-1.1 0-1.2 0-1.2 0-1.1 0-1.2 0-1.2 0-1.1 0-1.2 0-1.2 0-1.1 0-1.2 0-1.2 0-1.1 0-1.2 0-1.2 0-1.1 0-1.2 0-1.2 0-1.1 0-1.2 0-1.2 0-1.1 0-1.2 0-1.1 0-1.2 0-1.2 0-1.1 0-1.2 0-1.2 0-1.1 0-1.2 0-1.2 0-1.1 0-1.2 0-1.2 0-1.1 0-1.2 0-1.2 0-1.1 0-1.2 0-1.2 0-1.1 0-1.2 0-1.2 0-1.1 0-1.2 0-1.2 0-1.1 0-1.2 0-1.1 0-1.2 0-1.2 0-1.1 0-1.2 0-1.2 0-1.1 0-1.2 0-1.2 0-1.1 0-1.2 0-1.2 0-1.1 0-1.2 0-1.2 0-1.1 0-1.2 0-1.2 0-1.1 0-1.2 0-1.2 0-1.1 0-1.2 0-1.2 0-1.1 0-1.2 0-1.1 0-1.2 0-1.2 0-1.1 0-1.2 0-1.2 0-1.1 0-1.2 0-1.2 0-1.1 0-1.2 0-1.2 0-1.1 0-1.2 0-1.2 0-1.1 0-1.2 0-1.2 0-1.1 0-1.2 0-1.2 0-1.1 0-1.2 0-1.2 0-1.1 0-1.2 0-1.1 0-1.2 0-1.2 0-1.1 0-1.2 0-1.2 0-1.1 0-1.2 0-1.2 0-1.1 0-1.2 0-1.2 0-1.1 0-1.2 0-1.2 0-1.1 0-1.2 0-1.2 0-1.1 0-1.2 0-1.2 0-1.1 0-1.2 0-1.1 0-1.2 0-1.2 0-1.1 0-1.2 0-1.2 0-1.1 0-1.2 0-1.2 0-1.1 0-1.2 0-1.2 0-1.1 0-1.2 0-1.2 0-1.1 0-1.2 0-1.2 0-1.1 0-1.2 0-1.2 0-1.1 0-1.2 0-1.2 0-1.1 0-1.2 0-1.1 0-1.2 0-1.2 0-1.1 0-1.2 0-1.2 0-1.1 0-1.2 0-1.2 0-1.1 0-1.2 0-1.2 0-1.1 0-1.2 0-1.2 0-1.1 0-1.2 0-1.2 0-1.1 0-1.2 0-1.2 0-1.1 0-1.2 0-1.2 0-1.1 0-1.2 0-1.1 0-1.2 0-1.2 0-1.1 0-1.2 0-1.2 0-1.1 0-1.2 0-1.2 0-1.1 0-1.2 0Z" fill="#70DBED" fill-opacity="0.1" clip-path="url(#c8)"/><path d="M664 644.3l1.2 0 1.1 0 1.2 0 1.2 0 1.1 0 1.2 0 1.2 0 1.1 0 1.2 0 1.2 0 1.1 0 1.2 0 1.1 0 1.2 0 1.2 29.5 1.1 16 1.2 .4 1.2-5.7 1.1 5.9 1.2 13 1.2 27.1 1.1-5.4 1.2-20.9 1.2-4.4 1.1 31.1 1.2 3.4 1.2 24.3 1.1 32.2 1.2-41.5 1.2-21.3 1.1 2.7 1.2-38.1 1.2-15.2 1.1 21.4 1.2 11.4 1.2-.3 1.1-3.1 1.2 10.6 1.1-10.7 1.2 44.2 1.2 3 1.1 5.2 1.2 20.7 1.2-30.9 1.1-23.2 1.2-15.7 1.2-21.4 1.1-14.9 1.2 24.3 1.2 21.9 1.1 6.2 1.2-16.4 1.2-4.7 1.1 16.7 1.2-.7 1.2 28.5 1.1 31.7 1.2-21.1 1.2 .3 1.1-43.4 1.2-7.8 1.2-29.9 1.1 2.3 1.2 28 1.1 14.9 1.2-3.6 1.2-9 1.1-18.1 1.2 21.2 1.2 19.9 1.1 12.8 1.2 23.4 1.2 5.7 1.1-28.2 1.2-20.1 1.2-33.3 1.1-17.6 1.2 17.3 1.2 4.7 1.1 34.3 1.2-7.8 1.2-35.2 1.1 16.1 1.2 17.7 1.2 25.2 1.1 .1 1.2 45.7 1.1-60.5 1.2 6.1 1.2-21.8 1.1-11.6 1.2-34.5 1.2 11 1.1 10.9 1.2 8.6 1.2 9.5 1.1-23.7 1.2 11.7 1.2 38.1 1.1-.2 1.2-7.5 1.2 6.5 1.1-27.2 1.2 4.5 1.2-12.5 1.1-20.6 1.2-3.5 1.2 8.7 1.1 21.2 1.2 21.3 1.2-21.1 1.1-8.7 1.2-.6 1.1 4.5 1.2 41.5 1.2 3.5 1.1 25.4 1.2-17.1 1.2-24.8 1.1-36.6 1.2-20.6 1.2 7 1.1 25.2 1.2 6.9 1.2 3.2 1.1-5.6 1.2 5.5 1.2-14 1.1 38.6 1.2 4.2 1.2 13.9 1.1-1 1.2-44.5 1.2-18.1 1.1-27.5 1.2-15.9 1.2-6.8 1.1 0 1.2 1 1.1-.3 1.2-2.1 1.2 1.1 1.1 4.5 1.2 5.8 1.2 5.4 1.1-6.8 1.2-7.6 1.2 2.2 1.1-.9 1.2-3.5 1.2 1.3 1.1-.9 1.2-.2 1.2 3.1 1.1 2.8 1.2 12.6 1.2 18.7 1.1-22.2 1.2-13.2 1.2 4.1 1.1-4.2 1.2 .3 1.2 .6 1.1-3 1.2 1.5 1.1 2.1 1.2 5 1.2 9.6 1.1 .8 1.2-9.8 1.2-5.9 1.1-2.1 1.2-.9 1.2 2.4 1.1-2.8 1.2 2.9 1.2 1 1.1 9.8 1.2 16.1 1.2-15.5 1.1-10.8 1.2-1.7 1.2 1.3 1.1-1.1 1.2 1.6 1.2-1.4 1.1 .2 1.2 3.3 1.1-3.9 1.2 2.1 1.2 18.4 1.1 8.7 1.2-17.4 1.2-7.5 1.1-3.6 1.2-2 1.2 .3 1.1-.4 1.2 2.3 1.2-.7 1.1 9.1 1.2 18.7 1.2-8 1.1-14.2 1.2-6 1.2 2.2 1.1-3.7 1.2 .9 1.2 1.1 1.1 1.2 1.2-1.1 1.2-1.2 1.1 2 1.2 .5 1.1 2.5 1.2 11 1.2 .4 1.1-13 1.2 .2 1.2-1.7 1.1-1.2 1.2-1.5 1.2 0 1.1 6.6 1.2 1.2 1.2 6.5 1.1 20.2 1.2-10.8 1.2-19.9 1.1 1 1.2-1.6 1.2 2.6 1.1-2.1 1.2 0 1.2-2.7 1.1 1.7 1.2-1.1 1.2 0 1.1 2.2 1.2 9.7 1.1 12.1 1.2-8.7 1.2-12.3 1.1-2.9 1.2 .2 1.2-.6 1.1 1.2 1.2 3 1.2-2 1.1 6.8 1.2 7.1 1.2-4.2 1.1-10.8 1.2 1.7 1.2-2.8 1.1-.9 1.2 1.5 1.2 .1 1.1-.6 1.2 2.3 1.2 9.1 1.1 4.6 1.2-9.8 1.1-.2 1.2-5.9 1.2-.9 1.1 .6 1.2-.4 1.2 2.5 1.1-3.2 1.2 3.2 1.2 .1 1.1 6.5 1.2 5.6 1.2-6.1 1.1-6.3 1.2-1.3 1.2 .1 1.1-.2 1.2 1.2 1.2-2.3 1.1 2.7 1.2 .3 1.2 12.1 1.1 16 1.2-18.3 1.2-10.4 1.1-1.8 1.2 0 1.1 3.9 1.2-4.8 1.2 5.5 1.1 .3 1.2-2.8 1.2 6 1.1 19.2 1.2-4.4 1.2-17.8 1.1-.1 1.2-2.7 1.2-.3 1.1-1.8 1.2 .4 1.2-1.3 1.1 1.2 1.2-.1 1.2 0 1.1 4.6 1.2 10.2 1.2 9.5 1.1-16.2 1.2-5.1 1.2-2.9 1.1-.6 1.2 .4 1.1-1.3 1.2 4 1.2-.7 1.1 11.2 1.2 20 1.2 15.5 1.1 41.6 1.2 1.8 1.2-9 1.1 1.7 1.2-38.8 1.2-13.6 1.1 4.3 1.2 14.6 1.2 36.1 1.1-18.4 1.2-8.2 1.2-18.2 1.1 24 1.2 4.1 1.2 35.2 1.1-8.3 1.2-6.9 1.2-15.8 1.1-7.5 1.2-21.7 1.1-18 1.2 18.1 1.2 14.3 1.1 8.3 1.2-5.4 1.2-6.1 1.1 8.9 1.2 8.9 1.2 11.6 1.1 5.8 1.2 34.7 1.2-36.3 1.1 2.5 1.2-28.6 1.2-26.1 1.1-5.6 1.2 7.9 1.2 16.7 1.1 12 1.2-11.1 1.2-3.1 1.1 2.2 1.2 13.3 1.1-5.6 1.2 30.7 1.2 5.3 1.1-2.6 1.2-15.3 1.2-29.5 1.1-15.6 1.2-5.6 1.2 8.7 1.1 31.5 1.2-28.8 1.2 25.1 1.1-15.2 1.2 6.7 1.2-1.1 1.1 54.9 1.2-15.7 1.2 24 1.1-21.1 1.2-36.9 1.2-13.6 1.1-18.3 1.2-.7 1.2 26.8 1.1 10.3 1.2 19.7 1.1-21.4 1.2-2.1 1.2 7.3 1.1 25 1.2 31.8 1.2-6.3 1.1 11.1 1.2-31.1 1.2-18.9 1.1-26.6 1.2-29.9 1.2 19.8 1.1 13.1 1.2-10.7 1.2 20 1.1-7.5 1.2-4.8 1.2 7.1 1.1 8.2 1.2 27 1.2-9.2 1.1 4.9 1.2-18.2 1.2-21.5 1.1-15.7 1.2-8.7 1.1 18.7 1.2 10 1.2 8 1.1-12 1.2 1.4 1.2-7.3 1.1 8.9 1.2 33.7 0-95.4-1.2 0-1.1 0-1.2 0-1.2 0-1.1 0-1.2 0-1.2 0-1.1 0-1.2 0-1.1 0-1.2 0-1.2 0-1.1 0-1.2 0-1.2 0-1.1 0-1.2 0-1.2 0-1.1 0-1.2 0-1.2 0-1.1 0-1.2 0-1.2 0-1.1 0-1.2 0-1.2 0-1.1 0-1.2 0-1.2 0-1.1 0-1.2 0-1.2 0-1.1 0-1.2 0-1.1 0-1.2 0-1.2 0-1.1 0-1.2 0-1.2 0-1.1 0-1.2 0-1.2 0-1.1 0-1.2 0-1.2 0-1.1 0-1.2 0-1.2 0-1.1 0-1.2 0-1.2 0-1.1 0-1.2 0-1.2 0-1.1 0-1.2 0-1.2 0-1.1 0-1.2 0-1.1 0-1.2 0-1.2 0-1.1 0-1.2 0-1.2 0-1.1 0-1.2 0-1.2 0-1.1 0-1.2 0-1.2 0-1.1 0-1.2 0-1.2 0-1.1 0-1.2 0-1.2 0-1.1 0-1.2 0-1.2 0-1.1 0-1.2 0-1.1 0-1.2 0-1.2 0-1.1 0-1.2 0-1.2 0-1.1 0-1.2 0-1.2 0-1.1 0-1.2 0-1.2 0-1.1 0-1.2 0-1.2 0-1.1 0-1.2 0-1.2 0-1.1 0-1.2 0-1.2 0-1.1 0-1.2 0-1.2 0-1.1 0-1.2 0-1.1 0-1.2 0-1.2 0-1.1 0-1.2 0-1.2 0-1.1 0-1.2 0-1.2 0-1.1 0-1.2 0-1.2 0-1.1 0-1.2 0-1.2 0-1.1 0-1.2 0-1.2 0-1.1 0-1.2 0-1.2 0-1.1 0-1.2 0-1.2 0-1.1 0-1.2 0-1.1 0-1.2 0-1.2 0-1.1 0-1.2 0-1.2 0-1.1 0-1.2 0-1.2 0-1.1 0-1.2 0-1.2 0-1.1 0-1.2 0-1.2 0-1.1 0-1.2 0-1.2 0-1.1 0-1.2 0-1.2 0-1.1 0-1.2 0-1.2 0-1.1 0-1.2 0-1.1 0-1.2 0-1.2 0-1.1 0-1.2 0-1.2 0-1.1 0-1.2 0-1.2 0-1.1 0-1.2 0-1.2 0-1.1 0-1.2 0-1.2 0-1.1 0-1.2 0-1.2 0-1.1 0-1.2 0-1.2 0-1.1 0-1.2 0-1.1 0-1.2 0-1.2 0-1.1 0-1.2 0-1.2 0-1.1 0-1.2 0-1.2 0-1.1 0-1.2 0-1.2 0-1.1 0-1.2 0-1.2 0-1.1 0-1.2 0-1.2 0-1.1 0-1.2 0-1.2 0-1.1 0-1.2 0-1.2 0-1.1 0-1.2 0-1.1 0-1.2 0-1.2 0-1.1 0-1.2 0-1.2 0-1.1 0-1.2 0-1.2 0-1.1 0-1.2 0-1.2 0-1.1 0-1.2 0-1.2 0-1.1 0-1.2 0-1.2 0-1.1 0-1.2 0-1.2 0-1.1 0-1.2 0-1.2 0-1.1 0-1.2 0-1.1 0-1.2 0-1.2 0-1.1 0-1.2 0-1.2 0-1.1 0-1.2 0-1.2 0-1.1 0-1.2 0-1.2 0-1.1 0-1.2 0-1.2 0-1.1 0-1.2 0-1.2 0-1.1 0-1.2 0-1.2 0-1.1 0-1.2 0-1.1 0-1.2 0-1.2 0-1.1 0-1.2 0-1.2 0-1.1 0-1.2 0-1.2 0-1.1 0-1.2 0-1.2 0-1.1 0-1.2 0-1.2 0-1.1 0-1.2 0-1.2 0-1.1 0-1.2 0-1.2 0-1.1 0-1.2 0-1.2 0-1.1 0-1.2 0-1.1 0-1.2 0-1.2 0-1.1 0-1.2 0-1.2 0-1.1 0-1.2 0-1.2 0-1.1 0-1.2 0-1.2 0-1.1 0-1.2 0-1.2 0-1.1 0-1.2 0-1.2 0-1.1 0-1.2 0-1.2 0-1.1 0-1.2 0-1.2 0-1.1 0-1.2 0-1.1 0-1.2 0-1.2 0-1.1 0-1.2 0-1.2 0-1.1 0-1.2 0-1.2 0-1.1 0-1.2 0-1.2 0-1.1 0-1.2 0-1.2 0-1.1 0-1.2 0-1.2 0-1.1 0-1.2 0-1.2 0-1.1 0-1.2 0-1.2 0-1.1 0-1.2 0-1.1 0-1.2 0-1.2 0-1.1 0-1.2 0-1.2 0-1.1 0-1.2 0-1.2 0-1.1 0-1.2 0-1.2 0-1.1 0-1.2 0-1.2 0-1.1 0-1.2 0-1.2 0-1.1 0-1.2 0-1.2 0-1.1 0-1.2 0-1.1 0-1.2 0-1.2 0-1.1 0-1.2 0-1.2 0-1.1 0-1.2 0-1.2 0-1.1 0-1.2 0-1.2 0-1.1 0-1.2 0-1.2 0-1.1 0-1.2 0-1.2 0-1.1 0-1.2 0-1.2 0-1.1 0-1.2 0-1.2 0-1.1 0-1.2 0-1.1 0-1.2 0-1.2 0-1.1 0-1.2 0-1.2 0-1.1 0-1.2 0-1.2 0-1.1 0-1.2 0-1.2 0-1.1 0-1.2 0-1.2 0-1.1 0-1.2 0-1.2 0-1.1 0-1.2 0-1.2 0-1.1 0-1.2 0-1.2 0-1.1 0-1.2 0-1.1 0-1.2 0-1.2 0-1.1 0-1.2 0-1.2 0-1.1 0-1.2 0-1.2 0-1.1 0-1.2 0Z" fill="#F9BA8F" fill-opacity="0.1" clip-path="url(#c8)"/><path d="M664 644.3l1.2 0 1.1 0 1.2 0 1.2 0 1.1 0 1.2 0 1.2 0 1.1 0 1.2 0 1.2 0 1.1 0 1.2 0 1.1 0 1.2 0 1.2 21.5 1.1 21.4 1.2 .2 1.2-7.5 1.1 5.9 1.2 1.3 1.2 23.1 1.1-.3 1.2 6 1.2-19.5 1.1 25.9 1.2 18.1 1.2 9 1.1 18.5 1.2-7 1.2-32.2 1.1-6.9 1.2-26.7 1.2-16.5 1.1-.2 1.2 19.8 1.2 1.9 1.1-1.1 1.2-.8 1.1-8.6 1.2 12.6 1.2 14.4 1.1-1.2 1.2 35.6 1.2-21.5 1.1-7.5 1.2-13 1.2-19.3 1.1-21.4 1.2 19.9 1.2 17.8 1.1-.6 1.2-6.2 1.2-9.5 1.1 8.7 1.2 13 1.2 14.9 1.1-1.5 1.2 33.9 1.2-44 1.1-4.8 1.2-3.1 1.2-19.5 1.1-17 1.2 23 1.1 5.6 1.2 7.7 1.2-8.1 1.1-3.3 1.2 14.9 1.2 7.4 1.1 15.1 1.2 24.5 1.2-33.8 1.1 3.1 1.2-13 1.2-26 1.1-8.6 1.2 7.9 1.2 24.2 1.1 3.3 1.2 4.8 1.2-24.9 1.1 20.9 1.2 9.9 1.2-2.1 1.1 23.3 1.2 19 1.1-9.1 1.2-1.4 1.2-27.2 1.1-38.8 1.2-17.4 1.2 18.8 1.1 28.2 1.2 8.8 1.2-17.3 1.1-9.1 1.2 4.6 1.2 3.8 1.1 22 1.2 27.1 1.2 18.9 1.1-34.8 1.2-18.2 1.2-32.1 1.1-3.6 1.2-19.2 1.2 31.9 1.1 24.6 1.2-7.5 1.2-7.2 1.1-15.4 1.2 29.1 1.1 20.5 1.2 12.3 1.2 12.9 1.1-2.2 1.2-33.8 1.2 2.5 1.1-25.6 1.2-31.9 1.2-1.8 1.1 15.3 1.2 11.1 1.2-2.2 1.1-4.2 1.2 1.6 1.2 12.8 1.1 9.4 1.2 8.9 1.2 26.2 1.1-5.1 1.2-31.7 1.2-26.7 1.1-23.4 1.2-15.2 1.2-6.7 1.1-1.8 1.2 3.8 1.1-3.1 1.2 1.1 1.2 2.5 1.1 5.4 1.2 15.5 1.2-13.7 1.1-9.2 1.2-1 1.2-1.4 1.1 3 1.2 1.9 1.2-3.7 1.1 3.6 1.2 .2 1.2 8.5 1.1 2.1 1.2-10 1.2-2.7 1.1-2.7 1.2 .7 1.2 3.4 1.1-2.2 1.2 4.3 1.2-6.7 1.1 5.1 1.2-2.7 1.1 7 1.2 8.6 1.2-4.5 1.1-5.1 1.2-1.4 1.2-5.9 1.1 1.5 1.2-.2 1.2-.8 1.1-.8 1.2-1 1.2 3.3 1.1-.4 1.2 6.9 1.2 14.9 1.1-3.1 1.2-15.5 1.2-3.2 1.1 1.1 1.2-1.3 1.2-1.8 1.1 1.5 1.2 1 1.1-2.5 1.2 4 1.2-1.8 1.1 3.2 1.2 4.2 1.2 13.3 1.1-12.9 1.2-7.6 1.2 1.6 1.1-3.2 1.2-.7 1.2 1 1.1 3.9 1.2 5.8 1.2 17.9 1.1-13.5 1.2-12 1.2-.3 1.1-2.1 1.2-1.6 1.2-.1 1.1 5.2 1.2-2.3 1.2-1.4 1.1-1.5 1.2 .7 1.1 5 1.2 1.1 1.2 11.9 1.1-4.4 1.2-5.3 1.2-5.4 1.1-2.9 1.2-.4 1.2 2.2 1.1-.4 1.2 3 1.2 19.2 1.1 .2 1.2-16.1 1.2-6.6 1.1 3 1.2-.8 1.2 1.8 1.1-5.5 1.2 2.5 1.2-.6 1.1 .4 1.2 1.5 1.2 3.4 1.1 14 1.2-5 1.1-7 1.2-7.7 1.2 1.9 1.1-3.4 1.2 .5 1.2 .5 1.1 .8 1.2 1.4 1.2 5.7 1.1 12.8 1.2-10.8 1.2-8.4 1.1 1.5 1.2-1.3 1.2-1.3 1.1 .1 1.2 .2 1.2 3.4 1.1-2.2 1.2 5 1.2 9.4 1.1-8.4 1.2-7 1.1 0 1.2-1.8 1.2 1.5 1.1-1.2 1.2 .1 1.2 1.1 1.1-.2 1.2 3.2 1.2-.8 1.1 1.4 1.2 11 1.2 8.6 1.1-16.1 1.2-2.8 1.2 0 1.1-5.2 1.2 1.9 1.2 .5 1.1-2.9 1.2 3.4 1.2 .2 1.1 11.2 1.2 13.7 1.2-16.3 1.1-10.7 1.2 2.4 1.1-2 1.2 .6 1.2-.2 1.1-.5 1.2 2.2 1.2-4.1 1.1 .9 1.2 4.4 1.2-2.5 1.1 10.3 1.2 16.4 1.2-10 1.1-16.4 1.2 1.4 1.2-1.7 1.1-.2 1.2-2.1 1.2 1.1 1.1 9.7 1.2 11.3 1.2-10.7 1.1-4.5 1.2-1.1 1.2-4.3 1.1-1.9 1.2 2.2 1.1 1.1 1.2-3 1.2-1.1 1.1 12.4 1.2 29.9 1.2 39.8 1.1 41.3 1.2 5.2 1.2-21.2 1.1-11.1 1.2-32.8 1.2-20.6 1.1-7.7 1.2 20.5 1.2 2.2 1.1 1.2 1.2-5.9 1.2-9.3 1.1 19.9 1.2 14.5 1.2-1.5 1.1 27 1.2 5.8 1.2-26.3 1.1-20.2 1.2-8.8 1.1-24.6 1.2 22.9 1.2 13.4 1.1 20.4 1.2-22.1 1.2 11.9 1.1-20.8 1.2 12.1 1.2-4.7 1.1 46.4 1.2-5.1 1.2-12.2 1.1 2 1.2-35.8 1.2-15.9 1.1-11.6 1.2 22.7 1.2 4.9 1.1 8.9 1.2-1.8 1.2 3.2 1.1-3 1.2 1.8 1.1 16.8 1.2 35 1.2 15.5 1.1-24.3 1.2-43.6 1.2-5.4 1.1-18.6 1.2-12 1.2 9.5 1.1 22.9 1.2 4.4 1.2 10.9 1.1-26.8 1.2 8.1 1.2 4.9 1.1 27.2 1.2-5.4 1.2 13.5 1.1-35.2 1.2 1.6 1.2-7.8 1.1-20.4 1.2-3.2 1.2 13.6 1.1 19.4 1.2-5 1.1-6.2 1.2-2.9 1.2 30.4 1.1-20.4 1.2 25.6 1.2 17.5 1.1-7.5 1.2-13.6 1.2-22.9 1.1-16.2 1.2-22.1 1.2 18.7 1.1 21 1.2 14.4 1.2-15.1 1.1-18.5 1.2 11.1 1.2 .3 1.1 20.6 1.2 10.2 1.2-3.5 1.1 9.6 1.2-26.2 1.2-9.6 1.1-14.3 1.2-12.9 1.1 15.8 1.2 19.5 1.2 14.2 1.1-23 1.2-6 1.2-5.7 1.1 22 1.2 10 0-77.8-1.2 0-1.1 0-1.2 0-1.2 0-1.1 0-1.2 0-1.2 0-1.1 0-1.2 0-1.1 0-1.2 0-1.2 0-1.1 0-1.2 0-1.2 0-1.1 0-1.2 0-1.2 0-1.1 0-1.2 0-1.2 0-1.1 0-1.2 0-1.2 0-1.1 0-1.2 0-1.2 0-1.1 0-1.2 0-1.2 0-1.1 0-1.2 0-1.2 0-1.1 0-1.2 0-1.1 0-1.2 0-1.2 0-1.1 0-1.2 0-1.2 0-1.1 0-1.2 0-1.2 0-1.1 0-1.2 0-1.2 0-1.1 0-1.2 0-1.2 0-1.1 0-1.2 0-1.2 0-1.1 0-1.2 0-1.2 0-1.1 0-1.2 0-1.2 0-1.1 0-1.2 0-1.1 0-1.2 0-1.2 0-1.1 0-1.2 0-1.2 0-1.1 0-1.2 0-1.2 0-1.1 0-1.2 0-1.2 0-1.1 0-1.2 0-1.2 0-1.1 0-1.2 0-1.2 0-1.1 0-1.2 0-1.2 0-1.1 0-1.2 0-1.1 0-1.2 0-1.2 0-1.1 0-1.2 0-1.2 0-1.1 0-1.2 0-1.2 0-1.1 0-1.2 0-1.2 0-1.1 0-1.2 0-1.2 0-1.1 0-1.2 0-1.2 0-1.1 0-1.2 0-1.2 0-1.1 0-1.2 0-1.2 0-1.1 0-1.2 0-1.1 0-1.2 0-1.2 0-1.1 0-1.2 0-1.2 0-1.1 0-1.2 0-1.2 0-1.1 0-1.2 0-1.2 0-1.1 0-1.2 0-1.2 0-1.1 0-1.2 0-1.2 0-1.1 0-1.2 0-1.2 0-1.1 0-1.2 0-1.2 0-1.1 0-1.2 0-1.1 0-1.2 0-1.2 0-1.1 0-1.2 0-1.2 0-1.1 0-1.2 0-1.2 0-1.1 0-1.2 0-1.2 0-1.1 0-1.2 0-1.2 0-1.1 0-1.2 0-1.2 0-1.1 0-1.2 0-1.2 0-1.1 0-1.2 0-1.2 0-1.1 0-1.2 0-1.1 0-1.2 0-1.2 0-1.1 0-1.2 0-1.2 0-1.1 0-1.2 0-1.2 0-1.1 0-1.2 0-1.2 0-1.1 0-1.2 0-1.2 0-1.1 0-1.2 0-1.2 0-1.1 0-1.2 0-1.2 0-1.1 0-1.2 0-1.1 0-1.2 0-1.2 0-1.1 0-1.2 0-1.2 0-1.1 0-1.2 0-1.2 0-1.1 0-1.2 0-1.2 0-1.1 0-1.2 0-1.2 0-1.1 0-1.2 0-1.2 0-1.1 0-1.2 0-1.2 0-1.1 0-1.2 0-1.2 0-1.1 0-1.2 0-1.1 0-1.2 0-1.2 0-1.1 0-1.2 0-1.2 0-1.1 0-1.2 0-1.2 0-1.1 0-1.2 0-1.2 0-1.1 0-1.2 0-1.2 0-1.1 0-1.2 0-1.2 0-1.1 0-1.2 0-1.2 0-1.1 0-1.2 0-1.2 0-1.1 0-1.2 0-1.1 0-1.2 0-1.2 0-1.1 0-1.2 0-1.2 0-1.1 0-1.2 0-1.2 0-1.1 0-1.2 0-1.2 0-1.1 0-1.2 0-1.2 0-1.1 0-1.2 0-1.2 0-1.1 0-1.2 0-1.2 0-1.1 0-1.2 0-1.1 0-1.2 0-1.2 0-1.1 0-1.2 0-1.2 0-1.1 0-1.2 0-1.2 0-1.1 0-1.2 0-1.2 0-1.1 0-1.2 0-1.2 0-1.1 0-1.2 0-1.2 0-1.1 0-1.2 0-1.2 0-1.1 0-1.2 0-1.2 0-1.1 0-1.2 0-1.1 0-1.2 0-1.2 0-1.1 0-1.2 0-1.2 0-1.1 0-1.2 0-1.2 0-1.1 0-1.2 0-1.2 0-1.1 0-1.2 0-1.2 0-1.1 0-1.2 0-1.2 0-1.1 0-1.2 0-1.2 0-1.1 0-1.2 0-1.2 0-1.1 0-1.2 0-1.1 0-1.2 0-1.2 0-1.1 0-1.2 0-1.2 0-1.1 0-1.2 0-1.2 0-1.1 0-1.2 0-1.2 0-1.1 0-1.2 0-1.2 0-1.1 0-1.2 0-1.2 0-1.1 0-1.2 0-1.2 0-1.1 0-1.2 0-1.2 0-1.1 0-1.2 0-1.1 0-1.2 0-1.2 0-1.1 0-1.2 0-1.2 0-1.1 0-1.2 0-1.2 0-1.1 0-1.2 0-1.2 0-1.1 0-1.2 0-1.2 0-1.1 0-1.2 0-1.2 0-1.1 0-1.2 0-1.2 0-1.1 0-1.2 0-1.1 0-1.2 0-1.2 0-1.1 0-1.2 0-1.2 0-1.1 0-1.2 0-1.2 0-1.1 0-1.2 0-1.2 0-1.1 0-1.2 0-1.2 0-1.1 0-1.2 0-1.2 0-1.1 0-1.2 0-1.2 0-1.1 0-1.2 0-1.2 0-1.1 0-1.2 0-1.1 0-1.2 0-1.2 0-1.1 0-1.2 0-1.2 0-1.1 0-1.2 0-1.2 0-1.1 0-1.2 0-1.2 0-1.1 0-1.2 0-1.2 0-1.1 0-1.2 0-1.2 0-1.1 0-1.2 0-1.2 0-1.1 0-1.2 0-1.2 0-1.1 0-1.2 0-1.1 0-1.2 0-1.2 0-1.1 0-1.2 0-1.2 0-1.1 0-1.2 0-1.2 0-1.1 0-1.2 0Z" fill="#F29191" fill-opacity="0.1" clip-path="url(#c8)"/><path d="M664 644.3l1.2 0 1.1 0 1.2 0 1.2 0 1.1 0 1.2 0 1.2 0 1.1 0 1.2 0 1.2 0 1.1 0 1.2 0 1.1 0 1.2 0 1.2 33.7 1.1 11.3 1.2 11.9 1.2-20.1 1.1 6.4 1.2 16.9 1.2 30.5 1.1-5.5 1.2-12.9 1.2-16.3 1.1 17.7 1.2-3.2 1.2 59.3 1.1 25.2 1.2-15.4 1.2-34.6 1.1-30.8 1.2-14 1.2-33.9 1.1 24.4 1.2 14.1 1.2 28.1 1.1-21.8 1.2-2.2 1.1-9.4 1.2 17.7 1.2 22.6 1.1 31.4 1.2-6.1 1.2-26.8 1.1-17.6 1.2-14.8 1.2-18.6 1.1-19.2 1.2 22.7 1.2 14.1 1.1-3.4 1.2-6.3 1.2 1.8 1.1 3.4 1.2-2.3 1.2 28.6 1.1-17.9 1.2 49.4 1.2-40.2 1.1 2.7 1.2-18.4 1.2-22 1.1-9 1.2 24.5 1.1 19.6 1.2-3.2 1.2 2.1 1.1-13.2 1.2 .4 1.2 26.9 1.1-3.4 1.2 34 1.2-14.6 1.1 12.6 1.2-48.8 1.2-17.3 1.1-15 1.2 1.6 1.2 17.9 1.1 11.6 1.2-4.6 1.2 10.9 1.1-19.7 1.2 8.2 1.2 53.5 1.1-5.9 1.2 6.8 1.1-26.9 1.2-14.1 1.2-14.1 1.1-12.8 1.2-19.3 1.2 12.3 1.1 11.6 1.2 8.1 1.2 4 1.1-21.1 1.2 13.5 1.2 11.1 1.1 19.4 1.2 4.7 1.2-.1 1.1-16.4 1.2 3.3 1.2-29.9 1.1-1.8 1.2-16 1.2 26.6 1.1 17.5 1.2-4.6 1.2-1.6 1.1-11.3 1.2 13.9 1.1 18 1.2-9.1 1.2 50.8 1.1-21.8 1.2-12.5 1.2-1.6 1.1-37 1.2-20.6 1.2-1.4 1.1 26.1 1.2 23.6 1.2-25 1.1 3.2 1.2-8.9 1.2 25.1 1.1-8.5 1.2 16.4 1.2 27.4 1.1 6.3 1.2-43.2 1.2-38.7 1.1-16.1 1.2-8.6 1.2-6.2 1.1-5.6 1.2-.3 1.1 1.1 1.2-.8 1.2 1.5 1.1-2.5 1.2 .2 1.2 5.2 1.1 10.2 1.2 4.8 1.2-13.9 1.1-5.1 1.2-1.8 1.2 3.5 1.1 0 1.2-1.5 1.2-1.7 1.1 2.8 1.2 1.1 1.2 13.3 1.1 1 1.2-14.3 1.2-3.8 1.1-1.6 1.2 .9 1.2 2.5 1.1-2.8 1.2-.9 1.1 8.3 1.2-6.2 1.2 3 1.1 6 1.2 .9 1.2-8.4 1.1-1.5 1.2-1.4 1.2 .2 1.1 2.6 1.2-.7 1.2-1 1.1-.7 1.2-1.4 1.2 1.9 1.1 2.1 1.2 2.4 1.2 6.9 1.1-4.6 1.2-4.5 1.2 .4 1.1-3.1 1.2 .3 1.1-.2 1.2-1.5 1.2 4.1 1.1 .4 1.2 11.1 1.2 9.2 1.1-14.3 1.2-6.3 1.2-1.8 1.1 1.8 1.2-.4 1.2-3.7 1.1 3.2 1.2 .2 1.2-.7 1.1-1.6 1.2 3.8 1.2 13.9 1.1-.1 1.2-12.6 1.2-3.5 1.1-1.8 1.2 3.3 1.2-1.8 1.1 1.2 1.2-.1 1.1 4.3 1.2 10.5 1.2-9.2 1.1-6.9 1.2-.3 1.2-.7 1.1 0 1.2 4 1.2-5.4 1.1 1.7 1.2 1.7 1.2-1.1 1.1 9.3 1.2 6 1.2-5.8 1.1-6 1.2-3.1 1.2 .8 1.1-1.2 1.2 2.8 1.2-4.9 1.1 1.6 1.2 1.3 1.2 6.8 1.1 12.3 1.2-9.7 1.1-9.1 1.2-.1 1.2-2.9 1.1 1.5 1.2-1.9 1.2 .6 1.1 .7 1.2-.9 1.2 3 1.1 2.9 1.2 5.6 1.2 5.8 1.1-10.9 1.2-3.3 1.2-.6 1.1-2.7 1.2 1.7 1.2 1 1.1 .8 1.2 0 1.2-3.2 1.1 2.5 1.2 3.7 1.1 7.2 1.2 .8 1.2-7 1.1-5.3 1.2 .1 1.2-1.9 1.1 5.9 1.2-.8 1.2-3.1 1.1 1.8 1.2 12.4 1.2 1.2 1.1-10.7 1.2-3.2 1.2-1 1.1-2 1.2 3 1.2-2.4 1.1-.6 1.2 1.3 1.2 5.8 1.1-2.7 1.2-1.2 1.2 13.2 1.1 7.1 1.2-13.3 1.1-7.7 1.2-2.1 1.2-.2 1.1-.5 1.2 1.5 1.2 3.1 1.1 .1 1.2 .9 1.2 7.8 1.1 3.2 1.2-8.7 1.2-3 1.1-3.4 1.2-2.2 1.2 .4 1.1 2 1.2-1.6 1.2 1.4 1.1 1.2 1.2 2.9 1.2 2 1.1 15.9 1.2-5.7 1.2-13.3 1.1-1.3 1.2-1.9 1.1-1.9 1.2 0 1.2 2.2 1.1 3.9 1.2 21.8 1.2 27.4 1.1 22.4 1.2 5.5 1.2 20.1 1.1-44.1 1.2-19.1 1.2-5 1.1-4.3 1.2 27.1 1.2 13.7 1.1-8.1 1.2 1.6 1.2-6 1.1 11.5 1.2 6.2 1.2 23 1.1 15.3 1.2 20.2 1.2-49.3 1.1-23.1 1.2-7.9 1.1-24.3 1.2 17.2 1.2 12.2 1.1 14.4 1.2-5.2 1.2 .1 1.1-13 1.2 19.3 1.2 19.9 1.1-16.9 1.2 41.2 1.2-12.3 1.1-12.8 1.2-30.2 1.2-20.4 1.1-15.6 1.2 21.1 1.2 4.6 1.1 1.3 1.2 1.7 1.2-6.9 1.1 3.9 1.2 20.4 1.1-3.8 1.2 22.8 1.2 10.3 1.1-4.3 1.2-26 1.2-20.8 1.1-25.2 1.2 6.6 1.2 17.4 1.1 11.1 1.2 2.3 1.2-8.2 1.1 2.9 1.2 3.4 1.2 22 1.1 17.8 1.2-1.7 1.2 3.7 1.1-21.4 1.2-7.3 1.2-24.5 1.1-11.1 1.2-6.5 1.2 31.2 1.1 30.4 1.2-24.1 1.1-6.1 1.2-10.5 1.2 15.6 1.1 29.2 1.2 23.6 1.2 5.9 1.1 1.1 1.2-25.5 1.2-34.5 1.1-16.7 1.2-27.5 1.2 22.5 1.1 7.7 1.2 4 1.2-1.2 1.1-9.9 1.2 2.6 1.2 10.2 1.1 11.3 1.2 20.7 1.2 3.1 1.1-9.6 1.2-1.4 1.2-37 1.1-9.6 1.2-13.4 1.1 18.3 1.2 17.9 1.2 10.3 1.1-21.2 1.2-.2 1.2 5.1 1.1 13.4 1.2 22.2 0-93.2-1.2 0-1.1 0-1.2 0-1.2 0-1.1 0-1.2 0-1.2 0-1.1 0-1.2 0-1.1 0-1.2 0-1.2 0-1.1 0-1.2 0-1.2 0-1.1 0-1.2 0-1.2 0-1.1 0-1.2 0-1.2 0-1.1 0-1.2 0-1.2 0-1.1 0-1.2 0-1.2 0-1.1 0-1.2 0-1.2 0-1.1 0-1.2 0-1.2 0-1.1 0-1.2 0-1.1 0-1.2 0-1.2 0-1.1 0-1.2 0-1.2 0-1.1 0-1.2 0-1.2 0-1.1 0-1.2 0-1.2 0-1.1 0-1.2 0-1.2 0-1.1 0-1.2 0-1.2 0-1.1 0-1.2 0-1.2 0-1.1 0-1.2 0-1.2 0-1.1 0-1.2 0-1.1 0-1.2 0-1.2 0-1.1 0-1.2 0-1.2 0-1.1 0-1.2 0-1.2 0-1.1 0-1.2 0-1.2 0-1.1 0-1.2 0-1.2 0-1.1 0-1.2 0-1.2 0-1.1 0-1.2 0-1.2 0-1.1 0-1.2 0-1.1 0-1.2 0-1.2 0-1.1 0-1.2 0-1.2 0-1.1 0-1.2 0-1.2 0-1.1 0-1.2 0-1.2 0-1.1 0-1.2 0-1.2 0-1.1 0-1.2 0-1.2 0-1.1 0-1.2 0-1.2 0-1.1 0-1.2 0-1.2 0-1.1 0-1.2 0-1.1 0-1.2 0-1.2 0-1.1 0-1.2 0-1.2 0-1.1 0-1.2 0-1.2 0-1.1 0-1.2 0-1.2 0-1.1 0-1.2 0-1.2 0-1.1 0-1.2 0-1.2 0-1.1 0-1.2 0-1.2 0-1.1 0-1.2 0-1.2 0-1.1 0-1.2 0-1.1 0-1.2 0-1.2 0-1.1 0-1.2 0-1.2 0-1.1 0-1.2 0-1.2 0-1.1 0-1.2 0-1.2 0-1.1 0-1.2 0-1.2 0-1.1 0-1.2 0-1.2 0-1.1 0-1.2 0-1.2 0-1.1 0-1.2 0-1.2 0-1.1 0-1.2 0-1.1 0-1.2 0-1.2 0-1.1 0-1.2 0-1.2 0-1.1 0-1.2 0-1.2 0-1.1 0-1.2 0-1.2 0-1.1 0-1.2 0-1.2 0-1.1 0-1.2 0-1.2 0-1.1 0-1.2 0-1.2 0-1.1 0-1.2 0-1.1 0-1.2 0-1.2 0-1.1 0-1.2 0-1.2 0-1.1 0-1.2 0-1.2 0-1.1 0-1.2 0-1.2 0-1.1 0-1.2 0-1.2 0-1.1 0-1.2 0-1.2 0-1.1 0-1.2 0-1.2 0-1.1 0-1.2 0-1.2 0-1.1 0-1.2 0-1.1 0-1.2 0-1.2 0-1.1 0-1.2 0-1.2 0-1.1 0-1.2 0-1.2 0-1.1 0-1.2 0-1.2 0-1.1 0-1.2 0-1.2 0-1.1 0-1.2 0-1.2 0-1.1 0-1.2 0-1.2 0-1.1 0-1.2 0-1.2 0-1.1 0-1.2 0-1.1 0-1.2 0-1.2 0-1.1 0-1.2 0-1.2 0-1.1 0-1.2 0-1.2 0-1.1 0-1.2 0-1.2 0-1.1 0-1.2 0-1.2 0-1.1 0-1.2 0-1.2 0-1.1 0-1.2 0-1.2 0-1.1 0-1.2 0-1.1 0-1.2 0-1.2 0-1.1 0-1.2 0-1.2 0-1.1 0-1.2 0-1.2 0-1.1 0-1.2 0-1.2 0-1.1 0-1.2 0-1.2 0-1.1 0-1.2 0-1.2 0-1.1 0-1.2 0-1.2 0-1.1 0-1.2 0-1.2 0-1.1 0-1.2 0-1.1 0-1.2 0-1.2 0-1.1 0-1.2 0-1.2 0-1.1 0-1.2 0-1.2 0-1.1 0-1.2 0-1.2 0-1.1 0-1.2 0-1.2 0-1.1 0-1.2 0-1.2 0-1.1 0-1.2 0-1.2 0-1.1 0-1.2 0-1.2 0-1.1 0-1.2 0-1.1 0-1.2 0-1.2 0-1.1 0-1.2 0-1.2 0-1.1 0-1.2 0-1.2 0-1.1 0-1.2 0-1.2 0-1.1 0-1.2 0-1.2 0-1.1 0-1.2 0-1.2 0-1.1 0-1.2 0-1.2 0-1.1 0-1.2 0-1.2 0-1.1 0-1.2 0-1.1 0-1.2 0-1.2 0-1.1 0-1.2 0-1.2 0-1.1 0-1.2 0-1.2 0-1.1 0-1.2 0-1.2 0-1.1 0-1.2 0-1.2 0-1.1 0-1.2 0-1.2 0-1.1 0-1.2 0-1.2 0-1.1 0-1.2 0-1.1 0-1.2 0-1.2 0-1.1 0-1.2 0-1.2 0-1.1 0-1.2 0-1.2 0-1.1 0-1.2 0-1.2 0-1.1 0-1.2 0-1.2 0-1.1 0-1.2 0-1.2 0-1.1 0-1.2 0-1.2 0-1.1 0-1.2 0-1.2 0-1.1 0-1.2 0-1.1 0-1.2 0-1.2 0-1.1 0-1.2 0-1.2 0-1.1 0-1.2 0-1.2 0-1.1 0-1.2 0-1.2 0-1.1 0-1.2 0-1.2 0-1.1 0-1.2 0-1.2 0-1.1 0-1.2 0-1.2 0-1.1 0-1.2 0-1.2 0-1.1 0-1.2 0-1.1 0-1.2 0-1.2 0-1.1 0-1.2 0-1.2 0-1.1 0-1.2 0-1.2 0-1.1 0-1.2 0Z" fill="#82B5D8" fill-opacity="0.1" clip-path="url(#c8)"/><path d="M664 644.3l1.2 0 1.1 0 1.2 0 1.2 0 1.1 0 1.2 0 1.2 0 1.1 0 1.2 0 1.2 0 1.1 0 1.2 0 1.1 0 1.2 0 1.2 29.4 1.1 20.2 1.2 7.4 1.2-8.4 1.1-7 1.2 6.5 1.2 17.7 1.1 4.4 1.2-2.2 1.2-3.1 1.1 5.7 1.2 3.2 1.2 18.2 1.1 18.4 1.2 7.9 1.2-21.5 1.1-9.9 1.2-21.1 1.2-20.1 1.1-.6 1.2 8.2 1.2 6.4 1.1 2.2 1.2 1.7 1.1-1.7 1.2 8.6 1.2 8 1.1 14.7 1.2 12.9 1.2-1.6 1.1-14.5 1.2-16.6 1.2-17.2 1.1-13.4 1.2 2 1.2 13.7 1.1 10.9 1.2 .4 1.2-6.5 1.1 1.8 1.2 7.7 1.2 14.9 1.1 13.9 1.2 11 1.2-3.5 1.1-16.7 1.2-14.9 1.2-23.5 1.1-12.2 1.2 6.6 1.1 7.9 1.2 12.3 1.2-.4 1.1-7.2 1.2 1.6 1.2 14.7 1.1 20.7 1.2 5.6 1.2 3.7 1.1 2.1 1.2-24 1.2-16.2 1.1-24 1.2-1.3 1.2 10.1 1.1 13.1 1.2 9.2 1.2-11.3 1.1 .5 1.2 4.6 1.2 10.3 1.1 17.1 1.2 13.4 1.1-2.8 1.2-4.1 1.2-22.6 1.1-15.6 1.2-19.4 1.2-3.4 1.1 11.2 1.2 11.3 1.2 2 1.1-11.2 1.2 5.3 1.2 4.1 1.1 18.2 1.2 10.8 1.2 4.3 1.1 4.9 1.2-12.2 1.2-19.8 1.1-15.3 1.2-16.9 1.2 7.2 1.1 12.4 1.2 8.4 1.2-3.6 1.1-4.8 1.2 4.1 1.1 7.1 1.2 11.1 1.2 20.5 1.1 5.3 1.2-3.4 1.2-15.8 1.1-20.4 1.2-19 1.2-7.4 1.1 7.7 1.2 11.5 1.2 5.6 1.1-1.7 1.2 .7 1.2 2 1.1 4.5 1.2 19.2 1.2 20.2 1.1-4.7 1.2-22.1 1.2-26.8 1.1-26.4 1.2-16.4 1.2-9.8 1.1-1.5 1.2 .5 1.1-1.3 1.2 .6 1.2 .8 1.1 1.6 1.2 4.1 1.2 4 1.1 .2 1.2-3.9 1.2-2.8 1.1-1.9 1.2-2.1 1.2-.1 1.1 .6 1.2 .2 1.2 1.2 1.1 2.3 1.2 3.3 1.2 5 1.1-2.4 1.2-4.4 1.2-3.4 1.1-1.9 1.2-.3 1.2-.5 1.1 1 1.2-.6 1.1 2.4 1.2 2.3 1.2 1.1 1.1 2.4 1.2-1.1 1.2-.9 1.1 .1 1.2-3.6 1.2-2.7 1.1 .1 1.2-.1 1.2 .5 1.1 1.2 1.2 3.9 1.2 6.5 1.1 .1 1.2-6.2 1.2-2.4 1.1-1.1 1.2-1.2 1.2-.6 1.1-.8 1.2 .4 1.1 0 1.2 .8 1.2 5.2 1.1 4.9 1.2 .3 1.2-2.7 1.1-6.2 1.2-2.2 1.2-.3 1.1-.3 1.2-.1 1.2 0 1.1 2.6 1.2 3.5 1.2 3.5 1.1-.4 1.2-1.2 1.2-.6 1.1-1.7 1.2-4.2 1.2-1.2 1.1-.5 1.2 .4 1.2 0 1.1 1.2 1.2 1.1 1.1 3.2 1.2 5.8 1.2-.9 1.1-5.2 1.2-1.4 1.2-2.3 1.1-1.5 1.2 1 1.2-1.3 1.1 .5 1.2 1.4 1.2 4.3 1.1 7.7 1.2 .4 1.2-6.9 1.1-3.9 1.2-2.1 1.2 .2 1.1-1.9 1.2 1 1.2-.5 1.1 .7 1.2 .2 1.2 3.1 1.1 5.7 1.2 2.5 1.1-1.3 1.2-4.6 1.2-4.2 1.1-1.7 1.2-.9 1.2 .3 1.1 0 1.2 1 1.2 1.3 1.1 5.7 1.2 3.9 1.2-2.1 1.1-4.2 1.2-2.5 1.2-1.1 1.1-1.7 1.2 0 1.2 .3 1.1-.5 1.2 .8 1.2 2.9 1.1 1.4 1.2 1.2 1.1 1.7 1.2 1 1.2-3.1 1.1-4.2 1.2-1.3 1.2-.3 1.1 1.4 1.2-.1 1.2-.3 1.1 5 1.2 4.9 1.2-2.2 1.1-1.4 1.2-.1 1.2-4.6 1.1-1.9 1.2 0 1.2-1.1 1.1 .3 1.2 1.2 1.2 2.4 1.1 5 1.2 4 1.2-2.2 1.1-1.9 1.2-1.9 1.1-5 1.2-.7 1.2 .3 1.1-.6 1.2-.1 1.2 1 1.1 1.3 1.2 1.2 1.2 3 1.1 7 1.2-2.9 1.2-3.9 1.1-5.3 1.2-1.2 1.2-.8 1.1 .2 1.2 .1 1.2 .4 1.1 4.3 1.2 4.7 1.2 3.2 1.1-2.8 1.2-4.8 1.2-2.7 1.1-1.2 1.2-1 1.1-.5 1.2 .7 1.2-1.2 1.1 10 1.2 20.4 1.2 28.8 1.1 35.2 1.2 8.6 1.2-.5 1.1-13.1 1.2-21.5 1.2-16.1 1.1-8.2 1.2 1.7 1.2 10.9 1.1 8.2 1.2-3.8 1.2-3.6 1.1 7.4 1.2 3.6 1.2 16.5 1.1 16.4 1.2 .9 1.2-7.2 1.1-15.5 1.2-14.6 1.1-19.6 1.2-1.3 1.2 7.5 1.1 9 1.2 6.7 1.2-3.1 1.1-1.5 1.2 6.4 1.2 4.3 1.1 16.3 1.2 17.9 1.2 .8 1.1-17.9 1.2-8.1 1.2-22.7 1.1-18.6 1.2 3.1 1.2 6.5 1.1 14.2 1.2 1.2 1.2-2.8 1.1-2 1.2 8.6 1.1 1.7 1.2 23.1 1.2 16.2 1.1-1.6 1.2-15.6 1.2-23.3 1.1-18 1.2-10.1 1.2 2.3 1.1 13.2 1.2 7.8 1.2-.4 1.1-3.1 1.2 4.1 1.2 7.7 1.1 13.2 1.2 8.2 1.2 14 1.1-11.2 1.2-15.5 1.2-21.4 1.1-16.1 1.2-5.3 1.2 7.6 1.1 14.1 1.2 5.9 1.1-4 1.2-4.6 1.2 3.9 1.1 13 1.2 20.2 1.2 9.4 1.1 11.1 1.2-9.5 1.2-29.2 1.1-13.6 1.2-20.6 1.2-2.5 1.1 9.4 1.2 14.9 1.2 4.8 1.1-9.4 1.2-2.5 1.2 1.6 1.1 15.8 1.2 16.5 1.2 9.7 1.1-.6 1.2-8.1 1.2-18.3 1.1-20.3 1.2-16.2 1.1 3.6 1.2 13.9 1.2 9.8 1.1-2 1.2-2.8 1.2-.9 1.1 7.7 1.2 11.9 0-81.2-1.2 0-1.1 0-1.2 0-1.2 0-1.1 0-1.2 0-1.2 0-1.1 0-1.2 0-1.1 0-1.2 0-1.2 0-1.1 0-1.2 0-1.2 0-1.1 0-1.2 0-1.2 0-1.1 0-1.2 0-1.2 0-1.1 0-1.2 0-1.2 0-1.1 0-1.2 0-1.2 0-1.1 0-1.2 0-1.2 0-1.1 0-1.2 0-1.2 0-1.1 0-1.2 0-1.1 0-1.2 0-1.2 0-1.1 0-1.2 0-1.2 0-1.1 0-1.2 0-1.2 0-1.1 0-1.2 0-1.2 0-1.1 0-1.2 0-1.2 0-1.1 0-1.2 0-1.2 0-1.1 0-1.2 0-1.2 0-1.1 0-1.2 0-1.2 0-1.1 0-1.2 0-1.1 0-1.2 0-1.2 0-1.1 0-1.2 0-1.2 0-1.1 0-1.2 0-1.2 0-1.1 0-1.2 0-1.2 0-1.1 0-1.2 0-1.2 0-1.1 0-1.2 0-1.2 0-1.1 0-1.2 0-1.2 0-1.1 0-1.2 0-1.1 0-1.2 0-1.2 0-1.1 0-1.2 0-1.2 0-1.1 0-1.2 0-1.2 0-1.1 0-1.2 0-1.2 0-1.1 0-1.2 0-1.2 0-1.1 0-1.2 0-1.2 0-1.1 0-1.2 0-1.2 0-1.1 0-1.2 0-1.2 0-1.1 0-1.2 0-1.1 0-1.2 0-1.2 0-1.1 0-1.2 0-1.2 0-1.1 0-1.2 0-1.2 0-1.1 0-1.2 0-1.2 0-1.1 0-1.2 0-1.2 0-1.1 0-1.2 0-1.2 0-1.1 0-1.2 0-1.2 0-1.1 0-1.2 0-1.2 0-1.1 0-1.2 0-1.1 0-1.2 0-1.2 0-1.1 0-1.2 0-1.2 0-1.1 0-1.2 0-1.2 0-1.1 0-1.2 0-1.2 0-1.1 0-1.2 0-1.2 0-1.1 0-1.2 0-1.2 0-1.1 0-1.2 0-1.2 0-1.1 0-1.2 0-1.2 0-1.1 0-1.2 0-1.1 0-1.2 0-1.2 0-1.1 0-1.2 0-1.2 0-1.1 0-1.2 0-1.2 0-1.1 0-1.2 0-1.2 0-1.1 0-1.2 0-1.2 0-1.1 0-1.2 0-1.2 0-1.1 0-1.2 0-1.2 0-1.1 0-1.2 0-1.1 0-1.2 0-1.2 0-1.1 0-1.2 0-1.2 0-1.1 0-1.2 0-1.2 0-1.1 0-1.2 0-1.2 0-1.1 0-1.2 0-1.2 0-1.1 0-1.2 0-1.2 0-1.1 0-1.2 0-1.2 0-1.1 0-1.2 0-1.2 0-1.1 0-1.2 0-1.1 0-1.2 0-1.2 0-1.1 0-1.2 0-1.2 0-1.1 0-1.2 0-1.2 0-1.1 0-1.2 0-1.2 0-1.1 0-1.2 0-1.2 0-1.1 0-1.2 0-1.2 0-1.1 0-1.2 0-1.2 0-1.1 0-1.2 0-1.2 0-1.1 0-1.2 0-1.1 0-1.2 0-1.2 0-1.1 0-1.2 0-1.2 0-1.1 0-1.2 0-1.2 0-1.1 0-1.2 0-1.2 0-1.1 0-1.2 0-1.2 0-1.1 0-1.2 0-1.2 0-1.1 0-1.2 0-1.2 0-1.1 0-1.2 0-1.1 0-1.2 0-1.2 0-1.1 0-1.2 0-1.2 0-1.1 0-1.2 0-1.2 0-1.1 0-1.2 0-1.2 0-1.1 0-1.2 0-1.2 0-1.1 0-1.2 0-1.2 0-1.1 0-1.2 0-1.2 0-1.1 0-1.2 0-1.2 0-1.1 0-1.2 0-1.1 0-1.2 0-1.2 0-1.1 0-1.2 0-1.2 0-1.1 0-1.2 0-1.2 0-1.1 0-1.2 0-1.2 0-1.1 0-1.2 0-1.2 0-1.1 0-1.2 0-1.2 0-1.1 0-1.2 0-1.2 0-1.1 0-1.2 0-1.2 0-1.1 0-1.2 0-1.1 0-1.2 0-1.2 0-1.1 0-1.2 0-1.2 0-1.1 0-1.2 0-1.2 0-1.1 0-1.2 0-1.2 0-1.1 0-1.2 0-1.2 0-1.1 0-1.2 0-1.2 0-1.1 0-1.2 0-1.2 0-1.1 0-1.2 0-1.2 0-1.1 0-1.2 0-1.1 0-1.2 0-1.2 0-1.1 0-1.2 0-1.2 0-1.1 0-1.2 0-1.2 0-1.1 0-1.2 0-1.2 0-1.1 0-1.2 0-1.2 0-1.1 0-1.2 0-1.2 0-1.1 0-1.2 0-1.2 0-1.1 0-1.2 0-1.1 0-1.2 0-1.2 0-1.1 0-1.2 0-1.2 0-1.1 0-1.2 0-1.2 0-1.1 0-1.2 0-1.2 0-1.1 0-1.2 0-1.2 0-1.1 0-1.2 0-1.2 0-1.1 0-1.2 0-1.2 0-1.1 0-1.2 0-1.2 0-1.1 0-1.2 0-1.1 0-1.2 0-1.2 0-1.1 0-1.2 0-1.2 0-1.1 0-1.2 0-1.2 0-1.1 0-1.2 0-1.2 0-1.1 0-1.2 0-1.2 0-1.1 0-1.2 0-1.2 0-1.1 0-1.2 0-1.2 0-1.1 0-1.2 0-1.2 0-1.1 0-1.2 0-1.1 0-1.2 0-1.2 0-1.1 0-1.2 0-1.2 0-1.1 0-1.2 0-1.2 0-1.1 0-1.2 0Z" fill="#E5A8E2" fill-opacity="0.1" clip-path="url(#c8)"/><path d="M664 644.3l2.3 0 2.4 0 2.3 0 2.3 0 2.4 0 2.3 0 2.3 0 2.3 0 2.4 0 2.3 0 2.3 0 2.4 0 2.3 0 2.3 0 2.4 0 2.3 0 2.3 0 2.4 0 2.3 0 2.3 0 2.3 0 2.4 0 2.3 0 2.3 0 2.4 0 2.3 0 2.3 0 2.4 0 2.3 0 2.3-.1 2.4-.2 2.3-.1 2.3-.1 2.3-.2 2.4 0 2.3 0 2.3-.7 2.4-.7 2.3 0 2.3 0 2.4-.1 2.3 .1 2.3 0 2.3 0 2.4 0 2.3-.1 2.3 0 2.4 .1 2.3 0 2.3-.1 2.4 0 2.3 0 2.3 0 2.4 .4 2.3 0 2.3-.3 2.3-.1 2.4 .2 2.3-.1 2.3 0 2.4 0 2.3 0 2.3 0 2.4-.1 2.3 .1 2.3-.2 2.4-1.4 2.3-2 2.3-.8 2.3-.2 2.4-.1 2.3-.4 2.3-.1 2.4 .2 2.3 .2 2.3-.1 2.4-.6 2.3 .1 2.3 .6 2.4-.3 2.3 1.8 2.3-1.9 2.3-.2 2.4 1.1 2.3-.4 2.3 1.7 2.4-.2 2.3-1.3 2.3-.1 2.4-.8 2.3 .5 2.3 1.4 2.4 .5 2.3-1.8 2.3-.2 2.3 .3 2.4-.5 2.3 1.8 2.3-.2 2.4-1.2 2.3 .2 2.3-.3 2.4 1.8 2.3-.1 2.3-.5 2.4-1.6 2.3 .9 2.3-.1 2.3-.5 2.4 .3 2.3-.4 2.3 .5 2.4-.2 2.3-.4 2.3 .3 2.4 0 2.3-.2 2.3-.4 2.4 .5 2.3 .3 2.3-.4 2.3 0 2.4-.3 2.3 .6 2.3-.3 2.4 .3 2.3-.1 2.3-.2 2.4 .2 2.3-.2 2.3-.1 2.3 .5 2.4-.2 2.3 0 2.3 1 2.4-.1 2.3-.6 2.3 .6 2.4 .2 2.3-1.5 2.3 .3 2.4 1.5 2.3-1.3 2.3 0 2.3 .7 2.4 .4 2.3-.8 2.3 0 2.4 1.4 2.3-1.6 2.3-.4 2.4 2.1 2.3-.6 2.3-1.5 2.4 .1 2.3 1.7 2.3-.1 2.3-1 2.4 1.3 2.3 5.2 2.3 0 2.4-1.7 2.3 .1 2.3-.1 2.4 0 2.3 .1 2.3 0 2.4 0 2.3 .1 2.3 0 2.3 0 2.4 0 2.3 .1 2.3 0 2.4 0 2.3 0 2.3 0 2.4 .1 2.3 0 2.3 0 2.4 .1 2.3 0 2.3 0 2.3 0 2.4 .1 2.3-.1 2.3 .1 2.4 0 2.3 .1 2.3 0 2.4 1 2.3 0 2.3 0 2.4 0 2.3 0 2.3 0 2.3 0 2.4 0 2.3 0 2.3 0 2.4 0 2.3 0 2.3 0 2.4 0 2.3 0 2.3 0 2.4 0 2.3 0 2.3 0 2.3 0 2.4 0 2.3 0 0 0-2.3 0-2.4 0-2.3 0-2.3 0-2.3 0-2.4 0-2.3 0-2.3 0-2.4 0-2.3 0-2.3 0-2.4 0-2.3 0-2.3 0-2.4 0-2.3 0-2.3 0-2.3 0-2.4 0-2.3 0-2.3 0-2.4 0-2.3 0-2.3 0-2.4 0-2.3 0-2.3 0-2.4 0-2.3 0-2.3 0-2.3 0-2.4 0-2.3 0-2.3 0-2.4 0-2.3 0-2.3 0-2.4 0-2.3 0-2.3 0-2.4 0-2.3 0-2.3 0-2.3 0-2.4 0-2.3 0-2.3 0-2.4 0-2.3 0-2.3 0-2.4 0-2.3 0-2.3 0-2.4 0-2.3 0-2.3 0-2.3 0-2.4 0-2.3 0-2.3 0-2.4 0-2.3 0-2.3 0-2.4 0-2.3 0-2.3 0-2.4 0-2.3 0-2.3 0-2.3 0-2.4 0-2.3 0-2.3 0-2.4 0-2.3 0-2.3 0-2.4 0-2.3 0-2.3 0-2.4 0-2.3 0-2.3 0-2.3 0-2.4 0-2.3 0-2.3 0-2.4 0-2.3 0-2.3 0-2.4 0-2.3 0-2.3 0-2.3 0-2.4 0-2.3 0-2.3 0-2.4 0-2.3 0-2.3 0-2.4 0-2.3 0-2.3 0-2.4 0-2.3 0-2.3 0-2.3 0-2.4 0-2.3 0-2.3 0-2.4 0-2.3 0-2.3 0-2.4 0-2.3 0-2.3 0-2.4 0-2.3 0-2.3 0-2.3 0-2.4 0-2.3 0-2.3 0-2.4 0-2.3 0-2.3 0-2.4 0-2.3 0-2.3 0-2.4 0-2.3 0-2.3 0-2.3 0-2.4 0-2.3 0-2.3 0-2.4 0-2.3 0-2.3 0-2.4 0-2.3 0-2.3 0-2.4 0-2.3 0-2.3 0-2.3 0-2.4 0-2.3 0-2.3 0-2.4 0-2.3 0-2.3 0-2.4 0-2.3 0-2.3 0-2.4 0-2.3 0-2.3 0-2.3 0-2.4 0-2.3 0-2.3 0-2.4 0-2.3 0-2.3 0-2.4 0-2.3 0-2.3 0-2.4 0-2.3 0-2.3 0-2.3 0-2.4 0-2.3 0-2.3 0-2.4 0-2.3 0-2.3 0-2.4 0-2.3 0-2.3 0-2.3 0-2.4 0-2.3 0-2.3 0-2.4 0-2.3 0-2.3 0-2.4 0-2.3 0-2.3 0-2.4 0-2.3 0-2.3 0-2.3 0-2.4 0-2.3 0-2.3 0-2.4 0-2.3 0-2.3 0-2.4 0-2.3 0-2.3 0-2.4 0-2.3 0-2.3 0-2.3 0-2.4 0-2.3 0-2.3 0-2.4 0-2.3 0Z" fill="#AEA2E0" fill-opacity="0.1" clip-path="url(#c8)"/><path d="M664 644.3l1.2 0 1.1 0 1.2 0 1.2 0 1.1 0 1.2 0 1.2 0 1.1 0 1.2 0 1.2 0 1.1 0 1.2 0 1.1 0 1.2 0 1.2 31.1 1.1 21.6 1.2 10.3 1.2 4.1 1.1-26.7 1.2-3.1 1.2 16.2 1.1 23.9 1.2-1.8 1.2-8.6 1.1 3 1.2-3.6 1.2 19.5 1.1 15.6 1.2 46.7 1.2-25.2 1.1-38.6 1.2-7.6 1.2-16.1 1.1-30.1 1.2 5 1.2 1.9 1.1 4.7 1.2 20.1 1.1 3 1.2-3.9 1.2-.7 1.1 14 1.2 20.4 1.2 .3 1.1 7.2 1.2-34.1 1.2 .4 1.1-23.1 1.2-16.9 1.2 15.2 1.1 30.2 1.2-5.3 1.2 2.6 1.1-5.1 1.2 1.9 1.2 16.3 1.1 20.1 1.2-3.9 1.2 23 1.1-3.2 1.2-35.6 1.2-14.1 1.1-19.4 1.2-21.4 1.1 27.3 1.2 22.7 1.2 8.2 1.1-24.6 1.2 8.8 1.2-1 1.1 21.6 1.2 2.2 1.2 49.5 1.1 15.4 1.2-56.2 1.2 3.9 1.1-43.2 1.2-21.5 1.2-3.6 1.1 16.6 1.2 38.9 1.2-19.4 1.1-3.8 1.2-7 1.2 5.2 1.1 21.5 1.2 6.6 1.1 28.7 1.2-8.2 1.2-41.5 1.1 13 1.2-22.5 1.2-28.3 1.1 1 1.2 16.3 1.2 14.8 1.1-20.2 1.2 14.8 1.2-6.8 1.1 26.4 1.2-16.9 1.2 8.3 1.1 33.8 1.2 5.6 1.2-20.6 1.1-22.2 1.2-27.5 1.2-15.6 1.1 6.9 1.2 35.5 1.2-7.2 1.1-12.9 1.2-.9 1.1 5.5 1.2 12.6 1.2 6.7 1.1 29.5 1.2 13.1 1.2-11.5 1.1-27.9 1.2-15.8 1.2-15.6 1.1-13.8 1.2 10.8 1.2 15.9 1.1 15.8 1.2-.6 1.2-16.9 1.1 8.5 1.2 28.8 1.2 27.6 1.1-4.2 1.2 14.2 1.2-68.7 1.1-23.1 1.2-24.5 1.2-14.6 1.1 .3 1.2 3.2 1.1-6.1 1.2 4.2 1.2-3.3 1.1-.1 1.2-.6 1.2 1.5 1.1 .3 1.2 11.2 1.2 18.3 1.1-12.7 1.2-16.2 1.2-.2 1.1 .2 1.2-2.8 1.2 3.5 1.1 1.4 1.2 13.4 1.2 19.7 1.1-23.9 1.2-10.4 1.2-2.6 1.1 2.8 1.2-2.8 1.2-1.1 1.1 2.7 1.2 2.4 1.1-3.5 1.2 1.1 1.2-2.2 1.1 2 1.2 .9 1.2 14.1 1.1 17.8 1.2-13.7 1.2-18.8 1.1-1.7 1.2 3.4 1.2-3.9 1.1 3 1.2-1.6 1.2 13.9 1.1 16.1 1.2-20.2 1.2-7.7 1.1-2.1 1.2 2.4 1.2-.7 1.1-1.7 1.2-1.9 1.1 2.8 1.2-.1 1.2 .8 1.1 11.4 1.2 3 1.2-11.1 1.1-3.5 1.2-1.6 1.2 2.7 1.1-3 1.2-.3 1.2 .9 1.1 2.1 1.2-2.3 1.2 3.2 1.1-1.6 1.2 8.1 1.2 19.2 1.1-11.7 1.2-15.4 1.2-1.4 1.1-2 1.2 1.1 1.2 .4 1.1-1.8 1.2 5.5 1.1-2.9 1.2 3.2 1.2-1.3 1.1 16.7 1.2 9.4 1.2-12.7 1.1-14.4 1.2 2.3 1.2-5.3 1.1-.6 1.2 .7 1.2 5.3 1.1 5.7 1.2 5.9 1.2-3.1 1.1-9.5 1.2-1.4 1.2-1.7 1.1 .4 1.2 2.8 1.2-2.3 1.1-1.6 1.2 2.9 1.2-.9 1.1 19 1.2 13.7 1.1-21.1 1.2-12.4 1.2-1 1.1-.2 1.2-.8 1.2 2.3 1.1-2.5 1.2 1.8 1.2-.4 1.1 1.2 1.2 3.4 1.2 10.7 1.1 7.6 1.2-16.3 1.2-1.4 1.1-5.9 1.2-.5 1.2 4.7 1.1-5 1.2 .4 1.2 .2 1.1 .6 1.2 2.3 1.1 10 1.2 15.2 1.2-15.7 1.1-10.2 1.2-1.2 1.2-1.2 1.1 3.8 1.2 .1 1.2-4.4 1.1 4.6 1.2 2.5 1.2 3.8 1.1 17.5 1.2-11.7 1.2-12 1.1-1 1.2-2.8 1.2-.7 1.1 2 1.2-.3 1.2 .3 1.1 3.5 1.2 1.1 1.2 10 1.1 14.9 1.2-12 1.1-17.5 1.2 1 1.2 .3 1.1 3.2 1.2-5.9 1.2 2.9 1.1-2.8 1.2 2.7 1.2 10.8 1.1 19.7 1.2-16.4 1.2-15 1.1 1.1 1.2 1.3 1.2-2.4 1.1-1.4 1.2 2.3 1.2-2.6 1.1 1.9 1.2 10.4 1.2 15.8 1.1-12.1 1.2-12.9 1.2-2.8 1.1-1.2 1.2 2.2 1.1-.5 1.2-1.8 1.2-.4 1.1 11.5 1.2 15 1.2 24.8 1.1 30.1 1.2 27.1 1.2 9.1 1.1-33.8 1.2-19.9 1.2 1.6 1.1-21.1 1.2-13 1.2 10.8 1.1 22.6 1.2 2 1.2-13.3 1.1-3 1.2 5.5 1.2 3.2 1.1 22.6 1.2 2.2 1.2-3.4 1.1 9.3 1.2-32.3 1.1 6 1.2-30.6 1.2 5.4 1.1 15.5 1.2 25.1 1.2-9.8 1.1-5.5 1.2-.8 1.2 12.6 1.1 26.7 1.2 20.2 1.2-4.3 1.1-12.6 1.2-13.9 1.2-19.4 1.1-14.8 1.2-22.2 1.2 5.4 1.1 18.9 1.2 16 1.2-10.8 1.1-1 1.2-7.5 1.1 15.3 1.2 15.8 1.2 24.9 1.1 6.9 1.2-8.1 1.2-22 1.1-29.2 1.2-1.3 1.2-29.8 1.1 15.7 1.2 21.5 1.2 4.6 1.1-13.3 1.2-1.2 1.2 1.3 1.1 13.9 1.2 .7 1.2 38.3 1.1 0 1.2-11 1.2-35.2 1.1-.3 1.2-14.5 1.2-10.2 1.1 3.3 1.2 16 1.1 6 1.2-9.9 1.2-8.1 1.1 27.8 1.2 26 1.2 2.3 1.1 7.4 1.2 9.9 1.2-55.3 1.1 15.9 1.2-15 1.2-32.6 1.1 9.3 1.2 30.2 1.2 25 1.1-7.4 1.2-19 1.2-19.7 1.1 27.4 1.2 20.6 1.2 13.9 1.1 5.5 1.2-2.8 1.2-1.8 1.1-33.7 1.2-37.4 1.1-18.8 1.2 17.3 1.2 29 1.1 7.2 1.2-14 1.2-6.5 1.1 9.7 1.2 12.8" stroke="#7EB26D" fill="none" clip-path="url(#c8)"/><path d="M664 644.3l1.2 0 1.1 0 1.2 0 1.2 0 1.1 0 1.2 0 1.2 0 1.1 0 1.2 0 1.2 0 1.1 0 1.2 0 1.1 0 1.2 0 1.2 33.6 1.1 34.7 1.2 10.6 1.2-5.1 1.1-11.4 1.2-26.2 1.2-8.9 1.1 25.5 1.2 16.2 1.2-.1 1.1 8.9 1.2-20.2 1.2 .5 1.1 29.4 1.2 5.8 1.2 40.9 1.1 2.1 1.2-38.4 1.2-16.8 1.1-15.4 1.2-24.1 1.2-5.2 1.1 20.6 1.2 2.4 1.1 3 1.2 2.8 1.2-.6 1.1-4.9 1.2 6.2 1.2 33.9 1.1-6.2 1.2 8.1 1.2-25.2 1.1-2.7 1.2-25.6 1.2-12.2 1.1 10.5 1.2 15.6 1.2 12.6 1.1 3.4 1.2 .2 1.2-13 1.1 1.7 1.2 29.9 1.2 30.8 1.1-13.4 1.2 5.6 1.2-21.7 1.1-33.8 1.2-12.4 1.1-19.8 1.2 14.3 1.2 29.9 1.1-4.6 1.2-4.7 1.2-14.2 1.1 23.4 1.2 2.4 1.2-11.5 1.1 35.6 1.2-8 1.2 2.3 1.1-32.5 1.2-6.9 1.2-13.6 1.1-6.3 1.2 27 1.2 7 1.1-.4 1.2 5.9 1.2-15.8 1.1 12.1 1.2 3.1 1.1 37 1.2 14.1 1.2 7 1.1-39.6 1.2-5.2 1.2-32.7 1.1-17.3 1.2-4.4 1.2 30 1.1-6.6 1.2 13.2 1.2-11.6 1.1-6.6 1.2 35.9 1.2-7.7 1.1 23.1 1.2 2.8 1.2-14.4 1.1-6.3 1.2-30.3 1.2 .4 1.1-25.5 1.2 8.5 1.2 12.6 1.1 14.6 1.2-3.7 1.1 .2 1.2-17.3 1.2 18.6 1.1 13 1.2 24.3 1.2-11.9 1.1 13 1.2-30.3 1.2-3.3 1.1-26.2 1.2-16.9 1.2 26.9 1.1 8.4 1.2 20.2 1.2-22.9 1.1-8.3 1.2 20 1.2 20 1.1 2.4 1.2 8.4 1.2-20.9 1.1-46.2 1.2-12.4 1.2-15.9 1.1-2.2 1.2 1.4 1.1-4.2 1.2 .1 1.2 1.2 1.1 .8 1.2 2 1.2 .6 1.1 10.5 1.2-2.3 1.2-7.6 1.1-.9 1.2-4.5 1.2 .8 1.1 1.2 1.2-2.1 1.2 0 1.1 .3 1.2 4.7 1.2 3.9 1.1 .3 1.2-1.5 1.2-5.9 1.1 1.2 1.2-1.8 1.2-.1 1.1 4.7 1.2-5.7 1.1 4.3 1.2-1.2 1.2 9.2 1.1 4.1 1.2-10.6 1.2-2.3 1.1-.4 1.2-1.5 1.2 1.7 1.1-2.5 1.2 3.2 1.2-4.3 1.1 5.4 1.2-1 1.2 7.3 1.1 3.7 1.2-7.7 1.2-4.9 1.1-2.7 1.2 .8 1.2 .4 1.1-1.5 1.2 .5 1.1 3.1 1.2-1.6 1.2 7.4 1.1 9.6 1.2-6.8 1.2-9.4 1.1 .2 1.2 0 1.2-2 1.1-.4 1.2 .1 1.2 .2 1.1 2.1 1.2-.4 1.2 8.7 1.1 8.7 1.2-6.7 1.2-9.6 1.1-1.2 1.2-1.7 1.2 3.4 1.1-3.4 1.2 .2 1.2-.8 1.1 5.1 1.2-.4 1.1 7.2 1.2 .2 1.2-9.1 1.1-1.8 1.2-1.5 1.2 .5 1.1 3.3 1.2-1 1.2 .4 1.1-2 1.2 2.6 1.2-.4 1.1 .7 1.2 6.1 1.2 7.3 1.1-5.3 1.2-8.8 1.2 .3 1.1-3.7 1.2 .7 1.2 5 1.1-4.7 1.2 3.8 1.2-1.4 1.1 11.4 1.2 6.3 1.1-14.3 1.2-2.5 1.2 .8 1.1-3.1 1.2 .4 1.2-.2 1.1-1.5 1.2 2.8 1.2 6.2 1.1 7.2 1.2-9.2 1.2 .3 1.1-2.4 1.2-5.2 1.2 2 1.1-2.4 1.2 .7 1.2-.5 1.1 1.6 1.2-1.3 1.2 .8 1.1 2.1 1.2 6.8 1.1 8.6 1.2-8.3 1.2-3.7 1.1-4.4 1.2-1.1 1.2 1.8 1.1 1.3 1.2-3.2 1.2 2 1.1 2.6 1.2 4.2 1.2-1.1 1.1-4.4 1.2 1.8 1.2-5.6 1.1 .1 1.2 1.7 1.2 1.9 1.1-4.1 1.2 4.9 1.2-3.5 1.1 5.1 1.2 6.6 1.2-1.4 1.1-7.6 1.2-2.6 1.1-1.7 1.2 .9 1.2-.2 1.1-.5 1.2 1.5 1.2-1.4 1.1 .2 1.2 2.5 1.2 1.3 1.1 5 1.2 6.1 1.2-2.2 1.1-9.9 1.2 .9 1.2 .1 1.1-4.5 1.2 3.2 1.2-1.1 1.1 .7 1.2 3.9 1.2 4.6 1.1 1.7 1.2-8.1 1.2-3.2 1.1 0 1.2 .7 1.1-1.4 1.2 3.2 1.2-.2 1.1 9.5 1.2 15 1.2 12.4 1.1 38.8 1.2 13.4 1.2 24.1 1.1 31.7 1.2-26.6 1.2-13.3 1.1-35.1 1.2-36.5 1.2-7.7 1.1 23.7 1.2-1.7 1.2 21.1 1.1-12.3 1.2-4.6 1.2 6.6 1.1 34.3 1.2-14.7 1.2 19.4 1.1 19.7 1.2-16.6 1.1-28.7 1.2-6.2 1.2-30.1 1.1 .8 1.2 1.5 1.2 26 1.1-2.6 1.2 1.8 1.2-19.4 1.1 7.8 1.2 28.9 1.2 7.3 1.1-15.5 1.2 14.5 1.2 6.1 1.1-41.3 1.2-1.7 1.2-22.1 1.1 7.5 1.2 19.4 1.2 19.9 1.1 .7 1.2-32.1 1.1 14.3 1.2 17.4 1.2 4.8 1.1 14.3 1.2 42.7 1.2-11.4 1.1-43.5 1.2-16.5 1.2-21.2 1.1-21.3 1.2 19.3 1.2 12.4 1.1 9.2 1.2 11 1.2-18.1 1.1-4.6 1.2 19.6 1.2 16 1.1 26.6 1.2-14.9 1.2-26.1 1.1-3.6 1.2-19.5 1.2-17.4 1.1-1.5 1.2 11.1 1.1 5.1 1.2 21.5 1.2-15.7 1.1 9 1.2-12.2 1.2 8.7 1.1 30.2 1.2 22.7 1.2-7.9 1.1-16.3 1.2-11.5 1.2-21.2 1.1-19.8 1.2 4.3 1.2 15.1 1.1 12.1 1.2-15.2 1.2 6.2 1.1-4.4 1.2 23.3 1.2 23.7 1.1-2.2 1.2 14.6 1.2 7.1 1.1-32.2 1.2-24.9 1.1-8 1.2-21.8 1.2 11.3 1.1 15.5 1.2 2.8 1.2 7.2 1.1-13.7 1.2-4.3" stroke="#EAB839" fill="none" clip-path="url(#c8)"/><path d="M664 644.3l1.2 0 1.1 0 1.2 0 1.2 0 1.1 0 1.2 0 1.2 0 1.1 0 1.2 0 1.2 0 1.1 0 1.2 0 1.1 0 1.2 0 1.2 27 1.1 12.4 1.2 8 1.2-18.2 1.1 10.1 1.2 21 1.2 17.1 1.1-16.8 1.2-1.4 1.2 4.6 1.1 5 1.2 6.9 1.2 4.1 1.1 29.7 1.2-5.7 1.2-43.2 1.1-3.2 1.2-23.5 1.2 .3 1.1 15.2 1.2 27.3 1.2 11.3 1.1-16.6 1.2-12.7 1.1 16.2 1.2 9.1 1.2 14.9 1.1 17.5 1.2 4.2 1.2-.7 1.1-33.7 1.2-27.5 1.2-21.5 1.1 .1 1.2 23.3 1.2 18.4 1.1-14 1.2 3.7 1.2-11.6 1.1 9.4 1.2 25 1.2 11.9 1.1 37.1 1.2 13.1 1.2-60.8 1.1-6.6 1.2-32.8 1.2-16.1 1.1 7.1 1.2 10.1 1.1-15.2 1.2 14.5 1.2 7.3 1.1-9.5 1.2 14.5 1.2 24.8 1.1 27.5 1.2-7.1 1.2-30 1.1 7.4 1.2-20 1.2-16.5 1.1-19.6 1.2 16.2 1.2 14.1 1.1 30.5 1.2-25.9 1.2 1.2 1.1-5.5 1.2 10.7 1.2 14.7 1.1 26.1 1.2 6.4 1.1-25.1 1.2-19.4 1.2-9.7 1.1-22.1 1.2-4.8 1.2 15.6 1.1 26.8 1.2-6.6 1.2 7.7 1.1-18.1 1.2 10.4 1.2-.8 1.1 39.3 1.2 22.5 1.2-12 1.1-12.3 1.2-28.6 1.2-18.5 1.1-25.6 1.2 2.8 1.2 3.4 1.1 24.3 1.2 8.5 1.2-24 1.1-5.8 1.2 19.9 1.1 6.1 1.2 22.7 1.2 21.5 1.1-29.5 1.2 5.3 1.2-38.7 1.1-13.7 1.2-15.6 1.2 6.9 1.1 17 1.2 20.2 1.2-11.1 1.1-13.1 1.2-.8 1.2 15.9 1.1 11 1.2 15.2 1.2 15.2 1.1-15.4 1.2-31.7 1.2-12.6 1.1-23.1 1.2-10.8 1.2-5.6 1.1-.4 1.2-2.1 1.1 1.9 1.2-1.9 1.2-.2 1.1 1.2 1.2 3.6 1.2 10.6 1.1 10.1 1.2-9.3 1.2-9.8 1.1-1.9 1.2-1.4 1.2 .9 1.1-2.7 1.2-1.2 1.2 1.3 1.1-1.2 1.2 3.8 1.2 3.5 1.1 4.6 1.2-1.1 1.2-3.1 1.1-6.2 1.2 .8 1.2-2.2 1.1 2.4 1.2-1.4 1.1 3.7 1.2-4.1 1.2 2.2 1.1 1.6 1.2 7.7 1.2 3.8 1.1-7.6 1.2-5.6 1.2-2.3 1.1-.2 1.2-1 1.2 2.4 1.1-.3 1.2 10.3 1.2 13 1.1-11.2 1.2-12.1 1.2 3 1.1-4 1.2 4 1.2-.9 1.1-2.7 1.2 .6 1.1 3.9 1.2-4.8 1.2 3.4 1.1 1.1 1.2 10.6 1.2 2.7 1.1-13.3 1.2-.5 1.2-1.3 1.1-2.7 1.2-.7 1.2 .1 1.1 3.2 1.2 .1 1.2 .6 1.1 1.6 1.2 9.4 1.2-5.1 1.1-7.6 1.2 2.1 1.2-2.9 1.1-1.2 1.2 1.4 1.2-2.2 1.1 1.3 1.2-.4 1.1 3 1.2 2.1 1.2 7.8 1.1-5.3 1.2-5.5 1.2-1.2 1.1 1.9 1.2-2.2 1.2 1.4 1.1-1.1 1.2 2.1 1.2 1.4 1.1 7.8 1.2 4.3 1.2-10.1 1.1-4.8 1.2 1.2 1.2-.5 1.1-.4 1.2-2.1 1.2 2.3 1.1 1 1.2-3.1 1.2 .7 1.1 1.1 1.2-.6 1.1 6.2 1.2 12.5 1.2-6.8 1.1-9.1 1.2-2.9 1.2-1.4 1.1 4.4 1.2-2.4 1.2-.1 1.1 6.2 1.2 9.6 1.2-.6 1.1-8.5 1.2-7.2 1.2-.2 1.1-.5 1.2 1.4 1.2-2.6 1.1 3.8 1.2 1.7 1.2-.5 1.1 5.6 1.2 4.8 1.1-6.2 1.2-4.3 1.2-1.9 1.1-.3 1.2-.9 1.2-2 1.1 7.1 1.2-6.7 1.2 1.6 1.1 3.1 1.2 .3 1.2 4.1 1.1 13 1.2-8.1 1.2-9 1.1-1.5 1.2 .2 1.2-2.7 1.1-.8 1.2 2.1 1.2 2.7 1.1 2.3 1.2 9.1 1.2-5 1.1-4.6 1.2 1.9 1.1-8.8 1.2 0 1.2 .2 1.1 .6 1.2-.8 1.2 3.8 1.1-.6 1.2-.3 1.2 2.9 1.1 6.4 1.2-1.7 1.2-6.1 1.1-1.2 1.2-1.8 1.2-1.2 1.1 1.6 1.2 2.6 1.2-4.3 1.1 3.2 1.2-.3 1.2 7.5 1.1 6.6 1.2-8.9 1.2-5.7 1.1-.9 1.2 1.7 1.1-1.7 1.2 .1 1.2-2.2 1.1 13.9 1.2 24.5 1.2 48.6 1.1 10 1.2 4 1.2 3.6 1.1-33.6 1.2-10.7 1.2-29.5 1.1 16.1 1.2 11.2 1.2-.3 1.1-3.2 1.2 8.2 1.2-.1 1.1 5.8 1.2 15.4 1.2 19.9 1.1 33.8 1.2-33.7 1.2-20.4 1.1-12.7 1.2-24.8 1.1-11.5 1.2 12.9 1.2 20.2 1.1-.2 1.2 8.7 1.2-12.3 1.1 16.7 1.2 1.8 1.2 20.4 1.1 12.7 1.2 27.8 1.2-29.1 1.1-38.4 1.2-1.6 1.2-23.5 1.1-15.3 1.2 20.5 1.2 7.5 1.1 11.8 1.2-6.7 1.2 .8 1.1-8.6 1.2 38.8 1.1-26.7 1.2 35.6 1.2 12.8 1.1-25.4 1.2-24.7 1.2-19.2 1.1-14 1.2-.6 1.2 27.3 1.1 17.7 1.2 2.1 1.2-16.8 1.1 2 1.2 5.8 1.2 12.1 1.1 27.3 1.2 2.4 1.2 10 1.1-35.5 1.2-10.3 1.2-30.1 1.1-23.3 1.2 19.6 1.2 13.6 1.1 15.7 1.2-19.9 1.1 3.8 1.2 .3 1.2 10.2 1.1 23.7 1.2 32.9 1.2-20.3 1.1-2.7 1.2-19.3 1.2-19.9 1.1-31.5 1.2-3.2 1.2 9.3 1.1 22.6 1.2 3.3 1.2 3 1.1-19.9 1.2 2.4 1.2 27.3 1.1 5.9 1.2 3.8 1.2 28.9 1.1-22.5 1.2-22.3 1.2-31.6 1.1 2.5 1.2-8 1.1 6.7 1.2 33.1 1.2-25.1 1.1 15.6 1.2-14.1 1.2 16.5 1.1 14.2 1.2 18.8" stroke="#6ED0E0" fill="none" clip-path="url(#c8)"/><path d="M664 644.3l1.2 0 1.1 0 1.2 0 1.2 0 1.1 0 1.2 0 1.2 0 1.1 0 1.2 0 1.2 0 1.1 0 1.2 0 1.1 0 1.2 0 1.2 34.6 1.1 43.9 1.2-9.8 1.2 11.5 1.1-36.3 1.2-6.1 1.2-3 1.1 15.4 1.2 26 1.2 1.4 1.1-22.7 1.2 1.1 1.2 15.7 1.1 14.2 1.2 39.4 1.2-16.6 1.1-11.5 1.2 10.9 1.2-41 1.1-20 1.2-14.5 1.2 11.3 1.1 21.6 1.2 11.4 1.1-1.1 1.2-18 1.2-7.2 1.1 21.5 1.2 21.8 1.2 12.2 1.1 9.7 1.2-15.9 1.2-25.6 1.1-5.2 1.2-24.7 1.2-16.9 1.1 25.9 1.2 35 1.2-11.9 1.1-12 1.2-8.4 1.2 1.1 1.1 15.1 1.2-2.9 1.2 38.7 1.1-3.6 1.2 21.1 1.2-50.1 1.1-14.5 1.2-17.8 1.1-6.9 1.2 11.4 1.2 16.6 1.1 .6 1.2-6.7 1.2 3.1 1.1 .5 1.2-2.2 1.2 26.7 1.1-4.1 1.2 14.5 1.2-6 1.1-34.6 1.2 .4 1.2-20.6 1.1 .2 1.2 26.8 1.2-.6 1.1-5.6 1.2-1 1.2-12.2 1.1 14 1.2 16.8 1.1 18.7 1.2 6 1.2-7.6 1.1-9.8 1.2-16.7 1.2-19.5 1.1-18 1.2 20.9 1.2 16.7 1.1 7.9 1.2-22.9 1.2 4.8 1.1 5.2 1.2-.3 1.2 5.6 1.1 46.6 1.2-14.7 1.2-11.4 1.1-11.3 1.2-21.8 1.2-6.7 1.1-17.3 1.2 10.7 1.2 20.4 1.1 11.9 1.2-17.9 1.1-5.7 1.2 3.8 1.2 23.5 1.1 13.2 1.2 22.4 1.2-22 1.1 2.3 1.2 1.5 1.2-45.1 1.1-21.5 1.2 8.8 1.2 35.6 1.1 3.5 1.2-5.5 1.2 3.2 1.1-21 1.2 10.9 1.2 22.8 1.1 22 1.2 9.8 1.2-28.4 1.1-40 1.2-26.9 1.2-16.3 1.1 .7 1.2-3.8 1.1-.3 1.2-.2 1.2 5.6 1.1-1.9 1.2 2.3 1.2 11 1.1-1.5 1.2-8.8 1.2-5.3 1.1-1.3 1.2-.3 1.2 2.4 1.1 1 1.2-1.7 1.2 3 1.1 9.7 1.2 6.4 1.2-10.4 1.1-8.1 1.2 2.1 1.2-3.1 1.1 1.4 1.2-2.3 1.2-.1 1.1 2.3 1.2 .5 1.1 9.2 1.2 13.3 1.2-13.6 1.1-6.3 1.2-4.2 1.2-1.2 1.1 .2 1.2 1.2 1.2-.4 1.1 1.2 1.2 .2 1.2-.1 1.1 3.1 1.2 4.5 1.2 14.2 1.1-5.4 1.2-12.8 1.2-3 1.1 1.2 1.2-2.2 1.2-1.4 1.1 1.5 1.2 .5 1.1 .8 1.2 0 1.2 8.4 1.1 8.4 1.2-10.8 1.2-6.9 1.1 3.3 1.2-3.3 1.2 .3 1.1-2.4 1.2 1.1 1.2 .9 1.1-1.4 1.2 1.1 1.2 3.9 1.1 16.1 1.2 5 1.2-18.1 1.1-6.2 1.2-1.6 1.2 2 1.1-.6 1.2-1 1.2 .3 1.1 1.6 1.2 3.5 1.1 1.9 1.2 14.4 1.2-.3 1.1-18.6 1.2-2.7 1.2-1.5 1.1-.1 1.2 3.3 1.2-.4 1.1-.9 1.2 .5 1.2 0 1.1 6.5 1.2 13 1.2-7.6 1.1-8.2 1.2-4.6 1.2-.1 1.1-1.4 1.2 .4 1.2 2.3 1.1 4.6 1.2-.2 1.2 8.9 1.1-4.7 1.2-4 1.1-5.3 1.2 3.1 1.2-5.1 1.1 1.6 1.2 1.1 1.2-.9 1.1-1.2 1.2 4.2 1.2-.9 1.1 9 1.2 7.4 1.2-13.2 1.1-4.4 1.2 1.1 1.2 0 1.1-.7 1.2-2.2 1.2 2 1.1-.8 1.2-1.6 1.2 3.2 1.1 3.6 1.2 14.6 1.1-5.8 1.2-10.7 1.2-3.8 1.1 .3 1.2 1.7 1.2-2.6 1.1 4.6 1.2-4 1.2 6.3 1.1 14.3 1.2-2.6 1.2-12.7 1.1-4.7 1.2 .7 1.2-.8 1.1 1.3 1.2-2.8 1.2 1 1.1 1.2 1.2 3.8 1.2 3.3 1.1 13.9 1.2-6.6 1.2-13.2 1.1-1.6 1.2-2.4 1.1 1.3 1.2 .2 1.2 .6 1.1 1.4 1.2-3.5 1.2 3.3 1.1-1.3 1.2 1.7 1.2 14.1 1.1 9.8 1.2-14.2 1.2-11.2 1.1-1.5 1.2 1.5 1.2-2.4 1.1 1.8 1.2 .3 1.2 5.9 1.1 15 1.2-6.7 1.2-10.3 1.1-4.5 1.2 1.2 1.2-1 1.1 2.5 1.2-2 1.1-.2 1.2-.6 1.2 .9 1.1 8.6 1.2 20.4 1.2 21.5 1.1 30.1 1.2 27.5 1.2-7.9 1.1 22.1 1.2-16.3 1.2-27.9 1.1-7.2 1.2-40.6 1.2 1.9 1.1 29.3 1.2 10 1.2-.2 1.1-10.7 1.2 .3 1.2 17.4 1.1 .7 1.2 25.7 1.2 39.1 1.1-32.3 1.2-10.9 1.1-17.5 1.2-29.8 1.2-13.3 1.1-4.1 1.2 20.1 1.2 4.2 1.1-.5 1.2 1.5 1.2-20.2 1.1 23 1.2 10.1 1.2 14.4 1.1-2.5 1.2 8.2 1.2-8.8 1.1-22.2 1.2-25.5 1.2-11.8 1.1 24.3 1.2 3.2 1.2 4.3 1.1-5.8 1.2-9.6 1.1 3.2 1.2-2.9 1.2 20.6 1.1 19.1 1.2 27 1.2-26.7 1.1-15 1.2-7.2 1.2-28 1.1-1.9 1.2 19.2 1.2 1.8 1.1 13.6 1.2 5.4 1.2-5.8 1.1-14.1 1.2 8.7 1.2 14 1.1 19 1.2 6.3 1.2-27.2 1.1-15.2 1.2-.2 1.2-26 1.1 1.8 1.2 25.9 1.1 19.1 1.2-10 1.2-13.3 1.1-10.5 1.2 22.4 1.2 11.2 1.1 22 1.2 11.7 1.2-3.3 1.1-28.2 1.2-22.7 1.2-13.5 1.1-19.1 1.2 10.6 1.2 25.2 1.1-8.3 1.2 11.2 1.2-13 1.1 1.4 1.2-1.2 1.2 36.8 1.1 18.2 1.2-10.9 1.2-10.5 1.1-26.4 1.2-2.1 1.1-21.4 1.2-1.9 1.2 10.5 1.1 29.7 1.2-1.4 1.2 4.7 1.1-7.4 1.2-8.8" stroke="#EF843C" fill="none" clip-path="url(#c8)"/><path d="M664 644.3l1.2 0 1.1 0 1.2 0 1.2 0 1.1 0 1.2 0 1.2 0 1.1 0 1.2 0 1.2 0 1.1 0 1.2 0 1.1 0 1.2 0 1.2 18.4 1.1 14 1.2 8.9 1.2-13 1.1 19.6 1.2 13.9 1.2 26.2 1.1-20.4 1.2-7 1.2 7.2 1.1 7.5 1.2 10 1.2 29 1.1-7.7 1.2 1 1.2-36.3 1.1 2.2 1.2-32.9 1.2-12.1 1.1 30.2 1.2 18.6 1.2-21.8 1.1 9.2 1.2-4.7 1.1 8.5 1.2 7.2 1.2 16.6 1.1-1.5 1.2 11.2 1.2-4 1.1-18.5 1.2-19.3 1.2-21.5 1.1 6.7 1.2 14.9 1.2 24 1.1-3.9 1.2-5.8 1.2-12.9 1.1 15.1 1.2 16.2 1.2 31.5 1.1-4.6 1.2-7.9 1.2-2.4 1.1-40.7 1.2-20.8 1.2-12.6 1.1 11 1.2 7 1.1 9.5 1.2 1.9 1.2-.1 1.1-4.5 1.2 15.2 1.2 26.6 1.1 32.4 1.2 2.2 1.2-14.4 1.1-18.3 1.2-17.1 1.2-29.5 1.1-20.7 1.2 5.6 1.2 29.1 1.1 11.6 1.2-9.6 1.2-15.9 1.1 17.8 1.2 1.5 1.2 27.3 1.1 25.2 1.2 2.5 1.1-49.4 1.2 1 1.2-22.1 1.1-13 1.2-9 1.2 12.7 1.1 11.4 1.2 12.5 1.2-30.7 1.1 8.5 1.2 11.8 1.2-.2 1.1 35.9 1.2 4.9 1.2-18.6 1.1 4.7 1.2-13.6 1.2-33.8 1.1-13.3 1.2 14.5 1.2 15.5 1.1 25.3 1.2-13.8 1.2-4.8 1.1-4.7 1.2 17.1 1.1-5.7 1.2 12.7 1.2 16.2 1.1 6.5 1.2-19.8 1.2-18.3 1.1-20.9 1.2-22.7 1.2 25.8 1.1 19.3 1.2 22.3 1.2-30.3 1.1 3.5 1.2 8.7 1.2 22.6 1.1-3.4 1.2 40.3 1.2 5.5 1.1-20.1 1.2-51.7 1.2-25.1 1.1-18.9 1.2-15.2 1.2-8.2 1.1-.9 1.2-.4 1.1 1.1 1.2-1.3 1.2 .9 1.1-1 1.2 1.8 1.2 8.5 1.1 9.9 1.2-11.8 1.2-5.2 1.1-1.4 1.2 .6 1.2-1.5 1.1-1.3 1.2 1 1.2-.5 1.1 2.6 1.2 .9 1.2 6.8 1.1 7.8 1.2-13.5 1.2-2.1 1.1-2.5 1.2 .7 1.2 1.4 1.1 1.7 1.2-1.8 1.1-2.8 1.2 1.7 1.2 2.7 1.1 3.6 1.2 .7 1.2 8.1 1.1 4.2 1.2-10.4 1.2-5.7 1.1-1.6 1.2-2.8 1.2 .3 1.1 .7 1.2-1.4 1.2 5 1.1-2.9 1.2 1.2 1.2 8.7 1.1 3.2 1.2-8 1.2-5 1.1-1.2 1.2 3.9 1.1-5.1 1.2 3.9 1.2-1.3 1.1 3.5 1.2 10.7 1.2-.8 1.1-11.7 1.2-2.2 1.2-1.7 1.1 .6 1.2 2 1.2-1.1 1.1-1.8 1.2 4.4 1.2-.7 1.1 1.1 1.2 .8 1.2 4.1 1.1 16.6 1.2-13.1 1.2-10.9 1.1-.5 1.2 .8 1.2-2 1.1-.4 1.2 1.9 1.1 1.9 1.2 9.7 1.2 14.1 1.1-13.6 1.2-11.4 1.2 .7 1.1-.8 1.2-1 1.2 1.5 1.1-3 1.2 3.3 1.2 .7 1.1 9.2 1.2 3.7 1.2-11.4 1.1-.8 1.2-2.4 1.2-2.3 1.1 .9 1.2-.1 1.2-.5 1.1-.3 1.2-.4 1.2 3 1.1 3.2 1.2 8.4 1.1 8.5 1.2-13.8 1.2-5.3 1.1 1.8 1.2-4.8 1.2 .7 1.1-.5 1.2-.9 1.2 1 1.1 1.4 1.2 6.5 1.2 3.2 1.1-.8 1.2-8.5 1.2-1.4 1.1-.9 1.2-1.1 1.2 2.5 1.1-1.1 1.2-1.2 1.2 2.2 1.1-.5 1.2 5.1 1.1 6.2 1.2 13.2 1.2-6.1 1.1-12 1.2-6.1 1.2 2.6 1.1-2.5 1.2 1.1 1.2-.4 1.1 6.2 1.2 15.9 1.2-12 1.1-9.4 1.2-.3 1.2-2.4 1.1-1 1.2 2.1 1.2-1.3 1.1 3.9 1.2-2.4 1.2 .5 1.1-1.4 1.2-.4 1.2 2.2 1.1 7.7 1.2 15.9 1.1-11.3 1.2-9.9 1.2-1.6 1.1-1 1.2 3 1.2-2.3 1.1-1.9 1.2 .4 1.2-.7 1.1 3.3 1.2 10.6 1.2 12.6 1.1-16.1 1.2-9.3 1.2 .8 1.1 2.4 1.2-2.3 1.2-2.6 1.1 .7 1.2 1.6 1.2 3.9 1.1-3.5 1.2 6.1 1.2 14.5 1.1-8.7 1.2-13 1.1 .2 1.2-1.1 1.2-1.9 1.1 11.6 1.2 15.9 1.2 30.2 1.1 41.7 1.2-4.9 1.2-12.2 1.1-25.1 1.2-16.9 1.2-12.2 1.1 19.7 1.2 22.4 1.2 17.1 1.1-18.1 1.2 9.5 1.2-18 1.1 30.5 1.2 5.3 1.2 28.2 1.1 29.1 1.2-23.8 1.2-42.1 1.1-29.9 1.2-8 1.1-17.8 1.2 9.6 1.2 18.2 1.1-5.2 1.2-1.5 1.2-6.3 1.1-6.7 1.2 34.7 1.2 11.9 1.1 3.1 1.2-2 1.2 2 1.1-21.5 1.2-1.6 1.2-25.9 1.1-11.5 1.2 24.7 1.2 24.8 1.1 5.7 1.2-14.6 1.2-4.3 1.1 19.7 1.2 17.2 1.1-16.6 1.2 44.6 1.2 9.6 1.1-24.8 1.2-42 1.2-14.1 1.1-27.2 1.2 20.9 1.2 23.8 1.1 11.4 1.2-11.9 1.2-15.7 1.1 7 1.2 19.5 1.2 18.6 1.1 21.4 1.2-6.7 1.2 1.7 1.1-22.5 1.2-25.5 1.2-19.4 1.1-26.8 1.2 17.6 1.2 17.3 1.1 3.9 1.2 2.2 1.1-9 1.2-4 1.2 14.5 1.1 15.5 1.2 8.4 1.2 45.3 1.1-26.6 1.2-7.3 1.2-38.4 1.1-22.1 1.2-8.9 1.2 18.7 1.1 21 1.2 .1 1.2 5.7 1.1-19.7 1.2 3.8 1.2 1.7 1.1 52.6 1.2-7.7 1.2 27.2 1.1-38.4 1.2-.8 1.2-40.6 1.1-29.4 1.2 3 1.1 21.4 1.2 22.9 1.2-17.9 1.1-.1 1.2 4.7 1.2 11.3 1.1 8 1.2-6" stroke="#E24D42" fill="none" clip-path="url(#c8)"/><path d="M664 644.3l1.2 0 1.1 0 1.2 0 1.2 0 1.1 0 1.2 0 1.2 0 1.1 0 1.2 0 1.2 0 1.1 0 1.2 0 1.1 0 1.2 0 1.2 31 1.1 17.4 1.2 9.4 1.2-8 1.1-19.8 1.2 19.7 1.2 21.9 1.1 6.5 1.2-8.1 1.2 6.8 1.1-.1 1.2 1.8 1.2-2.1 1.1 38.4 1.2 11.7 1.2-23.7 1.1-14 1.2-22.7 1.2-21.7 1.1-6.3 1.2 9.5 1.2 10.7 1.1 14.1 1.2-13 1.1-11.8 1.2 12.5 1.2 10 1.1 20.3 1.2 16.7 1.2-17.7 1.1-13.6 1.2-4.5 1.2-8.5 1.1-28.6 1.2 2.9 1.2 21.4 1.1 31.2 1.2-12.8 1.2-14 1.1-3.6 1.2 9.7 1.2 33.4 1.1 31.3 1.2-16.8 1.2 9.1 1.1-34.2 1.2-18.8 1.2-25.6 1.1-13.1 1.2 12.8 1.1 11.7 1.2 17.2 1.2-16 1.1 23.4 1.2-31.7 1.2 18.2 1.1 45.5 1.2 1.2 1.2 13.5 1.1-10.6 1.2-26.2 1.2-30.1 1.1-17.9 1.2-3.7 1.2 23.5 1.1 7.1 1.2 14 1.2-11.8 1.1-7.8 1.2-4.9 1.2 16.8 1.1 25.8 1.2 18.7 1.1 13.1 1.2-10.3 1.2-52.9 1.1-4.5 1.2-30.6 1.2-2.8 1.1 32.2 1.2 7.4 1.2-9.4 1.1-9.4 1.2-2.5 1.2 4.6 1.1 21.3 1.2 15.7 1.2 2 1.1 24.4 1.2-35.5 1.2-7.1 1.1-23.1 1.2-29.4 1.2 17.5 1.1 29.1 1.2 2 1.2-3.4 1.1-19.1 1.2 2.8 1.1 11.8 1.2 12.1 1.2 33.5 1.1-3.7 1.2-12.6 1.2-14.6 1.1-30.9 1.2-1.7 1.2-22 1.1 27.5 1.2 7.8 1.2 18.4 1.1-18.2 1.2-.4 1.2-2.1 1.1-3.1 1.2 35.5 1.2 9.7 1.1-6.7 1.2-34.1 1.2-17.3 1.1-14.8 1.2-16.8 1.2-5.6 1.1-4.7 1.2 2.1 1.1-2.8 1.2 .4 1.2 2.6 1.1-.5 1.2 8.7 1.2 15.8 1.1-6.4 1.2-12.6 1.2-6.8 1.1 1.5 1.2-1.3 1.2-1.1 1.1-.1 1.2 6.5 1.2-6.1 1.1-.5 1.2 4.2 1.2 4.9 1.1 9.9 1.2 2.9 1.2-15.9 1.1 .8 1.2-3.5 1.2-1.1 1.1-.7 1.2-.9 1.1 .3 1.2 3.3 1.2-3.4 1.1 5.4 1.2 7.1 1.2 3 1.1-8.9 1.2-2.3 1.2-2.1 1.1 1.3 1.2-3.7 1.2 1.7 1.1 2.5 1.2 4.2 1.2 15.6 1.1-2.3 1.2-15.4 1.2-5.9 1.1 3.3 1.2-4 1.2 .6 1.1 1.5 1.2-2.4 1.1-.4 1.2 4 1.2-1.6 1.1 10.3 1.2 9.5 1.2-12.9 1.1-6.3 1.2 1 1.2-4 1.1 1.9 1.2-.9 1.2-.2 1.1 2.8 1.2-1.9 1.2 7.8 1.1 6.1 1.2-4.1 1.2-5.2 1.1-5 1.2-1.3 1.2 1.4 1.1-1.5 1.2 1.9 1.2-1.2 1.1 2.4 1.2-.3 1.1 14.9 1.2 10.2 1.2-17.2 1.1-7.6 1.2 1.5 1.2-2.3 1.1-.4 1.2-.4 1.2-1.5 1.1 .7 1.2 3.1 1.2 5.2 1.1 13.3 1.2-1.9 1.2-15.1 1.1-3.6 1.2 2.9 1.2-2.8 1.1-.7 1.2 1.8 1.2-.2 1.1 2.2 1.2-1.8 1.2 8.3 1.1 4.7 1.2-8.9 1.1-3.3 1.2-1.8 1.2 3.2 1.1-3.2 1.2 .7 1.2-1 1.1-.3 1.2-.7 1.2 1.1 1.1-1.3 1.2 .1 1.2 6.3 1.1-2.5 1.2 15.8 1.2-2.9 1.1-9.4 1.2-4.4 1.2-1.8 1.1-1.9 1.2 .2 1.2 5 1.1-2.7 1.2 .4 1.1-.6 1.2 4 1.2 9.6 1.1-4.7 1.2-6.9 1.2-.1 1.1-1.4 1.2 1.2 1.2-3.7 1.1 1.6 1.2 4.7 1.2-3 1.1 9.3 1.2 14.8 1.2-14.8 1.1-4.9 1.2-5.4 1.2-1.5 1.1 .2 1.2 1.3 1.2 3.7 1.1 5.5 1.2 19.3 1.2-14.9 1.1-13.6 1.2-.1 1.1-1.6 1.2 5.4 1.2-1.5 1.1-2.8 1.2 0 1.2 2.6 1.1-3.1 1.2 4.9 1.2 10 1.1 14.4 1.2-19.4 1.2-9 1.1-.7 1.2-.7 1.2-.6 1.1 1 1.2-.8 1.2 .9 1.1 .5 1.2 13.2 1.2 12.1 1.1-13.4 1.2-7.6 1.2-4.7 1.1 1.4 1.2 1 1.1-2.2 1.2 3.6 1.2-4.3 1.1 7 1.2 23.6 1.2 25.2 1.1 48.9 1.2 7.2 1.2-33.6 1.1-8.2 1.2-8.1 1.2-17.1 1.1-19.8 1.2 13.5 1.2 13.1 1.1 21.6 1.2-18.2 1.2 5.1 1.1 10.3 1.2-15.1 1.2 30.5 1.1-7.6 1.2 10 1.2 14.8 1.1-31.2 1.2-2.4 1.1-31.3 1.2-6.6 1.2 17.8 1.1 15.4 1.2 7.6 1.2-10.3 1.1 6.3 1.2-2.1 1.2 10.3 1.1 21.8 1.2 22.8 1.2 7 1.1-14.8 1.2-19 1.2-38.1 1.1-19.7 1.2 7.8 1.2 3.6 1.1 36.1 1.2-3.8 1.2-20.2 1.1-7.2 1.2 30.7 1.1 1.6 1.2 22.8 1.2 10.2 1.1 3.3 1.2-6.8 1.2-42.9 1.1-11.5 1.2-34.1 1.2 10.8 1.1 19.9 1.2 27.9 1.2-7.6 1.1-8.6 1.2-6.7 1.2 17.6 1.1 11.2 1.2 15.6 1.2 15.9 1.1-21.9 1.2-13.4 1.2-27.7 1.1-9.4 1.2-25.3 1.2 22.5 1.1 21.9 1.2 4.6 1.1-8.3 1.2-10.7 1.2 11.4 1.1 10.1 1.2 24.4 1.2 5.3 1.1 49.5 1.2-51.4 1.2-20.2 1.1-4.4 1.2-37.7 1.2-10.6 1.1 15.7 1.2 33.1 1.2-12.6 1.1-5.2 1.2 1 1.2 .2 1.1-.4 1.2 36.6 1.2 2.2 1.1-10.7 1.2-13.3 1.2-10.3 1.1-21.9 1.2-10 1.1 9.1 1.2 17.3 1.2 19.9 1.1-19.4 1.2-2.8 1.2-3 1.1 1.1 1.2 35.7" stroke="#1F78C1" fill="none" clip-path="url(#c8)"/><path d="M664 644.3l2.3 0 2.4 0 2.3 0 2.3 0 2.4 0 2.3 0 2.3 0 2.3 0 2.4 0 2.3 0 2.3 0 2.4 0 2.3 0 2.3 0 2.4 0 2.3 0 2.3 0 2.4 0 2.3 0 2.3 0 2.3 0 2.4 0 2.3 0 2.3 0 2.4 0 2.3 0 2.3 0 2.4 0 2.3 0 2.3-.1 2.4-.2 2.3-.1 2.3-.1 2.3-.2 2.4 0 2.3 0 2.3 0 2.4 0 2.3 0 2.3 0 2.4 0 2.3 0 2.3 0 2.3 0 2.4 0 2.3 0 2.3 0 2.4 0 2.3 0 2.3 0 2.4 0 2.3 0 2.3 0 2.4 0 2.3 0 2.3 0 2.3 0 2.4 0 2.3 0 2.3 0 2.4 0 2.3 0 2.3 0 2.4 0 2.3 0 2.3 0 2.4-1 2.3-1 2.3-.4 2.3-.7 2.4 .1 2.3-2 2.3 0 2.4 .3 2.3 .6 2.3-1.3 2.4 2.1 2.3-.6 2.3 1.2 2.4-.4 2.3-.3 2.3-1.5 2.3-.4 2.4 1.9 2.3 0 2.3 .3 2.4 .1 2.3-1.3 2.3 1.8 2.4-2.9 2.3 2.5 2.3-.1 2.4 .3 2.3-1.3 2.3-.6 2.3 0 2.4 .9 2.3 .7 2.3-2 2.4 1.2 2.3-.2 2.3 0 2.4-.2 2.3 1 2.3 .5 2.4-2.6 2.3-.2 2.3 1.3 2.3-.8 2.4 2.2 2.3-2.7 2.3 2 2.4-1.5 2.3 .7 2.3 1.8 2.4-2.3 2.3 .4 2.3 .6 2.4 1.2 2.3 .4 2.3-.6 2.3-2.1 2.4-.4 2.3 .7 2.3 .7 2.4-.4 2.3-.1 2.3 1.1 2.4 .1 2.3-1 2.3-.8 2.3 1.2 2.4 .3 2.3 1.3 2.3-3.1 2.4 3.1 2.3-2.6 2.3-.4 2.4-.3 2.3 1.6 2.3 .3 2.4 1.2 2.3-1.5 2.3-.1 2.3-1.3 2.4 2.8 2.3-.6 2.3-2.1 2.4 .1 2.3 .3 2.3 .3 2.4 1.1 2.3-1.8 2.3 2.4 2.4-2.7 2.3 2.2 2.3-.6 2.3 1.1 2.4 .8 2.3 2.7 2.3 0 2.4 0 2.3 0 2.3 0 2.4 0 2.3 0 2.3 0 2.4 0 2.3 0 2.3 0 2.3 0 2.4 0 2.3 0 2.3 0 2.4 0 2.3 0 2.3 0 2.4 0 2.3 0 2.3 0 2.4 0 2.3 0 2.3 0 2.3 0 2.4 0 2.3 0 2.3 0 2.4 0 2.3 0 2.3 0 2.4 0 2.3 0 2.3 0 2.4 0 2.3 0 2.3 0 2.3 0 2.4 0 2.3 0 2.3 0 2.4 0 2.3 0 2.3 0 2.4 0 2.3 0 2.3 0 2.4 0 2.3 0 2.3 0 2.3 0 2.4 0 2.3 0" stroke="#BA43A9" fill="none" clip-path="url(#c8)"/><path d="M664 644.3l2.3 0 2.4 0 2.3 0 2.3 0 2.4 0 2.3 0 2.3 0 2.3 0 2.4 0 2.3 0 2.3 0 2.4 0 2.3 0 2.3 0 2.4 0 2.3 0 2.3 0 2.4 0 2.3 0 2.3 0 2.3 0 2.4 0 2.3 0 2.3 0 2.4 0 2.3 0 2.3 0 2.4 0 2.3 0 2.3-.1 2.4-.2 2.3-.1 2.3-.1 2.3-.2 2.4 0 2.3 0 2.3 0 2.4 0 2.3 0 2.3 0 2.4 0 2.3 0 2.3 0 2.3 0 2.4 0 2.3 0 2.3 0 2.4 0 2.3 0 2.3 0 2.4 0 2.3 0 2.3 0 2.4 0 2.3 0 2.3 0 2.3 0 2.4 0 2.3 0 2.3 0 2.4 0 2.3 0 2.3 0 2.4 0 2.3 0 2.3 0 2.4-.8 2.3-2.6 2.3 .5 2.3-.8 2.4 .8 2.3-2.1 2.3 1.3 2.4-1 2.3 .9 2.3 1.3 2.4-1.3 2.3 0 2.3 1 2.4-.2 2.3-1.3 2.3-1 2.3-.1 2.4 3 2.3-.2 2.3 .1 2.4-.2 2.3-.7 2.3-2 2.4 1.9 2.3-.8 2.3 2 2.4-.7 2.3 .4 2.3-2.2 2.3 1.6 2.4 .2 2.3-2.4 2.3 1.1 2.4 1.6 2.3-.3 2.3-.7 2.4 .2 2.3-1.8 2.3 .9 2.4 1 2.3-.2 2.3-.9 2.3 2 2.4-.3 2.3-.9 2.3-.1 2.4-.3 2.3-.9 2.3 2 2.4-.7 2.3 1.2 2.3-2.1 2.4 1.8 2.3-.8 2.3-1.7 2.3 .1 2.4 1.9 2.3-.3 2.3-.2 2.4-.4 2.3 1.5 2.3-.7 2.4-1.1 2.3 .3 2.3-.6 2.3 1.1 2.4 .9 2.3 0 2.3 .7 2.4-.5 2.3-.5 2.3 .2 2.4-1.9 2.3 .8 2.3 1.6 2.4-2.6 2.3 .5 2.3 .6 2.3-1.6 2.4 2.9 2.3-.6 2.3-.6 2.4 1.1 2.3-1.8 2.3 1.7 2.4-1.5 2.3-1.2 2.3 1.4 2.4 1.4 2.3 0 2.3-1 2.3 .9 2.4 .5 2.3 3 2.3 0 2.4 0 2.3 0 2.3 0 2.4 0 2.3 0 2.3 0 2.4 0 2.3 0 2.3 0 2.3 0 2.4 0 2.3 0 2.3 0 2.4 0 2.3 0 2.3 0 2.4 0 2.3 0 2.3 0 2.4 0 2.3 0 2.3 0 2.3 0 2.4 0 2.3 0 2.3 0 2.4 0 2.3 0 2.3 0 2.4 0 2.3 0 2.3 0 2.4 0 2.3 0 2.3 0 2.3 0 2.4 0 2.3 0 2.3 0 2.4 0 2.3 0 2.3 0 2.4 0 2.3 0 2.3 0 2.4 0 2.3 0 2.3 0 2.3 0 2.4 0 2.3 0" stroke="#705DA0" fill="none" clip-path="url(#c8)"/><path d="M664 644.3l2.3 0 2.4 0 2.3 0 2.3 0 2.4 0 2.3 0 2.3 0 2.3 0 2.4 0 2.3 0 2.3 0 2.4 0 2.3 0 2.3 0 2.4 0 2.3 0 2.3 0 2.4 0 2.3 0 2.3 0 2.3 0 2.4 0 2.3 0 2.3 0 2.4 0 2.3 0 2.3 0 2.4 0 2.3 0 2.3-.1 2.4-.2 2.3-.1 2.3-.1 2.3-.2 2.4 0 2.3 0 2.3 0 2.4 0 2.3 0 2.3 0 2.4 0 2.3 0 2.3 0 2.3 0 2.4 0 2.3 0 2.3 0 2.4 0 2.3 0 2.3 0 2.4 0 2.3 0 2.3 0 2.4 0 2.3 0 2.3 0 2.3 0 2.4 0 2.3 0 2.3 0 2.4 0 2.3 0 2.3 0 2.4 0 2.3 0 2.3 0 2.4-1 2.3-2.4 2.3 .2 2.3-1.8 2.4 .7 2.3 .5 2.3-1 2.4 1.6 2.3-1.5 2.3-.3 2.4 0 2.3 2.5 2.3 .3 2.4-3 2.3 2.6 2.3-17.3 2.3-.5 2.4 .4 2.3 0 2.3 16.3 2.4 .8 2.3-15.8 2.3-1.9 2.4 .3 2.3 1 2.3 17.7 2.4-.4 2.3-16.9 2.3-1.6 2.3 .5 2.4-.5 2.3 18.9 2.3-2.1 2.4-15.5 2.3-.7 2.3-.9 2.4 18.5 2.3 .7 2.3-1.2 2.4-17.1 2.3 .9 2.3 14.2 2.3 1.1 2.4-.8 2.3 .1 2.3 1.1 2.4-.7 2.3 1.2 2.3-1.1 2.4 1.5 2.3-1.6 2.3 .1 2.4-.9 2.3 .6 2.3 2.1 2.3-.9 2.4-2.3 2.3 1.6 2.3-.7 2.4 2.1 2.3-1.2 2.3-1.2 2.4 2.3 2.3-2.4 2.3 .3 2.3 1.7 2.4-2.6 2.3 0 2.3 .5 2.4 .9 2.3 .5 2.3-.4 2.4 1.2 2.3-1.1 2.3-1 2.4 1.4 2.3-1.4 2.3 .3 2.3 1.3 2.4 .9 2.3-1.4 2.3 1.6 2.4-1.9 2.3 1 2.3-2.5 2.4 1 2.3 .5 2.3-.8 2.4 2.1 2.3-1.4 2.3 1.8 2.3 .1 2.4-.9 2.3 3.8 2.3 0 2.4 0 2.3 0 2.3 0 2.4 0 2.3 0 2.3 0 2.4 0 2.3 0 2.3 0 2.3 0 2.4 0 2.3 0 2.3 0 2.4 0 2.3 0 2.3 0 2.4 0 2.3 0 2.3 0 2.4 0 2.3 0 2.3 0 2.3 0 2.4 0 2.3 0 2.3 0 2.4 0 2.3 0 2.3 0 2.4 0 2.3 0 2.3 0 2.4 0 2.3 0 2.3 0 2.3 0 2.4 0 2.3 0 2.3 0 2.4 0 2.3 0 2.3 0 2.4 0 2.3 0 2.3 0 2.4 0 2.3 0 2.3 0 2.3 0 2.4 0 2.3 0" stroke="#508642" fill="none" clip-path="url(#c8)"/><path d="M664 644.3l2.3 0 2.4 0 2.3 0 2.3 0 2.4 0 2.3 0 2.3 0 2.3 0 2.4 0 2.3 0 2.3 0 2.4 0 2.3 0 2.3 0 2.4 0 2.3 0 2.3 0 2.4 0 2.3 0 2.3 0 2.3 0 2.4 0 2.3 0 2.3 0 2.4 0 2.3 0 2.3 0 2.4 0 2.3 0 2.3-.1 2.4-.2 2.3-.1 2.3-.1 2.3-.2 2.4 0 2.3 0 2.3 0 2.4 0 2.3 0 2.3 0 2.4 0 2.3 0 2.3 0 2.3 0 2.4 0 2.3 0 2.3 0 2.4 0 2.3 0 2.3 0 2.4 0 2.3 0 2.3 0 2.4 0 2.3 0 2.3 0 2.3 0 2.4 0 2.3 0 2.3 0 2.4 0 2.3 0 2.3 0 2.4 0 2.3 0 2.3 0 2.4-1.1 2.3-1.7 2.3-2.3 2.3 1.5 2.4-.9 2.3 1.6 2.3-2.4 2.4 1.8 2.3 .3 2.3 .4 2.4 .4 2.3-3 2.3 1.9 2.4-.4 2.3-1 2.3 .7 2.3 1.2 2.4 .6 2.3-.4 2.3-1.9 2.4 .5 2.3 1.9 2.3-1.2 2.4-1.8 2.3 1.6 2.3-1.7 2.4 .2 2.3-.1 2.3 1 2.3-1 2.4-.1 2.3 .8 2.3 1.4 2.4 .3 2.3-.6 2.3-1.9 2.4 2.7 2.3-2.5 2.3 .4 2.4 0 2.3 1.6 2.3-.7 2.3-.7 2.4 2.2 2.3-1.9 2.3 1 2.4 .5 2.3-1.8 2.3 .8 2.4 .2 2.3 0 2.3-1.9 2.4 1.8 2.3 1.6 2.3-1.4 2.3 0 2.4-1.9 2.3 2.1 2.3-.1 2.4 .3 2.3-1.6 2.3 .7 2.4-1.5 2.3 3.2 2.3-1.1 2.3 .4 2.4-2.2 2.3 1.5 2.3 0 2.4-14.8 2.3 .3 2.3 15.4 2.4-1.2 2.3-17.4 2.3 2.1 2.4 16.5 2.3-16.1 2.3-1.2 2.3 16.1 2.4-.7 2.3-13.6 2.3-1.7 2.4 15.9 2.3-14.1 2.3-3.1 2.4 18.5 2.3-1.7 2.3-16.7 2.4 1 2.3 17.1 2.3 .2 2.3-17.9 2.4 4.6 2.3 16.9 2.3 0 2.4 0 2.3 0 2.3 0 2.4 0 2.3 0 2.3 0 2.4 0 2.3 0 2.3 0 2.3 0 2.4 0 2.3 0 2.3 0 2.4 0 2.3 0 2.3 0 2.4 0 2.3 0 2.3 0 2.4 0 2.3 0 2.3 0 2.3 0 2.4 0 2.3 0 2.3 0 2.4 0 2.3 0 2.3 0 2.4 0 2.3 0 2.3 0 2.4 0 2.3 0 2.3 0 2.3 0 2.4 0 2.3 0 2.3 0 2.4 0 2.3 0 2.3 0 2.4 0 2.3 0 2.3 0 2.4 0 2.3 0 2.3 0 2.3 0 2.4 0 2.3 0" stroke="#CCA300" fill="none" clip-path="url(#c8)"/><path d="M664 644.3l2.3 0 2.4 0 2.3 0 2.3 0 2.4 0 2.3 0 2.3 0 2.3 0 2.4 0 2.3 0 2.3 0 2.4 0 2.3 0 2.3 0 2.4 0 2.3 0 2.3 0 2.4 0 2.3 0 2.3 0 2.3 0 2.4 0 2.3 0 2.3 0 2.4 0 2.3 0 2.3 0 2.4 0 2.3 0 2.3-.1 2.4-.2 2.3-.1 2.3-.1 2.3-.2 2.4 0 2.3 0 2.3 0 2.4 0 2.3 0 2.3 0 2.4 0 2.3 0 2.3 0 2.3 0 2.4 0 2.3 0 2.3 0 2.4 0 2.3 0 2.3 0 2.4 0 2.3 0 2.3 0 2.4 0 2.3 0 2.3 0 2.3 0 2.4 0 2.3 0 2.3 0 2.4 0 2.3 0 2.3 0 2.4 0 2.3 0 2.3 0 2.4-.9 2.3-2.1 2.3 .3 2.3-.3 2.4-2 2.3 2.6 2.3-.6 2.4-.7 2.3 .8 2.3-1.1 2.4-1.1 2.3 .7 2.3-.6 2.4 .1 2.3 .5 2.3 1.2 2.3-.5 2.4 0 2.3-.5 2.3 .3 2.4-.5 2.3 1.6 2.3-1.5 2.4-.3 2.3 .3 2.3-.2 2.4 2.2 2.3-2.1 2.3 1.3 2.3-.5 2.4-.5 2.3 1.4 2.3-.6 2.4-.8 2.3 1.5 2.3-.7 2.4-.9 2.3 2 2.3-2.4 2.4 .3 2.3 1.8 2.3-.4 2.3-.1 2.4-2.5 2.3 1.4 2.3 1.9 2.4-1.5 2.3-1 2.3 1.5 2.4 .9 2.3-1 2.3-1.1 2.4-.2 2.3 1.6 2.3-2 2.3 .1 2.4 1.7 2.3-1.8 2.3 2.8 2.4-1.3 2.3-.3 2.3 1 2.4 .6 2.3-2.3 2.3 0 2.3 .5 2.4 1 2.3-2.4 2.3 .8 2.4 2.4 2.3-1.2 2.3-1.5 2.4 .8 2.3-.5 2.3 1.1 2.4 .7 2.3 .6 2.3-1.2 2.3-.6 2.4 .4 2.3 .4 2.3-.1 2.4 .2 2.3-.9 2.3-.8 2.4 1.9 2.3 .1 2.3-1.6 2.4 1.7 2.3-1.4 2.3-.9 2.3 1.5 2.4 .2 2.3 4 2.3 0 2.4-18.7 2.3 .7 2.3-.5 2.4-.1 2.3 .6 2.3 .3 2.4 .1 2.3 .7 2.3 .5 2.3 .2 2.4 .1 2.3 .4 2.3 .4 2.4 .1 2.3 0 2.3 0 2.4 .4 2.3 .5 2.3-.2 2.4 1 2.3 .3 2.3-.1 2.3 .6 2.4 .1 2.3-.3 2.3 .6 2.4 .1 2.3 1 2.3 .7 2.4 10.5 2.3 0 2.3 0 2.4 0 2.3 0 2.3 0 2.3 0 2.4 0 2.3 0 2.3 0 2.4 0 2.3 0 2.3 0 2.4 0 2.3 0 2.3 0 2.4 0 2.3 0 2.3 0 2.3 0 2.4 0 2.3 0" stroke="#447EBC" fill="none" clip-path="url(#c8)"/><path d="M664 644.3l2.3 0 2.4 0 2.3 0 2.3 0 2.4 0 2.3 0 2.3 0 2.3 0 2.4 0 2.3 0 2.3 0 2.4 0 2.3 0 2.3 0 2.4 0 2.3 0 2.3 0 2.4 0 2.3 0 2.3 0 2.3 0 2.4 0 2.3 0 2.3 0 2.4 0 2.3 0 2.3 0 2.4 0 2.3 0 2.3-.1 2.4-.2 2.3-.1 2.3-.1 2.3-.2 2.4 0 2.3 0 2.3 0 2.4 0 2.3 0 2.3 0 2.4 0 2.3 0 2.3 0 2.3 0 2.4 0 2.3 0 2.3 0 2.4 0 2.3 0 2.3 0 2.4 0 2.3 0 2.3 0 2.4 0 2.3 0 2.3 0 2.3 0 2.4 0 2.3 0 2.3 0 2.4 0 2.3 0 2.3 0 2.4 0 2.3 0 2.3 0 2.4-1.3 2.3-.9 2.3-.6 2.3-.7 2.4 1.1 2.3-.3 2.3 0 2.4 .3 2.3-.4 2.3 .1 2.4-1.7 2.3 .2 2.3 0 2.4 0 2.3 1.6 2.3-.9 2.3 .1 2.4 .2 2.3-1.2 2.3 .5 2.4-.2 2.3 1 2.3 .8 2.4-.9 2.3-1.1 2.3-.2 2.4 0 2.3-.3 2.3 .7 2.3-.8 2.4 .1 2.3 1.8 2.3-.3 2.4-1.2 2.3 1.2 2.3-.3 2.4 1.3 2.3-.8 2.3-1.5 2.4-.6 2.3 2.7 2.3-2.2 2.3 1.8 2.4-2.5 2.3 2.3 2.3-.7 2.4 1.5 2.3-2.9 2.3-.1 2.4 2.2 2.3-1.6 2.3 1.7 2.4-.9 2.3-.3 2.3 .3 2.3-1 2.4 2.7 2.3-2.4 2.3 .2 2.4 0 2.3-1.1 2.3 2 2.4-.7 2.3-1.2 2.3 .4 2.3-.5 2.4 1.7 2.3-.7 2.3 .3 2.4 1 2.3-1.6 2.3 .7 2.4-.6 2.3-.1 2.3 1 2.4-.6 2.3-.1 2.3-.4 2.3 .3 2.4-.6 2.3 1 2.3 1.1 2.4 1 2.3-2.7 2.3 2.6 2.4-1.5 2.3 1.1 2.3-1.7 2.4 1.9 2.3-1.2 2.3 .5 2.3 .6 2.4 .3 2.3 2.9 2.3 0 2.4 0 2.3 0 2.3 0 2.4 0 2.3 0 2.3 0 2.4 0 2.3 0 2.3 0 2.3 0 2.4 0 2.3 0 2.3 0 2.4 0 2.3 0 2.3 0 2.4 0 2.3 0 2.3 0 2.4 0 2.3 0 2.3 0 2.3 0 2.4 0 2.3 0 2.3 0 2.4 0 2.3 0 2.3 0 2.4 0 2.3 0 2.3 0 2.4 0 2.3 0 2.3 0 2.3 0 2.4 0 2.3 0 2.3 0 2.4 0 2.3 0 2.3 0 2.4 0 2.3 0 2.3 0 2.4 0 2.3 0 2.3 0 2.3 0 2.4 0 2.3 0" stroke="#C15C17" fill="none" clip-path="url(#c8)"/><path d="M664 644.3l2.3 0 2.4 0 2.3 0 2.3 0 2.4 0 2.3 0 2.3 0 2.3 0 2.4 0 2.3 0 2.3 0 2.4 0 2.3 0 2.3 0 2.4 0 2.3 0 2.3 0 2.4 0 2.3 0 2.3 0 2.3 0 2.4 0 2.3 0 2.3 0 2.4 0 2.3 0 2.3 0 2.4 0 2.3 0 2.3-.1 2.4-.2 2.3-.1 2.3-.1 2.3-.2 2.4 0 2.3 0 2.3 0 2.4 0 2.3 0 2.3 0 2.4 0 2.3 0 2.3 0 2.3 0 2.4 0 2.3 0 2.3 0 2.4 0 2.3 0 2.3 0 2.4 0 2.3 0 2.3 0 2.4 0 2.3-11.8 2.3-3.4 2.3-1 2.4 1.2 2.3-.8 2.3 .1 2.4-.2 2.3 .7 2.3-.2 2.4-.8 2.3 .1 2.3-1.9 2.4-1.3 2.3-1 2.3 .7 2.3-.7 2.4-.4 2.3-.2 2.3 .1 2.4 .2 2.3 .1 2.3 .7 2.4-1.1 2.3 1 2.3-.2 2.4-.2 2.3 17.2 2.3 .8 2.3-1.5 2.4-.8 2.3-.1 2.3 2.5 2.4-1 2.3-2 2.3 3.1 2.4-1.3 2.3 .3 2.3-2 2.4 2.2 2.3-.4 2.3 .5 2.3 .2 2.4-2.5 2.3-.2 2.3 1.2 2.4 1.7 2.3-1.4 2.3 .9 2.4-2.4 2.3-.2 2.3 2.9 2.4-2.9 2.3 3.1 2.3-.2 2.3-2.7 2.4 1.6 2.3-.4 2.3 1.1 2.4-1 2.3-.8 2.3 .1 2.4 1.2 2.3 .2 2.3-2.1 2.4 1.4 2.3-.1 2.3-.7 2.3 1.8 2.4-1.2 2.3 2.1 2.3-3.1 2.4 1.1 2.3 1.7 2.3-3.1 2.4 2.7 2.3-2.4 2.3 2.9 2.3-1.1 2.4-1.2 2.3 2.3 2.3-2.9 2.4 2.5 2.3-.3 2.3-2.5 2.4 .8 2.3 1.8 2.3-2.5 2.4 2.6 2.3-1.5 2.3 1.5 2.3-2.7 2.4 .4 2.3-.3 2.3 1.1 2.4 1.1 2.3 .4 2.3 .6 2.4-.2 2.3-1.4 2.3-.5 2.4-.9 2.3 2.6 2.3-1.7 2.3 1.6 2.4 .7 2.3 2.7 2.3 0 2.4 0 2.3 0 2.3 0 2.4 0 2.3 0 2.3 0 2.4 0 2.3 0 2.3 0 2.3 0 2.4 0 2.3 0 2.3 0 2.4 0 2.3 0 2.3 0 2.4 0 2.3 0 2.3 0 2.4 0 2.3 0 2.3 0 2.3 0 2.4 0 2.3 0 2.3 0 2.4 0 2.3 0 2.3 0 2.4 0 2.3 0 2.3 0 2.4 0 2.3 0 2.3 0 2.3 0 2.4 0 2.3 0 2.3 0 2.4 0 2.3 0 2.3 0 2.4 0 2.3 0 2.3 0 2.4 0 2.3 0 2.3 0 2.3 0 2.4 0 2.3 0" stroke="#890F02" fill="none" clip-path="url(#c8)"/><path d="M664 644.3l2.3 0 2.4 0 2.3 0 2.3 0 2.4 0 2.3 0 2.3 0 2.3 0 2.4 0 2.3 0 2.3 0 2.4 0 2.3 0 2.3 0 2.4 0 2.3 0 2.3 0 2.4 0 2.3 0 2.3 0 2.3 0 2.4 0 2.3 0 2.3 0 2.4 0 2.3 0 2.3 0 2.4 0 2.3 0 2.3-.1 2.4-.2 2.3-.1 2.3-.1 2.3-.2 2.4 0 2.3 0 2.3-8 2.4-8 2.3 .3 2.3-.3 2.4-.3 2.3 .6 2.3-.3 2.3 .1 2.4 .2 2.3-.6 2.3 0 2.4 .5 2.3-.2 2.3-.3 2.4 .1 2.3-.1 2.3 .2 2.4 3.5 2.3 12.6 2.3 0 2.3 0 2.4 0 2.3 0 2.3 0 2.4 0 2.3 0 2.3 0 2.4 0 2.3 0 2.3 0 2.4-1 2.3-1 2.3-2 2.3 .8 2.4 1 2.3-1.7 2.3 .1 2.4 .3 2.3-.3 2.3-.3 2.4-.8 2.3-.3 2.3 2.2 2.4-1.5 2.3 .4 2.3-.2 2.3-.6 2.4 1.6 2.3 .5 2.3 0 2.4-1.1 2.3 .8 2.3 .4 2.4-1.8 2.3 .7 2.3-1.1 2.4 1.8 2.3 .5 2.3-1.1 2.3 1.3 2.4 .1 2.3-3 2.3 2.1 2.4-.7 2.3-1.2 2.3 2.6 2.4 .3 2.3-1.5 2.3-1.4 2.4 2.6 2.3-.6 2.3-1.2 2.3 2 2.4-.2 2.3-2.6 2.3 1.3 2.4 1.6 2.3-.2 2.3-.1 2.4-2.3 2.3 .8 2.3-1.2 2.4 2.8 2.3-2.3 2.3 1.7 2.3 .7 2.4-2.8 2.3 2.2 2.3-.6 2.4 .1 2.3 .2 2.3-1.3 2.4 1 2.3-1.3 2.3 1.5 2.3 .1 2.4 .6 2.3 .1 2.3-.9 2.4 1.2 2.3-.2 2.3-2.1 2.4 1.6 2.3-.9 2.3 .6 2.4-.3 2.3 1.1 2.3-1.5 2.3-.9 2.4 0 2.3 2.3 2.3 .3 2.4-1.6 2.3-1.3 2.3 .1 2.4 2 2.3 .1 2.3-1.7 2.4-.9 2.3 2.2 2.3 0 2.3 .5 2.4 .6 2.3 2.9 2.3 0 2.4 0 2.3 0 2.3 0 2.4 0 2.3 0 2.3 0 2.4 0 2.3 0 2.3 0 2.3 0 2.4 0 2.3 0 2.3 0 2.4 0 2.3 0 2.3 0 2.4 0 2.3 0 2.3 0 2.4 0 2.3 0 2.3 0 2.3 0 2.4 0 2.3 0 2.3 0 2.4 0 2.3 0 2.3 0 2.4 0 2.3 0 2.3 0 2.4 0 2.3 0 2.3 0 2.3 0 2.4 0 2.3 0 2.3 0 2.4 0 2.3 0 2.3 0 2.4 0 2.3 0 2.3 0 2.4 0 2.3 0 2.3 0 2.3 0 2.4 0 2.3 0" stroke="#0A437C" fill="none" clip-path="url(#c8)"/><path d="M664 644.3l2.3 0 2.4 0 2.3 0 2.3 0 2.4 0 2.3 0 2.3 0 2.3 0 2.4 0 2.3 0 2.3 0 2.4 0 2.3 0 2.3 0 2.4 0 2.3 0 2.3 0 2.4 0 2.3 0 2.3 0 2.3 0 2.4 0 2.3 0 2.3 0 2.4 0 2.3 0 2.3 0 2.4 0 2.3 0 2.3-.1 2.4-.2 2.3-.1 2.3-.1 2.3-.2 2.4 0 2.3 0 2.3 0 2.4 0 2.3 0 2.3 0 2.4 0 2.3 0 2.3 0 2.3 0 2.4 0 2.3 0 2.3 0 2.4 0 2.3 0 2.3 0 2.4 0 2.3 0 2.3 0 2.4 0 2.3 0 2.3 0 2.3 0 2.4 0 2.3 0 2.3 0 2.4 0 2.3 0 2.3 0 2.4 0 2.3 0 2.3 0 2.4-.8 2.3-2.8 2.3-.7 2.3 1.6 2.4-1.4 2.3-.3 2.3 1.3 2.4-1.1 2.3-1.1 2.3 .4 2.4 .8 2.3-.6 2.3 0 2.4 2.3 2.3-.6 2.3-2.2 2.3-.1 2.4 2.9 2.3-.7 2.3-1 2.4-.5 2.3 1.9 2.3-1.4 2.4-1.1 2.3 0 2.3 1.6 2.4-1 2.3 1 2.3-1.1 2.3 2.5 2.4-3.2 2.3 2.2 2.3-2.3 2.4 .7 2.3 2.3 2.3-1.1 2.4 1.2 2.3-1.5 2.3-.9 2.4 2.4 2.3 .1 2.3-2.6 2.3-.3 2.4 .9 2.3 2.1 2.3-1.8 2.4 .1 2.3 .4 2.3 .3 2.4-1.9 2.3 .1 2.3-.1 2.4 .7 2.3 1.4 2.3-1.5 2.3 1.3 2.4-1.3 2.3 1.1 2.3-1.3 2.4 1 2.3 1.4 2.3-1.5 2.4-1 2.3 2.6 2.3-.7 2.3-1.3 2.4 1.4 2.3-2.4 2.3 0 2.4 2.9 2.3-2.1 2.3-.1 2.4 0 2.3 .8 2.3-.6 2.4-1.2 2.3 .7 2.3 2.6 2.3-3.2 2.4 1.4 2.3-1.1 2.3 2.6 2.4-.6 2.3-.1 2.3-.5 2.4-.5 2.3-.7 2.3 .8 2.4 1.6 2.3-2.6 2.3 1.7 2.3 0 2.4 .3 2.3 3.8 2.3 0 2.4 0 2.3 0 2.3 0 2.4 0 2.3 0 2.3 0 2.4 0 2.3 0 2.3 0 2.3 0 2.4 0 2.3 0 2.3 0 2.4 0 2.3 0 2.3 0 2.4 0 2.3 0 2.3 0 2.4 0 2.3 0 2.3 0 2.3 0 2.4 0 2.3 0 2.3 0 2.4 0 2.3 0 2.3 0 2.4 0 2.3 0 2.3 0 2.4 0 2.3 0 2.3 0 2.3 0 2.4 0 2.3 0 2.3 0 2.4 0 2.3 0 2.3 0 2.4 0 2.3 0 2.3 0 2.4 0 2.3 0 2.3 0 2.3 0 2.4 0 2.3 0" stroke="#6D1F62" fill="none" clip-path="url(#c8)"/><path d="M664 644.3l2.3 0 2.4 0 2.3 0 2.3 0 2.4 0 2.3 0 2.3 0 2.3 0 2.4 0 2.3 0 2.3 0 2.4 0 2.3 0 2.3 0 2.4 0 2.3 0 2.3 0 2.4 0 2.3 0 2.3 0 2.3 0 2.4 0 2.3 0 2.3 0 2.4 0 2.3 0 2.3 0 2.4 0 2.3 0 2.3-.1 2.4-.2 2.3-.1 2.3-.1 2.3-.2 2.4 0 2.3 0 2.3 0 2.4 0 2.3 0 2.3 0 2.4 0 2.3 0 2.3 0 2.3 0 2.4 0 2.3 0 2.3 0 2.4 0 2.3 0 2.3 0 2.4 0 2.3 0 2.3 0 2.4 0 2.3 0 2.3 0 2.3 0 2.4 0 2.3 0 2.3 0 2.4 0 2.3 0 2.3 0 2.4 0 2.3 0 2.3 0 2.4-1.4 2.3-1 2.3-1.1 2.3-.4 2.4-.1 2.3-.1 2.3-1.1 2.4 .7 2.3 1.9 2.3-.1 2.4-2.7 2.3 .2 2.3 .8 2.4 .2 2.3-.8 2.3 2 2.3 .5 2.4 .3 2.3-1.4 2.3 .7 2.4-.8 2.3-1 2.3 .6 2.4-.6 2.3 2.2 2.3-1.7 2.4 2 2.3-.2 2.3-1.6 2.3-.2 2.4 .7 2.3 1.4 2.3-1.1 2.4 .1 2.3-1.5 2.3-.7 2.4 .6 2.3 2.2 2.3-2.4 2.4 .7 2.3 1.6 2.3-2.7 2.3 1.9 2.4 1.2 2.3-1.4 2.3 .8 2.4-1.4 2.3 1.2 2.3-1.6 2.4 0 2.3-.2 2.3 2.3 2.4-2.1 2.3 1.2 2.3-.4 2.3-.2 2.4-.1 2.3 .8 2.3-1.3 2.4 .9 2.3-.4 2.3 .2 2.4-.3 2.3 1.6 2.3-1.9 2.3 2.2 2.4-1 2.3-.9 2.3 .8 2.4-1.1 2.3 2.3 2.3-2.6 2.4-.4 2.3 .3 2.3 .9 2.4-1.5 2.3 3.2 2.3-1.9 2.3 1.2 2.4-1.8 2.3 1.7 2.3 .8 2.4-1.4 2.3 .6 2.3-1.7 2.4 2.6 2.3-1.4 2.3 0 2.4-1.1 2.3 1.1 2.3-1.2 2.3-.4 2.4 2.8 2.3 3.1 2.3 0 2.4 0 2.3 0 2.3 0 2.4 0 2.3 0 2.3 0 2.4 0 2.3 0 2.3 0 2.3 0 2.4 0 2.3 0 2.3 0 2.4 0 2.3 0 2.3 0 2.4 0 2.3 0 2.3 0 2.4 0 2.3 0 2.3 0 2.3 0 2.4 0 2.3 0 2.3 0 2.4 0 2.3 0 2.3 0 2.4 0 2.3 0 2.3 0 2.4 0 2.3 0 2.3 0 2.3 0 2.4 0 2.3 0 2.3 0 2.4 0 2.3 0 2.3 0 2.4 0 2.3 0 2.3 0 2.4 0 2.3 0 2.3 0 2.3 0 2.4 0 2.3 0" stroke="#584477" fill="none" clip-path="url(#c8)"/><path d="M664 644.3l2.3 0 2.4 0 2.3 0 2.3 0 2.4 0 2.3 0 2.3 0 2.3 0 2.4 0 2.3 0 2.3 0 2.4 0 2.3 0 2.3 0 2.4 0 2.3 0 2.3 0 2.4 0 2.3 0 2.3 0 2.3 0 2.4 0 2.3 0 2.3 0 2.4 0 2.3 0 2.3 0 2.4 0 2.3 0 2.3-.1 2.4-.2 2.3-.1 2.3-.1 2.3-.2 2.4 0 2.3 0 2.3 0 2.4 0 2.3 0 2.3 0 2.4 0 2.3 0 2.3 0 2.3 0 2.4 0 2.3 0 2.3 0 2.4 0 2.3 0 2.3 0 2.4 0 2.3 0 2.3 0 2.4 0 2.3 0 2.3 0 2.3 0 2.4 0 2.3 0 2.3 0 2.4 0 2.3 0 2.3 0 2.4 0 2.3 0 2.3 0 2.4-1 2.3-1.6 2.3 .4 2.3-.6 2.4 .3 2.3-2.9 2.3 1 2.4-.2 2.3 1.2 2.3-.8 2.4-.4 2.3 .2 2.3-.1 2.4 .1 2.3 1.8 2.3-2.9 2.3 .1 2.4 1.3 2.3-.7 2.3 1.6 2.4 .1 2.3 .1 2.3 0 2.4-.1 2.3-.9 2.3 .4 2.4-.7 2.3-1.1 2.3 3.1 2.3-.2 2.4-.7 2.3-2.1 2.3 .6 2.4-.3 2.3 2 2.3 0 2.4-1.2 2.3 1 2.3-.5 2.4-.7 2.3-1 2.3-6.1 2.3-9.3 2.4 .8 2.3-.1 2.3-1.2 2.4 .7 2.3-.1 2.3-.2 2.4 .7 2.3-.9 2.3-.2 2.4 .2 2.3-.1 2.3 .2 2.3-.4 2.4 .4 2.3 .2 2.3 .4 2.4-.1 2.3-.7 2.3 .1 2.4 .3 2.3 .6 2.3-.8 2.3 .9 2.4-.9 2.3 .8 2.3 14.9 2.4 1.2 2.3-1.3 2.3-.1 2.4 2.9 2.3-2.4 2.3 .2 2.4 .6 2.3 .2 2.3 .7 2.3-.2 2.4-1.2 2.3 2.2 2.3-2.6 2.4 1.3 2.3 1.6 2.3-1.5 2.4-.5 2.3 0 2.3 1.9 2.4-2.4 2.3-.1 2.3 .4 2.3 .3 2.4 .8 2.3 4 2.3 0 2.4 0 2.3 0 2.3 0 2.4 0 2.3 0 2.3 0 2.4 0 2.3 0 2.3 0 2.3 0 2.4 0 2.3 0 2.3 0 2.4 0 2.3 0 2.3 0 2.4 0 2.3 0 2.3 0 2.4 0 2.3 0 2.3 0 2.3 0 2.4 0 2.3 0 2.3 0 2.4 0 2.3 0 2.3 0 2.4 0 2.3 0 2.3 0 2.4 0 2.3 0 2.3 0 2.3 0 2.4 0 2.3 0 2.3 0 2.4 0 2.3 0 2.3 0 2.4 0 2.3 0 2.3 0 2.4 0 2.3 0 2.3 0 2.3 0 2.4 0 2.3 0" stroke="#B7DBAB" fill="none" clip-path="url(#c8)"/><path d="M664 644.3l1.2 0 1.1 0 1.2 0 1.2 0 1.1 0 1.2 0 1.2 0 1.1 0 1.2 0 1.2 0 1.1 0 1.2 0 1.1 0 1.2 0 1.2 35.4 1.1 15.5 1.2 20.7 1.2-26.5 1.1-14.7 1.2 12.8 1.2 27.5 1.1 26.1 1.2-18.6 1.2-3.4 1.1-21.3 1.2 24.6 1.2 18.3 1.1 13.6 1.2 36.3 1.2-38.5 1.1-9.7 1.2-17.5 1.2-28.9 1.1-15.3 1.2 6.3 1.2 26.6 1.1-11.9 1.2 13.8 1.1-11.8 1.2 12.8 1.2-.3 1.1 31.2 1.2-2.3 1.2 44.1 1.1-46.2 1.2-19.8 1.2-7.5 1.1-23.1 1.2-15.5 1.2 18.8 1.1 27.4 1.2-2.9 1.2-8.5 1.1-8 1.2 12.5 1.2 3.4 1.1 15.9 1.2 12.7 1.2 26.8 1.1-7.1 1.2-37.8 1.2-18.7 1.1-33.7 1.2 2.6 1.1 8.8 1.2 36.6 1.2-12.7 1.1-22.2 1.2-2.7 1.2 17.3 1.1 36.1 1.2-12 1.2 26.5 1.1 10.1 1.2-38.1 1.2-7.6 1.1-29.7 1.2-16.2 1.2 12.5 1.1 18.6 1.2 17.9 1.2-16.8 1.1-4.2 1.2 2.3 1.2 3.2 1.1 36.4 1.2-9.8 1.1 31.1 1.2-12.7 1.2-21.3 1.1-15.2 1.2-27.8 1.2-16.5 1.1 20.1 1.2 33.7 1.2 2.5 1.1-24.4 1.2 9.1 1.2-5 1.1 19.3 1.2 20.3 1.2 30.4 1.1 7.8 1.2-24.5 1.2-19.5 1.1-22.6 1.2-32.5 1.2-8.9 1.1 8.5 1.2 23.1 1.2-5.7 1.1 6.7 1.2-12.8 1.1 16.9 1.2 13.1 1.2-7.1 1.1 19.1 1.2 22.6 1.2-28 1.1-25.1 1.2-18.5 1.2-12.3 1.1 4.3 1.2 7.9 1.2 37 1.1-17 1.2-8.6 1.2-3.4 1.1 13.5 1.2 27.7 1.2 14.8 1.1-21.9 1.2-11.8 1.2-19.5 1.1-27.1 1.2-13.4 1.2-13 1.1-.1 1.2 .6 1.1-2.7 1.2 8.2 1.2-3.6 1.1 8.4 1.2-3.9 1.2-4.2 1.1-3.2 1.2-.6 1.2-1.4 1.1 0 1.2 1.4 1.2-.9 1.1 1.1 1.2 1 1.2 1.3 1.1 .7 1.2-1.4 1.2 4.5 1.1 9.9 1.2 .5 1.2-10.2 1.1-7 1.2 1.1 1.2-.2 1.1-.5 1.2-.4 1.1 .4 1.2 1.4 1.2 3.7 1.1 4.8 1.2-2.2 1.2-1.9 1.1-4.4 1.2-.6 1.2-2.6 1.1 3.6 1.2-1.1 1.2 .3 1.1-2.4 1.2 4.6 1.2-.8 1.1 7.4 1.2 11.6 1.2-13.2 1.1-8 1.2 1.2 1.2 2.6 1.1-2.5 1.2-.6 1.1 1 1.2-.4 1.2 9.4 1.1 6 1.2-6.4 1.2-4.6 1.1-6.3 1.2-.2 1.2 1.2 1.1 0 1.2 1.1 1.2 .6 1.1 5.1 1.2 9.1 1.2 1.7 1.1-14.8 1.2-2.1 1.2-1.7 1.1 4 1.2-3.1 1.2-1.7 1.1 1.5 1.2 .1 1.2 6.4 1.1 5.1 1.2-.8 1.1-7.5 1.2-2.9 1.2-1.4 1.1 1.3 1.2 .1 1.2 .4 1.1-.2 1.2 3.1 1.2-3.9 1.1 2.9 1.2-.5 1.2 9.8 1.1 7.8 1.2-12.5 1.2-7.4 1.1-.1 1.2-.2 1.2 .4 1.1-1.1 1.2 .8 1.2-1.7 1.1 2.4 1.2 .2 1.2-1.1 1.1 2.4 1.2 8.1 1.1 8.7 1.2-6.4 1.2-11.8 1.1 .2 1.2-.9 1.2-.6 1.1 1.4 1.2 3.1 1.2-3.6 1.1 6.6 1.2 10.9 1.2-7.1 1.1-8.3 1.2-1.9 1.2-2.1 1.1 2.1 1.2 5.6 1.2-6.8 1.1 .1 1.2 1.3 1.2 6.1 1.1 9.3 1.2-9 1.1-4.1 1.2 4.4 1.2-8.7 1.1 1.7 1.2 2.1 1.2-3.2 1.1 1 1.2 2.6 1.2 1.2 1.1 7.2 1.2 .1 1.2-2.9 1.1-8.6 1.2-.2 1.2-.7 1.1 1.1 1.2 1.3 1.2-1.5 1.1 .2 1.2-.3 1.2-.7 1.1 3.2 1.2 2.8 1.2 4.9 1.1 4.8 1.2-6.2 1.1-5.6 1.2-3 1.2 3.5 1.1-4.5 1.2 4.4 1.2-4.1 1.1 1.4 1.2 1.6 1.2 6.4 1.1 4.4 1.2-8.2 1.2-4.6 1.1-.7 1.2 .7 1.2-.1 1.1-.3 1.2-1.4 1.2 2.2 1.1 5.5 1.2 .6 1.2 9.5 1.1-3.3 1.2-8.3 1.2-4.8 1.1-1.1 1.2-.5 1.1 .5 1.2 1.4 1.2-1.8 1.1 10 1.2 15.7 1.2 31.8 1.1 19.7 1.2 11.1 1.2 25.9 1.1-22 1.2-23.6 1.2-13.6 1.1-8.2 1.2-9.4 1.2 18.3 1.1 19.2 1.2-12.1 1.2-5.8 1.1-1.9 1.2 2.9 1.2 7.6 1.1 12 1.2 14.8 1.2 16 1.1-30 1.2-10.3 1.1-21.8 1.2-14.7 1.2 14.5 1.1 9 1.2 34.7 1.2-12 1.1-3.3 1.2-10.9 1.2 11 1.1 29.3 1.2-.8 1.2 61.5 1.1-57.7 1.2 1.1 1.2-42 1.1-19.4 1.2-16.2 1.2 20.2 1.1 15.5 1.2 6.7 1.2-6.9 1.1-9 1.2 8 1.1 16.7 1.2-2.4 1.2 29.3 1.1 16.2 1.2-26.9 1.2-34.4 1.1 15.3 1.2-40.1 1.2-5.6 1.1 21.1 1.2 15.2 1.2 5 1.1-10.5 1.2 3.5 1.2 18.7 1.1-24.4 1.2 40.2 1.2 9.7 1.1-6.7 1.2-32.5 1.2-3.2 1.1-21 1.2-8.9 1.2-3.7 1.1 22.8 1.2 28.8 1.1-10 1.2-13 1.2-7.7 1.1 3.2 1.2 34.2 1.2 20.1 1.1 25 1.2-15.2 1.2-41.2 1.1-10.2 1.2-17.4 1.2-29 1.1 6.7 1.2 35.4 1.2 3 1.1-15.9 1.2-2.6 1.2-1.2 1.1 10.9 1.2 26.1 1.2-8.6 1.1 21.2 1.2 9.8 1.2-36.4 1.1-16.8 1.2-21 1.1-6.3 1.2 15.6 1.2 22.8 1.1-.6 1.2-1.5 1.2-10.4 1.1 2.7 1.2 20.8" stroke="#F4D598" fill="none" clip-path="url(#c8)"/><path d="M664 644.3l1.2 0 1.1 0 1.2 0 1.2 0 1.1 0 1.2 0 1.2 0 1.1 0 1.2 0 1.2 0 1.1 0 1.2 0 1.1 0 1.2 0 1.2 27.8 1.1 14.2 1.2 10.9 1.2-4.2 1.1-16.7 1.2 9.2 1.2 16.7 1.1-1 1.2-1.5 1.2-1.5 1.1 7.7 1.2-3.3 1.2 22.4 1.1-7.4 1.2 16.2 1.2-6.4 1.1-.9 1.2-21 1.2-19.5 1.1-11 1.2 17.4 1.2 5.2 1.1 8.3 1.2-6.1 1.1 4 1.2-2.7 1.2 15.9 1.1 28.1 1.2 13.6 1.2-6.4 1.1-10.2 1.2-26.3 1.2-20.5 1.1-16 1.2-2.5 1.2 28.5 1.1 10.1 1.2 5.2 1.2-15.4 1.1-8.5 1.2 18.3 1.2 7.8 1.1 23 1.2 35.2 1.2-19.9 1.1-29.5 1.2-15.3 1.2-28.4 1.1-14.4 1.2 16.5 1.1 31.2 1.2 15.9 1.2-22.2 1.1-3.9 1.2-11 1.2 32.9 1.1 16 1.2-6.9 1.2 23 1.1 .1 1.2-30.9 1.2-18.5 1.1-24.1 1.2-15.2 1.2 22.4 1.1 16.5 1.2 20.1 1.2-18.5 1.1-2.6 1.2 7.2 1.2-2.7 1.1 9.6 1.2 32.3 1.1 10.9 1.2-6 1.2-37.4 1.1-17.8 1.2-24.9 1.2-8.3 1.1 16.9 1.2 18.2 1.2-5.3 1.1-7.1 1.2-5.6 1.2 7.1 1.1 18.2 1.2 12.7 1.2 13.3 1.1 4.8 1.2-15.4 1.2-17.9 1.1-18.2 1.2-22.6 1.2 6.4 1.1 21.7 1.2 8.7 1.2 2.6 1.1-8.4 1.2-1.8 1.1 6 1.2 17.4 1.2 46.2 1.1 8.8 1.2-30 1.2-4.3 1.1-22.3 1.2-32.3 1.2-20.6 1.1 12.4 1.2 24.1 1.2-7.5 1.1 4.8 1.2-3.2 1.2 2.2 1.1 12 1.2 3.8 1.2 38.9 1.1-8.2 1.2-26 1.2-19.3 1.1-29.7 1.2-20.9 1.2-9.2 1.1-1.6 1.2-.1 1.1 .6 1.2-1.1 1.2 .3 1.1 3.6 1.2 9.8 1.2 3.6 1.1-11.8 1.2-4.4 1.2-.4 1.1-.9 1.2 1.5 1.2-2 1.1 3.7 1.2 3.7 1.2 .1 1.1 4.6 1.2 1.4 1.2-7.3 1.1-3.5 1.2-.5 1.2 2.1 1.1-3.7 1.2-.8 1.2 1.6 1.1-1 1.2 2.8 1.1-2.8 1.2 2.9 1.2 5.4 1.1 9.1 1.2-1 1.2-13.5 1.1 2.1 1.2-4.5 1.2-.6 1.1 1.8 1.2-1 1.2 5.8 1.1-6.7 1.2 1.4 1.2 1.9 1.1 7 1.2 2.3 1.2-8.2 1.1 1.8 1.2-2.9 1.2 .4 1.1-1.4 1.2-.1 1.1 0 1.2 3.1 1.2 10.6 1.1-8.5 1.2-5.3 1.2-1.1 1.1-.5 1.2-1.1 1.2 1.5 1.1 4.5 1.2-4.7 1.2 1.4 1.1 .7 1.2 3.7 1.2 3.8 1.1 7.9 1.2-9.4 1.2-5.5 1.1-1.6 1.2 .7 1.2-.1 1.1-2.4 1.2-.3 1.2 3.2 1.1-1.9 1.2 3 1.1 4.4 1.2 3.8 1.2-5.2 1.1-4 1.2 .5 1.2-1.8 1.1-2 1.2 4.6 1.2-3.4 1.1 2.2 1.2-2 1.2 .7 1.1 3.7 1.2 7 1.2 3.9 1.1-9.3 1.2-3.7 1.2 3.3 1.1-6.1 1.2 1.8 1.2-2.6 1.1 .1 1.2-.4 1.2 6 1.1-3.2 1.2 9.6 1.1 10.7 1.2-12.2 1.2-7.6 1.1-1.5 1.2-1.3 1.2 3.6 1.1-2.6 1.2 0 1.2 4.4 1.1 9.6 1.2 11.6 1.2-15.2 1.1-6.4 1.2-3.2 1.2-1.6 1.1 3.1 1.2-2.8 1.2 .8 1.1 .1 1.2 1.8 1.2-.2 1.1-1.8 1.2 1.9 1.1 3.8 1.2 3.9 1.2 2.2 1.1-9.7 1.2-2.4 1.2 .4 1.1-1.5 1.2 2.4 1.2-2.5 1.1 6.1 1.2-.5 1.2-3.5 1.1 4.6 1.2 9.7 1.2-5 1.1-7.2 1.2-.6 1.2-3.5 1.1 1.9 1.2-1.4 1.2 1.9 1.1-.6 1.2 17.4 1.2 6.5 1.1-15.3 1.2-4.6 1.1-3.6 1.2 4.2 1.2-3.6 1.1-2.2 1.2-.9 1.2 1.6 1.1 1.4 1.2-.4 1.2 .9 1.1 .2 1.2 5.7 1.2 6.2 1.1-7.5 1.2-5.2 1.2-.7 1.1-1.4 1.2 1.4 1.2 3.3 1.1 4.1 1.2 5.1 1.2-8.7 1.1 2.5 1.2-2.7 1.2-1.6 1.1-1.6 1.2-1.5 1.1 2.4 1.2 1.4 1.2-3.2 1.1 9.7 1.2 22.8 1.2 40.1 1.1 61.8 1.2-2.8 1.2-4.8 1.1-21.7 1.2-23.5 1.2-26 1.1-26.5 1.2 9.3 1.2 14.4 1.1 20.2 1.2-26.7 1.2 4.8 1.1 6.6 1.2 5.8 1.2 11.2 1.1 21.1 1.2 11 1.2-12 1.1-12.3 1.2-16.8 1.1-26.6 1.2-6.2 1.2 9.7 1.1 24.6 1.2 10.4 1.2-19.6 1.1 3.2 1.2 5.1 1.2-6.5 1.1 19.3 1.2 20 1.2 10.5 1.1-25.5 1.2 17.7 1.2-36 1.1-27.6 1.2-4.6 1.2 17.3 1.1 13.9 1.2 4.3 1.2-6.2 1.1-13.8 1.2 13.6 1.1 2.8 1.2 35.2 1.2 34.6 1.1 4.1 1.2-47.8 1.2-30 1.1-13.4 1.2-21.6 1.2 12.2 1.1 17.4 1.2 14.9 1.2-16.4 1.1 6.3 1.2-10.3 1.2 13.4 1.1 15.6 1.2 31.8 1.2 7.9 1.1-4.4 1.2-26.7 1.2-21.4 1.1-26.8 1.2-17.3 1.2 15.5 1.1 27.2 1.2 5.5 1.1-16.7 1.2-8.9 1.2-1.3 1.1 30.3 1.2 4.8 1.2 13.9 1.1 12.4 1.2 14.6 1.2-59.4 1.1 7.7 1.2-30.6 1.2-10.1 1.1 24.9 1.2 39.2 1.2-14.8 1.1-3.3 1.2-18.7 1.2-.6 1.1 39.7 1.2 22.6 1.2-8.3 1.1 17.5 1.2-17.4 1.2-9.3 1.1-25.7 1.2-42.6 1.1 4.1 1.2 22.7 1.2 24.6 1.1-13.4 1.2 .2 1.2-21.3 1.1 26 1.2-4.7" stroke="#70DBED" fill="none" clip-path="url(#c8)"/><path d="M664 644.3l1.2 0 1.1 0 1.2 0 1.2 0 1.1 0 1.2 0 1.2 0 1.1 0 1.2 0 1.2 0 1.1 0 1.2 0 1.1 0 1.2 0 1.2 29.5 1.1 16 1.2 .4 1.2-5.7 1.1 5.9 1.2 13 1.2 27.1 1.1-5.4 1.2-20.9 1.2-4.4 1.1 31.1 1.2 3.4 1.2 24.3 1.1 32.2 1.2-41.5 1.2-21.3 1.1 2.7 1.2-38.1 1.2-15.2 1.1 21.4 1.2 11.4 1.2-.3 1.1-3.1 1.2 10.6 1.1-10.7 1.2 44.2 1.2 3 1.1 5.2 1.2 20.7 1.2-30.9 1.1-23.2 1.2-15.7 1.2-21.4 1.1-14.9 1.2 24.3 1.2 21.9 1.1 6.2 1.2-16.4 1.2-4.7 1.1 16.7 1.2-.7 1.2 28.5 1.1 31.7 1.2-21.1 1.2 .3 1.1-43.4 1.2-7.8 1.2-29.9 1.1 2.3 1.2 28 1.1 14.9 1.2-3.6 1.2-9 1.1-18.1 1.2 21.2 1.2 19.9 1.1 12.8 1.2 23.4 1.2 5.7 1.1-28.2 1.2-20.1 1.2-33.3 1.1-17.6 1.2 17.3 1.2 4.7 1.1 34.3 1.2-7.8 1.2-35.2 1.1 16.1 1.2 17.7 1.2 25.2 1.1 .1 1.2 45.7 1.1-60.5 1.2 6.1 1.2-21.8 1.1-11.6 1.2-34.5 1.2 11 1.1 10.9 1.2 8.6 1.2 9.5 1.1-23.7 1.2 11.7 1.2 38.1 1.1-.2 1.2-7.5 1.2 6.5 1.1-27.2 1.2 4.5 1.2-12.5 1.1-20.6 1.2-3.5 1.2 8.7 1.1 21.2 1.2 21.3 1.2-21.1 1.1-8.7 1.2-.6 1.1 4.5 1.2 41.5 1.2 3.5 1.1 25.4 1.2-17.1 1.2-24.8 1.1-36.6 1.2-20.6 1.2 7 1.1 25.2 1.2 6.9 1.2 3.2 1.1-5.6 1.2 5.5 1.2-14 1.1 38.6 1.2 4.2 1.2 13.9 1.1-1 1.2-44.5 1.2-18.1 1.1-27.5 1.2-15.9 1.2-6.8 1.1 0 1.2 1 1.1-.3 1.2-2.1 1.2 1.1 1.1 4.5 1.2 5.8 1.2 5.4 1.1-6.8 1.2-7.6 1.2 2.2 1.1-.9 1.2-3.5 1.2 1.3 1.1-.9 1.2-.2 1.2 3.1 1.1 2.8 1.2 12.6 1.2 18.7 1.1-22.2 1.2-13.2 1.2 4.1 1.1-4.2 1.2 .3 1.2 .6 1.1-3 1.2 1.5 1.1 2.1 1.2 5 1.2 9.6 1.1 .8 1.2-9.8 1.2-5.9 1.1-2.1 1.2-.9 1.2 2.4 1.1-2.8 1.2 2.9 1.2 1 1.1 9.8 1.2 16.1 1.2-15.5 1.1-10.8 1.2-1.7 1.2 1.3 1.1-1.1 1.2 1.6 1.2-1.4 1.1 .2 1.2 3.3 1.1-3.9 1.2 2.1 1.2 18.4 1.1 8.7 1.2-17.4 1.2-7.5 1.1-3.6 1.2-2 1.2 .3 1.1-.4 1.2 2.3 1.2-.7 1.1 9.1 1.2 18.7 1.2-8 1.1-14.2 1.2-6 1.2 2.2 1.1-3.7 1.2 .9 1.2 1.1 1.1 1.2 1.2-1.1 1.2-1.2 1.1 2 1.2 .5 1.1 2.5 1.2 11 1.2 .4 1.1-13 1.2 .2 1.2-1.7 1.1-1.2 1.2-1.5 1.2 0 1.1 6.6 1.2 1.2 1.2 6.5 1.1 20.2 1.2-10.8 1.2-19.9 1.1 1 1.2-1.6 1.2 2.6 1.1-2.1 1.2 0 1.2-2.7 1.1 1.7 1.2-1.1 1.2 0 1.1 2.2 1.2 9.7 1.1 12.1 1.2-8.7 1.2-12.3 1.1-2.9 1.2 .2 1.2-.6 1.1 1.2 1.2 3 1.2-2 1.1 6.8 1.2 7.1 1.2-4.2 1.1-10.8 1.2 1.7 1.2-2.8 1.1-.9 1.2 1.5 1.2 .1 1.1-.6 1.2 2.3 1.2 9.1 1.1 4.6 1.2-9.8 1.1-.2 1.2-5.9 1.2-.9 1.1 .6 1.2-.4 1.2 2.5 1.1-3.2 1.2 3.2 1.2 .1 1.1 6.5 1.2 5.6 1.2-6.1 1.1-6.3 1.2-1.3 1.2 .1 1.1-.2 1.2 1.2 1.2-2.3 1.1 2.7 1.2 .3 1.2 12.1 1.1 16 1.2-18.3 1.2-10.4 1.1-1.8 1.2 0 1.1 3.9 1.2-4.8 1.2 5.5 1.1 .3 1.2-2.8 1.2 6 1.1 19.2 1.2-4.4 1.2-17.8 1.1-.1 1.2-2.7 1.2-.3 1.1-1.8 1.2 .4 1.2-1.3 1.1 1.2 1.2-.1 1.2 0 1.1 4.6 1.2 10.2 1.2 9.5 1.1-16.2 1.2-5.1 1.2-2.9 1.1-.6 1.2 .4 1.1-1.3 1.2 4 1.2-.7 1.1 11.2 1.2 20 1.2 15.5 1.1 41.6 1.2 1.8 1.2-9 1.1 1.7 1.2-38.8 1.2-13.6 1.1 4.3 1.2 14.6 1.2 36.1 1.1-18.4 1.2-8.2 1.2-18.2 1.1 24 1.2 4.1 1.2 35.2 1.1-8.3 1.2-6.9 1.2-15.8 1.1-7.5 1.2-21.7 1.1-18 1.2 18.1 1.2 14.3 1.1 8.3 1.2-5.4 1.2-6.1 1.1 8.9 1.2 8.9 1.2 11.6 1.1 5.8 1.2 34.7 1.2-36.3 1.1 2.5 1.2-28.6 1.2-26.1 1.1-5.6 1.2 7.9 1.2 16.7 1.1 12 1.2-11.1 1.2-3.1 1.1 2.2 1.2 13.3 1.1-5.6 1.2 30.7 1.2 5.3 1.1-2.6 1.2-15.3 1.2-29.5 1.1-15.6 1.2-5.6 1.2 8.7 1.1 31.5 1.2-28.8 1.2 25.1 1.1-15.2 1.2 6.7 1.2-1.1 1.1 54.9 1.2-15.7 1.2 24 1.1-21.1 1.2-36.9 1.2-13.6 1.1-18.3 1.2-.7 1.2 26.8 1.1 10.3 1.2 19.7 1.1-21.4 1.2-2.1 1.2 7.3 1.1 25 1.2 31.8 1.2-6.3 1.1 11.1 1.2-31.1 1.2-18.9 1.1-26.6 1.2-29.9 1.2 19.8 1.1 13.1 1.2-10.7 1.2 20 1.1-7.5 1.2-4.8 1.2 7.1 1.1 8.2 1.2 27 1.2-9.2 1.1 4.9 1.2-18.2 1.2-21.5 1.1-15.7 1.2-8.7 1.1 18.7 1.2 10 1.2 8 1.1-12 1.2 1.4 1.2-7.3 1.1 8.9 1.2 33.7" stroke="#F9BA8F" fill="none" clip-path="url(#c8)"/><path d="M664 644.3l1.2 0 1.1 0 1.2 0 1.2 0 1.1 0 1.2 0 1.2 0 1.1 0 1.2 0 1.2 0 1.1 0 1.2 0 1.1 0 1.2 0 1.2 21.5 1.1 21.4 1.2 .2 1.2-7.5 1.1 5.9 1.2 1.3 1.2 23.1 1.1-.3 1.2 6 1.2-19.5 1.1 25.9 1.2 18.1 1.2 9 1.1 18.5 1.2-7 1.2-32.2 1.1-6.9 1.2-26.7 1.2-16.5 1.1-.2 1.2 19.8 1.2 1.9 1.1-1.1 1.2-.8 1.1-8.6 1.2 12.6 1.2 14.4 1.1-1.2 1.2 35.6 1.2-21.5 1.1-7.5 1.2-13 1.2-19.3 1.1-21.4 1.2 19.9 1.2 17.8 1.1-.6 1.2-6.2 1.2-9.5 1.1 8.7 1.2 13 1.2 14.9 1.1-1.5 1.2 33.9 1.2-44 1.1-4.8 1.2-3.1 1.2-19.5 1.1-17 1.2 23 1.1 5.6 1.2 7.7 1.2-8.1 1.1-3.3 1.2 14.9 1.2 7.4 1.1 15.1 1.2 24.5 1.2-33.8 1.1 3.1 1.2-13 1.2-26 1.1-8.6 1.2 7.9 1.2 24.2 1.1 3.3 1.2 4.8 1.2-24.9 1.1 20.9 1.2 9.9 1.2-2.1 1.1 23.3 1.2 19 1.1-9.1 1.2-1.4 1.2-27.2 1.1-38.8 1.2-17.4 1.2 18.8 1.1 28.2 1.2 8.8 1.2-17.3 1.1-9.1 1.2 4.6 1.2 3.8 1.1 22 1.2 27.1 1.2 18.9 1.1-34.8 1.2-18.2 1.2-32.1 1.1-3.6 1.2-19.2 1.2 31.9 1.1 24.6 1.2-7.5 1.2-7.2 1.1-15.4 1.2 29.1 1.1 20.5 1.2 12.3 1.2 12.9 1.1-2.2 1.2-33.8 1.2 2.5 1.1-25.6 1.2-31.9 1.2-1.8 1.1 15.3 1.2 11.1 1.2-2.2 1.1-4.2 1.2 1.6 1.2 12.8 1.1 9.4 1.2 8.9 1.2 26.2 1.1-5.1 1.2-31.7 1.2-26.7 1.1-23.4 1.2-15.2 1.2-6.7 1.1-1.8 1.2 3.8 1.1-3.1 1.2 1.1 1.2 2.5 1.1 5.4 1.2 15.5 1.2-13.7 1.1-9.2 1.2-1 1.2-1.4 1.1 3 1.2 1.9 1.2-3.7 1.1 3.6 1.2 .2 1.2 8.5 1.1 2.1 1.2-10 1.2-2.7 1.1-2.7 1.2 .7 1.2 3.4 1.1-2.2 1.2 4.3 1.2-6.7 1.1 5.1 1.2-2.7 1.1 7 1.2 8.6 1.2-4.5 1.1-5.1 1.2-1.4 1.2-5.9 1.1 1.5 1.2-.2 1.2-.8 1.1-.8 1.2-1 1.2 3.3 1.1-.4 1.2 6.9 1.2 14.9 1.1-3.1 1.2-15.5 1.2-3.2 1.1 1.1 1.2-1.3 1.2-1.8 1.1 1.5 1.2 1 1.1-2.5 1.2 4 1.2-1.8 1.1 3.2 1.2 4.2 1.2 13.3 1.1-12.9 1.2-7.6 1.2 1.6 1.1-3.2 1.2-.7 1.2 1 1.1 3.9 1.2 5.8 1.2 17.9 1.1-13.5 1.2-12 1.2-.3 1.1-2.1 1.2-1.6 1.2-.1 1.1 5.2 1.2-2.3 1.2-1.4 1.1-1.5 1.2 .7 1.1 5 1.2 1.1 1.2 11.9 1.1-4.4 1.2-5.3 1.2-5.4 1.1-2.9 1.2-.4 1.2 2.2 1.1-.4 1.2 3 1.2 19.2 1.1 .2 1.2-16.1 1.2-6.6 1.1 3 1.2-.8 1.2 1.8 1.1-5.5 1.2 2.5 1.2-.6 1.1 .4 1.2 1.5 1.2 3.4 1.1 14 1.2-5 1.1-7 1.2-7.7 1.2 1.9 1.1-3.4 1.2 .5 1.2 .5 1.1 .8 1.2 1.4 1.2 5.7 1.1 12.8 1.2-10.8 1.2-8.4 1.1 1.5 1.2-1.3 1.2-1.3 1.1 .1 1.2 .2 1.2 3.4 1.1-2.2 1.2 5 1.2 9.4 1.1-8.4 1.2-7 1.1 0 1.2-1.8 1.2 1.5 1.1-1.2 1.2 .1 1.2 1.1 1.1-.2 1.2 3.2 1.2-.8 1.1 1.4 1.2 11 1.2 8.6 1.1-16.1 1.2-2.8 1.2 0 1.1-5.2 1.2 1.9 1.2 .5 1.1-2.9 1.2 3.4 1.2 .2 1.1 11.2 1.2 13.7 1.2-16.3 1.1-10.7 1.2 2.4 1.1-2 1.2 .6 1.2-.2 1.1-.5 1.2 2.2 1.2-4.1 1.1 .9 1.2 4.4 1.2-2.5 1.1 10.3 1.2 16.4 1.2-10 1.1-16.4 1.2 1.4 1.2-1.7 1.1-.2 1.2-2.1 1.2 1.1 1.1 9.7 1.2 11.3 1.2-10.7 1.1-4.5 1.2-1.1 1.2-4.3 1.1-1.9 1.2 2.2 1.1 1.1 1.2-3 1.2-1.1 1.1 12.4 1.2 29.9 1.2 39.8 1.1 41.3 1.2 5.2 1.2-21.2 1.1-11.1 1.2-32.8 1.2-20.6 1.1-7.7 1.2 20.5 1.2 2.2 1.1 1.2 1.2-5.9 1.2-9.3 1.1 19.9 1.2 14.5 1.2-1.5 1.1 27 1.2 5.8 1.2-26.3 1.1-20.2 1.2-8.8 1.1-24.6 1.2 22.9 1.2 13.4 1.1 20.4 1.2-22.1 1.2 11.9 1.1-20.8 1.2 12.1 1.2-4.7 1.1 46.4 1.2-5.1 1.2-12.2 1.1 2 1.2-35.8 1.2-15.9 1.1-11.6 1.2 22.7 1.2 4.9 1.1 8.9 1.2-1.8 1.2 3.2 1.1-3 1.2 1.8 1.1 16.8 1.2 35 1.2 15.5 1.1-24.3 1.2-43.6 1.2-5.4 1.1-18.6 1.2-12 1.2 9.5 1.1 22.9 1.2 4.4 1.2 10.9 1.1-26.8 1.2 8.1 1.2 4.9 1.1 27.2 1.2-5.4 1.2 13.5 1.1-35.2 1.2 1.6 1.2-7.8 1.1-20.4 1.2-3.2 1.2 13.6 1.1 19.4 1.2-5 1.1-6.2 1.2-2.9 1.2 30.4 1.1-20.4 1.2 25.6 1.2 17.5 1.1-7.5 1.2-13.6 1.2-22.9 1.1-16.2 1.2-22.1 1.2 18.7 1.1 21 1.2 14.4 1.2-15.1 1.1-18.5 1.2 11.1 1.2 .3 1.1 20.6 1.2 10.2 1.2-3.5 1.1 9.6 1.2-26.2 1.2-9.6 1.1-14.3 1.2-12.9 1.1 15.8 1.2 19.5 1.2 14.2 1.1-23 1.2-6 1.2-5.7 1.1 22 1.2 10" stroke="#F29191" fill="none" clip-path="url(#c8)"/><path d="M664 644.3l1.2 0 1.1 0 1.2 0 1.2 0 1.1 0 1.2 0 1.2 0 1.1 0 1.2 0 1.2 0 1.1 0 1.2 0 1.1 0 1.2 0 1.2 33.7 1.1 11.3 1.2 11.9 1.2-20.1 1.1 6.4 1.2 16.9 1.2 30.5 1.1-5.5 1.2-12.9 1.2-16.3 1.1 17.7 1.2-3.2 1.2 59.3 1.1 25.2 1.2-15.4 1.2-34.6 1.1-30.8 1.2-14 1.2-33.9 1.1 24.4 1.2 14.1 1.2 28.1 1.1-21.8 1.2-2.2 1.1-9.4 1.2 17.7 1.2 22.6 1.1 31.4 1.2-6.1 1.2-26.8 1.1-17.6 1.2-14.8 1.2-18.6 1.1-19.2 1.2 22.7 1.2 14.1 1.1-3.4 1.2-6.3 1.2 1.8 1.1 3.4 1.2-2.3 1.2 28.6 1.1-17.9 1.2 49.4 1.2-40.2 1.1 2.7 1.2-18.4 1.2-22 1.1-9 1.2 24.5 1.1 19.6 1.2-3.2 1.2 2.1 1.1-13.2 1.2 .4 1.2 26.9 1.1-3.4 1.2 34 1.2-14.6 1.1 12.6 1.2-48.8 1.2-17.3 1.1-15 1.2 1.6 1.2 17.9 1.1 11.6 1.2-4.6 1.2 10.9 1.1-19.7 1.2 8.2 1.2 53.5 1.1-5.9 1.2 6.8 1.1-26.9 1.2-14.1 1.2-14.1 1.1-12.8 1.2-19.3 1.2 12.3 1.1 11.6 1.2 8.1 1.2 4 1.1-21.1 1.2 13.5 1.2 11.1 1.1 19.4 1.2 4.7 1.2-.1 1.1-16.4 1.2 3.3 1.2-29.9 1.1-1.8 1.2-16 1.2 26.6 1.1 17.5 1.2-4.6 1.2-1.6 1.1-11.3 1.2 13.9 1.1 18 1.2-9.1 1.2 50.8 1.1-21.8 1.2-12.5 1.2-1.6 1.1-37 1.2-20.6 1.2-1.4 1.1 26.1 1.2 23.6 1.2-25 1.1 3.2 1.2-8.9 1.2 25.1 1.1-8.5 1.2 16.4 1.2 27.4 1.1 6.3 1.2-43.2 1.2-38.7 1.1-16.1 1.2-8.6 1.2-6.2 1.1-5.6 1.2-.3 1.1 1.1 1.2-.8 1.2 1.5 1.1-2.5 1.2 .2 1.2 5.2 1.1 10.2 1.2 4.8 1.2-13.9 1.1-5.1 1.2-1.8 1.2 3.5 1.1 0 1.2-1.5 1.2-1.7 1.1 2.8 1.2 1.1 1.2 13.3 1.1 1 1.2-14.3 1.2-3.8 1.1-1.6 1.2 .9 1.2 2.5 1.1-2.8 1.2-.9 1.1 8.3 1.2-6.2 1.2 3 1.1 6 1.2 .9 1.2-8.4 1.1-1.5 1.2-1.4 1.2 .2 1.1 2.6 1.2-.7 1.2-1 1.1-.7 1.2-1.4 1.2 1.9 1.1 2.1 1.2 2.4 1.2 6.9 1.1-4.6 1.2-4.5 1.2 .4 1.1-3.1 1.2 .3 1.1-.2 1.2-1.5 1.2 4.1 1.1 .4 1.2 11.1 1.2 9.2 1.1-14.3 1.2-6.3 1.2-1.8 1.1 1.8 1.2-.4 1.2-3.7 1.1 3.2 1.2 .2 1.2-.7 1.1-1.6 1.2 3.8 1.2 13.9 1.1-.1 1.2-12.6 1.2-3.5 1.1-1.8 1.2 3.3 1.2-1.8 1.1 1.2 1.2-.1 1.1 4.3 1.2 10.5 1.2-9.2 1.1-6.9 1.2-.3 1.2-.7 1.1 0 1.2 4 1.2-5.4 1.1 1.7 1.2 1.7 1.2-1.1 1.1 9.3 1.2 6 1.2-5.8 1.1-6 1.2-3.1 1.2 .8 1.1-1.2 1.2 2.8 1.2-4.9 1.1 1.6 1.2 1.3 1.2 6.8 1.1 12.3 1.2-9.7 1.1-9.1 1.2-.1 1.2-2.9 1.1 1.5 1.2-1.9 1.2 .6 1.1 .7 1.2-.9 1.2 3 1.1 2.9 1.2 5.6 1.2 5.8 1.1-10.9 1.2-3.3 1.2-.6 1.1-2.7 1.2 1.7 1.2 1 1.1 .8 1.2 0 1.2-3.2 1.1 2.5 1.2 3.7 1.1 7.2 1.2 .8 1.2-7 1.1-5.3 1.2 .1 1.2-1.9 1.1 5.9 1.2-.8 1.2-3.1 1.1 1.8 1.2 12.4 1.2 1.2 1.1-10.7 1.2-3.2 1.2-1 1.1-2 1.2 3 1.2-2.4 1.1-.6 1.2 1.3 1.2 5.8 1.1-2.7 1.2-1.2 1.2 13.2 1.1 7.1 1.2-13.3 1.1-7.7 1.2-2.1 1.2-.2 1.1-.5 1.2 1.5 1.2 3.1 1.1 .1 1.2 .9 1.2 7.8 1.1 3.2 1.2-8.7 1.2-3 1.1-3.4 1.2-2.2 1.2 .4 1.1 2 1.2-1.6 1.2 1.4 1.1 1.2 1.2 2.9 1.2 2 1.1 15.9 1.2-5.7 1.2-13.3 1.1-1.3 1.2-1.9 1.1-1.9 1.2 0 1.2 2.2 1.1 3.9 1.2 21.8 1.2 27.4 1.1 22.4 1.2 5.5 1.2 20.1 1.1-44.1 1.2-19.1 1.2-5 1.1-4.3 1.2 27.1 1.2 13.7 1.1-8.1 1.2 1.6 1.2-6 1.1 11.5 1.2 6.2 1.2 23 1.1 15.3 1.2 20.2 1.2-49.3 1.1-23.1 1.2-7.9 1.1-24.3 1.2 17.2 1.2 12.2 1.1 14.4 1.2-5.2 1.2 .1 1.1-13 1.2 19.3 1.2 19.9 1.1-16.9 1.2 41.2 1.2-12.3 1.1-12.8 1.2-30.2 1.2-20.4 1.1-15.6 1.2 21.1 1.2 4.6 1.1 1.3 1.2 1.7 1.2-6.9 1.1 3.9 1.2 20.4 1.1-3.8 1.2 22.8 1.2 10.3 1.1-4.3 1.2-26 1.2-20.8 1.1-25.2 1.2 6.6 1.2 17.4 1.1 11.1 1.2 2.3 1.2-8.2 1.1 2.9 1.2 3.4 1.2 22 1.1 17.8 1.2-1.7 1.2 3.7 1.1-21.4 1.2-7.3 1.2-24.5 1.1-11.1 1.2-6.5 1.2 31.2 1.1 30.4 1.2-24.1 1.1-6.1 1.2-10.5 1.2 15.6 1.1 29.2 1.2 23.6 1.2 5.9 1.1 1.1 1.2-25.5 1.2-34.5 1.1-16.7 1.2-27.5 1.2 22.5 1.1 7.7 1.2 4 1.2-1.2 1.1-9.9 1.2 2.6 1.2 10.2 1.1 11.3 1.2 20.7 1.2 3.1 1.1-9.6 1.2-1.4 1.2-37 1.1-9.6 1.2-13.4 1.1 18.3 1.2 17.9 1.2 10.3 1.1-21.2 1.2-.2 1.2 5.1 1.1 13.4 1.2 22.2" stroke="#82B5D8" fill="none" clip-path="url(#c8)"/><path d="M664 644.3l1.2 0 1.1 0 1.2 0 1.2 0 1.1 0 1.2 0 1.2 0 1.1 0 1.2 0 1.2 0 1.1 0 1.2 0 1.1 0 1.2 0 1.2 29.4 1.1 20.2 1.2 7.4 1.2-8.4 1.1-7 1.2 6.5 1.2 17.7 1.1 4.4 1.2-2.2 1.2-3.1 1.1 5.7 1.2 3.2 1.2 18.2 1.1 18.4 1.2 7.9 1.2-21.5 1.1-9.9 1.2-21.1 1.2-20.1 1.1-.6 1.2 8.2 1.2 6.4 1.1 2.2 1.2 1.7 1.1-1.7 1.2 8.6 1.2 8 1.1 14.7 1.2 12.9 1.2-1.6 1.1-14.5 1.2-16.6 1.2-17.2 1.1-13.4 1.2 2 1.2 13.7 1.1 10.9 1.2 .4 1.2-6.5 1.1 1.8 1.2 7.7 1.2 14.9 1.1 13.9 1.2 11 1.2-3.5 1.1-16.7 1.2-14.9 1.2-23.5 1.1-12.2 1.2 6.6 1.1 7.9 1.2 12.3 1.2-.4 1.1-7.2 1.2 1.6 1.2 14.7 1.1 20.7 1.2 5.6 1.2 3.7 1.1 2.1 1.2-24 1.2-16.2 1.1-24 1.2-1.3 1.2 10.1 1.1 13.1 1.2 9.2 1.2-11.3 1.1 .5 1.2 4.6 1.2 10.3 1.1 17.1 1.2 13.4 1.1-2.8 1.2-4.1 1.2-22.6 1.1-15.6 1.2-19.4 1.2-3.4 1.1 11.2 1.2 11.3 1.2 2 1.1-11.2 1.2 5.3 1.2 4.1 1.1 18.2 1.2 10.8 1.2 4.3 1.1 4.9 1.2-12.2 1.2-19.8 1.1-15.3 1.2-16.9 1.2 7.2 1.1 12.4 1.2 8.4 1.2-3.6 1.1-4.8 1.2 4.1 1.1 7.1 1.2 11.1 1.2 20.5 1.1 5.3 1.2-3.4 1.2-15.8 1.1-20.4 1.2-19 1.2-7.4 1.1 7.7 1.2 11.5 1.2 5.6 1.1-1.7 1.2 .7 1.2 2 1.1 4.5 1.2 19.2 1.2 20.2 1.1-4.7 1.2-22.1 1.2-26.8 1.1-26.4 1.2-16.4 1.2-9.8 1.1-1.5 1.2 .5 1.1-1.3 1.2 .6 1.2 .8 1.1 1.6 1.2 4.1 1.2 4 1.1 .2 1.2-3.9 1.2-2.8 1.1-1.9 1.2-2.1 1.2-.1 1.1 .6 1.2 .2 1.2 1.2 1.1 2.3 1.2 3.3 1.2 5 1.1-2.4 1.2-4.4 1.2-3.4 1.1-1.9 1.2-.3 1.2-.5 1.1 1 1.2-.6 1.1 2.4 1.2 2.3 1.2 1.1 1.1 2.4 1.2-1.1 1.2-.9 1.1 .1 1.2-3.6 1.2-2.7 1.1 .1 1.2-.1 1.2 .5 1.1 1.2 1.2 3.9 1.2 6.5 1.1 .1 1.2-6.2 1.2-2.4 1.1-1.1 1.2-1.2 1.2-.6 1.1-.8 1.2 .4 1.1 0 1.2 .8 1.2 5.2 1.1 4.9 1.2 .3 1.2-2.7 1.1-6.2 1.2-2.2 1.2-.3 1.1-.3 1.2-.1 1.2 0 1.1 2.6 1.2 3.5 1.2 3.5 1.1-.4 1.2-1.2 1.2-.6 1.1-1.7 1.2-4.2 1.2-1.2 1.1-.5 1.2 .4 1.2 0 1.1 1.2 1.2 1.1 1.1 3.2 1.2 5.8 1.2-.9 1.1-5.2 1.2-1.4 1.2-2.3 1.1-1.5 1.2 1 1.2-1.3 1.1 .5 1.2 1.4 1.2 4.3 1.1 7.7 1.2 .4 1.2-6.9 1.1-3.9 1.2-2.1 1.2 .2 1.1-1.9 1.2 1 1.2-.5 1.1 .7 1.2 .2 1.2 3.1 1.1 5.7 1.2 2.5 1.1-1.3 1.2-4.6 1.2-4.2 1.1-1.7 1.2-.9 1.2 .3 1.1 0 1.2 1 1.2 1.3 1.1 5.7 1.2 3.9 1.2-2.1 1.1-4.2 1.2-2.5 1.2-1.1 1.1-1.7 1.2 0 1.2 .3 1.1-.5 1.2 .8 1.2 2.9 1.1 1.4 1.2 1.2 1.1 1.7 1.2 1 1.2-3.1 1.1-4.2 1.2-1.3 1.2-.3 1.1 1.4 1.2-.1 1.2-.3 1.1 5 1.2 4.9 1.2-2.2 1.1-1.4 1.2-.1 1.2-4.6 1.1-1.9 1.2 0 1.2-1.1 1.1 .3 1.2 1.2 1.2 2.4 1.1 5 1.2 4 1.2-2.2 1.1-1.9 1.2-1.9 1.1-5 1.2-.7 1.2 .3 1.1-.6 1.2-.1 1.2 1 1.1 1.3 1.2 1.2 1.2 3 1.1 7 1.2-2.9 1.2-3.9 1.1-5.3 1.2-1.2 1.2-.8 1.1 .2 1.2 .1 1.2 .4 1.1 4.3 1.2 4.7 1.2 3.2 1.1-2.8 1.2-4.8 1.2-2.7 1.1-1.2 1.2-1 1.1-.5 1.2 .7 1.2-1.2 1.1 10 1.2 20.4 1.2 28.8 1.1 35.2 1.2 8.6 1.2-.5 1.1-13.1 1.2-21.5 1.2-16.1 1.1-8.2 1.2 1.7 1.2 10.9 1.1 8.2 1.2-3.8 1.2-3.6 1.1 7.4 1.2 3.6 1.2 16.5 1.1 16.4 1.2 .9 1.2-7.2 1.1-15.5 1.2-14.6 1.1-19.6 1.2-1.3 1.2 7.5 1.1 9 1.2 6.7 1.2-3.1 1.1-1.5 1.2 6.4 1.2 4.3 1.1 16.3 1.2 17.9 1.2 .8 1.1-17.9 1.2-8.1 1.2-22.7 1.1-18.6 1.2 3.1 1.2 6.5 1.1 14.2 1.2 1.2 1.2-2.8 1.1-2 1.2 8.6 1.1 1.7 1.2 23.1 1.2 16.2 1.1-1.6 1.2-15.6 1.2-23.3 1.1-18 1.2-10.1 1.2 2.3 1.1 13.2 1.2 7.8 1.2-.4 1.1-3.1 1.2 4.1 1.2 7.7 1.1 13.2 1.2 8.2 1.2 14 1.1-11.2 1.2-15.5 1.2-21.4 1.1-16.1 1.2-5.3 1.2 7.6 1.1 14.1 1.2 5.9 1.1-4 1.2-4.6 1.2 3.9 1.1 13 1.2 20.2 1.2 9.4 1.1 11.1 1.2-9.5 1.2-29.2 1.1-13.6 1.2-20.6 1.2-2.5 1.1 9.4 1.2 14.9 1.2 4.8 1.1-9.4 1.2-2.5 1.2 1.6 1.1 15.8 1.2 16.5 1.2 9.7 1.1-.6 1.2-8.1 1.2-18.3 1.1-20.3 1.2-16.2 1.1 3.6 1.2 13.9 1.2 9.8 1.1-2 1.2-2.8 1.2-.9 1.1 7.7 1.2 11.9" stroke="#E5A8E2" fill="none" clip-path="url(#c8)"/><path d="M664 644.3l2.3 0 2.4 0 2.3 0 2.3 0 2.4 0 2.3 0 2.3 0 2.3 0 2.4 0 2.3 0 2.3 0 2.4 0 2.3 0 2.3 0 2.4 0 2.3 0 2.3 0 2.4 0 2.3 0 2.3 0 2.3 0 2.4 0 2.3 0 2.3 0 2.4 0 2.3 0 2.3 0 2.4 0 2.3 0 2.3-.1 2.4-.2 2.3-.1 2.3-.1 2.3-.2 2.4 0 2.3 0 2.3-.7 2.4-.7 2.3 0 2.3 0 2.4-.1 2.3 .1 2.3 0 2.3 0 2.4 0 2.3-.1 2.3 0 2.4 .1 2.3 0 2.3-.1 2.4 0 2.3 0 2.3 0 2.4 .4 2.3 0 2.3-.3 2.3-.1 2.4 .2 2.3-.1 2.3 0 2.4 0 2.3 0 2.3 0 2.4-.1 2.3 .1 2.3-.2 2.4-1.4 2.3-2 2.3-.8 2.3-.2 2.4-.1 2.3-.4 2.3-.1 2.4 .2 2.3 .2 2.3-.1 2.4-.6 2.3 .1 2.3 .6 2.4-.3 2.3 1.8 2.3-1.9 2.3-.2 2.4 1.1 2.3-.4 2.3 1.7 2.4-.2 2.3-1.3 2.3-.1 2.4-.8 2.3 .5 2.3 1.4 2.4 .5 2.3-1.8 2.3-.2 2.3 .3 2.4-.5 2.3 1.8 2.3-.2 2.4-1.2 2.3 .2 2.3-.3 2.4 1.8 2.3-.1 2.3-.5 2.4-1.6 2.3 .9 2.3-.1 2.3-.5 2.4 .3 2.3-.4 2.3 .5 2.4-.2 2.3-.4 2.3 .3 2.4 0 2.3-.2 2.3-.4 2.4 .5 2.3 .3 2.3-.4 2.3 0 2.4-.3 2.3 .6 2.3-.3 2.4 .3 2.3-.1 2.3-.2 2.4 .2 2.3-.2 2.3-.1 2.3 .5 2.4-.2 2.3 0 2.3 1 2.4-.1 2.3-.6 2.3 .6 2.4 .2 2.3-1.5 2.3 .3 2.4 1.5 2.3-1.3 2.3 0 2.3 .7 2.4 .4 2.3-.8 2.3 0 2.4 1.4 2.3-1.6 2.3-.4 2.4 2.1 2.3-.6 2.3-1.5 2.4 .1 2.3 1.7 2.3-.1 2.3-1 2.4 1.3 2.3 5.2 2.3 0 2.4-1.7 2.3 .1 2.3-.1 2.4 0 2.3 .1 2.3 0 2.4 0 2.3 .1 2.3 0 2.3 0 2.4 0 2.3 .1 2.3 0 2.4 0 2.3 0 2.3 0 2.4 .1 2.3 0 2.3 0 2.4 .1 2.3 0 2.3 0 2.3 0 2.4 .1 2.3-.1 2.3 .1 2.4 0 2.3 .1 2.3 0 2.4 1 2.3 0 2.3 0 2.4 0 2.3 0 2.3 0 2.3 0 2.4 0 2.3 0 2.3 0 2.4 0 2.3 0 2.3 0 2.4 0 2.3 0 2.3 0 2.4 0 2.3 0 2.3 0 2.3 0 2.4 0 2.3 0" stroke="#AEA2E0" fill="none" clip-path="url(#c8)"/><rect x="624" y="852" width="14" height="4" rx="1" fill="#7EB26D"/><text x="645.80" y="857.00" font-size="12" fill="#ccccdc" text-anchor="start" textLength="31.89" lengthAdjust="spacingAndGlyphs">sdb-w</text><text x="684.27" y="857.00" font-size="12" fill="#ccccdc" text-anchor="start" textLength="44.53" lengthAdjust="spacingAndGlyphs">Avg: -46</text><rect x="739" y="852" width="14" height="4" rx="1" fill="#EAB839"/><text x="761.00" y="857.00" font-size="12" fill="#ccccdc" text-anchor="start" textLength="31.06" lengthAdjust="spacingAndGlyphs">sdc-w</text><text x="798.60" y="857.00" font-size="12" fill="#ccccdc" text-anchor="start" textLength="44.30" lengthAdjust="spacingAndGlyphs">Avg: -46</text><rect x="853" y="852" width="14" height="4" rx="1" fill="#6ED0E0"/><text x="875.10" y="857.00" font-size="12" fill="#ccccdc" text-anchor="start" textLength="31.66" lengthAdjust="spacingAndGlyphs">sdd-w</text><text x="913.29" y="857.00" font-size="12" fill="#ccccdc" text-anchor="start" textLength="44.21" lengthAdjust="spacingAndGlyphs">Avg: -45</text><rect x="968" y="852" width="14" height="4" rx="1" fill="#EF843C"/><text x="990.20" y="857.00" font-size="12" fill="#ccccdc" text-anchor="start" textLength="31.24" lengthAdjust="spacingAndGlyphs">sde-w</text><text x="1027.88" y="857.00" font-size="12" fill="#ccccdc" text-anchor="start" textLength="43.62" lengthAdjust="spacingAndGlyphs">Avg: -47</text><rect x="624" y="870" width="14" height="4" rx="1" fill="#E24D42"/><text x="645.80" y="875.00" font-size="12" fill="#ccccdc" text-anchor="start" textLength="28.90" lengthAdjust="spacingAndGlyphs">sdf-w</text><text x="681.35" y="875.00" font-size="12" fill="#ccccdc" text-anchor="start" textLength="45.05" lengthAdjust="spacingAndGlyphs">Avg: -48</text><rect x="736" y="870" width="14" height="4" rx="1" fill="#1F78C1"/><text x="758.30" y="875.00" font-size="12" fill="#ccccdc" text-anchor="start" textLength="31.66" lengthAdjust="spacingAndGlyphs">sdg-w</text><text x="796.49" y="875.00" font-size="12" fill="#ccccdc" text-anchor="start" textLength="44.21" lengthAdjust="spacingAndGlyphs">Avg: -47</text><rect x="851" y="870" width="14" height="4" rx="1" fill="#BA43A9"/><text x="873.10" y="875.00" font-size="12" fill="#ccccdc" text-anchor="start" textLength="27.26" lengthAdjust="spacingAndGlyphs">sdb-r</text><text x="906.94" y="875.00" font-size="12" fill="#ccccdc" text-anchor="start" textLength="50.56" lengthAdjust="spacingAndGlyphs">Avg: 3.62</text><rect x="967" y="870" width="14" height="4" rx="1" fill="#705DA0"/><text x="989.10" y="875.00" font-size="12" fill="#ccccdc" text-anchor="start" textLength="26.45" lengthAdjust="spacingAndGlyphs">sdc-r</text><text x="1022.10" y="875.00" font-size="12" fill="#ccccdc" text-anchor="start" textLength="50.30" lengthAdjust="spacingAndGlyphs">Avg: 2.91</text><rect x="624" y="888" width="14" height="4" rx="1" fill="#508642"/><text x="645.80" y="893.00" font-size="12" fill="#ccccdc" text-anchor="start" textLength="27.33" lengthAdjust="spacingAndGlyphs">sdd-r</text><text x="679.72" y="893.00" font-size="12" fill="#ccccdc" text-anchor="start" textLength="50.68" lengthAdjust="spacingAndGlyphs">Avg: 5.07</text><rect x="740" y="888" width="14" height="4" rx="1" fill="#CCA300"/><text x="762.00" y="893.00" font-size="12" fill="#ccccdc" text-anchor="start" textLength="27.42" lengthAdjust="spacingAndGlyphs">sde-r</text><text x="796.04" y="893.00" font-size="12" fill="#ccccdc" text-anchor="start" textLength="50.86" lengthAdjust="spacingAndGlyphs">Avg: 5.13</text><rect x="857" y="888" width="14" height="4" rx="1" fill="#447EBC"/><text x="879.20" y="893.00" font-size="12" fill="#ccccdc" text-anchor="start" textLength="23.97" lengthAdjust="spacingAndGlyphs">sdf-r</text><text x="909.76" y="893.00" font-size="12" fill="#ccccdc" text-anchor="start" textLength="50.64" lengthAdjust="spacingAndGlyphs">Avg: 4.38</text><rect x="970" y="888" width="14" height="4" rx="1" fill="#C15C17"/><text x="992.20" y="893.00" font-size="12" fill="#ccccdc" text-anchor="start" textLength="27.10" lengthAdjust="spacingAndGlyphs">sdg-r</text><text x="1025.84" y="893.00" font-size="12" fill="#ccccdc" text-anchor="start" textLength="50.26" lengthAdjust="spacingAndGlyphs">Avg: 2.51</text><rect x="624" y="906" width="14" height="4" rx="1" fill="#890F02"/><text x="645.80" y="911.00" font-size="12" fill="#ccccdc" text-anchor="start" textLength="27.33" lengthAdjust="spacingAndGlyphs">sdh-r</text><text x="679.72" y="911.00" font-size="12" fill="#ccccdc" text-anchor="start" textLength="50.68" lengthAdjust="spacingAndGlyphs">Avg: 5.02</text><rect x="740" y="906" width="14" height="4" rx="1" fill="#0A437C"/><text x="762.00" y="911.00" font-size="12" fill="#ccccdc" text-anchor="start" textLength="23.41" lengthAdjust="spacingAndGlyphs">sdi-r</text><text x="792.03" y="911.00" font-size="12" fill="#ccccdc" text-anchor="start" textLength="50.87" lengthAdjust="spacingAndGlyphs">Avg: 4.25</text><rect x="853" y="906" width="14" height="4" rx="1" fill="#6D1F62"/><text x="875.10" y="911.00" font-size="12" fill="#ccccdc" text-anchor="start" textLength="23.26" lengthAdjust="spacingAndGlyphs">sdj-r</text><text x="904.95" y="911.00" font-size="12" fill="#ccccdc" text-anchor="start" textLength="50.55" lengthAdjust="spacingAndGlyphs">Avg: 2.56</text><rect x="966" y="906" width="14" height="4" rx="1" fill="#584477"/><text x="988.10" y="911.00" font-size="12" fill="#ccccdc" text-anchor="start" textLength="26.49" lengthAdjust="spacingAndGlyphs">sdk-r</text><text x="1021.14" y="911.00" font-size="12" fill="#ccccdc" text-anchor="start" textLength="50.36" lengthAdjust="spacingAndGlyphs">Avg: 2.55</text><rect x="624" y="924" width="14" height="4" rx="1" fill="#B7DBAB"/><text x="645.80" y="929.00" font-size="12" fill="#ccccdc" text-anchor="start" textLength="23.32" lengthAdjust="spacingAndGlyphs">sdl-r</text><text x="675.72" y="929.00" font-size="12" fill="#ccccdc" text-anchor="start" textLength="50.68" lengthAdjust="spacingAndGlyphs">Avg: 5.11</text><rect x="737" y="924" width="14" height="4" rx="1" fill="#F4D598"/><text x="759.10" y="929.00" font-size="12" fill="#ccccdc" text-anchor="start" textLength="31.55" lengthAdjust="spacingAndGlyphs">sdh-w</text><text x="797.15" y="929.00" font-size="12" fill="#ccccdc" text-anchor="start" textLength="44.05" lengthAdjust="spacingAndGlyphs">Avg: -46</text><rect x="851" y="924" width="14" height="4" rx="1" fill="#70DBED"/><text x="873.10" y="929.00" font-size="12" fill="#ccccdc" text-anchor="start" textLength="27.79" lengthAdjust="spacingAndGlyphs">sdi-w</text><text x="907.44" y="929.00" font-size="12" fill="#ccccdc" text-anchor="start" textLength="44.36" lengthAdjust="spacingAndGlyphs">Avg: -46</text><rect x="962" y="924" width="14" height="4" rx="1" fill="#F9BA8F"/><text x="984.00" y="929.00" font-size="12" fill="#ccccdc" text-anchor="start" textLength="27.76" lengthAdjust="spacingAndGlyphs">sdj-w</text><text x="1018.30" y="929.00" font-size="12" fill="#ccccdc" text-anchor="start" textLength="44.30" lengthAdjust="spacingAndGlyphs">Avg: -46</text><rect x="1074" y="924" width="14" height="4" rx="1" fill="#F29191"/><text x="1095.30" y="929.00" font-size="12" fill="#ccccdc" text-anchor="start" textLength="30.83" lengthAdjust="spacingAndGlyphs">sdk-w</text><text x="1132.63" y="929.00" font-size="12" fill="#ccccdc" text-anchor="start" textLength="43.97" lengthAdjust="spacingAndGlyphs">Avg: -46</text><rect x="624" y="942" width="14" height="4" rx="1" fill="#82B5D8"/><text x="645.80" y="947.00" font-size="12" fill="#ccccdc" text-anchor="start" textLength="27.86" lengthAdjust="spacingAndGlyphs">sdl-w</text><text x="680.23" y="947.00" font-size="12" fill="#ccccdc" text-anchor="start" textLength="44.47" lengthAdjust="spacingAndGlyphs">Avg: -46</text><rect x="735" y="942" width="14" height="4" rx="1" fill="#E5A8E2"/><text x="757.10" y="947.00" font-size="12" fill="#ccccdc" text-anchor="start" textLength="44.43" lengthAdjust="spacingAndGlyphs">Mean-W</text><text x="808.00" y="947.00" font-size="12" fill="#ccccdc" text-anchor="start" textLength="43.80" lengthAdjust="spacingAndGlyphs">Avg: -46</text><rect x="862" y="942" width="14" height="4" rx="1" fill="#AEA2E0"/><text x="884.20" y="947.00" font-size="12" fill="#ccccdc" text-anchor="start" textLength="41.71" lengthAdjust="spacingAndGlyphs">Mean-R</text><text x="932.36" y="947.00" font-size="12" fill="#ccccdc" text-anchor="start" textLength="49.54" lengthAdjust="spacingAndGlyphs">Avg: 3.92</text><path d="M1238.1 833.5H1751.0M1238.1 780.5H1751.0M1238.1 728.5H1751.0M1238.1 675.5H1751.0M1238.1 622.5H1751.0M1271.5 601.0V833.5M1343.5 601.0V833.5M1415.5 601.0V833.5M1487.5 601.0V833.5M1560.5 601.0V833.5M1632.5 601.0V833.5M1704.5 601.0V833.5" stroke="#9b9b9b" stroke-opacity="0.3" stroke-width="1" fill="none"/><text x="1232.50" y="835.90" font-size="11.5" fill="#c7c8d0" text-anchor="end">0%</text><text x="1232.50" y="783.15" font-size="11.5" fill="#c7c8d0" text-anchor="end">25%</text><text x="1232.50" y="730.40" font-size="11.5" fill="#c7c8d0" text-anchor="end">50%</text><text x="1232.50" y="677.65" font-size="11.5" fill="#c7c8d0" text-anchor="end">75%</text><text x="1232.50" y="624.90" font-size="11.5" fill="#c7c8d0" text-anchor="end">100%</text><text x="1271.73" y="851.20" font-size="11.5" fill="#c7c8d0" text-anchor="middle">14:00</text><text x="1343.80" y="851.20" font-size="11.5" fill="#c7c8d0" text-anchor="middle">14:05</text><text x="1415.87" y="851.20" font-size="11.5" fill="#c7c8d0" text-anchor="middle">14:10</text><text x="1487.94" y="851.20" font-size="11.5" fill="#c7c8d0" text-anchor="middle">14:15</text><text x="1560.01" y="851.20" font-size="11.5" fill="#c7c8d0" text-anchor="middle">14:20</text><text x="1632.08" y="851.20" font-size="11.5" fill="#c7c8d0" text-anchor="middle">14:25</text><text x="1704.15" y="851.20" font-size="11.5" fill="#c7c8d0" text-anchor="middle">14:30</text><clipPath id="c9"><rect x="1238.1" y="600.0" width="512.9" height="234.5"/></clipPath><path d="M1238.1 833.5l2.4 0 2.4 0 2.4 0 2.4 0 2.4 0 2.4 0 2.4 0 2.4 0 2.4 0 2.4 0 2.4 0 2.4 0 2.4 0 2.4 0 2.4 0 2.4 0 2.4 0 2.4 0 2.4 0 2.4 0 2.4 0 2.5 0 2.4 0 2.4 0 2.4 0 2.4 0 2.4 0 2.4 0 2.4 0 2.4 0 2.4 0 2.4 0 2.4 0 2.4 0 2.4 0 2.4 0 2.4 0 2.4 0 2.4 0 2.4 0 2.4 0 2.4 0 2.4 0 2.4 0 2.4 0 2.4 0 2.4 0 2.4 0 2.4 0 2.4 0 2.4 0 2.4 0 2.4 0 2.4 0 2.4 0 2.4 0 2.4 0 2.4 0 2.4 0 2.4 0 2.4 0 2.4 0 2.4 0 2.4 0 2.5 0 2.4 0 2.4 0 2.4 0 2.4 0 2.4 0 2.4 0 2.4 0 2.4 0 2.4 0 2.4 0 2.4 0 2.4 0 2.4 0 2.4 0 2.4 0 2.4 0 2.4 0 2.4 0 2.4 0 2.4 0 2.4 0 2.4 0 2.4 0 2.4 0 2.4 0 2.4 0 2.4 0 2.4 0 2.4 0 2.4 0 2.4 0 2.4 0 2.4 0 2.4 0 2.4 0 2.4 0 2.4 0 2.4 0 2.4 0 2.4 0 2.4 0 2.5 0 2.4 0 2.4 0 2.4 0 2.4 0 2.4 0 2.4 0 2.4 0 2.4 0 2.4 0 2.4 0 2.4 0 2.4 0 2.4 0 2.4 0 2.4 0 2.4 0 2.4 0 2.4 0 2.4 0 2.4 0 2.4 0 2.4 0 2.4 0 2.4 0 2.4 0 2.4 0 2.4 0 2.4 0 2.4 0 2.4 0 2.4 0 2.4 0 2.4 0 2.4 0 2.4 0 2.4 0 2.4 0 2.4 0 2.4 0 2.4 0 2.4 0 2.4 0 2.5 0 2.4 0 2.4 0 2.4 0 2.4 0 2.4 0 2.4 0 2.4 0 2.4 0 2.4 0 2.4 0 2.4 0 2.4 0 2.4 0 2.4 0 2.4 0 2.4 0 2.4 0 2.4 0 2.4 0 2.4 0 2.4 0 2.4 0 2.4 0 2.4 0 2.4 0 2.4 0 2.4 0 2.4 0 2.4 0 2.4 0 2.4 0 2.4 0 2.4 0 2.4 0 2.4 0 2.4 0 2.4 0 2.4 0 2.4 0 2.4 0 2.4 0 2.4 0 2.5 0 2.4 0 2.4 0 2.4 0 2.4 0 2.4 0 2.4 0 2.4 0 2.4 0 2.4 0 2.4 0 2.4 0 2.4 0 2.4 0 2.4 0 2.4 0 2.4 0 2.4 0 2.4 0 2.4 0 0 0-2.4 0-2.4 0-2.4 0-2.4 0-2.4 0-2.4 0-2.4 0-2.4 0-2.4 0-2.4 0-2.4 0-2.4 0-2.4 0-2.4 0-2.4 0-2.4 0-2.4 0-2.4 0-2.4 0-2.5 0-2.4 0-2.4 0-2.4 0-2.4 0-2.4 0-2.4 0-2.4 0-2.4 0-2.4 0-2.4 0-2.4 0-2.4 0-2.4 0-2.4 0-2.4 0-2.4 0-2.4 0-2.4 0-2.4 0-2.4 0-2.4 0-2.4 0-2.4 0-2.4 0-2.4 0-2.4 0-2.4 0-2.4 0-2.4 0-2.4 0-2.4 0-2.4 0-2.4 0-2.4 0-2.4 0-2.4 0-2.4 0-2.4 0-2.4 0-2.4 0-2.4 0-2.4 0-2.5 0-2.4 0-2.4 0-2.4 0-2.4 0-2.4 0-2.4 0-2.4 0-2.4 0-2.4 0-2.4 0-2.4 0-2.4 0-2.4 0-2.4 0-2.4 0-2.4 0-2.4 0-2.4 0-2.4 0-2.4 0-2.4 0-2.4 0-2.4 0-2.4 0-2.4 0-2.4 0-2.4 0-2.4 0-2.4 0-2.4 0-2.4 0-2.4 0-2.4 0-2.4 0-2.4 0-2.4 0-2.4 0-2.4 0-2.4 0-2.4 0-2.4 0-2.4 0-2.5 0-2.4 0-2.4 0-2.4 0-2.4 0-2.4 0-2.4 0-2.4 0-2.4 0-2.4 0-2.4 0-2.4 0-2.4 0-2.4 0-2.4 0-2.4 0-2.4 0-2.4 0-2.4 0-2.4 0-2.4 0-2.4 0-2.4 0-2.4 0-2.4 0-2.4 0-2.4 0-2.4 0-2.4 0-2.4 0-2.4 0-2.4 0-2.4 0-2.4 0-2.4 0-2.4 0-2.4 0-2.4 0-2.4 0-2.4 0-2.4 0-2.4 0-2.5 0-2.4 0-2.4 0-2.4 0-2.4 0-2.4 0-2.4 0-2.4 0-2.4 0-2.4 0-2.4 0-2.4 0-2.4 0-2.4 0-2.4 0-2.4 0-2.4 0-2.4 0-2.4 0-2.4 0-2.4 0-2.4 0-2.4 0-2.4 0-2.4 0-2.4 0-2.4 0-2.4 0-2.4 0-2.4 0-2.4 0-2.4 0-2.4 0-2.4 0-2.4 0-2.4 0-2.4 0-2.4 0-2.4 0-2.4 0-2.4 0-2.4 0-2.4 0-2.5 0-2.4 0-2.4 0-2.4 0-2.4 0-2.4 0-2.4 0-2.4 0-2.4 0-2.4 0-2.4 0-2.4 0-2.4 0-2.4 0-2.4 0-2.4 0-2.4 0-2.4 0-2.4 0-2.4 0-2.4 0-2.4 0Z" fill="#7EB26D" fill-opacity="0.1" clip-path="url(#c9)"/><path d="M1238.1 833.5l2.4 0 2.4 0 2.4 0 2.4 0 2.4 0 2.4 0 2.4-2.9 2.4-11.9 2.4-1.6 2.4 2.3 2.4 .3 2.4-5.1 2.4-4 2.4 .1 2.4 3.9 2.4 2.2 2.4 3.2 2.4 1.2 2.4-5.5 2.4-6.5 2.4 1.4 2.5 4.2 2.4 .6 2.4 3.6 2.4 2.8 2.4-2.8 2.4-14.5 2.4 1 2.4 1 2.4 1.6 2.4-.2 2.4 4.3 2.4-.4 2.4-4.2 2.4-2.8 2.4 4.1 2.4 6.4 2.4 1.5 2.4 2 2.4 4.3 2.4-5.6 2.4-6.3 2.4 .8 2.4 1.7 2.4 2.6 2.4 2.7 2.4 1.3 2.4-2 2.4-5.3 2.4-3.4 2.4 3.4 2.4 1.6 2.4 2.3 2.4 4 2.4-.6 2.4-5.2 2.4-5.4 2.4 .9 2.4 2.9 2.4 2.2 2.4 2.7 2.4 3.2 2.4-4 2.4-6.9 2.5-.4 2.4 7.3 2.4 4.6 2.4 1.5 2.4 1.3 2.4 0 2.4-1.2 2.4-.5 2.4 0 2.4 1.2 2.4-.4 2.4 .6 2.4-1.1 2.4-.1 2.4 1.5 2.4-1.4 2.4 .5 2.4-.2 2.4-.4 2.4 1.9 2.4-.7 2.4-1.7 2.4 1.5 2.4-1.4 2.4 1.6 2.4-1.7 2.4 1.5 2.4-.2 2.4 .9 2.4-1.9 2.4 1.1 2.4 .6 2.4-.2 2.4-1.6 2.4 .2 2.4 .9 2.4-1.1 2.4 1.9 2.4-.2 2.4 .5 2.4-1.2 2.4-.6 2.5 .5 2.4-.1 2.4 1.1 2.4 .3 2.4-.8 2.4-1 2.4 .8 2.4 0 2.4 .8 2.4-.4 2.4-.7 2.4 0 2.4-.3 2.4 1.5 2.4-1.7 2.4 1.5 2.4-1.5 2.4 1.5 2.4-1.4 2.4-.1 2.4 1 2.4 0 2.4 .4 2.4 .2 2.4-2.2 2.4 2.5 2.4-1.7 2.4-.3 2.4 .9 2.4-1.1 2.4 .1 2.4 0 2.4 1.1 2.4 .9 2.4-.7 2.4-1.6 2.4 .3 2.4 1.8 2.4 .1 2.4-1.4 2.4 .7 2.4-1.2 2.4 0 2.5 .7 2.4 1.3 2.4-.6 2.4-.6 2.4 .7 2.4-1.9 2.4 .8 2.4 .2 2.4 0 2.4 1 2.4-5.3 2.4-3.2 2.4 4.9 2.4-2.4 2.4-7.4 2.4-2.8 2.4 3.6 2.4 3.8 2.4 2.8 2.4 2.2 2.4-.2 2.4-6.8 2.4-6 2.4 2.8 2.4 2.4 2.4 3.1 2.4 3 2.4 2.5 2.4-5.6 2.4-5.9 2.4 1.1 2.4 .9 2.4 4.1 2.4 3 2.4 2.6 2.4-2.1 2.4-6.7 2.4-3.3 2.4 2.5 2.4 3.1 2.4 2.6 2.4 2.3 2.4-.3 2.5-4.3 2.4-7.8 2.4 3.2 2.4 2.6 2.4 1.6 2.4 4.2 2.4 1.5 2.4-2.5 2.4-6.3 2.4-3 2.4 3.5 2.4 1.3 2.4 2.6 2.4 3.1 2.4 .8 2.4-7.9 2.4-3.5 2.4 1.2 2.4 4.3 2.4 10.4 0 8.2-2.4 0-2.4 0-2.4 0-2.4 0-2.4 0-2.4 0-2.4 0-2.4 0-2.4 0-2.4 0-2.4 0-2.4 0-2.4 0-2.4 0-2.4 0-2.4 0-2.4 0-2.4 0-2.4 0-2.5 0-2.4 0-2.4 0-2.4 0-2.4 0-2.4 0-2.4 0-2.4 0-2.4 0-2.4 0-2.4 0-2.4 0-2.4 0-2.4 0-2.4 0-2.4 0-2.4 0-2.4 0-2.4 0-2.4 0-2.4 0-2.4 0-2.4 0-2.4 0-2.4 0-2.4 0-2.4 0-2.4 0-2.4 0-2.4 0-2.4 0-2.4 0-2.4 0-2.4 0-2.4 0-2.4 0-2.4 0-2.4 0-2.4 0-2.4 0-2.4 0-2.4 0-2.4 0-2.5 0-2.4 0-2.4 0-2.4 0-2.4 0-2.4 0-2.4 0-2.4 0-2.4 0-2.4 0-2.4 0-2.4 0-2.4 0-2.4 0-2.4 0-2.4 0-2.4 0-2.4 0-2.4 0-2.4 0-2.4 0-2.4 0-2.4 0-2.4 0-2.4 0-2.4 0-2.4 0-2.4 0-2.4 0-2.4 0-2.4 0-2.4 0-2.4 0-2.4 0-2.4 0-2.4 0-2.4 0-2.4 0-2.4 0-2.4 0-2.4 0-2.4 0-2.4 0-2.5 0-2.4 0-2.4 0-2.4 0-2.4 0-2.4 0-2.4 0-2.4 0-2.4 0-2.4 0-2.4 0-2.4 0-2.4 0-2.4 0-2.4 0-2.4 0-2.4 0-2.4 0-2.4 0-2.4 0-2.4 0-2.4 0-2.4 0-2.4 0-2.4 0-2.4 0-2.4 0-2.4 0-2.4 0-2.4 0-2.4 0-2.4 0-2.4 0-2.4 0-2.4 0-2.4 0-2.4 0-2.4 0-2.4 0-2.4 0-2.4 0-2.4 0-2.5 0-2.4 0-2.4 0-2.4 0-2.4 0-2.4 0-2.4 0-2.4 0-2.4 0-2.4 0-2.4 0-2.4 0-2.4 0-2.4 0-2.4 0-2.4 0-2.4 0-2.4 0-2.4 0-2.4 0-2.4 0-2.4 0-2.4 0-2.4 0-2.4 0-2.4 0-2.4 0-2.4 0-2.4 0-2.4 0-2.4 0-2.4 0-2.4 0-2.4 0-2.4 0-2.4 0-2.4 0-2.4 0-2.4 0-2.4 0-2.4 0-2.4 0-2.4 0-2.5 0-2.4 0-2.4 0-2.4 0-2.4 0-2.4 0-2.4 0-2.4 0-2.4 0-2.4 0-2.4 0-2.4 0-2.4 0-2.4 0-2.4 0-2.4 0-2.4 0-2.4 0-2.4 0-2.4 0-2.4 0-2.4 0Z" fill="#EAB839" fill-opacity="0.1" clip-path="url(#c9)"/><path d="M1238.1 833.5l2.4 0 2.4 0 2.4 0 2.4 0 2.4 0 2.4 0 2.4-2.7 2.4-12.7 2.4-.3 2.4 3.6 2.4-2 2.4-7.2 2.4-2.9 2.4 2.5 2.4 3.3 2.4 2.1 2.4 2.9 2.4 1.6 2.4-8.3 2.4-5 2.4 3 2.5 2.5 2.4 2.3 2.4 3.7 2.4 2.9 2.4-5.6 2.4-5.8 2.4 .5 2.4 .8 2.4 3.7 2.4 2.1 2.4 1.5 2.4-.8 2.4-6.5 2.4-2.5 2.4 2.9 2.4 2.1 2.4 2.3 2.4 2.7 2.4 .4 2.4-6.5 2.4-5.7 2.4 4.4 2.4 2.6 2.4 .4 2.4 4.2 2.4 1.5 2.4-3.8 2.4-7.2 2.4 1.3 2.4 .8 2.4 3.8 2.4 1.8 2.4 2.9 2.4-1.7 2.4-6 2.4-4.6 2.4 2.8 2.4 3.2 2.4 2.3 2.4 2.9 2.4 .5 2.4-5.5 2.4-6.2 2.5 3.7 2.4 5.5 2.4 4 2.4 3 2.4-1.9 2.4 .5 2.4 .2 2.4 1.2 2.4 0 2.4-.5 2.4-.4 2.4-.2 2.4 .9 2.4-1.8 2.4 2.3 2.4-2.1 2.4 1.5 2.4 .5 2.4-.5 2.4-.3 2.4-.6 2.4 1.4 2.4-1.4 2.4-.7 2.4 1 2.4 .3 2.4 .4 2.4-.3 2.4 .1 2.4 .3 2.4-.7 2.4-.7 2.4 1.7 2.4 .1 2.4-2.2 2.4 0 2.4 .5 2.4 1.7 2.4-1.7 2.4 .7 2.4-.7 2.4 .1 2.5 1.7 2.4-2.4 2.4 .2 2.4 0 2.4 1.6 2.4-1.3 2.4 1.9 2.4 0 2.4-.9 2.4-.9 2.4 1.2 2.4-1.6 2.4 2.2 2.4-2 2.4 1.6 2.4-1.2 2.4 1 2.4-.3 2.4-1.5 2.4 1.7 2.4 .3 2.4-1.3 2.4-.5 2.4 .5 2.4 .4 2.4 .7 2.4-.3 2.4 0 2.4 .6 2.4-.3 2.4-.9 2.4 1.1 2.4-1.3 2.4 .8 2.4 .6 2.4-.2 2.4-1.2 2.4-.2 2.4 1.2 2.4 .6 2.4-1.4 2.4-.9 2.4 1.9 2.5-1.8 2.4 1.9 2.4 .3 2.4-.4 2.4-.5 2.4-1.3 2.4-.1 2.4 .3 2.4 1.5 2.4-.9 2.4-5 2.4 .9 2.4 2.2 2.4-6.7 2.4-6 2.4 1.3 2.4 2.9 2.4 1.6 2.4 4.6 2.4 2 2.4-3 2.4-5.9 2.4-2.1 2.4 1.9 2.4 1.8 2.4 4.3 2.4 2.5 2.4-1.2 2.4-5.1 2.4-7.3 2.4 4.9 2.4 1.3 2.4 2.8 2.4 2.8 2.4 1.7 2.4-5.1 2.4-4 2.4-.8 2.4 .9 2.4 4.2 2.4-7.4 2.4 .8 2.4-1.5 2.5-4.6 2.4-6.6 2.4 7.5 2.4 1 2.4-.7 2.4 1.7 2.4 2.3 2.4-2.6 2.4-6.7 2.4 1.9 2.4 .2 2.4 .1 2.4 5.7 2.4 4.6 2.4 5.2 2.4-4.1 2.4-4 2.4 4.3 2.4 2.1 2.4 10.4 0 7.6-2.4 0-2.4 0-2.4 0-2.4 0-2.4 0-2.4 0-2.4 0-2.4 0-2.4 0-2.4 0-2.4 0-2.4 0-2.4 0-2.4 0-2.4 0-2.4 0-2.4 0-2.4 0-2.4 0-2.5 0-2.4 0-2.4 0-2.4 0-2.4 0-2.4 0-2.4 0-2.4 0-2.4 0-2.4 0-2.4 0-2.4 0-2.4 0-2.4 0-2.4 0-2.4 0-2.4 0-2.4 0-2.4 0-2.4 0-2.4 0-2.4 0-2.4 0-2.4 0-2.4 0-2.4 0-2.4 0-2.4 0-2.4 0-2.4 0-2.4 0-2.4 0-2.4 0-2.4 0-2.4 0-2.4 0-2.4 0-2.4 0-2.4 0-2.4 0-2.4 0-2.4 0-2.4 0-2.5 0-2.4 0-2.4 0-2.4 0-2.4 0-2.4 0-2.4 0-2.4 0-2.4 0-2.4 0-2.4 0-2.4 0-2.4 0-2.4 0-2.4 0-2.4 0-2.4 0-2.4 0-2.4 0-2.4 0-2.4 0-2.4 0-2.4 0-2.4 0-2.4 0-2.4 0-2.4 0-2.4 0-2.4 0-2.4 0-2.4 0-2.4 0-2.4 0-2.4 0-2.4 0-2.4 0-2.4 0-2.4 0-2.4 0-2.4 0-2.4 0-2.4 0-2.4 0-2.5 0-2.4 0-2.4 0-2.4 0-2.4 0-2.4 0-2.4 0-2.4 0-2.4 0-2.4 0-2.4 0-2.4 0-2.4 0-2.4 0-2.4 0-2.4 0-2.4 0-2.4 0-2.4 0-2.4 0-2.4 0-2.4 0-2.4 0-2.4 0-2.4 0-2.4 0-2.4 0-2.4 0-2.4 0-2.4 0-2.4 0-2.4 0-2.4 0-2.4 0-2.4 0-2.4 0-2.4 0-2.4 0-2.4 0-2.4 0-2.4 0-2.4 0-2.5 0-2.4 0-2.4 0-2.4 0-2.4 0-2.4 0-2.4 0-2.4 0-2.4 0-2.4 0-2.4 0-2.4 0-2.4 0-2.4 0-2.4 0-2.4 0-2.4 0-2.4 0-2.4 0-2.4 0-2.4 0-2.4 0-2.4 0-2.4 0-2.4 0-2.4 0-2.4 0-2.4 0-2.4 0-2.4 0-2.4 0-2.4 0-2.4 0-2.4 0-2.4 0-2.4 0-2.4 0-2.4 0-2.4 0-2.4 0-2.4 0-2.4 0-2.4 0-2.5 0-2.4 0-2.4 0-2.4 0-2.4 0-2.4 0-2.4 0-2.4 0-2.4 0-2.4 0-2.4 0-2.4 0-2.4 0-2.4 0-2.4 0-2.4 0-2.4 0-2.4 0-2.4 0-2.4 0-2.4 0-2.4 0Z" fill="#6ED0E0" fill-opacity="0.1" clip-path="url(#c9)"/><path d="M1238.1 833.5l2.4 0 2.4 0 2.4 0 2.4 0 2.4 0 2.4 0 2.4-2.8 2.4-12.1 2.4-.8 2.4 2.9 2.4-.7 2.4-7.6 2.4-2.5 2.4 1.6 2.4 2.9 2.4 2.3 2.4 4.3 2.4 1 2.4-7.7 2.4-3.9 2.4 2.2 2.5 .8 2.4 4.2 2.4 2.5 2.4 .7 2.4-3.9 2.4-4.9 2.4-.9 2.4 3.1 2.4 2.4 2.4 2.8 2.4 2.4 2.4-3.5 2.4-4.3 2.4-4.3 2.4 2.4 2.4 1.6 2.4 3.1 2.4 2.2 2.4 1.7 2.4-4.3 2.4-6.1 2.4 2.1 2.4 2.1 2.4 1.7 2.4 4.1 2.4 2.1 2.4-5.5 2.4-6.5 2.4 .9 2.4 1.8 2.4 2.1 2.4 3.7 2.4 2.7 2.4-2 2.4-4.7 2.4-5.6 2.4 3.2 2.4 3.1 2.4 3 2.4 1.1 2.4 1 2.4-5 2.4-4.9 2.5 .8 2.4 5.8 2.4 5.4 2.4 1.3 2.4-.6 2.4 .3 2.4-.1 2.4 1.6 2.4-1.4 2.4 .8 2.4-1.3 2.4 0 2.4 1.5 2.4-.8 2.4-.9 2.4 1.1 2.4-15.1 2.4 1.5 2.4-3.7 2.4-3.1 2.4-.5 2.4-2.9 2.4 8.8 2.4-3.4 2.4-2.2 2.4 2.7 2.4-1.4 2.4-.5 2.4 4.2 2.4 1.6 2.4-4.2 2.4-1 2.4-.7 2.4 2.5 2.4-2.5 2.4 .7 2.4 3.8 2.4 .8 2.4-3.2 2.4-7.6 2.4 10.6 2.4 .9 2.5-5.1 2.4 17.7 2.4 1.1 2.4 .7 2.4 .3 2.4-1.7 2.4-.1 2.4 .6 2.4 .6 2.4 1 2.4-1.3 2.4-.9 2.4 0 2.4 2 2.4-2.1 2.4 .9 2.4-1 2.4 2.2 2.4-1.2 2.4 1.1 2.4-.9 2.4-1.3 2.4 1.2 2.4 .7 2.4-.7 2.4-.1 2.4 .2 2.4 .8 2.4-.5 2.4-.6 2.4 .4 2.4 .3 2.4 .8 2.4-.7 2.4 .5 2.4-.6 2.4-1.4 2.4-.2 2.4 .5 2.4 .8 2.4-.3 2.4-.7 2.4-.2 2.5 2.3 2.4-1.6 2.4 1.1 2.4-1.6 2.4 1 2.4 .1 2.4-1 2.4-.4 2.4 .5 2.4 .9 2.4-5.3 2.4-.8 2.4 4.5 2.4-5.3 2.4-6.6 2.4 .5 2.4 1.8 2.4 2.4 2.4 2.5 2.4 3 2.4-2.8 2.4-6.5 2.4-1.6 2.4 1.4 2.4 2.2 2.4 3.9 2.4 1.6 2.4 3 2.4-6.7 2.4-7 2.4 1.4 2.4 4.6 2.4 1.5 2.4 3.6 2.4 3 2.4-4.7 2.4-6.4 2.4-2.6 2.4 3.6 2.4 1.6 2.4 3.4 2.4 4 2.4-2.4 2.5-4.4 2.4-5 2.4 1.3 2.4 3.7 2.4 2.8 2.4 2.6 2.4 1.5 2.4-4.4 2.4-6.7 2.4-.4 2.4 2.7 2.4 3.8 2.4 1.1 2.4 2.3 2.4-.9 2.4-5.9 2.4-2.8 2.4 1.4 2.4 3.2 2.4 10.8 0 7.5-2.4 0-2.4 0-2.4 0-2.4 0-2.4 0-2.4 0-2.4 0-2.4 0-2.4 0-2.4 0-2.4 0-2.4 0-2.4 0-2.4 0-2.4 0-2.4 0-2.4 0-2.4 0-2.4 0-2.5 0-2.4 0-2.4 0-2.4 0-2.4 0-2.4 0-2.4 0-2.4 0-2.4 0-2.4 0-2.4 0-2.4 0-2.4 0-2.4 0-2.4 0-2.4 0-2.4 0-2.4 0-2.4 0-2.4 0-2.4 0-2.4 0-2.4 0-2.4 0-2.4 0-2.4 0-2.4 0-2.4 0-2.4 0-2.4 0-2.4 0-2.4 0-2.4 0-2.4 0-2.4 0-2.4 0-2.4 0-2.4 0-2.4 0-2.4 0-2.4 0-2.4 0-2.4 0-2.5 0-2.4 0-2.4 0-2.4 0-2.4 0-2.4 0-2.4 0-2.4 0-2.4 0-2.4 0-2.4 0-2.4 0-2.4 0-2.4 0-2.4 0-2.4 0-2.4 0-2.4 0-2.4 0-2.4 0-2.4 0-2.4 0-2.4 0-2.4 0-2.4 0-2.4 0-2.4 0-2.4 0-2.4 0-2.4 0-2.4 0-2.4 0-2.4 0-2.4 0-2.4 0-2.4 0-2.4 0-2.4 0-2.4 0-2.4 0-2.4 0-2.4 0-2.4 0-2.5 0-2.4 0-2.4 0-2.4 0-2.4 0-2.4 0-2.4 0-2.4 0-2.4 0-2.4 0-2.4 0-2.4 0-2.4 0-2.4 0-2.4 0-2.4 0-2.4 0-2.4 0-2.4 0-2.4 0-2.4 0-2.4 0-2.4 0-2.4 0-2.4 0-2.4 0-2.4 0-2.4 0-2.4 0-2.4 0-2.4 0-2.4 0-2.4 0-2.4 0-2.4 0-2.4 0-2.4 0-2.4 0-2.4 0-2.4 0-2.4 0-2.4 0-2.5 0-2.4 0-2.4 0-2.4 0-2.4 0-2.4 0-2.4 0-2.4 0-2.4 0-2.4 0-2.4 0-2.4 0-2.4 0-2.4 0-2.4 0-2.4 0-2.4 0-2.4 0-2.4 0-2.4 0-2.4 0-2.4 0-2.4 0-2.4 0-2.4 0-2.4 0-2.4 0-2.4 0-2.4 0-2.4 0-2.4 0-2.4 0-2.4 0-2.4 0-2.4 0-2.4 0-2.4 0-2.4 0-2.4 0-2.4 0-2.4 0-2.4 0-2.4 0-2.5 0-2.4 0-2.4 0-2.4 0-2.4 0-2.4 0-2.4 0-2.4 0-2.4 0-2.4 0-2.4 0-2.4 0-2.4 0-2.4 0-2.4 0-2.4 0-2.4 0-2.4 0-2.4 0-2.4 0-2.4 0-2.4 0Z" fill="#EF843C" fill-opacity="0.1" clip-path="url(#c9)"/><path d="M1238.1 833.5l2.4 0 2.4 0 2.4 0 2.4 0 2.4 0 2.4 0 2.4-2.8 2.4-11.1 2.4 .3 2.4 2.2 2.4-4.9 2.4-4.9 2.4-2.6 2.4 4.3 2.4 .7 2.4 3.4 2.4 3.2 2.4-2 2.4-4.7 2.4-4.6 2.4 1 2.5 3.5 2.4 1.6 2.4 4.1 2.4 1.2 2.4-4.3 2.4-5.9 2.4-.8 2.4 2.1 2.4 4 2.4 3.1 2.4 1.9 2.4-3.8 2.4-4.5 2.4-2 2.4 1 2.4 3.4 2.4 3.3 2.4 2.7 2.4-.7 2.4-7.1 2.4-5 2.4 2.2 2.4 3.5 2.4 1.8 2.4 4.4 2.4 1.7 2.4-5.3 2.4-5.6 2.4-1.4 2.4 3.6 2.4 2 2.4 1.9 2.4 3.5 2.4-2.7 2.4-6.1 2.4-1.7 2.4 2.3 2.4 1.2 2.4 3.3 2.4 2.6 2.4 .9 2.4-7 2.4-4 2.5 1.7 2.4 6.2 2.4 3.5 2.4 3.8 2.4-1.4 2.4 1.1 2.4 .6 2.4-1.9 2.4 1.1 2.4 .6 2.4-1.7 2.4 1.7 2.4-1.8 2.4 1.5 2.4-1.7 2.4 1.8 2.4-2 2.4 .8 2.4 1.4 2.4-2 2.4 1.2 2.4 1.1 2.4-2.1 2.4 .4 2.4 .2 2.4 .9 2.4-1.1 2.4 .2 2.4-.7 2.4 1.3 2.4-1.6 2.4 1.8 2.4 0 2.4-.6 2.4 1.3 2.4-1.4 2.4 .7 2.4-1.7 2.4 .6 2.4 1.4 2.4-1 2.4-.4 2.5 1.3 2.4 .3 2.4-.8 2.4-.1 2.4 .8 2.4-1.2 2.4 .8 2.4-1 2.4 1.1 2.4-1.6 2.4-.2 2.4 2.1 2.4-.7 2.4 .1 2.4 .8 2.4-.9 2.4 .5 2.4-1.6 2.4 .8 2.4 .6 2.4-1.5 2.4-.3 2.4 2 2.4-1 2.4 .9 2.4-1.9 2.4 1.9 2.4-.6 2.4-23.7 2.4 5.1 2.4-2.4 2.4 3.4 2.4 4.3 2.4-8.2 2.4 7.5 2.4-11.6 2.4 9.9 2.4-2.8 2.4-1.1 2.4 5.9 2.4-5.9 2.4 4.2 2.4-2.2 2.5 4.3 2.4 .1 2.4-6.8 2.4 5.3 2.4-13.9 2.4 11.9 2.4 1.4 2.4-5.7 2.4 2.9 2.4 4.6 2.4-2.9 2.4 3.7 2.4 10.1 2.4-6.2 2.4-7.2 2.4 2.4 2.4 2.9 2.4 3.8 2.4 2.5 2.4 1.9 2.4-3.1 2.4-6 2.4-2.6 2.4 2 2.4 2.4 2.4 4.3 2.4 2.6 2.4-1.6 2.4-5.1 2.4-5.6 2.4 2.7 2.4 1.3 2.4 2.4 2.4 4.8 2.4 1.3 2.4-5.3 2.4-6.4 2.4 1.1 2.4 3 2.4 1.8 2.4 2.3 2.4 4.1 2.4-3.9 2.5-4 2.4-4.3 2.4 2.3 2.4 1.1 2.4 4 2.4 3.2 2.4 2 2.4-7.4 2.4-5.2 2.4 .7 2.4 3.1 2.4 2.2 2.4 1.6 2.4 3.4 2.4-3.9 2.4-5.4 2.4-2.6 2.4 3.9 2.4 1.8 2.4 10.5 0 8.2-2.4 0-2.4 0-2.4 0-2.4 0-2.4 0-2.4 0-2.4 0-2.4 0-2.4 0-2.4 0-2.4 0-2.4 0-2.4 0-2.4 0-2.4 0-2.4 0-2.4 0-2.4 0-2.4 0-2.5 0-2.4 0-2.4 0-2.4 0-2.4 0-2.4 0-2.4 0-2.4 0-2.4 0-2.4 0-2.4 0-2.4 0-2.4 0-2.4 0-2.4 0-2.4 0-2.4 0-2.4 0-2.4 0-2.4 0-2.4 0-2.4 0-2.4 0-2.4 0-2.4 0-2.4 0-2.4 0-2.4 0-2.4 0-2.4 0-2.4 0-2.4 0-2.4 0-2.4 0-2.4 0-2.4 0-2.4 0-2.4 0-2.4 0-2.4 0-2.4 0-2.4 0-2.4 0-2.5 0-2.4 0-2.4 0-2.4 0-2.4 0-2.4 0-2.4 0-2.4 0-2.4 0-2.4 0-2.4 0-2.4 0-2.4 0-2.4 0-2.4 0-2.4 0-2.4 0-2.4 0-2.4 0-2.4 0-2.4 0-2.4 0-2.4 0-2.4 0-2.4 0-2.4 0-2.4 0-2.4 0-2.4 0-2.4 0-2.4 0-2.4 0-2.4 0-2.4 0-2.4 0-2.4 0-2.4 0-2.4 0-2.4 0-2.4 0-2.4 0-2.4 0-2.4 0-2.5 0-2.4 0-2.4 0-2.4 0-2.4 0-2.4 0-2.4 0-2.4 0-2.4 0-2.4 0-2.4 0-2.4 0-2.4 0-2.4 0-2.4 0-2.4 0-2.4 0-2.4 0-2.4 0-2.4 0-2.4 0-2.4 0-2.4 0-2.4 0-2.4 0-2.4 0-2.4 0-2.4 0-2.4 0-2.4 0-2.4 0-2.4 0-2.4 0-2.4 0-2.4 0-2.4 0-2.4 0-2.4 0-2.4 0-2.4 0-2.4 0-2.4 0-2.5 0-2.4 0-2.4 0-2.4 0-2.4 0-2.4 0-2.4 0-2.4 0-2.4 0-2.4 0-2.4 0-2.4 0-2.4 0-2.4 0-2.4 0-2.4 0-2.4 0-2.4 0-2.4 0-2.4 0-2.4 0-2.4 0-2.4 0-2.4 0-2.4 0-2.4 0-2.4 0-2.4 0-2.4 0-2.4 0-2.4 0-2.4 0-2.4 0-2.4 0-2.4 0-2.4 0-2.4 0-2.4 0-2.4 0-2.4 0-2.4 0-2.4 0-2.4 0-2.5 0-2.4 0-2.4 0-2.4 0-2.4 0-2.4 0-2.4 0-2.4 0-2.4 0-2.4 0-2.4 0-2.4 0-2.4 0-2.4 0-2.4 0-2.4 0-2.4 0-2.4 0-2.4 0-2.4 0-2.4 0-2.4 0Z" fill="#E24D42" fill-opacity="0.1" clip-path="url(#c9)"/><path d="M1238.1 833.5l2.4 0 2.4 0 2.4 0 2.4 0 2.4 0 2.4 0 2.4-2.9 2.4-11.6 2.4-.5 2.4 3.2 2.4-2.1 2.4-5.5 2.4-4.6 2.4 3 2.4 3.6 2.4 .2 2.4 3.6 2.4 1.4 2.4-6.8 2.4-6 2.4 2.8 2.5 2.1 2.4 4.2 2.4 .7 2.4 2.4 2.4-3.5 2.4-5.2 2.4-1.6 2.4 1.8 2.4 2.6 2.4 4.5 2.4 1 2.4 .4 2.4-7.7 2.4-3.6 2.4 4 2.4 1.6 2.4 3.4 2.4 1.7 2.4 1.4 2.4-6.9 2.4-5.9 2.4 1.6 2.4 3.8 2.4 3 2.4 .9 2.4 4.5 2.4-5.4 2.4-5.9 2.4-1.8 2.4 2.5 2.4 3.5 2.4 1.9 2.4 2.2 2.4 .6 2.4-6.2 2.4-5.5 2.4 3.6 2.4 1.5 2.4 4.7 2.4 1.5 2.4 2.5 2.4-6.5 2.4-4.4 2.5 .8 2.4 4.8 2.4 4.2 2.4 2.2 2.4 .8 2.4 .6 2.4-1.2 2.4 1.2 2.4-1.7 2.4 .4 2.4 1.2 2.4-1.5 2.4 1.4 2.4 .9 2.4-1 2.4-1.2 2.4 .8 2.4-.2 2.4 1.4 2.4-1.7 2.4 .9 2.4 0 2.4 .1 2.4-.3 2.4-.5 2.4 1.8 2.4-2.1 2.4 1.1 2.4-.3 2.4 .8 2.4-1.5 2.4 .3 2.4 .2 2.4-.8 2.4 .8 2.4 1 2.4-.6 2.4 .6 2.4-.6 2.4-1.4 2.4 .8 2.4 .6 2.5-1.3 2.4 1.4 2.4 .3 2.4-1.5 2.4 1.3 2.4-.5 2.4 .7 2.4-.4 2.4-.5 2.4 .2 2.4-.2 2.4 1.1 2.4-1 2.4 .9 2.4-1.1 2.4 .5 2.4-1.3 2.4 0 2.4 2 2.4-.1 2.4-1.1 2.4 .1 2.4 1.1 2.4 .2 2.4-.6 2.4 .5 2.4 .1 2.4-.1 2.4-2.1 2.4 2.1 2.4-2 2.4 2.1 2.4-.4 2.4-1 2.4 .5 2.4 .4 2.4-.5 2.4-1 2.4 0 2.4 1.4 2.4 .8 2.4-1.9 2.4 0 2.5 .5 2.4-.6 2.4 1.2 2.4-1.3 2.4 1.8 2.4-1.2 2.4 .7 2.4 .5 2.4-1.1 2.4 1.2 2.4-6.6 2.4-1.4 2.4-12.6 2.4-5.1 2.4-8.2 2.4 3.3 2.4 1.3 2.4 4.5 2.4 .6 2.4 3.3 2.4 1.3 2.4-12.2 2.4-2 2.4 1.6 2.4 3.5 2.4 .9 2.4 2.3 2.4 5.3 2.4-4.7 2.4-7.1 2.4 2.5 2.4-.4 2.4 2.9 2.4 5.9 2.4 2 2.4-6.7 2.4-7.7 2.4 .1 2.4 4.9 2.4 3.5 2.4 18.2 2.4 1.3 2.4-.3 2.5-5.1 2.4-4.5 2.4 1.8 2.4 3.1 2.4 1.6 2.4 3.7 2.4 2.2 2.4-5.1 2.4-5.7 2.4-.7 2.4 2.5 2.4 1.4 2.4 2.9 2.4 3.7 2.4-.7 2.4-8.3 2.4-2 2.4 1.6 2.4 3.2 2.4 10.9 0 7.6-2.4 0-2.4 0-2.4 0-2.4 0-2.4 0-2.4 0-2.4 0-2.4 0-2.4 0-2.4 0-2.4 0-2.4 0-2.4 0-2.4 0-2.4 0-2.4 0-2.4 0-2.4 0-2.4 0-2.5 0-2.4 0-2.4 0-2.4 0-2.4 0-2.4 0-2.4 0-2.4 0-2.4 0-2.4 0-2.4 0-2.4 0-2.4 0-2.4 0-2.4 0-2.4 0-2.4 0-2.4 0-2.4 0-2.4 0-2.4 0-2.4 0-2.4 0-2.4 0-2.4 0-2.4 0-2.4 0-2.4 0-2.4 0-2.4 0-2.4 0-2.4 0-2.4 0-2.4 0-2.4 0-2.4 0-2.4 0-2.4 0-2.4 0-2.4 0-2.4 0-2.4 0-2.4 0-2.5 0-2.4 0-2.4 0-2.4 0-2.4 0-2.4 0-2.4 0-2.4 0-2.4 0-2.4 0-2.4 0-2.4 0-2.4 0-2.4 0-2.4 0-2.4 0-2.4 0-2.4 0-2.4 0-2.4 0-2.4 0-2.4 0-2.4 0-2.4 0-2.4 0-2.4 0-2.4 0-2.4 0-2.4 0-2.4 0-2.4 0-2.4 0-2.4 0-2.4 0-2.4 0-2.4 0-2.4 0-2.4 0-2.4 0-2.4 0-2.4 0-2.4 0-2.4 0-2.5 0-2.4 0-2.4 0-2.4 0-2.4 0-2.4 0-2.4 0-2.4 0-2.4 0-2.4 0-2.4 0-2.4 0-2.4 0-2.4 0-2.4 0-2.4 0-2.4 0-2.4 0-2.4 0-2.4 0-2.4 0-2.4 0-2.4 0-2.4 0-2.4 0-2.4 0-2.4 0-2.4 0-2.4 0-2.4 0-2.4 0-2.4 0-2.4 0-2.4 0-2.4 0-2.4 0-2.4 0-2.4 0-2.4 0-2.4 0-2.4 0-2.4 0-2.5 0-2.4 0-2.4 0-2.4 0-2.4 0-2.4 0-2.4 0-2.4 0-2.4 0-2.4 0-2.4 0-2.4 0-2.4 0-2.4 0-2.4 0-2.4 0-2.4 0-2.4 0-2.4 0-2.4 0-2.4 0-2.4 0-2.4 0-2.4 0-2.4 0-2.4 0-2.4 0-2.4 0-2.4 0-2.4 0-2.4 0-2.4 0-2.4 0-2.4 0-2.4 0-2.4 0-2.4 0-2.4 0-2.4 0-2.4 0-2.4 0-2.4 0-2.4 0-2.5 0-2.4 0-2.4 0-2.4 0-2.4 0-2.4 0-2.4 0-2.4 0-2.4 0-2.4 0-2.4 0-2.4 0-2.4 0-2.4 0-2.4 0-2.4 0-2.4 0-2.4 0-2.4 0-2.4 0-2.4 0-2.4 0Z" fill="#1F78C1" fill-opacity="0.1" clip-path="url(#c9)"/><path d="M1238.1 833.5l2.4 0 2.4 0 2.4 0 2.4 0 2.4 0 2.4 0 2.4-2.8 2.4-12.4 2.4 .3 2.4 2 2.4 .3 2.4-5.6 2.4-6.4 2.4 3 2.4 1.4 2.4 4.8 2.4 1 2.4 4.4 2.4-7.6 2.4-5.3 2.4 1.2 2.5 2.8 2.4 2.7 2.4 1.4 2.4 2.3 2.4-1.4 2.4-7.3 2.4-1.6 2.4 1.2 2.4 4 2.4 1.8 2.4 2.7 2.4 0 2.4-6 2.4-6 2.4 4.7 2.4 1.7 2.4 3.3 2.4 2.6 2.4 1.5 2.4-5.9 2.4-5.3 2.4-.8 2.4 2.6 2.4 4.3 2.4 1.2 2.4 2.8 2.4-2.4 2.4-5.4 2.4-3.3 2.4 3.7 2.4 1.6 2.4 2.2 2.4 3.6 2.4 .7 2.4-7.3 2.4-5.9 2.4 3 2.4 3 2.4 2.1 2.4 3.6 2.4 2.4 2.4-4.7 2.4-6.9 2.5-.1 2.4 6.2 2.4 4.2 2.4 3.1 2.4 .8 2.4-1.6 2.4 0 2.4-.6 2.4-.1 2.4 1.4 2.4-.2 2.4-1 2.4 1.8 2.4 .1 2.4-.9 2.4-.2 2.4 .8 2.4 .2 2.4-.2 2.4-1.6 2.4 .1 2.4 2 2.4-.8 2.4-.6 2.4-.2 2.4 .4 2.4 1.1 2.4-1.1 2.4 .8 2.4-.4 2.4-1.4 2.4 .6 2.4 1.4 2.4 .2 2.4-.7 2.4 .1 2.4-1.1 2.4 1.2 2.4-1.5 2.4 .6 2.4-.9 2.4 1.8 2.5-.3 2.4 .1 2.4-.6 2.4 .5 2.4-1.5 2.4 2.2 2.4-2.2 2.4 2 2.4-1.4 2.4 1.7 2.4-1.2 2.4 .1 2.4-.6 2.4-.4 2.4 1.6 2.4-1.7 2.4 1.5 2.4 .3 2.4-1.4 2.4 1.3 2.4-.9 2.4 .6 2.4-.5 2.4 .9 2.4-.1 2.4-.1 2.4-1.4 2.4-.1 2.4 1.4 2.4-1.4 2.4 1 2.4 .7 2.4-.2 2.4-.3 2.4-.6 2.4 .9 2.4 .6 2.4-1 2.4 .1 2.4-.1 2.4 .3 2.4-.2 2.4 0 2.5 .3 2.4-.4 2.4-.3 2.4 1 2.4-.7 2.4-.9 2.4 .8 2.4 .4 2.4 .8 2.4-.9 2.4-6.1 2.4 0 2.4 2.1 2.4-3.8 2.4-4.3 2.4-2.9 2.4 4 2.4 3 2.4 .3 2.4 3.8 2.4-.9 2.4-4.7 2.4-6.8 2.4 3.5 2.4 2.1 2.4 3 2.4 2.9 2.4 3 2.4-7.3 2.4-6.3 2.4 1.1 2.4 1.9 2.4 3.4 2.4 3.9 2.4 1.2 2.4-2.2 2.4-5.4 2.4-2.9 2.4 1.9 2.4 2.9 2.4 2.8 2.4 2.5 2.4 .2 2.5-4.9 2.4-5.3 2.4 2.1 2.4 1.8 2.4 3.1 2.4 1.1 2.4 2.3 2.4-2.7 2.4-7.4 2.4-.7 2.4 1.7 2.4 3.8 2.4 1.7 2.4 2.6 2.4 1.5 2.4-7.2 2.4-4.2 2.4 1.1 2.4 3.1 2.4 11.6 0 8-2.4 0-2.4 0-2.4 0-2.4 0-2.4 0-2.4 0-2.4 0-2.4 0-2.4 0-2.4 0-2.4 0-2.4 0-2.4 0-2.4 0-2.4 0-2.4 0-2.4 0-2.4 0-2.4 0-2.5 0-2.4 0-2.4 0-2.4 0-2.4 0-2.4 0-2.4 0-2.4 0-2.4 0-2.4 0-2.4 0-2.4 0-2.4 0-2.4 0-2.4 0-2.4 0-2.4 0-2.4 0-2.4 0-2.4 0-2.4 0-2.4 0-2.4 0-2.4 0-2.4 0-2.4 0-2.4 0-2.4 0-2.4 0-2.4 0-2.4 0-2.4 0-2.4 0-2.4 0-2.4 0-2.4 0-2.4 0-2.4 0-2.4 0-2.4 0-2.4 0-2.4 0-2.4 0-2.5 0-2.4 0-2.4 0-2.4 0-2.4 0-2.4 0-2.4 0-2.4 0-2.4 0-2.4 0-2.4 0-2.4 0-2.4 0-2.4 0-2.4 0-2.4 0-2.4 0-2.4 0-2.4 0-2.4 0-2.4 0-2.4 0-2.4 0-2.4 0-2.4 0-2.4 0-2.4 0-2.4 0-2.4 0-2.4 0-2.4 0-2.4 0-2.4 0-2.4 0-2.4 0-2.4 0-2.4 0-2.4 0-2.4 0-2.4 0-2.4 0-2.4 0-2.4 0-2.5 0-2.4 0-2.4 0-2.4 0-2.4 0-2.4 0-2.4 0-2.4 0-2.4 0-2.4 0-2.4 0-2.4 0-2.4 0-2.4 0-2.4 0-2.4 0-2.4 0-2.4 0-2.4 0-2.4 0-2.4 0-2.4 0-2.4 0-2.4 0-2.4 0-2.4 0-2.4 0-2.4 0-2.4 0-2.4 0-2.4 0-2.4 0-2.4 0-2.4 0-2.4 0-2.4 0-2.4 0-2.4 0-2.4 0-2.4 0-2.4 0-2.4 0-2.5 0-2.4 0-2.4 0-2.4 0-2.4 0-2.4 0-2.4 0-2.4 0-2.4 0-2.4 0-2.4 0-2.4 0-2.4 0-2.4 0-2.4 0-2.4 0-2.4 0-2.4 0-2.4 0-2.4 0-2.4 0-2.4 0-2.4 0-2.4 0-2.4 0-2.4 0-2.4 0-2.4 0-2.4 0-2.4 0-2.4 0-2.4 0-2.4 0-2.4 0-2.4 0-2.4 0-2.4 0-2.4 0-2.4 0-2.4 0-2.4 0-2.4 0-2.4 0-2.5 0-2.4 0-2.4 0-2.4 0-2.4 0-2.4 0-2.4 0-2.4 0-2.4 0-2.4 0-2.4 0-2.4 0-2.4 0-2.4 0-2.4 0-2.4 0-2.4 0-2.4 0-2.4 0-2.4 0-2.4 0-2.4 0Z" fill="#BA43A9" fill-opacity="0.1" clip-path="url(#c9)"/><path d="M1238.1 833.5l2.4 0 2.4 0 2.4 0 2.4 0 2.4 0 2.4 0 2.4-2.8 2.4-12.1 2.4 1 2.4 .4 2.4-.2 2.4-7.5 2.4-3.4 2.4 3.6 2.4 1.8 2.4 3.5 2.4 3.8 2.4-.3 2.4-6.3 2.4-5.2 2.4 .9 2.5 3.2 2.4 3.4 2.4 2.6 2.4 1.7 2.4-4.7 2.4-5.6 2.4-1.4 2.4 2.5 2.4 2.5 2.4 3 2.4 3.4 2.4-3.5 2.4-4.7 2.4-4.4 2.4 4.2 2.4 3.3 2.4 2.2 2.4 2.2 2.4 .2 2.4-5.7 2.4-6.5 2.4 1.8 2.4 3.7 2.4 2.1 2.4 2.7 2.4 3.5 2.4-5.7 2.4-5.8 2.4-.2 2.4 1.8 2.4 3.8 2.4 3.1 2.4 1.1 2.4-20.8 2.4-2.6 2.4 .8 2.4-.8 2.4 5.1 2.4 1.3 2.4 3.5 2.4-2.1 2.4-5.7 2.4-2.6 2.5 .9 2.4 2 2.4 1.2 2.4 6.5 2.4-4.2 2.4-4 2.4 .2 2.4 5.1 2.4 1.1 2.4 .2 2.4 3.1 2.4-1.4 2.4 .9 2.4 1.9 2.4-3.6 2.4 10.3 2.4 7.8 2.4-.5 2.4-.8 2.4 1.7 2.4-1.8 2.4 .6 2.4 1.6 2.4-1.7 2.4 1.6 2.4-.6 2.4-1.1 2.4 0 2.4-.2 2.4 .6 2.4 1.4 2.4-1.7 2.4 .5 2.4 .1 2.4-1.2 2.4 .7 2.4-.1 2.4 .2 2.4 1.3 2.4-1.6 2.4-.6 2.4 1.5 2.5-1 2.4 2 2.4-2.2 2.4 1.6 2.4-.4 2.4-1.3 2.4 .2 2.4 .7 2.4 .7 2.4 .6 2.4 0 2.4-1.3 2.4 .8 2.4-.5 2.4 .9 2.4-2.2 2.4 .2 2.4 1.6 2.4 .2 2.4-.5 2.4-.4 2.4 .4 2.4 .3 2.4-1.7 2.4 1 2.4-1 2.4 .9 2.4 .8 2.4-1.1 2.4 .3 2.4-.3 2.4 .4 2.4-.5 2.4-.2 2.4-.5 2.4 1.3 2.4-.6 2.4 1.4 2.4 0 2.4-1.3 2.4 1 2.4-.6 2.4-.3 2.5 .4 2.4-1.3 2.4 1.2 2.4 .8 2.4-.1 2.4-1.7 2.4 1 2.4-1 2.4 1.4 2.4-.6 2.4-6.1 2.4 .1 2.4 3.3 2.4-4.2 2.4-7.1 2.4 .9 2.4 1.3 2.4 3.9 2.4 1.6 2.4 3.8 2.4-4.2 2.4-5.4 2.4-2.2 2.4 2 2.4 2.9 2.4 3.5 2.4 2.3 2.4 1.1 2.4-5.7 2.4-7.9 2.4 2.9 2.4 3.5 2.4 2.4 2.4 2.6 2.4 3.1 2.4-5 2.4-6.3 2.4-2.1 2.4 3.2 2.4 3.9 2.4 2.1 2.4 3.2 2.4-1.9 2.5-5.4 2.4-4.7 2.4 2.9 2.4 1.9 2.4 1.6 2.4 4.6 2.4 .7 2.4-4 2.4-7.8 2.4 1.1 2.4 2.3 2.4 4.1 2.4 2.2 2.4 2.8 2.4-3.1 2.4-6.6 2.4-2.3 2.4 2.1 2.4 2.6 2.4 10.6 0 8.4-2.4 0-2.4 0-2.4 0-2.4 0-2.4 0-2.4 0-2.4 0-2.4 0-2.4 0-2.4 0-2.4 0-2.4 0-2.4 0-2.4 0-2.4 0-2.4 0-2.4 0-2.4 0-2.4 0-2.5 0-2.4 0-2.4 0-2.4 0-2.4 0-2.4 0-2.4 0-2.4 0-2.4 0-2.4 0-2.4 0-2.4 0-2.4 0-2.4 0-2.4 0-2.4 0-2.4 0-2.4 0-2.4 0-2.4 0-2.4 0-2.4 0-2.4 0-2.4 0-2.4 0-2.4 0-2.4 0-2.4 0-2.4 0-2.4 0-2.4 0-2.4 0-2.4 0-2.4 0-2.4 0-2.4 0-2.4 0-2.4 0-2.4 0-2.4 0-2.4 0-2.4 0-2.4 0-2.5 0-2.4 0-2.4 0-2.4 0-2.4 0-2.4 0-2.4 0-2.4 0-2.4 0-2.4 0-2.4 0-2.4 0-2.4 0-2.4 0-2.4 0-2.4 0-2.4 0-2.4 0-2.4 0-2.4 0-2.4 0-2.4 0-2.4 0-2.4 0-2.4 0-2.4 0-2.4 0-2.4 0-2.4 0-2.4 0-2.4 0-2.4 0-2.4 0-2.4 0-2.4 0-2.4 0-2.4 0-2.4 0-2.4 0-2.4 0-2.4 0-2.4 0-2.4 0-2.5 0-2.4 0-2.4 0-2.4 0-2.4 0-2.4 0-2.4 0-2.4 0-2.4 0-2.4 0-2.4 0-2.4 0-2.4 0-2.4 0-2.4 0-2.4 0-2.4 0-2.4 0-2.4 0-2.4 0-2.4 0-2.4 0-2.4 0-2.4 0-2.4 0-2.4 0-2.4 0-2.4 0-2.4 0-2.4 0-2.4 0-2.4 0-2.4 0-2.4 0-2.4 0-2.4 0-2.4 0-2.4 0-2.4 0-2.4 0-2.4 0-2.4 0-2.5 0-2.4 0-2.4 0-2.4 0-2.4 0-2.4 0-2.4 0-2.4 0-2.4 0-2.4 0-2.4 0-2.4 0-2.4 0-2.4 0-2.4 0-2.4 0-2.4 0-2.4 0-2.4 0-2.4 0-2.4 0-2.4 0-2.4 0-2.4 0-2.4 0-2.4 0-2.4 0-2.4 0-2.4 0-2.4 0-2.4 0-2.4 0-2.4 0-2.4 0-2.4 0-2.4 0-2.4 0-2.4 0-2.4 0-2.4 0-2.4 0-2.4 0-2.4 0-2.5 0-2.4 0-2.4 0-2.4 0-2.4 0-2.4 0-2.4 0-2.4 0-2.4 0-2.4 0-2.4 0-2.4 0-2.4 0-2.4 0-2.4 0-2.4 0-2.4 0-2.4 0-2.4 0-2.4 0-2.4 0-2.4 0Z" fill="#705DA0" fill-opacity="0.1" clip-path="url(#c9)"/><path d="M1238.1 833.5l2.4 0 2.4 0 2.4 0 2.4 0 2.4 0 2.4 0 2.4-2.8 2.4-12.8 2.4 1.1 2.4 2.8 2.4-2.7 2.4-5 2.4-3.8 2.4 2.6 2.4 2.7 2.4 1.4 2.4 3.5 2.4 .5 2.4-4.8 2.4-7.5 2.4 3.3 2.5 2.1 2.4 1.7 2.4 3.5 2.4 1.1 2.4-3.2 2.4-5.6 2.4-2.1 2.4 3 2.4 4.1 2.4 2.1 2.4 .8 2.4-.4 2.4-4.1 2.4-4.7 2.4 2.4 2.4-6.7 2.4 3.5 2.4 2.6 2.4 3.3 2.4-9.7 2.4-3.5 2.4-3.1 2.4 6 2.4 .8 2.4 2.4 2.4 5.4 2.4-3.6 2.4-7.5 2.4-.7 2.4 1.3 2.4 5 2.4 4 2.4 2.1 2.4 7.1 2.4-6.2 2.4-5.2 2.4 2.4 2.4 3.3 2.4 1 2.4 3.5 2.4 2.4 2.4-5.6 2.4-5.7 2.5-.1 2.4 6.9 2.4 3.8 2.4 1.2 2.4 1.8 2.4-1.5 2.4 1.3 2.4-1.7 2.4 .4 2.4 .6 2.4 0 2.4 .6 2.4-.9 2.4-.2 2.4-.2 2.4 1.2 2.4-1.1 2.4 1.9 2.4-.2 2.4-1.4 2.4 1.5 2.4-.7 2.4-.9 2.4-.1 2.4 1.4 2.4-.9 2.4-.1 2.4-.3 2.4-.5 2.4 .6 2.4-.7 2.4 2.1 2.4-1.6 2.4 1.8 2.4-1.2 2.4-.7 2.4 .2 2.4 .2 2.4-.1 2.4 1.6 2.4-1.6 2.4-.3 2.5 1.5 2.4-1.4 2.4 .6 2.4 0 2.4 .4 2.4-1.1 2.4-.4 2.4 2.3 2.4-.5 2.4-.9 2.4 1.4 2.4-.9 2.4-1.3 2.4 0 2.4 .5 2.4 .2 2.4 .1 2.4-.9 2.4 .7 2.4 .8 2.4-.4 2.4 .7 2.4 0 2.4-.8 2.4 .8 2.4-.7 2.4-.9 2.4 .3 2.4 .3 2.4-.4 2.4 1.1 2.4-1.3 2.4 2.2 2.4-.7 2.4-.9 2.4 1.7 2.4-1.9 2.4-.3 2.4 .2 2.4 .6 2.4 1.3 2.4-.9 2.4 .6 2.5-.3 2.4-1.8 2.4 2 2.4-.6 2.4-.8 2.4 1.1 2.4-.5 2.4-.1 2.4-1 2.4 1.5 2.4-6.8 2.4 .9 2.4 4.3 2.4-6.6 2.4-6.2 2.4-.7 2.4 4.1 2.4 1.4 2.4 2.5 2.4 2.3 2.4-.2 2.4-5.1 2.4-5.1 2.4 1.2 2.4 4.9 2.4 2.1 2.4 2.7 2.4 2.7 2.4-8.2 2.4-5.2 2.4-.1 2.4 3.2 2.4 2.7 2.4 2.9 2.4 2.9 2.4-2.1 2.4-6.7 2.4-2.4 2.4 2 2.4 2.8 2.4 3.3 2.4 1.7 2.4 1.3 2.5-5.2 2.4-8.5 2.4 4.6 2.4 1.6 2.4 2.9 2.4 2 2.4 2.3 2.4-2.6 2.4-6.9 2.4-.5 2.4 3.2 2.4 2.4 2.4 2.3 2.4 2.5 2.4-.5 2.4-6.2 2.4-4.9 2.4 3.3 2.4 2.4 2.4 9.8 0 8.4-2.4 0-2.4 0-2.4 0-2.4 0-2.4 0-2.4 0-2.4 0-2.4 0-2.4 0-2.4 0-2.4 0-2.4 0-2.4 0-2.4 0-2.4 0-2.4 0-2.4 0-2.4 0-2.4 0-2.5 0-2.4 0-2.4 0-2.4 0-2.4 0-2.4 0-2.4 0-2.4 0-2.4 0-2.4 0-2.4 0-2.4 0-2.4 0-2.4 0-2.4 0-2.4 0-2.4 0-2.4 0-2.4 0-2.4 0-2.4 0-2.4 0-2.4 0-2.4 0-2.4 0-2.4 0-2.4 0-2.4 0-2.4 0-2.4 0-2.4 0-2.4 0-2.4 0-2.4 0-2.4 0-2.4 0-2.4 0-2.4 0-2.4 0-2.4 0-2.4 0-2.4 0-2.4 0-2.5 0-2.4 0-2.4 0-2.4 0-2.4 0-2.4 0-2.4 0-2.4 0-2.4 0-2.4 0-2.4 0-2.4 0-2.4 0-2.4 0-2.4 0-2.4 0-2.4 0-2.4 0-2.4 0-2.4 0-2.4 0-2.4 0-2.4 0-2.4 0-2.4 0-2.4 0-2.4 0-2.4 0-2.4 0-2.4 0-2.4 0-2.4 0-2.4 0-2.4 0-2.4 0-2.4 0-2.4 0-2.4 0-2.4 0-2.4 0-2.4 0-2.4 0-2.4 0-2.5 0-2.4 0-2.4 0-2.4 0-2.4 0-2.4 0-2.4 0-2.4 0-2.4 0-2.4 0-2.4 0-2.4 0-2.4 0-2.4 0-2.4 0-2.4 0-2.4 0-2.4 0-2.4 0-2.4 0-2.4 0-2.4 0-2.4 0-2.4 0-2.4 0-2.4 0-2.4 0-2.4 0-2.4 0-2.4 0-2.4 0-2.4 0-2.4 0-2.4 0-2.4 0-2.4 0-2.4 0-2.4 0-2.4 0-2.4 0-2.4 0-2.4 0-2.5 0-2.4 0-2.4 0-2.4 0-2.4 0-2.4 0-2.4 0-2.4 0-2.4 0-2.4 0-2.4 0-2.4 0-2.4 0-2.4 0-2.4 0-2.4 0-2.4 0-2.4 0-2.4 0-2.4 0-2.4 0-2.4 0-2.4 0-2.4 0-2.4 0-2.4 0-2.4 0-2.4 0-2.4 0-2.4 0-2.4 0-2.4 0-2.4 0-2.4 0-2.4 0-2.4 0-2.4 0-2.4 0-2.4 0-2.4 0-2.4 0-2.4 0-2.4 0-2.5 0-2.4 0-2.4 0-2.4 0-2.4 0-2.4 0-2.4 0-2.4 0-2.4 0-2.4 0-2.4 0-2.4 0-2.4 0-2.4 0-2.4 0-2.4 0-2.4 0-2.4 0-2.4 0-2.4 0-2.4 0-2.4 0Z" fill="#508642" fill-opacity="0.1" clip-path="url(#c9)"/><path d="M1238.1 833.5l2.4 0 2.4 0 2.4 0 2.4 0 2.4 0 2.4 0 2.4-2.8 2.4-11.5 2.4 .7 2.4 2.1 2.4-3.9 2.4-4 2.4-3.5 2.4 1.8 2.4 1.5 2.4 2.8 2.4 4.1 2.4-.6 2.4-5.4 2.4-5.2 2.4 2.1 2.5 2.5 2.4 3.6 2.4 1.3 2.4 2.3 2.4-4.5 2.4-5.5 2.4 0 2.4 2.2 2.4 1.3 2.4 3.4 2.4 2.5 2.4-1.7 2.4-6.8 2.4-3 2.4 2.9 2.4 3.2 2.4 2.3 2.4 2.4 2.4 1.3 2.4-6.9 2.4-5.6 2.4 2 2.4 3.5 2.4 1.7 2.4 4.3 2.4 1 2.4-3.5 2.4-5.8 2.4-2.6 2.4 4.4 2.4 1 2.4 3.1 2.4 2.9 2.4-.7 2.4-7.2 2.4-2 2.4 .4 2.4 4.1 2.4 2.3 2.4 2.9 2.4 .2 2.4-6.3 2.4-4.1 2.5 .9 2.4 6.4 2.4 4.6 2.4 .8 2.4 0 2.4 .8 2.4 .8 2.4-.4 2.4-.4 2.4 .1 2.4 .7 2.4-.2 2.4 .4 2.4-1.3 2.4-.2 2.4 1.2 2.4-1.5 2.4 1.9 2.4-1.7 2.4 .9 2.4 .7 2.4 0 2.4-.1 2.4-1.1 2.4-.7 2.4 .4 2.4 .9 2.4 0 2.4 .8 2.4 0 2.4 .1 2.4-.4 2.4-.5 2.4 .4 2.4-.1 2.4 .1 2.4-.3 2.4-.7 2.4 1.1 2.4 .3 2.4-.6 2.4 .7 2.5-1.5 2.4 1.4 2.4 .1 2.4-.7 2.4-.4 2.4 .9 2.4-1.9 2.4 2 2.4-1.3 2.4-.8 2.4 2.1 2.4-1.5 2.4-.7 2.4 2 2.4-1.4 2.4 .6 2.4 .3 2.4-.2 2.4-.9 2.4 .3 2.4 .3 2.4 .5 2.4-1.3 2.4 1.7 2.4-1.8 2.4 2.1 2.4-.5 2.4 0 2.4 .2 2.4-.6 2.4 .6 2.4-.5 2.4 .9 2.4-1.2 2.4-.9 2.4 .1 2.4-.2 2.4 1.6 2.4-1.4 2.4 1.1 2.4-1.1 2.4 1.4 2.4-.1 2.5 .5 2.4-.8 2.4 .5 2.4-1 2.4-.1 2.4 1.4 2.4-.8 2.4-.5 2.4-.8 2.4 .3 2.4-4.1 2.4-1.8 2.4 6.1 2.4-6.3 2.4-8.3 2.4 1.1 2.4 4 2.4 1.6 2.4 2.7 2.4 3.5 2.4-3.3 2.4-6.2 2.4-3.6 2.4 4.3 2.4 2.1 2.4 1.4 2.4 2.7 2.4 1.6 2.4-5.4 2.4-7 2.4 1.7 2.4 3.8 2.4 3.6 2.4 .5 2.4 4.9 2.4-5.1 2.4-6.6 2.4-.9 2.4 1.3 2.4 4.8 2.4 2.2 2.4 2.6 2.4-.8 2.5-6.7 2.4-4 2.4 3.2 2.4 1.3 2.4 2.4 2.4 3.6 2.4 1.4 2.4-6.2 2.4-4.6 2.4-1.4 2.4 3 2.4 3 2.4 2.8 2.4 2.5 2.4-1.2 2.4-7.3 2.4-2.8 2.4 1.8 2.4 4.3 2.4 10 0 8-2.4 0-2.4 0-2.4 0-2.4 0-2.4 0-2.4 0-2.4 0-2.4 0-2.4 0-2.4 0-2.4 0-2.4 0-2.4 0-2.4 0-2.4 0-2.4 0-2.4 0-2.4 0-2.4 0-2.5 0-2.4 0-2.4 0-2.4 0-2.4 0-2.4 0-2.4 0-2.4 0-2.4 0-2.4 0-2.4 0-2.4 0-2.4 0-2.4 0-2.4 0-2.4 0-2.4 0-2.4 0-2.4 0-2.4 0-2.4 0-2.4 0-2.4 0-2.4 0-2.4 0-2.4 0-2.4 0-2.4 0-2.4 0-2.4 0-2.4 0-2.4 0-2.4 0-2.4 0-2.4 0-2.4 0-2.4 0-2.4 0-2.4 0-2.4 0-2.4 0-2.4 0-2.4 0-2.5 0-2.4 0-2.4 0-2.4 0-2.4 0-2.4 0-2.4 0-2.4 0-2.4 0-2.4 0-2.4 0-2.4 0-2.4 0-2.4 0-2.4 0-2.4 0-2.4 0-2.4 0-2.4 0-2.4 0-2.4 0-2.4 0-2.4 0-2.4 0-2.4 0-2.4 0-2.4 0-2.4 0-2.4 0-2.4 0-2.4 0-2.4 0-2.4 0-2.4 0-2.4 0-2.4 0-2.4 0-2.4 0-2.4 0-2.4 0-2.4 0-2.4 0-2.4 0-2.5 0-2.4 0-2.4 0-2.4 0-2.4 0-2.4 0-2.4 0-2.4 0-2.4 0-2.4 0-2.4 0-2.4 0-2.4 0-2.4 0-2.4 0-2.4 0-2.4 0-2.4 0-2.4 0-2.4 0-2.4 0-2.4 0-2.4 0-2.4 0-2.4 0-2.4 0-2.4 0-2.4 0-2.4 0-2.4 0-2.4 0-2.4 0-2.4 0-2.4 0-2.4 0-2.4 0-2.4 0-2.4 0-2.4 0-2.4 0-2.4 0-2.4 0-2.5 0-2.4 0-2.4 0-2.4 0-2.4 0-2.4 0-2.4 0-2.4 0-2.4 0-2.4 0-2.4 0-2.4 0-2.4 0-2.4 0-2.4 0-2.4 0-2.4 0-2.4 0-2.4 0-2.4 0-2.4 0-2.4 0-2.4 0-2.4 0-2.4 0-2.4 0-2.4 0-2.4 0-2.4 0-2.4 0-2.4 0-2.4 0-2.4 0-2.4 0-2.4 0-2.4 0-2.4 0-2.4 0-2.4 0-2.4 0-2.4 0-2.4 0-2.4 0-2.5 0-2.4 0-2.4 0-2.4 0-2.4 0-2.4 0-2.4 0-2.4 0-2.4 0-2.4 0-2.4 0-2.4 0-2.4 0-2.4 0-2.4 0-2.4 0-2.4 0-2.4 0-2.4 0-2.4 0-2.4 0-2.4 0Z" fill="#CCA300" fill-opacity="0.1" clip-path="url(#c9)"/><path d="M1238.1 833.5l2.4 0 2.4 0 2.4 0 2.4 0 2.4 0 2.4 0 2.4-2.8 2.4-12.7 2.4 .5 2.4 1.9 2.4-1.6 2.4-5.6 2.4-2.1 2.4 2.9 2.4 .3 2.4 4.1 2.4 1.8 2.4-.7 2.4-3.9 2.4-5.7 2.4 1.6 2.5 3.6 2.4 1.1 2.4 3.1 2.4 2.4 2.4-5.1 2.4-6.1 2.4 .9 2.4 3 2.4 .7 2.4 4.2 2.4 .8 2.4-1.8 2.4-7 2.4-1 2.4 1.1 2.4 4.2 2.4 2.1 2.4 3.3 2.4 .9 2.4-8.1 2.4-3.6 2.4 1.8 2.4 1.7 2.4 4.4 2.4 2 2.4 2.5 2.4-6.4 2.4-4.4 2.4-1.6 2.4 4 2.4 2 2.4 2.8 2.4 2.5 2.4-3.1 2.4-5 2.4-3.9 2.4 3.3 2.4 1.8 2.4 4.2 2.4 1.6 2.4 .3 2.4-5.4 2.4-6.3 2.5 3.7 2.4 4.6 2.4 4.2 2.4 1.6 2.4 .2 2.4 1.5 2.4 0 2.4 .4 2.4 .1 2.4-1.7 2.4 .1 2.4 1.7 2.4-.4 2.4-.8 2.4 0 2.4-.4 2.4 1 2.4-1.6 2.4 1.7 2.4-.3 2.4-1.5 2.4 1.1 2.4 1.2 2.4-1.5 2.4 1.3 2.4-.8 2.4 0 2.4 .5 2.4 .1 2.4-.3 2.4-1.3 2.4 1.3 2.4-1.4 2.4 1.9 2.4-1.7 2.4 1.4 2.4 .2 2.4-1.7 2.4 .1 2.4 .3 2.4 1 2.4 .6 2.5-2 2.4 1.4 2.4-.1 2.4-.3 2.4 .7 2.4-.5 2.4-.7 2.4-.3 2.4 1.8 2.4-2.2 2.4 .6 2.4 .5 2.4-.3 2.4 0 2.4-.1 2.4 1.2 2.4 .2 2.4-1.9 2.4 0 2.4 .6 2.4 1.5 2.4-1.6 2.4 .5 2.4-1.1 2.4 .6 2.4 .7 2.4 .3 2.4 0 2.4-1 2.4 1.2 2.4-.2 2.4-1.4 2.4 .9 2.4-.7 2.4 .2 2.4-.3 2.4 .2 2.4 .8 2.4-.9 2.4 1.5 2.4-.1 2.4-1.3 2.4 1.3 2.5-.1 2.4-.2 2.4-.8 2.4 1 2.4-1.6 2.4 .9 2.4 .2 2.4-1 2.4 .1 2.4 1.8 2.4-7.5 2.4 2 2.4 1.4 2.4-6.4 2.4-6.5 2.4 2.9 2.4 3.1 2.4 2.6 2.4 1.9 2.4 3.2 2.4-2.9 2.4-8.4 2.4-1 2.4 1.7 2.4 4.3 2.4 3.1 2.4 2.2 2.4 .5 2.4-8.5 2.4-3.2 2.4 1.3 2.4 3.4 2.4 2.2 2.4 2 2.4 3.3 2.4-4.7 2.4-6.8 2.4-.2 2.4 1.9 2.4 3.9 2.4 2.3 2.4 2.1 2.4-.8 2.5-7.2 2.4-2.7 2.4 3 2.4 1.7 2.4 3.1 2.4 1.8 2.4 1.4 2.4-4.8 2.4-5.5 2.4 1.1 2.4 2.8 2.4 2.2 2.4 3.1 2.4 2.3 2.4-4 2.4-6.5 2.4-2.3 2.4 4 2.4 1 2.4 11.5 0 7.7-2.4 0-2.4 0-2.4 0-2.4 0-2.4 0-2.4 0-2.4 0-2.4 0-2.4 0-2.4 0-2.4 0-2.4 0-2.4 0-2.4 0-2.4 0-2.4 0-2.4 0-2.4 0-2.4 0-2.5 0-2.4 0-2.4 0-2.4 0-2.4 0-2.4 0-2.4 0-2.4 0-2.4 0-2.4 0-2.4 0-2.4 0-2.4 0-2.4 0-2.4 0-2.4 0-2.4 0-2.4 0-2.4 0-2.4 0-2.4 0-2.4 0-2.4 0-2.4 0-2.4 0-2.4 0-2.4 0-2.4 0-2.4 0-2.4 0-2.4 0-2.4 0-2.4 0-2.4 0-2.4 0-2.4 0-2.4 0-2.4 0-2.4 0-2.4 0-2.4 0-2.4 0-2.4 0-2.5 0-2.4 0-2.4 0-2.4 0-2.4 0-2.4 0-2.4 0-2.4 0-2.4 0-2.4 0-2.4 0-2.4 0-2.4 0-2.4 0-2.4 0-2.4 0-2.4 0-2.4 0-2.4 0-2.4 0-2.4 0-2.4 0-2.4 0-2.4 0-2.4 0-2.4 0-2.4 0-2.4 0-2.4 0-2.4 0-2.4 0-2.4 0-2.4 0-2.4 0-2.4 0-2.4 0-2.4 0-2.4 0-2.4 0-2.4 0-2.4 0-2.4 0-2.4 0-2.5 0-2.4 0-2.4 0-2.4 0-2.4 0-2.4 0-2.4 0-2.4 0-2.4 0-2.4 0-2.4 0-2.4 0-2.4 0-2.4 0-2.4 0-2.4 0-2.4 0-2.4 0-2.4 0-2.4 0-2.4 0-2.4 0-2.4 0-2.4 0-2.4 0-2.4 0-2.4 0-2.4 0-2.4 0-2.4 0-2.4 0-2.4 0-2.4 0-2.4 0-2.4 0-2.4 0-2.4 0-2.4 0-2.4 0-2.4 0-2.4 0-2.4 0-2.5 0-2.4 0-2.4 0-2.4 0-2.4 0-2.4 0-2.4 0-2.4 0-2.4 0-2.4 0-2.4 0-2.4 0-2.4 0-2.4 0-2.4 0-2.4 0-2.4 0-2.4 0-2.4 0-2.4 0-2.4 0-2.4 0-2.4 0-2.4 0-2.4 0-2.4 0-2.4 0-2.4 0-2.4 0-2.4 0-2.4 0-2.4 0-2.4 0-2.4 0-2.4 0-2.4 0-2.4 0-2.4 0-2.4 0-2.4 0-2.4 0-2.4 0-2.4 0-2.5 0-2.4 0-2.4 0-2.4 0-2.4 0-2.4 0-2.4 0-2.4 0-2.4 0-2.4 0-2.4 0-2.4 0-2.4 0-2.4 0-2.4 0-2.4 0-2.4 0-2.4 0-2.4 0-2.4 0-2.4 0-2.4 0Z" fill="#447EBC" fill-opacity="0.1" clip-path="url(#c9)"/><path d="M1238.1 833.5l2.4 0 2.4 0 2.4 0 2.4 0 2.4 0 2.4 0 2.4-3.1 2.4-13.6 2.4 2.1 2.4 2 2.4-.4 2.4-6.6 2.4-5.5 2.4 4.3 2.4 2.4 2.4 1.3 2.4 3.4 2.4 1.8 2.4-4.4 2.4-6.9 2.4-.6 2.5 2.6 2.4 4.3 2.4 2 2.4 1.5 2.4-1.3 2.4-6.6 2.4-3.3 2.4 2.4 2.4 2.8 2.4 2.6 2.4 4.1 2.4 1 2.4-7 2.4-5.4 2.4 2.1 2.4 2.2 2.4 2.8 2.4 1.9 2.4 2.8 2.4-4 2.4-4.9 2.4-.5 2.4 .9 2.4 2 2.4 3.1 2.4 3 2.4-.9 2.4-7.4 2.4-2 2.4 1.6 2.4 1.9 2.4 4 2.4 2.5 2.4 .4 2.4-5.6 2.4-5.1 2.4 .4 2.4 2.3 2.4 3.4 2.4 4.1 2.4 .5 2.4-3.5 2.4-6.6 2.5-.1 2.4 6.7 2.4 5 2.4 .6 2.4 1.6 2.4-.1 2.4-.7 2.4 1.2 2.4-.8 2.4-1.1 2.4 .7 2.4 1.3 2.4 .1 2.4-.3 2.4-.2 2.4-.1 2.4-1.4 2.4 1.6 2.4-1.5 2.4 1.2 2.4-.6 2.4 .7 2.4-.2 2.4 .3 2.4-.8 2.4 .6 2.4-1.2 2.4 2.1 2.4-1.4 2.4-.3 2.4 1.2 2.4-.5 2.4-.4 2.4-.7 2.4 2.1 2.4-.3 2.4 .1 2.4-1.1 2.4 .4 2.4 .2 2.4 .5 2.4-.8 2.5 .2 2.4-6 2.4-8.5 2.4 1.1 2.4-2.3 2.4 2.3 2.4-8.5 2.4 1.7 2.4 3.6 2.4-1.9 2.4 1.3 2.4-1.6 2.4 .2 2.4-.4 2.4 4.7 2.4-7.1 2.4 .4 2.4-1.9 2.4 3.2 2.4 1.5 2.4 1.9 2.4-3.6 2.4 .5 2.4-3.5 2.4 6.8 2.4-5.4 2.4 1.9 2.4 12.1 2.4 7 2.4-.8 2.4 .6 2.4 .4 2.4 .1 2.4-.1 2.4 .5 2.4-1.7 2.4 2.2 2.4-.9 2.4 .1 2.4-.7 2.4 .5 2.4-1.1 2.4-.1 2.5 2.2 2.4-2.1 2.4 1.8 2.4-.8 2.4-.8 2.4 2.1 2.4-1.1 2.4-1.2 2.4-.1 2.4 .8 2.4-5.9 2.4-1.2 2.4 4.2 2.4-2.9 2.4-4.8 2.4-4.7 2.4 4.3 2.4 3.3 2.4 1.4 2.4 1.7 2.4 .4 2.4-5.1 2.4-6 2.4 1.7 2.4 4.6 2.4 1.5 2.4 3.7 2.4 1.7 2.4-5.8 2.4-5.8 2.4-.5 2.4 2.1 2.4 4.4 2.4 2.9 2.4 2.4 2.4-1.1 2.4-7.2 2.4-4.1 2.4 2.2 2.4 3.3 2.4 1.6 2.4 3.4 2.4 3.1 2.5-7.2 2.4-4.7 2.4-.4 2.4 3.9 2.4 1.8 2.4 1.9 2.4 3.9 2.4-4.6 2.4-4 2.4-3.1 2.4 2.2 2.4 3.7 2.4 1.9 2.4 1.1 2.4 1.3 2.4-4.6 2.4-7.6 2.4 3.9 2.4 2.1 2.4 10.5 0 8.8-2.4 0-2.4 0-2.4 0-2.4 0-2.4 0-2.4 0-2.4 0-2.4 0-2.4 0-2.4 0-2.4 0-2.4 0-2.4 0-2.4 0-2.4 0-2.4 0-2.4 0-2.4 0-2.4 0-2.5 0-2.4 0-2.4 0-2.4 0-2.4 0-2.4 0-2.4 0-2.4 0-2.4 0-2.4 0-2.4 0-2.4 0-2.4 0-2.4 0-2.4 0-2.4 0-2.4 0-2.4 0-2.4 0-2.4 0-2.4 0-2.4 0-2.4 0-2.4 0-2.4 0-2.4 0-2.4 0-2.4 0-2.4 0-2.4 0-2.4 0-2.4 0-2.4 0-2.4 0-2.4 0-2.4 0-2.4 0-2.4 0-2.4 0-2.4 0-2.4 0-2.4 0-2.4 0-2.5 0-2.4 0-2.4 0-2.4 0-2.4 0-2.4 0-2.4 0-2.4 0-2.4 0-2.4 0-2.4 0-2.4 0-2.4 0-2.4 0-2.4 0-2.4 0-2.4 0-2.4 0-2.4 0-2.4 0-2.4 0-2.4 0-2.4 0-2.4 0-2.4 0-2.4 0-2.4 0-2.4 0-2.4 0-2.4 0-2.4 0-2.4 0-2.4 0-2.4 0-2.4 0-2.4 0-2.4 0-2.4 0-2.4 0-2.4 0-2.4 0-2.4 0-2.4 0-2.5 0-2.4 0-2.4 0-2.4 0-2.4 0-2.4 0-2.4 0-2.4 0-2.4 0-2.4 0-2.4 0-2.4 0-2.4 0-2.4 0-2.4 0-2.4 0-2.4 0-2.4 0-2.4 0-2.4 0-2.4 0-2.4 0-2.4 0-2.4 0-2.4 0-2.4 0-2.4 0-2.4 0-2.4 0-2.4 0-2.4 0-2.4 0-2.4 0-2.4 0-2.4 0-2.4 0-2.4 0-2.4 0-2.4 0-2.4 0-2.4 0-2.4 0-2.5 0-2.4 0-2.4 0-2.4 0-2.4 0-2.4 0-2.4 0-2.4 0-2.4 0-2.4 0-2.4 0-2.4 0-2.4 0-2.4 0-2.4 0-2.4 0-2.4 0-2.4 0-2.4 0-2.4 0-2.4 0-2.4 0-2.4 0-2.4 0-2.4 0-2.4 0-2.4 0-2.4 0-2.4 0-2.4 0-2.4 0-2.4 0-2.4 0-2.4 0-2.4 0-2.4 0-2.4 0-2.4 0-2.4 0-2.4 0-2.4 0-2.4 0-2.4 0-2.5 0-2.4 0-2.4 0-2.4 0-2.4 0-2.4 0-2.4 0-2.4 0-2.4 0-2.4 0-2.4 0-2.4 0-2.4 0-2.4 0-2.4 0-2.4 0-2.4 0-2.4 0-2.4 0-2.4 0-2.4 0-2.4 0Z" fill="#C15C17" fill-opacity="0.1" clip-path="url(#c9)"/><path d="M1238.1 832.9l2.4 0 2.4 0 2.4 0 2.4 0 2.4 0 2.4 0 2.4-2.8 2.4-12.1 2.4 .2 2.4 2.3 2.4-1.5 2.4-6 2.4-3.8 2.4 2.8 2.4 2.2 2.4 2.5 2.4 3.2 2.4 .8 2.4-6 2.4-5.6 2.4 1.7 2.5 2.8 2.4 2.6 2.4 2.6 2.4 1.9 2.4-3.7 2.4-6 2.4-1.1 2.4 2.2 2.4 2.8 2.4 3 2.4 2.1 2.4-1.4 2.4-5.9 2.4-3.6 2.4 2.7 2.4 2.6 2.4 2.6 2.4 2.4 2.4 1.4 2.4-6.1 2.4-5.5 2.4 1.5 2.4 2.7 2.4 2.3 2.4 3 2.4 2.4 2.4-4.1 2.4-5.9 2.4-1.4 2.4 2.7 2.4 2.4 2.4 2.6 2.4 2.8 2.4-.8 2.4-5.9 2.4-4.5 2.4 2.2 2.4 2.6 2.4 2.9 2.4 2.7 2.4 1.3 2.4-5.3 2.4-5.6 2.5 1.1 2.4 6 2.4 4.4 2.4 1.9 2.4 .2 2.4 .2 2.4 0 2.4 0 2.4-.3 2.4 .2 2.4-.1 2.4 .3 2.4 .2 2.4-.3 2.4-.1 2.4 0 2.4-.1 2.4 .4 2.4-.1 2.4-.1 2.4-.1 2.4 .4 2.4-.1 2.4-.7 2.4 .5 2.4 .1 2.4-.2 2.4 .2 2.4 0 2.4 0 2.4-.3 2.4 .3 2.4 0 2.4 .1 2.4-.3 2.4 .2 2.4-.2 2.4 .1 2.4-.1 2.4 .3 2.4-.4 2.4 .3 2.5-.1 2.4 .1 2.4 0 2.4 0 2.4 .2 2.4-.5 2.4-.1 2.4 .6 2.4 0 2.4-.3 2.4 .1 2.4-.2 2.4-.2 2.4 .4 2.4-.1 2.4-.1 2.4 0 2.4 .1 2.4-.3 2.4 .5 2.4-.2 2.4-.2 2.4 .3 2.4 0 2.4-.2 2.4 .3 2.4-.2 2.4 .1 2.4-.1 2.4-.2 2.4 .1 2.4 .2 2.4 .3 2.4-.3 2.4-.1 2.4 0 2.4-.3 2.4 .2 2.4 0 2.4 .3 2.4 .1 2.4-.7 2.4 .3 2.5 .5 2.4-.6 2.4 .6 2.4-.3 2.4-.1 2.4-.2 2.4 0 2.4-.2 2.4 .1 2.4 .5 2.4-5.9 2.4-.4 2.4 3.7 2.4-5.1 2.4-6.4 2.4-.2 2.4 3.2 2.4 2.7 2.4 2.3 2.4 2.8 2.4-2.1 2.4-6 2.4-3.7 2.4 2.3 2.4 3 2.4 3 2.4 2.6 2.4 1.3 2.4-6.3 2.4-6.1 2.4 1.6 2.4 2.6 2.4 3 2.4 2.9 2.4 2.6 2.4-3.7 2.4-6.3 2.4-1.8 2.4 2.3 2.4 3.2 2.4 2.4 2.4 2.8 2.4-.6 2.5-5.4 2.4-5.2 2.4 2.4 2.4 2.2 2.4 2.6 2.4 2.8 2.4 1.9 2.4-4.4 2.4-6 2.4-.7 2.4 2.7 2.4 2.8 2.4 2.2 2.4 2.7 2.4-1.1 2.4-6.4 2.4-3.6 2.4 2.6 2.4 2.7 2.4 10.6 0 8.6-2.4 0-2.4 0-2.4 0-2.4 0-2.4 0-2.4 0-2.4 0-2.4 0-2.4 0-2.4 0-2.4 0-2.4 0-2.4 0-2.4 0-2.4 0-2.4 0-2.4 0-2.4 0-2.4 0-2.5 0-2.4 0-2.4 0-2.4 0-2.4 0-2.4 0-2.4 0-2.4 0-2.4 0-2.4 0-2.4 0-2.4 0-2.4 0-2.4 0-2.4 0-2.4 0-2.4 0-2.4 0-2.4 0-2.4 0-2.4 0-2.4 0-2.4 0-2.4 0-2.4 0-2.4 0-2.4 0-2.4 0-2.4 0-2.4 0-2.4 0-2.4 0-2.4 0-2.4 0-2.4 0-2.4 0-2.4 0-2.4 0-2.4 0-2.4 0-2.4 0-2.4 0-2.4 0-2.5 0-2.4 0-2.4 0-2.4 0-2.4 0-2.4 0-2.4 0-2.4 0-2.4 0-2.4 0-2.4 0-2.4 0-2.4 0-2.4 0-2.4 0-2.4 0-2.4 0-2.4 0-2.4 0-2.4 0-2.4 0-2.4 0-2.4 0-2.4 0-2.4 0-2.4 0-2.4 0-2.4 0-2.4 0-2.4 0-2.4 0-2.4 0-2.4 0-2.4 0-2.4 0-2.4 0-2.4 0-2.4 0-2.4 0-2.4 0-2.4 0-2.4 0-2.4 0-2.5 0-2.4 0-2.4 0-2.4 0-2.4 0-2.4 0-2.4 0-2.4 0-2.4 0-2.4 0-2.4 0-2.4 0-2.4 0-2.4 0-2.4 0-2.4 0-2.4 0-2.4 0-2.4 0-2.4 0-2.4 0-2.4 0-2.4 0-2.4 0-2.4 0-2.4 0-2.4 0-2.4 0-2.4 0-2.4 0-2.4 0-2.4 0-2.4 0-2.4 0-2.4 0-2.4 0-2.4 0-2.4 0-2.4 0-2.4 0-2.4 0-2.4 0-2.5 0-2.4 0-2.4 0-2.4 0-2.4 0-2.4 0-2.4 0-2.4 0-2.4 0-2.4 0-2.4 0-2.4 0-2.4 0-2.4 0-2.4 0-2.4 0-2.4 0-2.4 0-2.4 0-2.4 0-2.4 0-2.4 0-2.4 0-2.4 0-2.4 0-2.4 0-2.4 0-2.4 0-2.4 0-2.4 0-2.4 0-2.4 0-2.4 0-2.4 0-2.4 0-2.4 0-2.4 0-2.4 0-2.4 0-2.4 0-2.4 0-2.4 0-2.4 0-2.5 0-2.4 0-2.4 0-2.4 0-2.4 0-2.4 0-2.4 0-2.4 0-2.4 0-2.4 0-2.4 0-2.4 0-2.4 0-2.4 0-2.4 0-2.4 0-2.4 0-2.4 0-2.4 0-2.4 0-2.4 0-2.4 0Z" fill="#890F02" fill-opacity="0.1" clip-path="url(#c9)"/><path d="M1238.1 833.5l2.4 0 2.4 0 2.4 0 2.4 0 2.4 0 2.4 0 2.4 0 2.4 0 2.4 0 2.4 0 2.4 0 2.4 0 2.4 0 2.4 0 2.4 0 2.4 0 2.4 0 2.4 0 2.4 0 2.4 0 2.4 0 2.5 0 2.4 0 2.4 0 2.4 0 2.4 0 2.4 0 2.4 0 2.4 0 2.4 0 2.4 0 2.4 0 2.4 0 2.4 0 2.4 0 2.4 0 2.4 0 2.4 0 2.4 0 2.4 0 2.4 0 2.4 0 2.4 0 2.4 0 2.4 0 2.4 0 2.4 0 2.4 0 2.4 0 2.4 0 2.4 0 2.4 0 2.4 0 2.4 0 2.4 0 2.4 0 2.4 0 2.4 0 2.4 0 2.4 0 2.4 0 2.4 0 2.4 0 2.4 0 2.5 0 2.4 0 2.4 0 2.4 0 2.4 0 2.4 0 2.4 0 2.4 0 2.4 0 2.4 0 2.4 0 2.4 0 2.4 0 2.4 0 2.4 0 2.4 0 2.4 0 2.4 0 2.4 0 2.4 0 2.4 0 2.4 0 2.4 0 2.4 0 2.4 0 2.4 0 2.4 0 2.4 0 2.4 0 2.4 0 2.4 0 2.4 0 2.4 0 2.4 0 2.4 0 2.4 0 2.4 0 2.4 0 2.4 0 2.4 0 2.4 0 2.4 0 2.5 0 2.4 0 2.4 0 2.4 0 2.4 0 2.4 0 2.4 0 2.4 0 2.4 0 2.4 0 2.4 0 2.4 0 2.4 0 2.4 0 2.4 0 2.4 0 2.4 0 2.4 0 2.4 0 2.4 0 2.4 0 2.4 0 2.4 0 2.4 0 2.4 0 2.4 0 2.4 0 2.4 0 2.4 0 2.4 0 2.4 0 2.4 0 2.4 0 2.4 0 2.4 0 2.4 0 2.4 0 2.4 0 2.4 0 2.4 0 2.4 0 2.4 0 2.4 0 2.5 0 2.4 0 2.4 0 2.4 0 2.4 0 2.4 0 2.4 0 2.4 0 2.4 0 2.4 0 2.4 0 2.4 0 2.4 0 2.4 0 2.4 0 2.4 0 2.4 0 2.4 0 2.4 0 2.4 0 2.4 0 2.4 0 2.4 0 2.4 0 2.4 0 2.4 0 2.4 0 2.4 0 2.4 0 2.4 0 2.4 0 2.4 0 2.4 0 2.4 0 2.4 0 2.4 0 2.4 0 2.4 0 2.4 0 2.4 0 2.4 0 2.4 0 2.4 0 2.5 0 2.4 0 2.4 0 2.4 0 2.4 0 2.4 0 2.4 0 2.4 0 2.4 0 2.4 0 2.4 0 2.4 0 2.4 0 2.4 0 2.4 0 2.4 0 2.4 0 2.4 0 2.4 0 2.4 0" stroke="#7EB26D" fill="none" clip-path="url(#c9)"/><path d="M1238.1 833.5l2.4 0 2.4 0 2.4 0 2.4 0 2.4 0 2.4 0 2.4-2.9 2.4-11.9 2.4-1.6 2.4 2.3 2.4 .3 2.4-5.1 2.4-4 2.4 .1 2.4 3.9 2.4 2.2 2.4 3.2 2.4 1.2 2.4-5.5 2.4-6.5 2.4 1.4 2.5 4.2 2.4 .6 2.4 3.6 2.4 2.8 2.4-2.8 2.4-14.5 2.4 1 2.4 1 2.4 1.6 2.4-.2 2.4 4.3 2.4-.4 2.4-4.2 2.4-2.8 2.4 4.1 2.4 6.4 2.4 1.5 2.4 2 2.4 4.3 2.4-5.6 2.4-6.3 2.4 .8 2.4 1.7 2.4 2.6 2.4 2.7 2.4 1.3 2.4-2 2.4-5.3 2.4-3.4 2.4 3.4 2.4 1.6 2.4 2.3 2.4 4 2.4-.6 2.4-5.2 2.4-5.4 2.4 .9 2.4 2.9 2.4 2.2 2.4 2.7 2.4 3.2 2.4-4 2.4-6.9 2.5-.4 2.4 7.3 2.4 4.6 2.4 1.5 2.4 1.3 2.4 0 2.4-1.2 2.4-.5 2.4 0 2.4 1.2 2.4-.4 2.4 .6 2.4-1.1 2.4-.1 2.4 1.5 2.4-1.4 2.4 .5 2.4-.2 2.4-.4 2.4 1.9 2.4-.7 2.4-1.7 2.4 1.5 2.4-1.4 2.4 1.6 2.4-1.7 2.4 1.5 2.4-.2 2.4 .9 2.4-1.9 2.4 1.1 2.4 .6 2.4-.2 2.4-1.6 2.4 .2 2.4 .9 2.4-1.1 2.4 1.9 2.4-.2 2.4 .5 2.4-1.2 2.4-.6 2.5 .5 2.4-.1 2.4 1.1 2.4 .3 2.4-.8 2.4-1 2.4 .8 2.4 0 2.4 .8 2.4-.4 2.4-.7 2.4 0 2.4-.3 2.4 1.5 2.4-1.7 2.4 1.5 2.4-1.5 2.4 1.5 2.4-1.4 2.4-.1 2.4 1 2.4 0 2.4 .4 2.4 .2 2.4-2.2 2.4 2.5 2.4-1.7 2.4-.3 2.4 .9 2.4-1.1 2.4 .1 2.4 0 2.4 1.1 2.4 .9 2.4-.7 2.4-1.6 2.4 .3 2.4 1.8 2.4 .1 2.4-1.4 2.4 .7 2.4-1.2 2.4 0 2.5 .7 2.4 1.3 2.4-.6 2.4-.6 2.4 .7 2.4-1.9 2.4 .8 2.4 .2 2.4 0 2.4 1 2.4-5.3 2.4-3.2 2.4 4.9 2.4-2.4 2.4-7.4 2.4-2.8 2.4 3.6 2.4 3.8 2.4 2.8 2.4 2.2 2.4-.2 2.4-6.8 2.4-6 2.4 2.8 2.4 2.4 2.4 3.1 2.4 3 2.4 2.5 2.4-5.6 2.4-5.9 2.4 1.1 2.4 .9 2.4 4.1 2.4 3 2.4 2.6 2.4-2.1 2.4-6.7 2.4-3.3 2.4 2.5 2.4 3.1 2.4 2.6 2.4 2.3 2.4-.3 2.5-4.3 2.4-7.8 2.4 3.2 2.4 2.6 2.4 1.6 2.4 4.2 2.4 1.5 2.4-2.5 2.4-6.3 2.4-3 2.4 3.5 2.4 1.3 2.4 2.6 2.4 3.1 2.4 .8 2.4-7.9 2.4-3.5 2.4 1.2 2.4 4.3 2.4 10.4" stroke="#EAB839" fill="none" clip-path="url(#c9)"/><path d="M1238.1 833.5l2.4 0 2.4 0 2.4 0 2.4 0 2.4 0 2.4 0 2.4-2.7 2.4-12.7 2.4-.3 2.4 3.6 2.4-2 2.4-7.2 2.4-2.9 2.4 2.5 2.4 3.3 2.4 2.1 2.4 2.9 2.4 1.6 2.4-8.3 2.4-5 2.4 3 2.5 2.5 2.4 2.3 2.4 3.7 2.4 2.9 2.4-5.6 2.4-5.8 2.4 .5 2.4 .8 2.4 3.7 2.4 2.1 2.4 1.5 2.4-.8 2.4-6.5 2.4-2.5 2.4 2.9 2.4 2.1 2.4 2.3 2.4 2.7 2.4 .4 2.4-6.5 2.4-5.7 2.4 4.4 2.4 2.6 2.4 .4 2.4 4.2 2.4 1.5 2.4-3.8 2.4-7.2 2.4 1.3 2.4 .8 2.4 3.8 2.4 1.8 2.4 2.9 2.4-1.7 2.4-6 2.4-4.6 2.4 2.8 2.4 3.2 2.4 2.3 2.4 2.9 2.4 .5 2.4-5.5 2.4-6.2 2.5 3.7 2.4 5.5 2.4 4 2.4 3 2.4-1.9 2.4 .5 2.4 .2 2.4 1.2 2.4 0 2.4-.5 2.4-.4 2.4-.2 2.4 .9 2.4-1.8 2.4 2.3 2.4-2.1 2.4 1.5 2.4 .5 2.4-.5 2.4-.3 2.4-.6 2.4 1.4 2.4-1.4 2.4-.7 2.4 1 2.4 .3 2.4 .4 2.4-.3 2.4 .1 2.4 .3 2.4-.7 2.4-.7 2.4 1.7 2.4 .1 2.4-2.2 2.4 0 2.4 .5 2.4 1.7 2.4-1.7 2.4 .7 2.4-.7 2.4 .1 2.5 1.7 2.4-2.4 2.4 .2 2.4 0 2.4 1.6 2.4-1.3 2.4 1.9 2.4 0 2.4-.9 2.4-.9 2.4 1.2 2.4-1.6 2.4 2.2 2.4-2 2.4 1.6 2.4-1.2 2.4 1 2.4-.3 2.4-1.5 2.4 1.7 2.4 .3 2.4-1.3 2.4-.5 2.4 .5 2.4 .4 2.4 .7 2.4-.3 2.4 0 2.4 .6 2.4-.3 2.4-.9 2.4 1.1 2.4-1.3 2.4 .8 2.4 .6 2.4-.2 2.4-1.2 2.4-.2 2.4 1.2 2.4 .6 2.4-1.4 2.4-.9 2.4 1.9 2.5-1.8 2.4 1.9 2.4 .3 2.4-.4 2.4-.5 2.4-1.3 2.4-.1 2.4 .3 2.4 1.5 2.4-.9 2.4-5 2.4 .9 2.4 2.2 2.4-6.7 2.4-6 2.4 1.3 2.4 2.9 2.4 1.6 2.4 4.6 2.4 2 2.4-3 2.4-5.9 2.4-2.1 2.4 1.9 2.4 1.8 2.4 4.3 2.4 2.5 2.4-1.2 2.4-5.1 2.4-7.3 2.4 4.9 2.4 1.3 2.4 2.8 2.4 2.8 2.4 1.7 2.4-5.1 2.4-4 2.4-.8 2.4 .9 2.4 4.2 2.4-7.4 2.4 .8 2.4-1.5 2.5-4.6 2.4-6.6 2.4 7.5 2.4 1 2.4-.7 2.4 1.7 2.4 2.3 2.4-2.6 2.4-6.7 2.4 1.9 2.4 .2 2.4 .1 2.4 5.7 2.4 4.6 2.4 5.2 2.4-4.1 2.4-4 2.4 4.3 2.4 2.1 2.4 10.4" stroke="#6ED0E0" fill="none" clip-path="url(#c9)"/><path d="M1238.1 833.5l2.4 0 2.4 0 2.4 0 2.4 0 2.4 0 2.4 0 2.4-2.8 2.4-12.1 2.4-.8 2.4 2.9 2.4-.7 2.4-7.6 2.4-2.5 2.4 1.6 2.4 2.9 2.4 2.3 2.4 4.3 2.4 1 2.4-7.7 2.4-3.9 2.4 2.2 2.5 .8 2.4 4.2 2.4 2.5 2.4 .7 2.4-3.9 2.4-4.9 2.4-.9 2.4 3.1 2.4 2.4 2.4 2.8 2.4 2.4 2.4-3.5 2.4-4.3 2.4-4.3 2.4 2.4 2.4 1.6 2.4 3.1 2.4 2.2 2.4 1.7 2.4-4.3 2.4-6.1 2.4 2.1 2.4 2.1 2.4 1.7 2.4 4.1 2.4 2.1 2.4-5.5 2.4-6.5 2.4 .9 2.4 1.8 2.4 2.1 2.4 3.7 2.4 2.7 2.4-2 2.4-4.7 2.4-5.6 2.4 3.2 2.4 3.1 2.4 3 2.4 1.1 2.4 1 2.4-5 2.4-4.9 2.5 .8 2.4 5.8 2.4 5.4 2.4 1.3 2.4-.6 2.4 .3 2.4-.1 2.4 1.6 2.4-1.4 2.4 .8 2.4-1.3 2.4 0 2.4 1.5 2.4-.8 2.4-.9 2.4 1.1 2.4-15.1 2.4 1.5 2.4-3.7 2.4-3.1 2.4-.5 2.4-2.9 2.4 8.8 2.4-3.4 2.4-2.2 2.4 2.7 2.4-1.4 2.4-.5 2.4 4.2 2.4 1.6 2.4-4.2 2.4-1 2.4-.7 2.4 2.5 2.4-2.5 2.4 .7 2.4 3.8 2.4 .8 2.4-3.2 2.4-7.6 2.4 10.6 2.4 .9 2.5-5.1 2.4 17.7 2.4 1.1 2.4 .7 2.4 .3 2.4-1.7 2.4-.1 2.4 .6 2.4 .6 2.4 1 2.4-1.3 2.4-.9 2.4 0 2.4 2 2.4-2.1 2.4 .9 2.4-1 2.4 2.2 2.4-1.2 2.4 1.1 2.4-.9 2.4-1.3 2.4 1.2 2.4 .7 2.4-.7 2.4-.1 2.4 .2 2.4 .8 2.4-.5 2.4-.6 2.4 .4 2.4 .3 2.4 .8 2.4-.7 2.4 .5 2.4-.6 2.4-1.4 2.4-.2 2.4 .5 2.4 .8 2.4-.3 2.4-.7 2.4-.2 2.5 2.3 2.4-1.6 2.4 1.1 2.4-1.6 2.4 1 2.4 .1 2.4-1 2.4-.4 2.4 .5 2.4 .9 2.4-5.3 2.4-.8 2.4 4.5 2.4-5.3 2.4-6.6 2.4 .5 2.4 1.8 2.4 2.4 2.4 2.5 2.4 3 2.4-2.8 2.4-6.5 2.4-1.6 2.4 1.4 2.4 2.2 2.4 3.9 2.4 1.6 2.4 3 2.4-6.7 2.4-7 2.4 1.4 2.4 4.6 2.4 1.5 2.4 3.6 2.4 3 2.4-4.7 2.4-6.4 2.4-2.6 2.4 3.6 2.4 1.6 2.4 3.4 2.4 4 2.4-2.4 2.5-4.4 2.4-5 2.4 1.3 2.4 3.7 2.4 2.8 2.4 2.6 2.4 1.5 2.4-4.4 2.4-6.7 2.4-.4 2.4 2.7 2.4 3.8 2.4 1.1 2.4 2.3 2.4-.9 2.4-5.9 2.4-2.8 2.4 1.4 2.4 3.2 2.4 10.8" stroke="#EF843C" fill="none" clip-path="url(#c9)"/><path d="M1238.1 833.5l2.4 0 2.4 0 2.4 0 2.4 0 2.4 0 2.4 0 2.4-2.8 2.4-11.1 2.4 .3 2.4 2.2 2.4-4.9 2.4-4.9 2.4-2.6 2.4 4.3 2.4 .7 2.4 3.4 2.4 3.2 2.4-2 2.4-4.7 2.4-4.6 2.4 1 2.5 3.5 2.4 1.6 2.4 4.1 2.4 1.2 2.4-4.3 2.4-5.9 2.4-.8 2.4 2.1 2.4 4 2.4 3.1 2.4 1.9 2.4-3.8 2.4-4.5 2.4-2 2.4 1 2.4 3.4 2.4 3.3 2.4 2.7 2.4-.7 2.4-7.1 2.4-5 2.4 2.2 2.4 3.5 2.4 1.8 2.4 4.4 2.4 1.7 2.4-5.3 2.4-5.6 2.4-1.4 2.4 3.6 2.4 2 2.4 1.9 2.4 3.5 2.4-2.7 2.4-6.1 2.4-1.7 2.4 2.3 2.4 1.2 2.4 3.3 2.4 2.6 2.4 .9 2.4-7 2.4-4 2.5 1.7 2.4 6.2 2.4 3.5 2.4 3.8 2.4-1.4 2.4 1.1 2.4 .6 2.4-1.9 2.4 1.1 2.4 .6 2.4-1.7 2.4 1.7 2.4-1.8 2.4 1.5 2.4-1.7 2.4 1.8 2.4-2 2.4 .8 2.4 1.4 2.4-2 2.4 1.2 2.4 1.1 2.4-2.1 2.4 .4 2.4 .2 2.4 .9 2.4-1.1 2.4 .2 2.4-.7 2.4 1.3 2.4-1.6 2.4 1.8 2.4 0 2.4-.6 2.4 1.3 2.4-1.4 2.4 .7 2.4-1.7 2.4 .6 2.4 1.4 2.4-1 2.4-.4 2.5 1.3 2.4 .3 2.4-.8 2.4-.1 2.4 .8 2.4-1.2 2.4 .8 2.4-1 2.4 1.1 2.4-1.6 2.4-.2 2.4 2.1 2.4-.7 2.4 .1 2.4 .8 2.4-.9 2.4 .5 2.4-1.6 2.4 .8 2.4 .6 2.4-1.5 2.4-.3 2.4 2 2.4-1 2.4 .9 2.4-1.9 2.4 1.9 2.4-.6 2.4-23.7 2.4 5.1 2.4-2.4 2.4 3.4 2.4 4.3 2.4-8.2 2.4 7.5 2.4-11.6 2.4 9.9 2.4-2.8 2.4-1.1 2.4 5.9 2.4-5.9 2.4 4.2 2.4-2.2 2.5 4.3 2.4 .1 2.4-6.8 2.4 5.3 2.4-13.9 2.4 11.9 2.4 1.4 2.4-5.7 2.4 2.9 2.4 4.6 2.4-2.9 2.4 3.7 2.4 10.1 2.4-6.2 2.4-7.2 2.4 2.4 2.4 2.9 2.4 3.8 2.4 2.5 2.4 1.9 2.4-3.1 2.4-6 2.4-2.6 2.4 2 2.4 2.4 2.4 4.3 2.4 2.6 2.4-1.6 2.4-5.1 2.4-5.6 2.4 2.7 2.4 1.3 2.4 2.4 2.4 4.8 2.4 1.3 2.4-5.3 2.4-6.4 2.4 1.1 2.4 3 2.4 1.8 2.4 2.3 2.4 4.1 2.4-3.9 2.5-4 2.4-4.3 2.4 2.3 2.4 1.1 2.4 4 2.4 3.2 2.4 2 2.4-7.4 2.4-5.2 2.4 .7 2.4 3.1 2.4 2.2 2.4 1.6 2.4 3.4 2.4-3.9 2.4-5.4 2.4-2.6 2.4 3.9 2.4 1.8 2.4 10.5" stroke="#E24D42" fill="none" clip-path="url(#c9)"/><path d="M1238.1 833.5l2.4 0 2.4 0 2.4 0 2.4 0 2.4 0 2.4 0 2.4-2.9 2.4-11.6 2.4-.5 2.4 3.2 2.4-2.1 2.4-5.5 2.4-4.6 2.4 3 2.4 3.6 2.4 .2 2.4 3.6 2.4 1.4 2.4-6.8 2.4-6 2.4 2.8 2.5 2.1 2.4 4.2 2.4 .7 2.4 2.4 2.4-3.5 2.4-5.2 2.4-1.6 2.4 1.8 2.4 2.6 2.4 4.5 2.4 1 2.4 .4 2.4-7.7 2.4-3.6 2.4 4 2.4 1.6 2.4 3.4 2.4 1.7 2.4 1.4 2.4-6.9 2.4-5.9 2.4 1.6 2.4 3.8 2.4 3 2.4 .9 2.4 4.5 2.4-5.4 2.4-5.9 2.4-1.8 2.4 2.5 2.4 3.5 2.4 1.9 2.4 2.2 2.4 .6 2.4-6.2 2.4-5.5 2.4 3.6 2.4 1.5 2.4 4.7 2.4 1.5 2.4 2.5 2.4-6.5 2.4-4.4 2.5 .8 2.4 4.8 2.4 4.2 2.4 2.2 2.4 .8 2.4 .6 2.4-1.2 2.4 1.2 2.4-1.7 2.4 .4 2.4 1.2 2.4-1.5 2.4 1.4 2.4 .9 2.4-1 2.4-1.2 2.4 .8 2.4-.2 2.4 1.4 2.4-1.7 2.4 .9 2.4 0 2.4 .1 2.4-.3 2.4-.5 2.4 1.8 2.4-2.1 2.4 1.1 2.4-.3 2.4 .8 2.4-1.5 2.4 .3 2.4 .2 2.4-.8 2.4 .8 2.4 1 2.4-.6 2.4 .6 2.4-.6 2.4-1.4 2.4 .8 2.4 .6 2.5-1.3 2.4 1.4 2.4 .3 2.4-1.5 2.4 1.3 2.4-.5 2.4 .7 2.4-.4 2.4-.5 2.4 .2 2.4-.2 2.4 1.1 2.4-1 2.4 .9 2.4-1.1 2.4 .5 2.4-1.3 2.4 0 2.4 2 2.4-.1 2.4-1.1 2.4 .1 2.4 1.1 2.4 .2 2.4-.6 2.4 .5 2.4 .1 2.4-.1 2.4-2.1 2.4 2.1 2.4-2 2.4 2.1 2.4-.4 2.4-1 2.4 .5 2.4 .4 2.4-.5 2.4-1 2.4 0 2.4 1.4 2.4 .8 2.4-1.9 2.4 0 2.5 .5 2.4-.6 2.4 1.2 2.4-1.3 2.4 1.8 2.4-1.2 2.4 .7 2.4 .5 2.4-1.1 2.4 1.2 2.4-6.6 2.4-1.4 2.4-12.6 2.4-5.1 2.4-8.2 2.4 3.3 2.4 1.3 2.4 4.5 2.4 .6 2.4 3.3 2.4 1.3 2.4-12.2 2.4-2 2.4 1.6 2.4 3.5 2.4 .9 2.4 2.3 2.4 5.3 2.4-4.7 2.4-7.1 2.4 2.5 2.4-.4 2.4 2.9 2.4 5.9 2.4 2 2.4-6.7 2.4-7.7 2.4 .1 2.4 4.9 2.4 3.5 2.4 18.2 2.4 1.3 2.4-.3 2.5-5.1 2.4-4.5 2.4 1.8 2.4 3.1 2.4 1.6 2.4 3.7 2.4 2.2 2.4-5.1 2.4-5.7 2.4-.7 2.4 2.5 2.4 1.4 2.4 2.9 2.4 3.7 2.4-.7 2.4-8.3 2.4-2 2.4 1.6 2.4 3.2 2.4 10.9" stroke="#1F78C1" fill="none" clip-path="url(#c9)"/><path d="M1238.1 833.5l2.4 0 2.4 0 2.4 0 2.4 0 2.4 0 2.4 0 2.4-2.8 2.4-12.4 2.4 .3 2.4 2 2.4 .3 2.4-5.6 2.4-6.4 2.4 3 2.4 1.4 2.4 4.8 2.4 1 2.4 4.4 2.4-7.6 2.4-5.3 2.4 1.2 2.5 2.8 2.4 2.7 2.4 1.4 2.4 2.3 2.4-1.4 2.4-7.3 2.4-1.6 2.4 1.2 2.4 4 2.4 1.8 2.4 2.7 2.4 0 2.4-6 2.4-6 2.4 4.7 2.4 1.7 2.4 3.3 2.4 2.6 2.4 1.5 2.4-5.9 2.4-5.3 2.4-.8 2.4 2.6 2.4 4.3 2.4 1.2 2.4 2.8 2.4-2.4 2.4-5.4 2.4-3.3 2.4 3.7 2.4 1.6 2.4 2.2 2.4 3.6 2.4 .7 2.4-7.3 2.4-5.9 2.4 3 2.4 3 2.4 2.1 2.4 3.6 2.4 2.4 2.4-4.7 2.4-6.9 2.5-.1 2.4 6.2 2.4 4.2 2.4 3.1 2.4 .8 2.4-1.6 2.4 0 2.4-.6 2.4-.1 2.4 1.4 2.4-.2 2.4-1 2.4 1.8 2.4 .1 2.4-.9 2.4-.2 2.4 .8 2.4 .2 2.4-.2 2.4-1.6 2.4 .1 2.4 2 2.4-.8 2.4-.6 2.4-.2 2.4 .4 2.4 1.1 2.4-1.1 2.4 .8 2.4-.4 2.4-1.4 2.4 .6 2.4 1.4 2.4 .2 2.4-.7 2.4 .1 2.4-1.1 2.4 1.2 2.4-1.5 2.4 .6 2.4-.9 2.4 1.8 2.5-.3 2.4 .1 2.4-.6 2.4 .5 2.4-1.5 2.4 2.2 2.4-2.2 2.4 2 2.4-1.4 2.4 1.7 2.4-1.2 2.4 .1 2.4-.6 2.4-.4 2.4 1.6 2.4-1.7 2.4 1.5 2.4 .3 2.4-1.4 2.4 1.3 2.4-.9 2.4 .6 2.4-.5 2.4 .9 2.4-.1 2.4-.1 2.4-1.4 2.4-.1 2.4 1.4 2.4-1.4 2.4 1 2.4 .7 2.4-.2 2.4-.3 2.4-.6 2.4 .9 2.4 .6 2.4-1 2.4 .1 2.4-.1 2.4 .3 2.4-.2 2.4 0 2.5 .3 2.4-.4 2.4-.3 2.4 1 2.4-.7 2.4-.9 2.4 .8 2.4 .4 2.4 .8 2.4-.9 2.4-6.1 2.4 0 2.4 2.1 2.4-3.8 2.4-4.3 2.4-2.9 2.4 4 2.4 3 2.4 .3 2.4 3.8 2.4-.9 2.4-4.7 2.4-6.8 2.4 3.5 2.4 2.1 2.4 3 2.4 2.9 2.4 3 2.4-7.3 2.4-6.3 2.4 1.1 2.4 1.9 2.4 3.4 2.4 3.9 2.4 1.2 2.4-2.2 2.4-5.4 2.4-2.9 2.4 1.9 2.4 2.9 2.4 2.8 2.4 2.5 2.4 .2 2.5-4.9 2.4-5.3 2.4 2.1 2.4 1.8 2.4 3.1 2.4 1.1 2.4 2.3 2.4-2.7 2.4-7.4 2.4-.7 2.4 1.7 2.4 3.8 2.4 1.7 2.4 2.6 2.4 1.5 2.4-7.2 2.4-4.2 2.4 1.1 2.4 3.1 2.4 11.6" stroke="#BA43A9" fill="none" clip-path="url(#c9)"/><path d="M1238.1 833.5l2.4 0 2.4 0 2.4 0 2.4 0 2.4 0 2.4 0 2.4-2.8 2.4-12.1 2.4 1 2.4 .4 2.4-.2 2.4-7.5 2.4-3.4 2.4 3.6 2.4 1.8 2.4 3.5 2.4 3.8 2.4-.3 2.4-6.3 2.4-5.2 2.4 .9 2.5 3.2 2.4 3.4 2.4 2.6 2.4 1.7 2.4-4.7 2.4-5.6 2.4-1.4 2.4 2.5 2.4 2.5 2.4 3 2.4 3.4 2.4-3.5 2.4-4.7 2.4-4.4 2.4 4.2 2.4 3.3 2.4 2.2 2.4 2.2 2.4 .2 2.4-5.7 2.4-6.5 2.4 1.8 2.4 3.7 2.4 2.1 2.4 2.7 2.4 3.5 2.4-5.7 2.4-5.8 2.4-.2 2.4 1.8 2.4 3.8 2.4 3.1 2.4 1.1 2.4-20.8 2.4-2.6 2.4 .8 2.4-.8 2.4 5.1 2.4 1.3 2.4 3.5 2.4-2.1 2.4-5.7 2.4-2.6 2.5 .9 2.4 2 2.4 1.2 2.4 6.5 2.4-4.2 2.4-4 2.4 .2 2.4 5.1 2.4 1.1 2.4 .2 2.4 3.1 2.4-1.4 2.4 .9 2.4 1.9 2.4-3.6 2.4 10.3 2.4 7.8 2.4-.5 2.4-.8 2.4 1.7 2.4-1.8 2.4 .6 2.4 1.6 2.4-1.7 2.4 1.6 2.4-.6 2.4-1.1 2.4 0 2.4-.2 2.4 .6 2.4 1.4 2.4-1.7 2.4 .5 2.4 .1 2.4-1.2 2.4 .7 2.4-.1 2.4 .2 2.4 1.3 2.4-1.6 2.4-.6 2.4 1.5 2.5-1 2.4 2 2.4-2.2 2.4 1.6 2.4-.4 2.4-1.3 2.4 .2 2.4 .7 2.4 .7 2.4 .6 2.4 0 2.4-1.3 2.4 .8 2.4-.5 2.4 .9 2.4-2.2 2.4 .2 2.4 1.6 2.4 .2 2.4-.5 2.4-.4 2.4 .4 2.4 .3 2.4-1.7 2.4 1 2.4-1 2.4 .9 2.4 .8 2.4-1.1 2.4 .3 2.4-.3 2.4 .4 2.4-.5 2.4-.2 2.4-.5 2.4 1.3 2.4-.6 2.4 1.4 2.4 0 2.4-1.3 2.4 1 2.4-.6 2.4-.3 2.5 .4 2.4-1.3 2.4 1.2 2.4 .8 2.4-.1 2.4-1.7 2.4 1 2.4-1 2.4 1.4 2.4-.6 2.4-6.1 2.4 .1 2.4 3.3 2.4-4.2 2.4-7.1 2.4 .9 2.4 1.3 2.4 3.9 2.4 1.6 2.4 3.8 2.4-4.2 2.4-5.4 2.4-2.2 2.4 2 2.4 2.9 2.4 3.5 2.4 2.3 2.4 1.1 2.4-5.7 2.4-7.9 2.4 2.9 2.4 3.5 2.4 2.4 2.4 2.6 2.4 3.1 2.4-5 2.4-6.3 2.4-2.1 2.4 3.2 2.4 3.9 2.4 2.1 2.4 3.2 2.4-1.9 2.5-5.4 2.4-4.7 2.4 2.9 2.4 1.9 2.4 1.6 2.4 4.6 2.4 .7 2.4-4 2.4-7.8 2.4 1.1 2.4 2.3 2.4 4.1 2.4 2.2 2.4 2.8 2.4-3.1 2.4-6.6 2.4-2.3 2.4 2.1 2.4 2.6 2.4 10.6" stroke="#705DA0" fill="none" clip-path="url(#c9)"/><path d="M1238.1 833.5l2.4 0 2.4 0 2.4 0 2.4 0 2.4 0 2.4 0 2.4-2.8 2.4-12.8 2.4 1.1 2.4 2.8 2.4-2.7 2.4-5 2.4-3.8 2.4 2.6 2.4 2.7 2.4 1.4 2.4 3.5 2.4 .5 2.4-4.8 2.4-7.5 2.4 3.3 2.5 2.1 2.4 1.7 2.4 3.5 2.4 1.1 2.4-3.2 2.4-5.6 2.4-2.1 2.4 3 2.4 4.1 2.4 2.1 2.4 .8 2.4-.4 2.4-4.1 2.4-4.7 2.4 2.4 2.4-6.7 2.4 3.5 2.4 2.6 2.4 3.3 2.4-9.7 2.4-3.5 2.4-3.1 2.4 6 2.4 .8 2.4 2.4 2.4 5.4 2.4-3.6 2.4-7.5 2.4-.7 2.4 1.3 2.4 5 2.4 4 2.4 2.1 2.4 7.1 2.4-6.2 2.4-5.2 2.4 2.4 2.4 3.3 2.4 1 2.4 3.5 2.4 2.4 2.4-5.6 2.4-5.7 2.5-.1 2.4 6.9 2.4 3.8 2.4 1.2 2.4 1.8 2.4-1.5 2.4 1.3 2.4-1.7 2.4 .4 2.4 .6 2.4 0 2.4 .6 2.4-.9 2.4-.2 2.4-.2 2.4 1.2 2.4-1.1 2.4 1.9 2.4-.2 2.4-1.4 2.4 1.5 2.4-.7 2.4-.9 2.4-.1 2.4 1.4 2.4-.9 2.4-.1 2.4-.3 2.4-.5 2.4 .6 2.4-.7 2.4 2.1 2.4-1.6 2.4 1.8 2.4-1.2 2.4-.7 2.4 .2 2.4 .2 2.4-.1 2.4 1.6 2.4-1.6 2.4-.3 2.5 1.5 2.4-1.4 2.4 .6 2.4 0 2.4 .4 2.4-1.1 2.4-.4 2.4 2.3 2.4-.5 2.4-.9 2.4 1.4 2.4-.9 2.4-1.3 2.4 0 2.4 .5 2.4 .2 2.4 .1 2.4-.9 2.4 .7 2.4 .8 2.4-.4 2.4 .7 2.4 0 2.4-.8 2.4 .8 2.4-.7 2.4-.9 2.4 .3 2.4 .3 2.4-.4 2.4 1.1 2.4-1.3 2.4 2.2 2.4-.7 2.4-.9 2.4 1.7 2.4-1.9 2.4-.3 2.4 .2 2.4 .6 2.4 1.3 2.4-.9 2.4 .6 2.5-.3 2.4-1.8 2.4 2 2.4-.6 2.4-.8 2.4 1.1 2.4-.5 2.4-.1 2.4-1 2.4 1.5 2.4-6.8 2.4 .9 2.4 4.3 2.4-6.6 2.4-6.2 2.4-.7 2.4 4.1 2.4 1.4 2.4 2.5 2.4 2.3 2.4-.2 2.4-5.1 2.4-5.1 2.4 1.2 2.4 4.9 2.4 2.1 2.4 2.7 2.4 2.7 2.4-8.2 2.4-5.2 2.4-.1 2.4 3.2 2.4 2.7 2.4 2.9 2.4 2.9 2.4-2.1 2.4-6.7 2.4-2.4 2.4 2 2.4 2.8 2.4 3.3 2.4 1.7 2.4 1.3 2.5-5.2 2.4-8.5 2.4 4.6 2.4 1.6 2.4 2.9 2.4 2 2.4 2.3 2.4-2.6 2.4-6.9 2.4-.5 2.4 3.2 2.4 2.4 2.4 2.3 2.4 2.5 2.4-.5 2.4-6.2 2.4-4.9 2.4 3.3 2.4 2.4 2.4 9.8" stroke="#508642" fill="none" clip-path="url(#c9)"/><path d="M1238.1 833.5l2.4 0 2.4 0 2.4 0 2.4 0 2.4 0 2.4 0 2.4-2.8 2.4-11.5 2.4 .7 2.4 2.1 2.4-3.9 2.4-4 2.4-3.5 2.4 1.8 2.4 1.5 2.4 2.8 2.4 4.1 2.4-.6 2.4-5.4 2.4-5.2 2.4 2.1 2.5 2.5 2.4 3.6 2.4 1.3 2.4 2.3 2.4-4.5 2.4-5.5 2.4 0 2.4 2.2 2.4 1.3 2.4 3.4 2.4 2.5 2.4-1.7 2.4-6.8 2.4-3 2.4 2.9 2.4 3.2 2.4 2.3 2.4 2.4 2.4 1.3 2.4-6.9 2.4-5.6 2.4 2 2.4 3.5 2.4 1.7 2.4 4.3 2.4 1 2.4-3.5 2.4-5.8 2.4-2.6 2.4 4.4 2.4 1 2.4 3.1 2.4 2.9 2.4-.7 2.4-7.2 2.4-2 2.4 .4 2.4 4.1 2.4 2.3 2.4 2.9 2.4 .2 2.4-6.3 2.4-4.1 2.5 .9 2.4 6.4 2.4 4.6 2.4 .8 2.4 0 2.4 .8 2.4 .8 2.4-.4 2.4-.4 2.4 .1 2.4 .7 2.4-.2 2.4 .4 2.4-1.3 2.4-.2 2.4 1.2 2.4-1.5 2.4 1.9 2.4-1.7 2.4 .9 2.4 .7 2.4 0 2.4-.1 2.4-1.1 2.4-.7 2.4 .4 2.4 .9 2.4 0 2.4 .8 2.4 0 2.4 .1 2.4-.4 2.4-.5 2.4 .4 2.4-.1 2.4 .1 2.4-.3 2.4-.7 2.4 1.1 2.4 .3 2.4-.6 2.4 .7 2.5-1.5 2.4 1.4 2.4 .1 2.4-.7 2.4-.4 2.4 .9 2.4-1.9 2.4 2 2.4-1.3 2.4-.8 2.4 2.1 2.4-1.5 2.4-.7 2.4 2 2.4-1.4 2.4 .6 2.4 .3 2.4-.2 2.4-.9 2.4 .3 2.4 .3 2.4 .5 2.4-1.3 2.4 1.7 2.4-1.8 2.4 2.1 2.4-.5 2.4 0 2.4 .2 2.4-.6 2.4 .6 2.4-.5 2.4 .9 2.4-1.2 2.4-.9 2.4 .1 2.4-.2 2.4 1.6 2.4-1.4 2.4 1.1 2.4-1.1 2.4 1.4 2.4-.1 2.5 .5 2.4-.8 2.4 .5 2.4-1 2.4-.1 2.4 1.4 2.4-.8 2.4-.5 2.4-.8 2.4 .3 2.4-4.1 2.4-1.8 2.4 6.1 2.4-6.3 2.4-8.3 2.4 1.1 2.4 4 2.4 1.6 2.4 2.7 2.4 3.5 2.4-3.3 2.4-6.2 2.4-3.6 2.4 4.3 2.4 2.1 2.4 1.4 2.4 2.7 2.4 1.6 2.4-5.4 2.4-7 2.4 1.7 2.4 3.8 2.4 3.6 2.4 .5 2.4 4.9 2.4-5.1 2.4-6.6 2.4-.9 2.4 1.3 2.4 4.8 2.4 2.2 2.4 2.6 2.4-.8 2.5-6.7 2.4-4 2.4 3.2 2.4 1.3 2.4 2.4 2.4 3.6 2.4 1.4 2.4-6.2 2.4-4.6 2.4-1.4 2.4 3 2.4 3 2.4 2.8 2.4 2.5 2.4-1.2 2.4-7.3 2.4-2.8 2.4 1.8 2.4 4.3 2.4 10" stroke="#CCA300" fill="none" clip-path="url(#c9)"/><path d="M1238.1 833.5l2.4 0 2.4 0 2.4 0 2.4 0 2.4 0 2.4 0 2.4-2.8 2.4-12.7 2.4 .5 2.4 1.9 2.4-1.6 2.4-5.6 2.4-2.1 2.4 2.9 2.4 .3 2.4 4.1 2.4 1.8 2.4-.7 2.4-3.9 2.4-5.7 2.4 1.6 2.5 3.6 2.4 1.1 2.4 3.1 2.4 2.4 2.4-5.1 2.4-6.1 2.4 .9 2.4 3 2.4 .7 2.4 4.2 2.4 .8 2.4-1.8 2.4-7 2.4-1 2.4 1.1 2.4 4.2 2.4 2.1 2.4 3.3 2.4 .9 2.4-8.1 2.4-3.6 2.4 1.8 2.4 1.7 2.4 4.4 2.4 2 2.4 2.5 2.4-6.4 2.4-4.4 2.4-1.6 2.4 4 2.4 2 2.4 2.8 2.4 2.5 2.4-3.1 2.4-5 2.4-3.9 2.4 3.3 2.4 1.8 2.4 4.2 2.4 1.6 2.4 .3 2.4-5.4 2.4-6.3 2.5 3.7 2.4 4.6 2.4 4.2 2.4 1.6 2.4 .2 2.4 1.5 2.4 0 2.4 .4 2.4 .1 2.4-1.7 2.4 .1 2.4 1.7 2.4-.4 2.4-.8 2.4 0 2.4-.4 2.4 1 2.4-1.6 2.4 1.7 2.4-.3 2.4-1.5 2.4 1.1 2.4 1.2 2.4-1.5 2.4 1.3 2.4-.8 2.4 0 2.4 .5 2.4 .1 2.4-.3 2.4-1.3 2.4 1.3 2.4-1.4 2.4 1.9 2.4-1.7 2.4 1.4 2.4 .2 2.4-1.7 2.4 .1 2.4 .3 2.4 1 2.4 .6 2.5-2 2.4 1.4 2.4-.1 2.4-.3 2.4 .7 2.4-.5 2.4-.7 2.4-.3 2.4 1.8 2.4-2.2 2.4 .6 2.4 .5 2.4-.3 2.4 0 2.4-.1 2.4 1.2 2.4 .2 2.4-1.9 2.4 0 2.4 .6 2.4 1.5 2.4-1.6 2.4 .5 2.4-1.1 2.4 .6 2.4 .7 2.4 .3 2.4 0 2.4-1 2.4 1.2 2.4-.2 2.4-1.4 2.4 .9 2.4-.7 2.4 .2 2.4-.3 2.4 .2 2.4 .8 2.4-.9 2.4 1.5 2.4-.1 2.4-1.3 2.4 1.3 2.5-.1 2.4-.2 2.4-.8 2.4 1 2.4-1.6 2.4 .9 2.4 .2 2.4-1 2.4 .1 2.4 1.8 2.4-7.5 2.4 2 2.4 1.4 2.4-6.4 2.4-6.5 2.4 2.9 2.4 3.1 2.4 2.6 2.4 1.9 2.4 3.2 2.4-2.9 2.4-8.4 2.4-1 2.4 1.7 2.4 4.3 2.4 3.1 2.4 2.2 2.4 .5 2.4-8.5 2.4-3.2 2.4 1.3 2.4 3.4 2.4 2.2 2.4 2 2.4 3.3 2.4-4.7 2.4-6.8 2.4-.2 2.4 1.9 2.4 3.9 2.4 2.3 2.4 2.1 2.4-.8 2.5-7.2 2.4-2.7 2.4 3 2.4 1.7 2.4 3.1 2.4 1.8 2.4 1.4 2.4-4.8 2.4-5.5 2.4 1.1 2.4 2.8 2.4 2.2 2.4 3.1 2.4 2.3 2.4-4 2.4-6.5 2.4-2.3 2.4 4 2.4 1 2.4 11.5" stroke="#447EBC" fill="none" clip-path="url(#c9)"/><path d="M1238.1 833.5l2.4 0 2.4 0 2.4 0 2.4 0 2.4 0 2.4 0 2.4-3.1 2.4-13.6 2.4 2.1 2.4 2 2.4-.4 2.4-6.6 2.4-5.5 2.4 4.3 2.4 2.4 2.4 1.3 2.4 3.4 2.4 1.8 2.4-4.4 2.4-6.9 2.4-.6 2.5 2.6 2.4 4.3 2.4 2 2.4 1.5 2.4-1.3 2.4-6.6 2.4-3.3 2.4 2.4 2.4 2.8 2.4 2.6 2.4 4.1 2.4 1 2.4-7 2.4-5.4 2.4 2.1 2.4 2.2 2.4 2.8 2.4 1.9 2.4 2.8 2.4-4 2.4-4.9 2.4-.5 2.4 .9 2.4 2 2.4 3.1 2.4 3 2.4-.9 2.4-7.4 2.4-2 2.4 1.6 2.4 1.9 2.4 4 2.4 2.5 2.4 .4 2.4-5.6 2.4-5.1 2.4 .4 2.4 2.3 2.4 3.4 2.4 4.1 2.4 .5 2.4-3.5 2.4-6.6 2.5-.1 2.4 6.7 2.4 5 2.4 .6 2.4 1.6 2.4-.1 2.4-.7 2.4 1.2 2.4-.8 2.4-1.1 2.4 .7 2.4 1.3 2.4 .1 2.4-.3 2.4-.2 2.4-.1 2.4-1.4 2.4 1.6 2.4-1.5 2.4 1.2 2.4-.6 2.4 .7 2.4-.2 2.4 .3 2.4-.8 2.4 .6 2.4-1.2 2.4 2.1 2.4-1.4 2.4-.3 2.4 1.2 2.4-.5 2.4-.4 2.4-.7 2.4 2.1 2.4-.3 2.4 .1 2.4-1.1 2.4 .4 2.4 .2 2.4 .5 2.4-.8 2.5 .2 2.4-6 2.4-8.5 2.4 1.1 2.4-2.3 2.4 2.3 2.4-8.5 2.4 1.7 2.4 3.6 2.4-1.9 2.4 1.3 2.4-1.6 2.4 .2 2.4-.4 2.4 4.7 2.4-7.1 2.4 .4 2.4-1.9 2.4 3.2 2.4 1.5 2.4 1.9 2.4-3.6 2.4 .5 2.4-3.5 2.4 6.8 2.4-5.4 2.4 1.9 2.4 12.1 2.4 7 2.4-.8 2.4 .6 2.4 .4 2.4 .1 2.4-.1 2.4 .5 2.4-1.7 2.4 2.2 2.4-.9 2.4 .1 2.4-.7 2.4 .5 2.4-1.1 2.4-.1 2.5 2.2 2.4-2.1 2.4 1.8 2.4-.8 2.4-.8 2.4 2.1 2.4-1.1 2.4-1.2 2.4-.1 2.4 .8 2.4-5.9 2.4-1.2 2.4 4.2 2.4-2.9 2.4-4.8 2.4-4.7 2.4 4.3 2.4 3.3 2.4 1.4 2.4 1.7 2.4 .4 2.4-5.1 2.4-6 2.4 1.7 2.4 4.6 2.4 1.5 2.4 3.7 2.4 1.7 2.4-5.8 2.4-5.8 2.4-.5 2.4 2.1 2.4 4.4 2.4 2.9 2.4 2.4 2.4-1.1 2.4-7.2 2.4-4.1 2.4 2.2 2.4 3.3 2.4 1.6 2.4 3.4 2.4 3.1 2.5-7.2 2.4-4.7 2.4-.4 2.4 3.9 2.4 1.8 2.4 1.9 2.4 3.9 2.4-4.6 2.4-4 2.4-3.1 2.4 2.2 2.4 3.7 2.4 1.9 2.4 1.1 2.4 1.3 2.4-4.6 2.4-7.6 2.4 3.9 2.4 2.1 2.4 10.5" stroke="#C15C17" fill="none" clip-path="url(#c9)"/><path d="M1238.1 832.9l2.4 0 2.4 0 2.4 0 2.4 0 2.4 0 2.4 0 2.4-2.8 2.4-12.1 2.4 .2 2.4 2.3 2.4-1.5 2.4-6 2.4-3.8 2.4 2.8 2.4 2.2 2.4 2.5 2.4 3.2 2.4 .8 2.4-6 2.4-5.6 2.4 1.7 2.5 2.8 2.4 2.6 2.4 2.6 2.4 1.9 2.4-3.7 2.4-6 2.4-1.1 2.4 2.2 2.4 2.8 2.4 3 2.4 2.1 2.4-1.4 2.4-5.9 2.4-3.6 2.4 2.7 2.4 2.6 2.4 2.6 2.4 2.4 2.4 1.4 2.4-6.1 2.4-5.5 2.4 1.5 2.4 2.7 2.4 2.3 2.4 3 2.4 2.4 2.4-4.1 2.4-5.9 2.4-1.4 2.4 2.7 2.4 2.4 2.4 2.6 2.4 2.8 2.4-.8 2.4-5.9 2.4-4.5 2.4 2.2 2.4 2.6 2.4 2.9 2.4 2.7 2.4 1.3 2.4-5.3 2.4-5.6 2.5 1.1 2.4 6 2.4 4.4 2.4 1.9 2.4 .2 2.4 .2 2.4 0 2.4 0 2.4-.3 2.4 .2 2.4-.1 2.4 .3 2.4 .2 2.4-.3 2.4-.1 2.4 0 2.4-.1 2.4 .4 2.4-.1 2.4-.1 2.4-.1 2.4 .4 2.4-.1 2.4-.7 2.4 .5 2.4 .1 2.4-.2 2.4 .2 2.4 0 2.4 0 2.4-.3 2.4 .3 2.4 0 2.4 .1 2.4-.3 2.4 .2 2.4-.2 2.4 .1 2.4-.1 2.4 .3 2.4-.4 2.4 .3 2.5-.1 2.4 .1 2.4 0 2.4 0 2.4 .2 2.4-.5 2.4-.1 2.4 .6 2.4 0 2.4-.3 2.4 .1 2.4-.2 2.4-.2 2.4 .4 2.4-.1 2.4-.1 2.4 0 2.4 .1 2.4-.3 2.4 .5 2.4-.2 2.4-.2 2.4 .3 2.4 0 2.4-.2 2.4 .3 2.4-.2 2.4 .1 2.4-.1 2.4-.2 2.4 .1 2.4 .2 2.4 .3 2.4-.3 2.4-.1 2.4 0 2.4-.3 2.4 .2 2.4 0 2.4 .3 2.4 .1 2.4-.7 2.4 .3 2.5 .5 2.4-.6 2.4 .6 2.4-.3 2.4-.1 2.4-.2 2.4 0 2.4-.2 2.4 .1 2.4 .5 2.4-5.9 2.4-.4 2.4 3.7 2.4-5.1 2.4-6.4 2.4-.2 2.4 3.2 2.4 2.7 2.4 2.3 2.4 2.8 2.4-2.1 2.4-6 2.4-3.7 2.4 2.3 2.4 3 2.4 3 2.4 2.6 2.4 1.3 2.4-6.3 2.4-6.1 2.4 1.6 2.4 2.6 2.4 3 2.4 2.9 2.4 2.6 2.4-3.7 2.4-6.3 2.4-1.8 2.4 2.3 2.4 3.2 2.4 2.4 2.4 2.8 2.4-.6 2.5-5.4 2.4-5.2 2.4 2.4 2.4 2.2 2.4 2.6 2.4 2.8 2.4 1.9 2.4-4.4 2.4-6 2.4-.7 2.4 2.7 2.4 2.8 2.4 2.2 2.4 2.7 2.4-1.1 2.4-6.4 2.4-3.6 2.4 2.6 2.4 2.7 2.4 10.6" stroke="#890F02" fill="none" clip-path="url(#c9)"/><rect x="1213" y="870" width="14" height="4" rx="1" fill="#7EB26D"/><text x="1235.00" y="875.00" font-size="12" fill="#ccccdc" text-anchor="start" textLength="19.16" lengthAdjust="spacingAndGlyphs">sda</text><text x="1260.69" y="875.00" font-size="12" fill="#ccccdc" text-anchor="start" textLength="75.96" lengthAdjust="spacingAndGlyphs">Max: 0.0400%</text><text x="1343.19" y="875.00" font-size="12" fill="#ccccdc" text-anchor="start" textLength="87.21" lengthAdjust="spacingAndGlyphs">Avg: 0.000188%</text><rect x="1440" y="870" width="14" height="4" rx="1" fill="#EAB839"/><text x="1462.00" y="875.00" font-size="12" fill="#ccccdc" text-anchor="start" textLength="19.03" lengthAdjust="spacingAndGlyphs">sdb</text><text x="1487.52" y="875.00" font-size="12" fill="#ccccdc" text-anchor="start" textLength="62.32" lengthAdjust="spacingAndGlyphs">Max: 15.4%</text><text x="1556.34" y="875.00" font-size="12" fill="#ccccdc" text-anchor="start" textLength="60.36" lengthAdjust="spacingAndGlyphs">Avg: 6.17%</text><rect x="1213" y="888" width="14" height="4" rx="1" fill="#6ED0E0"/><text x="1235.00" y="893.00" font-size="12" fill="#ccccdc" text-anchor="start" textLength="18.35" lengthAdjust="spacingAndGlyphs">sdc</text><text x="1259.84" y="893.00" font-size="12" fill="#ccccdc" text-anchor="start" textLength="62.27" lengthAdjust="spacingAndGlyphs">Max: 17.8%</text><text x="1328.59" y="893.00" font-size="12" fill="#ccccdc" text-anchor="start" textLength="60.31" lengthAdjust="spacingAndGlyphs">Avg: 6.32%</text><rect x="1399" y="888" width="14" height="4" rx="1" fill="#EF843C"/><text x="1421.10" y="893.00" font-size="12" fill="#ccccdc" text-anchor="start" textLength="18.92" lengthAdjust="spacingAndGlyphs">sdd</text><text x="1446.47" y="893.00" font-size="12" fill="#ccccdc" text-anchor="start" textLength="61.96" lengthAdjust="spacingAndGlyphs">Max: 15.2%</text><text x="1514.89" y="893.00" font-size="12" fill="#ccccdc" text-anchor="start" textLength="60.01" lengthAdjust="spacingAndGlyphs">Avg: 6.98%</text><rect x="1585" y="888" width="14" height="4" rx="1" fill="#E24D42"/><text x="1607.10" y="893.00" font-size="12" fill="#ccccdc" text-anchor="start" textLength="18.92" lengthAdjust="spacingAndGlyphs">sde</text><text x="1632.47" y="893.00" font-size="12" fill="#ccccdc" text-anchor="start" textLength="61.96" lengthAdjust="spacingAndGlyphs">Max: 15.8%</text><text x="1700.89" y="893.00" font-size="12" fill="#ccccdc" text-anchor="start" textLength="60.01" lengthAdjust="spacingAndGlyphs">Avg: 7.00%</text><rect x="1213" y="906" width="14" height="4" rx="1" fill="#1F78C1"/><text x="1235.00" y="911.00" font-size="12" fill="#ccccdc" text-anchor="start" textLength="15.74" lengthAdjust="spacingAndGlyphs">sdf</text><text x="1257.23" y="911.00" font-size="12" fill="#ccccdc" text-anchor="start" textLength="62.32" lengthAdjust="spacingAndGlyphs">Max: 20.4%</text><text x="1326.04" y="911.00" font-size="12" fill="#ccccdc" text-anchor="start" textLength="60.36" lengthAdjust="spacingAndGlyphs">Avg: 6.84%</text><rect x="1397" y="906" width="14" height="4" rx="1" fill="#BA43A9"/><text x="1419.10" y="911.00" font-size="12" fill="#ccccdc" text-anchor="start" textLength="18.94" lengthAdjust="spacingAndGlyphs">sdg</text><text x="1444.51" y="911.00" font-size="12" fill="#ccccdc" text-anchor="start" textLength="62.04" lengthAdjust="spacingAndGlyphs">Max: 12.8%</text><text x="1513.01" y="911.00" font-size="12" fill="#ccccdc" text-anchor="start" textLength="60.09" lengthAdjust="spacingAndGlyphs">Avg: 5.94%</text><rect x="1583" y="906" width="14" height="4" rx="1" fill="#705DA0"/><text x="1605.10" y="911.00" font-size="12" fill="#ccccdc" text-anchor="start" textLength="18.87" lengthAdjust="spacingAndGlyphs">sdh</text><text x="1630.41" y="911.00" font-size="12" fill="#ccccdc" text-anchor="start" textLength="61.80" lengthAdjust="spacingAndGlyphs">Max: 18.6%</text><text x="1698.64" y="911.00" font-size="12" fill="#ccccdc" text-anchor="start" textLength="59.86" lengthAdjust="spacingAndGlyphs">Avg: 6.84%</text><rect x="1213" y="924" width="14" height="4" rx="1" fill="#508642"/><text x="1235.00" y="929.00" font-size="12" fill="#ccccdc" text-anchor="start" textLength="15.07" lengthAdjust="spacingAndGlyphs">sdi</text><text x="1256.56" y="929.00" font-size="12" fill="#ccccdc" text-anchor="start" textLength="62.26" lengthAdjust="spacingAndGlyphs">Max: 16.0%</text><text x="1325.30" y="929.00" font-size="12" fill="#ccccdc" text-anchor="start" textLength="60.30" lengthAdjust="spacingAndGlyphs">Avg: 6.51%</text><rect x="1395" y="924" width="14" height="4" rx="1" fill="#CCA300"/><text x="1417.20" y="929.00" font-size="12" fill="#ccccdc" text-anchor="start" textLength="15.08" lengthAdjust="spacingAndGlyphs">sdj</text><text x="1438.77" y="929.00" font-size="12" fill="#ccccdc" text-anchor="start" textLength="62.30" lengthAdjust="spacingAndGlyphs">Max: 12.3%</text><text x="1507.56" y="929.00" font-size="12" fill="#ccccdc" text-anchor="start" textLength="60.34" lengthAdjust="spacingAndGlyphs">Avg: 5.93%</text><rect x="1578" y="924" width="14" height="4" rx="1" fill="#447EBC"/><text x="1599.80" y="929.00" font-size="12" fill="#ccccdc" text-anchor="start" textLength="18.28" lengthAdjust="spacingAndGlyphs">sdk</text><text x="1624.54" y="929.00" font-size="12" fill="#ccccdc" text-anchor="start" textLength="62.02" lengthAdjust="spacingAndGlyphs">Max: 12.6%</text><text x="1693.03" y="929.00" font-size="12" fill="#ccccdc" text-anchor="start" textLength="60.07" lengthAdjust="spacingAndGlyphs">Avg: 6.00%</text><rect x="1213" y="942" width="14" height="4" rx="1" fill="#C15C17"/><text x="1235.00" y="947.00" font-size="12" fill="#ccccdc" text-anchor="start" textLength="15.08" lengthAdjust="spacingAndGlyphs">sdl</text><text x="1256.57" y="947.00" font-size="12" fill="#ccccdc" text-anchor="start" textLength="62.30" lengthAdjust="spacingAndGlyphs">Max: 16.3%</text><text x="1325.36" y="947.00" font-size="12" fill="#ccccdc" text-anchor="start" textLength="60.34" lengthAdjust="spacingAndGlyphs">Avg: 7.17%</text><rect x="1395" y="942" width="14" height="4" rx="1" fill="#890F02"/><text x="1417.20" y="947.00" font-size="12" fill="#ccccdc" text-anchor="start" textLength="29.40" lengthAdjust="spacingAndGlyphs">Mean</text><text x="1453.06" y="947.00" font-size="12" fill="#ccccdc" text-anchor="start" textLength="62.06" lengthAdjust="spacingAndGlyphs">Max: 12.5%</text><text x="1521.59" y="947.00" font-size="12" fill="#ccccdc" text-anchor="start" textLength="60.11" lengthAdjust="spacingAndGlyphs">Avg: 6.52%</text></svg></body></html>
